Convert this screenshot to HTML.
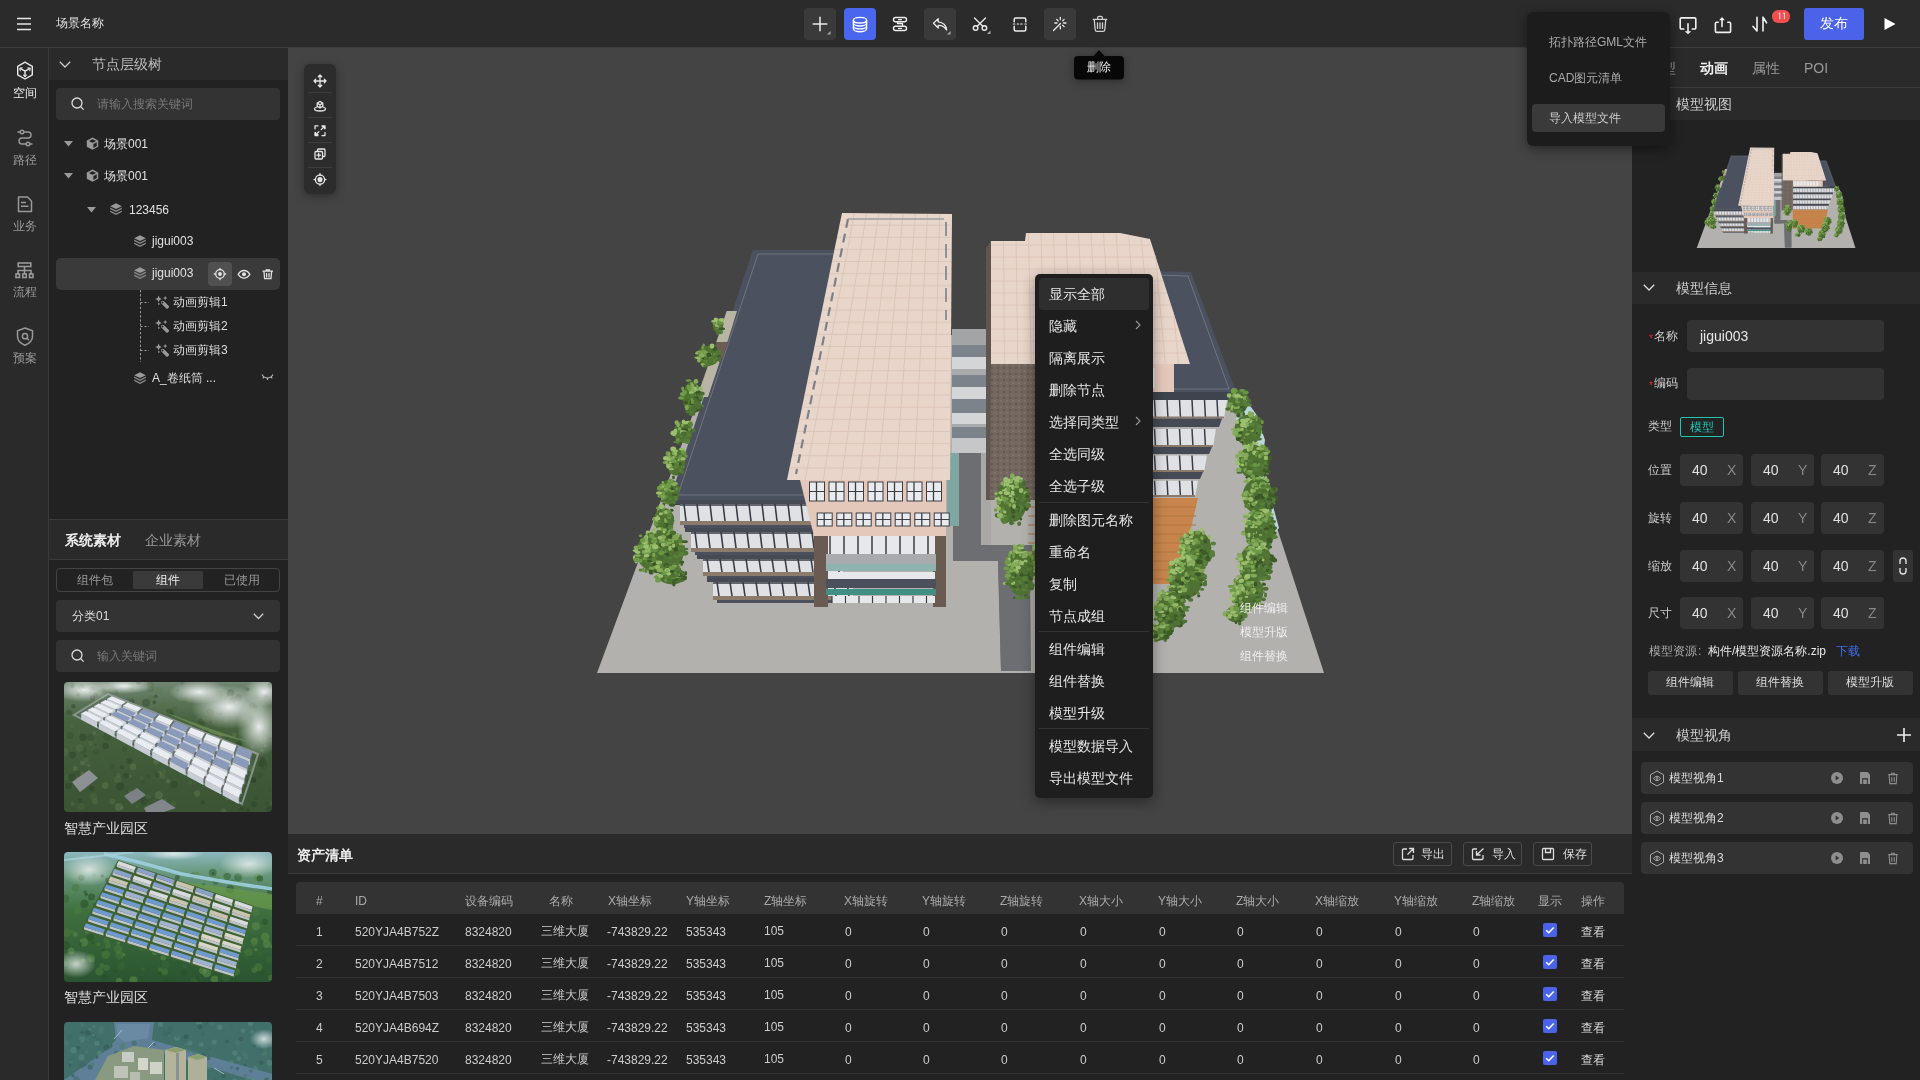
<!DOCTYPE html>
<html><head><meta charset="utf-8">
<style>
*{box-sizing:border-box;margin:0;padding:0}
html,body{width:1920px;height:1080px;overflow:hidden;background:#222;font-family:"Liberation Sans",sans-serif;color:#ddd}
.a{position:absolute}
svg{display:block}
#top{left:0;top:0;width:1920px;height:48px;background:#2b2b2b;border-bottom:1px solid #3d3d3d}
#side{left:0;top:48px;width:49px;height:1032px;background:#2a2a2a;border-right:1px solid #3a3a3a}
#tree{left:49px;top:48px;width:239px;height:1032px;background:#222}
#vp{left:288px;top:48px;width:1344px;height:785px;background:#444}
#right{left:1632px;top:48px;width:288px;height:1032px;background:#222}
#bottom{left:288px;top:833px;width:1344px;height:247px;background:#222}
.tb{top:8px;width:32px;height:32px;border-radius:4px}
.t{position:absolute;white-space:nowrap;line-height:1}
</style></head><body><div id="root" style="position:absolute;left:0;top:0;width:1920px;height:1080px;will-change:transform">
<div id="top" class="a">
<svg class="a" style="left:16px;top:16px" width="16" height="16" viewBox="0 0 16 16"><path d="M1 2.5h14M1 8h14M1 13.5h14" stroke="#e6e6e6" stroke-width="1.6"/></svg>
<div class="t" style="left:56px;top:17px;font-size:12px;color:#e0e0e0">场景名称</div>
<div class="a tb" style="left:804px;background:#3a3a3a"></div>
<div class="a tb" style="left:844px;background:#4a66ee"></div>
<div class="a tb" style="left:924px;background:#3a3a3a"></div>
<div class="a tb" style="left:1044px;background:#3a3a3a"></div>
<svg class="a" style="left:804px;top:8px" width="320" height="32" viewBox="0 0 320 32">
 <g fill="none" stroke="#ececec" stroke-width="1.5" stroke-linecap="round" stroke-linejoin="round">
  <path d="M16 9.2v13.6M9.2 16h13.6"/>
  <g stroke="#fff" stroke-width="1.4"><ellipse cx="56" cy="12.2" rx="6.6" ry="2.8"/><path d="M49.4 12.2v8.6c0 1.6 3 2.9 6.6 2.9s6.6-1.3 6.6-2.9v-8.6M49.4 15.1c0 1.6 3 2.9 6.6 2.9s6.6-1.3 6.6-2.9M49.4 18c0 1.6 3 2.9 6.6 2.9s6.6-1.3 6.6-2.9"/></g>
  <rect x="89.5" y="9.5" width="13" height="4.3" rx="2" stroke-width="1.4"/><rect x="89.5" y="18.2" width="13" height="4.3" rx="2" stroke-width="1.4"/><path d="M94.5 11.6h3M94.5 20.4h3" stroke-width="1.2"/><path d="M93.5 13.8v1.7h5v2.7" stroke-width="1.3"/>
  <path d="M134.2 10.6l-4.7 4.7 4.7 4.7v-2.6c3.2-.3 6 1 8.4 4.6-.4-4.6-3.3-7.6-8.4-8.2z" stroke-width="1.3"/>
  <circle cx="171.6" cy="20" r="2.3" stroke-width="1.4"/><circle cx="180.4" cy="20" r="2.3" stroke-width="1.4"/><path d="M173.2 18.3L181.5 10M178.8 18.3L170.5 10" stroke-width="1.3"/>
  <path d="M210.2 13.8v-2.3a1.5 1.5 0 0 1 1.5-1.5h8.6a1.5 1.5 0 0 1 1.5 1.5v2.3M210.2 18.2v3.3a1.5 1.5 0 0 0 1.5 1.5h8.6a1.5 1.5 0 0 0 1.5-1.5v-3.3" stroke-width="1.5"/>
  <path d="M209.3 16h1.6M213.2 16h1.5M216.7 16h1.5M220.8 16h1.6" stroke-width="1.2"/>
  <path d="M249.5 22.5l7-7M256.3 9.3v2.3M256.3 18.4v2.4M250.8 15h2.2M259.5 15h2.4M252.7 11.4l1.5 1.5M260.1 11.4l-1.5 1.5M260.1 18.6l-1.5-1.5" stroke-width="1.3"/>
  <path d="M289.2 11.3h13.6M298.3 10.6v-1a1.3 1.3 0 0 0-1.3-1.3h-2a1.3 1.3 0 0 0-1.3 1.3v1M290.3 12.2l.9 9.6a1.8 1.8 0 0 0 1.8 1.6h6a1.8 1.8 0 0 0 1.8-1.6l.9-9.6M293.5 14.8v5.6M296 14.8v5.6M298.5 14.8v5.6" stroke="#cfcfcf" stroke-width="1.3"/>
 </g>
 <g fill="#aaa"><path d="M26.5 23v3.5H23z"/><path d="M146.5 23v3.5H143z"/><path d="M186.5 22.5V26H183z"/></g>
</svg>

<svg class="a" style="left:1676px;top:14px" width="120" height="24" viewBox="0 0 120 24">
 <g fill="none" stroke="#f0f0f0" stroke-width="1.6" stroke-linecap="round" stroke-linejoin="round">
  <path d="M7.8 15H5.4a1.2 1.2 0 0 1-1.2-1.2V5.1a1.2 1.2 0 0 1 1.2-1.2h13.2a1.2 1.2 0 0 1 1.2 1.2v8.7A1.2 1.2 0 0 1 18.6 15h-2.4M12 9.8v8.5"/>
  <path d="M42.2 8.3h-1.6a1.2 1.2 0 0 0-1.2 1.2v7.7a1.2 1.2 0 0 0 1.2 1.2h12.8a1.2 1.2 0 0 0 1.2-1.2V9.5a1.2 1.2 0 0 0-1.2-1.2h-1.6M46 12.6V5.2"/>
  <path d="M81 3.4v13.6l-4-4.6M87 3.2v13.8M87 3.2l3.6 5.6"/>
 </g>
 <path d="M8.7 17.2h6.6L12 20.3z" fill="#f0f0f0"/>
 <path d="M43.2 6.2L46 2.9l2.8 3.3z" fill="#f0f0f0"/>
</svg>
<div class="a" style="left:1772px;top:10px;width:18px;height:12.5px;border-radius:6.25px;background:#f04f4f"></div>
<svg class="a" style="left:1772px;top:10px" width="18" height="13" viewBox="0 0 18 13"><path d="M6.6 3.5l1.2-.6v6.3M11.2 3.5l1.2-.6v6.3" fill="none" stroke="#fff" stroke-width="0.9" opacity="0.9"/></svg>
<div class="a" style="left:1804px;top:8px;width:60px;height:32px;border-radius:3px;background:#4a63e8"></div>
<div class="t" style="left:1820px;top:16px;font-size:14px;color:#fff">发布</div>
<svg class="a" style="left:1882px;top:16px" width="16" height="16" viewBox="0 0 16 16"><path d="M2.5 2l11 6-11 6z" fill="#fff"/></svg>
</div>
<div id="side" class="a">
<svg class="a" style="left:16px;top:13px" width="18" height="20" viewBox="0 0 18 20"><g fill="none" stroke="#e8e8e8" stroke-width="1.4" stroke-linejoin="round" stroke-linecap="round"><path d="M9 1.2l7.3 4.2v8.4L9 18 1.7 13.8V5.4z"/><path d="M9 10.2L4.3 7.5M9 10.2l4.7-2.7M9 10.2v5.2"/><path d="M4.2 9.6L3.9 7.3l2.2-.4M13.8 9.6l.3-2.3-2.2-.4M7.6 14.2L9 15.6l1.4-1.4" stroke-width="1.1"/></g></svg>
<div class="t" style="left:13px;top:39px;font-size:12px;color:#eee">空间</div>
<svg class="a" style="left:16px;top:81px" width="18" height="18" viewBox="0 0 18 18"><g fill="none" stroke="#999" stroke-width="1.4"><circle cx="6" cy="3" r="1.8"/><circle cx="12" cy="15" r="1.8"/><path d="M1.5 3h2.7M7.8 3H12a3 3 0 0 1 0 6H6a3 3 0 0 0 0 6h4.2M13.8 15h2.7"/></g></svg>
<div class="t" style="left:13px;top:106px;font-size:12px;color:#999">路径</div>
<svg class="a" style="left:17px;top:148px" width="16" height="17" viewBox="0 0 16 17"><g fill="none" stroke="#999" stroke-width="1.5" stroke-linejoin="round"><path d="M1.5 1h9l4 4v10.5h-13z"/><path d="M4 6.6h5M4 10.3h7.5"/></g></svg>
<div class="t" style="left:13px;top:172px;font-size:12px;color:#999">业务</div>
<svg class="a" style="left:15px;top:214px" width="19" height="17" viewBox="0 0 19 17"><g fill="none" stroke="#999" stroke-width="1.6"><rect x="3.2" y="1" width="12.6" height="3.5"/><path d="M9.5 4.5v4M3 12V8.5h13V12M9.5 8.5V12"/><rect x="1" y="12" width="3.5" height="3.5"/><rect x="7.75" y="12" width="3.5" height="3.5"/><rect x="14.5" y="12" width="3.5" height="3.5"/></g></svg>
<div class="t" style="left:13px;top:238px;font-size:12px;color:#999">流程</div>
<svg class="a" style="left:16px;top:279px" width="18" height="19" viewBox="0 0 18 19"><g fill="none" stroke="#999" stroke-width="1.5"><path d="M9 1l7.5 2.8v5.5c0 4.5-3.2 7.3-7.5 9-4.3-1.7-7.5-4.5-7.5-9V3.8z"/><circle cx="9" cy="9.2" r="2.6"/><path d="M11 11.2l2 2"/></g></svg>
<div class="t" style="left:13px;top:304px;font-size:12px;color:#999">预案</div>
</div>
<div id="tree" class="a"><div class="a" style="left:0;top:0;width:239px;height:32px;background:#2a2a2a"></div>
<svg class="a" style="left:10px;top:13px" width="12" height="7" viewBox="0 0 12 7"><path d="M0.8 0.8L6 6l5.2-5.2" fill="none" stroke="#ccc" stroke-width="1.3"/></svg>
<div class="t" style="left:43px;top:9px;font-size:14px;color:#bbb">节点层级树</div>
<div class="a" style="left:7px;top:40px;width:224px;height:32px;background:#333;border-radius:4px"></div>
<svg class="a" style="left:22px;top:49px" width="14" height="14" viewBox="0 0 14 14"><circle cx="6" cy="6" r="5" fill="none" stroke="#ddd" stroke-width="1.3"/><path d="M9.6 9.6l3 3" stroke="#ddd" stroke-width="1.3"/></svg>
<div class="t" style="left:48px;top:50px;font-size:12px;color:#777">请输入搜索关键词</div>
<svg class="a" style="left:15px;top:93px" width="9" height="6" viewBox="0 0 9 6"><path d="M0 0h9L4.5 5.5z" fill="#9a9a9a"/></svg>
<svg class="a" style="left:37px;top:89px" width="13" height="13" viewBox="0 0 13 13"><path d="M6.5 0.5l5.7 3v6.2l-5.7 3-5.7-3V3.5z" fill="#9a9a9a"/><path d="M6.5 2.2l3.6 1.7-3.6 1.8-3.6-1.8z" fill="#222"/><path d="M7.4 7.1l3.4-1.8v3.7L7.4 10.9z" fill="#222"/></svg>
<div class="t" style="left:55px;top:90px;font-size:12px;color:#e0e0e0">场景001</div>
<svg class="a" style="left:15px;top:125px" width="9" height="6" viewBox="0 0 9 6"><path d="M0 0h9L4.5 5.5z" fill="#9a9a9a"/></svg>
<svg class="a" style="left:37px;top:121px" width="13" height="13" viewBox="0 0 13 13"><path d="M6.5 0.5l5.7 3v6.2l-5.7 3-5.7-3V3.5z" fill="#9a9a9a"/><path d="M6.5 2.2l3.6 1.7-3.6 1.8-3.6-1.8z" fill="#222"/><path d="M7.4 7.1l3.4-1.8v3.7L7.4 10.9z" fill="#222"/></svg>
<div class="t" style="left:55px;top:122px;font-size:12px;color:#e0e0e0">场景001</div>
<svg class="a" style="left:38px;top:159px" width="9" height="6" viewBox="0 0 9 6"><path d="M0 0h9L4.5 5.5z" fill="#9a9a9a"/></svg>
<svg class="a" style="left:61px;top:155px" width="12" height="12" viewBox="0 0 12 12"><path d="M6 0.3l5.8 2.9L6 6.1 0.2 3.2z" fill="#9a9a9a"/><path d="M0.2 4.6v1.5L6 9l5.8-2.9V4.6L6 7.5z" fill="#8a8a8a"/><path d="M0.2 7.5V9L6 11.9 11.8 9V7.5L6 10.4z" fill="#8a8a8a"/></svg>
<div class="t" style="left:80px;top:156px;font-size:12px;color:#e0e0e0">123456</div>
<svg class="a" style="left:85px;top:187px" width="12" height="12" viewBox="0 0 12 12"><path d="M6 0.3l5.8 2.9L6 6.1 0.2 3.2z" fill="#9a9a9a"/><path d="M0.2 4.6v1.5L6 9l5.8-2.9V4.6L6 7.5z" fill="#8a8a8a"/><path d="M0.2 7.5V9L6 11.9 11.8 9V7.5L6 10.4z" fill="#8a8a8a"/></svg>
<div class="t" style="left:103px;top:187px;font-size:12px;color:#e0e0e0">jigui003</div>
<div class="a" style="left:7px;top:210px;width:224px;height:32px;background:#3a3a3a;border-radius:5px"></div>
<div class="a" style="left:159px;top:214px;width:24px;height:24px;background:#505050;border-radius:4px"></div>
<svg class="a" style="left:85px;top:219px" width="12" height="12" viewBox="0 0 12 12"><path d="M6 0.3l5.8 2.9L6 6.1 0.2 3.2z" fill="#9a9a9a"/><path d="M0.2 4.6v1.5L6 9l5.8-2.9V4.6L6 7.5z" fill="#8a8a8a"/><path d="M0.2 7.5V9L6 11.9 11.8 9V7.5L6 10.4z" fill="#8a8a8a"/></svg>
<div class="t" style="left:103px;top:219px;font-size:12px;color:#e0e0e0">jigui003</div>
<svg class="a" style="left:164px;top:218px" width="80" height="16" viewBox="0 0 80 16"><g fill="none" stroke="#e0e0e0" stroke-width="1.3" stroke-linecap="round"><circle cx="7" cy="8" r="4.3"/><path d="M7 3.7V2.3M11.3 8h1.4M7 12.3v1.4M2.7 8H1.3"/><path d="M25.2 8.3c1.6-2.6 3.5-3.8 5.8-3.8s4.2 1.2 5.8 3.8c-1.6 2.6-3.5 3.8-5.8 3.8s-4.2-1.2-5.8-3.8z"/><path d="M50 5.2h9.5M53.2 5V3.8h3.2V5M51 5.5l.6 7.2h6.4l.6-7.2M53.6 7.5v3.5M56 7.5v3.5"/></g><circle cx="7" cy="8" r="1.9" fill="#e8e8e8"/><circle cx="31" cy="8.3" r="2" fill="#e0e0e0"/></svg>
<svg class="a" style="left:91px;top:242px" width="10" height="72" viewBox="0 0 10 72"><path d="M0.5 0V72" stroke="#9a9a9a" stroke-width="1" stroke-dasharray="2.3 1.9"/><path d="M0.5 12.5H9M0.5 36.5H9M0.5 60.5H9" stroke="#9a9a9a" stroke-width="1" stroke-dasharray="2 2"/></svg>



<svg class="a" style="left:106px;top:247px" width="15" height="15" viewBox="0 0 15 15"><g fill="#9a9a9a"><path d="M3.6 0.4l1 2.5 2.5 1-2.5 1-1 2.5-1-2.5-2.5-1 2.5-1z"/><path d="M10.2 0.8l.65 1.6 1.6.65-1.6.65-.65 1.6-.65-1.6-1.6-.65 1.6-.65z"/><rect x="3" y="8.2" width="1.5" height="1.5"/><path d="M6.2 6.6a2.1 2.1 0 0 1 3-.1l4.6 4.6a1 1 0 0 1 0 1.4l-1 1a1 1 0 0 1-1.4 0L6.8 8.9a1.6 1.6 0 0 1-.6-2.3z"/></g><circle cx="7.5" cy="7.5" r="0.9" fill="#222"/></svg>
<div class="t" style="left:124px;top:248px;font-size:12px;color:#ddd">动画剪辑1</div>
<svg class="a" style="left:106px;top:271px" width="15" height="15" viewBox="0 0 15 15"><g fill="#9a9a9a"><path d="M3.6 0.4l1 2.5 2.5 1-2.5 1-1 2.5-1-2.5-2.5-1 2.5-1z"/><path d="M10.2 0.8l.65 1.6 1.6.65-1.6.65-.65 1.6-.65-1.6-1.6-.65 1.6-.65z"/><rect x="3" y="8.2" width="1.5" height="1.5"/><path d="M6.2 6.6a2.1 2.1 0 0 1 3-.1l4.6 4.6a1 1 0 0 1 0 1.4l-1 1a1 1 0 0 1-1.4 0L6.8 8.9a1.6 1.6 0 0 1-.6-2.3z"/></g><circle cx="7.5" cy="7.5" r="0.9" fill="#222"/></svg>
<div class="t" style="left:124px;top:272px;font-size:12px;color:#ddd">动画剪辑2</div>
<svg class="a" style="left:106px;top:295px" width="15" height="15" viewBox="0 0 15 15"><g fill="#9a9a9a"><path d="M3.6 0.4l1 2.5 2.5 1-2.5 1-1 2.5-1-2.5-2.5-1 2.5-1z"/><path d="M10.2 0.8l.65 1.6 1.6.65-1.6.65-.65 1.6-.65-1.6-1.6-.65 1.6-.65z"/><rect x="3" y="8.2" width="1.5" height="1.5"/><path d="M6.2 6.6a2.1 2.1 0 0 1 3-.1l4.6 4.6a1 1 0 0 1 0 1.4l-1 1a1 1 0 0 1-1.4 0L6.8 8.9a1.6 1.6 0 0 1-.6-2.3z"/></g><circle cx="7.5" cy="7.5" r="0.9" fill="#222"/></svg>
<div class="t" style="left:124px;top:296px;font-size:12px;color:#ddd">动画剪辑3</div>
<svg class="a" style="left:85px;top:324px" width="12" height="12" viewBox="0 0 12 12"><path d="M6 0.3l5.8 2.9L6 6.1 0.2 3.2z" fill="#9a9a9a"/><path d="M0.2 4.6v1.5L6 9l5.8-2.9V4.6L6 7.5z" fill="#8a8a8a"/><path d="M0.2 7.5V9L6 11.9 11.8 9V7.5L6 10.4z" fill="#8a8a8a"/></svg>
<div class="t" style="left:103px;top:324px;font-size:12px;color:#ddd">A_卷纸筒 ...</div>
<svg class="a" style="left:212px;top:325px" width="13" height="8" viewBox="0 0 13 8"><g fill="none" stroke="#bbb" stroke-width="1.1"><path d="M1 1.5c1.5 2.5 3.3 3.5 5.5 3.5s4-1 5.5-3.5M3 3.8L1.8 5.5M6.5 5v2M10 3.8l1.2 1.7"/></g></svg>
<div class="a" style="left:0;top:471px;width:239px;height:1px;background:#3a3a3a"></div>
<div class="a" style="left:0;top:472px;width:239px;height:39px;background:#2a2a2a"></div>
<div class="t" style="left:16px;top:485px;font-size:14px;color:#eeeeee;font-weight:bold">系统素材</div>
<div class="t" style="left:96px;top:485px;font-size:14px;color:#999">企业素材</div>
<div class="a" style="left:0;top:511px;width:239px;height:1px;background:#3a3a3a"></div>
<div class="a" style="left:7px;top:520px;width:224px;height:24px;border:1px solid #444;border-radius:4px"></div>
<div class="a" style="left:84px;top:523px;width:70px;height:18px;background:#3a3a3a;border-radius:2px"></div>
<div class="t" style="left:28px;top:526px;font-size:12px;color:#999">组件包</div>
<div class="t" style="left:107px;top:526px;font-size:12px;color:#eee">组件</div>
<div class="t" style="left:175px;top:526px;font-size:12px;color:#999">已使用</div>
<div class="a" style="left:7px;top:552px;width:224px;height:32px;background:#333;border-radius:4px"></div>
<div class="t" style="left:23px;top:562px;font-size:12px;color:#ddd">分类01</div>
<svg class="a" style="left:204px;top:565px" width="11" height="7" viewBox="0 0 11 7"><path d="M0.8 0.8L5.5 5.5l4.7-4.7" fill="none" stroke="#ccc" stroke-width="1.3"/></svg>
<div class="a" style="left:7px;top:592px;width:224px;height:32px;background:#333;border-radius:4px"></div>
<svg class="a" style="left:22px;top:601px" width="14" height="14" viewBox="0 0 14 14"><circle cx="6" cy="6" r="5" fill="none" stroke="#ddd" stroke-width="1.3"/><path d="M9.6 9.6l3 3" stroke="#ddd" stroke-width="1.3"/></svg>
<div class="t" style="left:48px;top:602px;font-size:12px;color:#777">输入关键词</div>
<div class="a img0" style="left:15px;top:634px;width:208px;height:130px;border-radius:4px;overflow:hidden"><svg width="208" height="130" viewBox="0 0 208 130"><defs><radialGradient id="cl1" cx="0.5" cy="0.5" r="0.5"><stop offset="0" stop-color="#f2f4f5" stop-opacity="0.95"/><stop offset="1" stop-color="#e8ecee" stop-opacity="0"/></radialGradient><linearGradient id="g1" x1="0" y1="0" x2="0" y2="1"><stop offset="0" stop-color="#6f8672"/><stop offset="0.3" stop-color="#46623e"/><stop offset="1" stop-color="#3a5434"/></linearGradient></defs><rect width="208" height="130" fill="url(#g1)"/><circle cx="67.4" cy="19.6" r="3.1" fill="#2c4228" opacity="0.5"/><circle cx="170.8" cy="12.2" r="3.0" fill="#5f7a50" opacity="0.5"/><circle cx="44.7" cy="11.2" r="2.5" fill="#4a6640" opacity="0.5"/><circle cx="18.9" cy="55.2" r="3.6" fill="#2c4228" opacity="0.5"/><circle cx="197.1" cy="82.0" r="3.0" fill="#2c4228" opacity="0.5"/><circle cx="120.0" cy="51.6" r="3.9" fill="#2c4228" opacity="0.5"/><circle cx="115.8" cy="17.3" r="2.5" fill="#5f7a50" opacity="0.5"/><circle cx="24.5" cy="40.1" r="3.5" fill="#4a6640" opacity="0.5"/><circle cx="21.4" cy="74.3" r="2.0" fill="#2c4228" opacity="0.5"/><circle cx="113.9" cy="8.2" r="1.6" fill="#4a6640" opacity="0.5"/><circle cx="103.3" cy="69.1" r="3.4" fill="#34502e" opacity="0.5"/><circle cx="121.8" cy="58.9" r="2.2" fill="#4a6640" opacity="0.5"/><circle cx="145.4" cy="31.7" r="2.9" fill="#5f7a50" opacity="0.5"/><circle cx="103.0" cy="44.7" r="2.6" fill="#5f7a50" opacity="0.5"/><circle cx="203.9" cy="15.3" r="2.5" fill="#55704a" opacity="0.5"/><circle cx="31.6" cy="63.6" r="1.6" fill="#2c4228" opacity="0.5"/><circle cx="159.0" cy="74.5" r="3.7" fill="#55704a" opacity="0.5"/><circle cx="70.7" cy="45.5" r="2.7" fill="#34502e" opacity="0.5"/><circle cx="14.3" cy="12.2" r="2.2" fill="#2c4228" opacity="0.5"/><circle cx="12.6" cy="91.2" r="3.1" fill="#34502e" opacity="0.5"/><circle cx="59.2" cy="50.2" r="3.2" fill="#2c4228" opacity="0.5"/><circle cx="195.7" cy="46.2" r="3.0" fill="#34502e" opacity="0.5"/><circle cx="12.3" cy="99.9" r="1.8" fill="#4a6640" opacity="0.5"/><circle cx="82.8" cy="119.2" r="2.7" fill="#4a6640" opacity="0.5"/><circle cx="93.4" cy="71.4" r="3.7" fill="#34502e" opacity="0.5"/><circle cx="179.7" cy="36.2" r="2.5" fill="#55704a" opacity="0.5"/><circle cx="142.0" cy="49.5" r="2.1" fill="#2c4228" opacity="0.5"/><circle cx="36.7" cy="30.2" r="2.1" fill="#34502e" opacity="0.5"/><circle cx="172.9" cy="23.7" r="2.2" fill="#4a6640" opacity="0.5"/><circle cx="87.1" cy="48.0" r="2.9" fill="#4a6640" opacity="0.5"/><circle cx="143.6" cy="67.0" r="3.0" fill="#2c4228" opacity="0.5"/><circle cx="95.0" cy="113.2" r="3.9" fill="#5f7a50" opacity="0.5"/><circle cx="81.6" cy="51.9" r="1.8" fill="#34502e" opacity="0.5"/><circle cx="12.9" cy="8.8" r="2.0" fill="#4a6640" opacity="0.5"/><circle cx="22.9" cy="78.1" r="1.8" fill="#5f7a50" opacity="0.5"/><circle cx="31.5" cy="13.2" r="2.4" fill="#2c4228" opacity="0.5"/><circle cx="14.6" cy="27.0" r="2.4" fill="#55704a" opacity="0.5"/><circle cx="198.7" cy="78.3" r="2.7" fill="#2c4228" opacity="0.5"/><circle cx="176.6" cy="129.1" r="2.7" fill="#34502e" opacity="0.5"/><circle cx="64.9" cy="18.7" r="3.4" fill="#55704a" opacity="0.5"/><circle cx="99.6" cy="90.0" r="2.8" fill="#4a6640" opacity="0.5"/><circle cx="197.8" cy="68.7" r="1.9" fill="#5f7a50" opacity="0.5"/><circle cx="190.1" cy="98.6" r="2.2" fill="#2c4228" opacity="0.5"/><circle cx="144.8" cy="33.9" r="2.4" fill="#4a6640" opacity="0.5"/><circle cx="74.0" cy="29.0" r="2.9" fill="#5f7a50" opacity="0.5"/><circle cx="68.6" cy="29.0" r="3.5" fill="#4a6640" opacity="0.5"/><circle cx="167.7" cy="106.4" r="3.3" fill="#4a6640" opacity="0.5"/><circle cx="41.6" cy="64.1" r="3.3" fill="#2c4228" opacity="0.5"/><circle cx="164.3" cy="61.4" r="2.0" fill="#5f7a50" opacity="0.5"/><circle cx="199.0" cy="58.1" r="3.8" fill="#55704a" opacity="0.5"/><circle cx="198.6" cy="47.4" r="2.1" fill="#4a6640" opacity="0.5"/><circle cx="97.8" cy="43.9" r="2.7" fill="#5f7a50" opacity="0.5"/><circle cx="174.8" cy="62.3" r="3.1" fill="#2c4228" opacity="0.5"/><circle cx="173.6" cy="15.6" r="2.5" fill="#4a6640" opacity="0.5"/><circle cx="99.4" cy="23.2" r="3.5" fill="#55704a" opacity="0.5"/><circle cx="18.0" cy="123.0" r="3.3" fill="#34502e" opacity="0.5"/><circle cx="83.5" cy="123.1" r="3.3" fill="#4a6640" opacity="0.5"/><circle cx="206.6" cy="3.6" r="3.0" fill="#34502e" opacity="0.5"/><circle cx="167.8" cy="19.0" r="3.6" fill="#34502e" opacity="0.5"/><circle cx="136.7" cy="45.6" r="2.9" fill="#4a6640" opacity="0.5"/><circle cx="4.5" cy="103.9" r="3.3" fill="#2c4228" opacity="0.5"/><circle cx="109.5" cy="121.4" r="2.6" fill="#4a6640" opacity="0.5"/><circle cx="171.8" cy="27.4" r="2.1" fill="#55704a" opacity="0.5"/><circle cx="104.2" cy="99.3" r="2.3" fill="#5f7a50" opacity="0.5"/><circle cx="87.2" cy="17.0" r="3.8" fill="#55704a" opacity="0.5"/><circle cx="186.7" cy="86.1" r="3.5" fill="#5f7a50" opacity="0.5"/><circle cx="87.5" cy="119.3" r="2.8" fill="#5f7a50" opacity="0.5"/><circle cx="31.6" cy="66.4" r="3.7" fill="#4a6640" opacity="0.5"/><circle cx="126.6" cy="100.9" r="1.9" fill="#4a6640" opacity="0.5"/><circle cx="98.5" cy="94.3" r="2.9" fill="#55704a" opacity="0.5"/><circle cx="141.9" cy="69.0" r="2.7" fill="#2c4228" opacity="0.5"/><circle cx="183.7" cy="7.4" r="2.0" fill="#2c4228" opacity="0.5"/><circle cx="160.6" cy="66.0" r="2.9" fill="#2c4228" opacity="0.5"/><circle cx="92.2" cy="79.6" r="2.8" fill="#5f7a50" opacity="0.5"/><circle cx="41.5" cy="36.0" r="2.8" fill="#34502e" opacity="0.5"/><circle cx="105.6" cy="32.2" r="2.8" fill="#55704a" opacity="0.5"/><circle cx="191.9" cy="116.1" r="2.0" fill="#34502e" opacity="0.5"/><circle cx="28.5" cy="15.8" r="2.6" fill="#2c4228" opacity="0.5"/><circle cx="139.6" cy="55.7" r="2.0" fill="#55704a" opacity="0.5"/><circle cx="163.1" cy="116.6" r="1.9" fill="#55704a" opacity="0.5"/><circle cx="29.7" cy="114.8" r="3.9" fill="#4a6640" opacity="0.5"/><circle cx="155.3" cy="12.2" r="3.7" fill="#4a6640" opacity="0.5"/><circle cx="205.9" cy="108.2" r="1.9" fill="#34502e" opacity="0.5"/><circle cx="206.8" cy="52.5" r="2.6" fill="#55704a" opacity="0.5"/><circle cx="66.3" cy="93.9" r="1.5" fill="#5f7a50" opacity="0.5"/><circle cx="95.4" cy="91.4" r="2.5" fill="#5f7a50" opacity="0.5"/><circle cx="129.8" cy="66.6" r="1.7" fill="#4a6640" opacity="0.5"/><circle cx="202.1" cy="13.6" r="2.2" fill="#2c4228" opacity="0.5"/><circle cx="188.4" cy="23.6" r="3.4" fill="#34502e" opacity="0.5"/><circle cx="176.7" cy="87.9" r="3.9" fill="#34502e" opacity="0.5"/><circle cx="31.1" cy="119.5" r="2.9" fill="#55704a" opacity="0.5"/><circle cx="18.6" cy="7.5" r="3.2" fill="#34502e" opacity="0.5"/><circle cx="186.2" cy="35.0" r="1.5" fill="#2c4228" opacity="0.5"/><circle cx="166.7" cy="10.9" r="3.6" fill="#2c4228" opacity="0.5"/><circle cx="55.0" cy="15.8" r="1.5" fill="#5f7a50" opacity="0.5"/><circle cx="86.9" cy="119.0" r="3.1" fill="#2c4228" opacity="0.5"/><circle cx="109.6" cy="31.0" r="1.8" fill="#4a6640" opacity="0.5"/><circle cx="54.5" cy="23.5" r="3.8" fill="#55704a" opacity="0.5"/><circle cx="110.5" cy="26.8" r="2.6" fill="#4a6640" opacity="0.5"/><circle cx="56.3" cy="104.5" r="4.0" fill="#2c4228" opacity="0.5"/><circle cx="3.2" cy="95.3" r="2.9" fill="#4a6640" opacity="0.5"/><circle cx="107.0" cy="31.9" r="2.6" fill="#34502e" opacity="0.5"/><circle cx="136.6" cy="71.0" r="3.7" fill="#5f7a50" opacity="0.5"/><circle cx="64.0" cy="28.0" r="2.1" fill="#4a6640" opacity="0.5"/><circle cx="173.1" cy="91.9" r="3.1" fill="#34502e" opacity="0.5"/><circle cx="205.8" cy="127.6" r="3.6" fill="#2c4228" opacity="0.5"/><circle cx="14.7" cy="96.3" r="2.1" fill="#4a6640" opacity="0.5"/><circle cx="11.5" cy="86.5" r="2.5" fill="#5f7a50" opacity="0.5"/><circle cx="139.5" cy="36.7" r="2.1" fill="#55704a" opacity="0.5"/><circle cx="9.4" cy="24.1" r="2.2" fill="#2c4228" opacity="0.5"/><circle cx="54.8" cy="125.0" r="3.9" fill="#5f7a50" opacity="0.5"/><circle cx="67.3" cy="4.5" r="3.7" fill="#4a6640" opacity="0.5"/><circle cx="74.2" cy="0.1" r="2.5" fill="#34502e" opacity="0.5"/><circle cx="58.0" cy="85.3" r="2.1" fill="#2c4228" opacity="0.5"/><circle cx="18.9" cy="106.2" r="1.9" fill="#5f7a50" opacity="0.5"/><circle cx="8.7" cy="2.9" r="2.3" fill="#4a6640" opacity="0.5"/><circle cx="17.6" cy="124.5" r="3.6" fill="#4a6640" opacity="0.5"/><circle cx="136.8" cy="93.1" r="3.7" fill="#34502e" opacity="0.5"/><circle cx="159.0" cy="93.7" r="2.7" fill="#55704a" opacity="0.5"/><circle cx="150.6" cy="83.6" r="1.6" fill="#5f7a50" opacity="0.5"/><circle cx="130.5" cy="95.4" r="3.5" fill="#4a6640" opacity="0.5"/><circle cx="189.3" cy="97.9" r="2.9" fill="#2c4228" opacity="0.5"/><circle cx="171.9" cy="75.9" r="3.7" fill="#4a6640" opacity="0.5"/><circle cx="17.7" cy="5.4" r="3.1" fill="#2c4228" opacity="0.5"/><circle cx="78.3" cy="58.7" r="1.6" fill="#2c4228" opacity="0.5"/><circle cx="130.3" cy="88.5" r="2.7" fill="#2c4228" opacity="0.5"/><circle cx="95.0" cy="9.1" r="3.8" fill="#5f7a50" opacity="0.5"/><circle cx="19.1" cy="68.4" r="3.4" fill="#34502e" opacity="0.5"/><circle cx="52.5" cy="9.7" r="2.2" fill="#4a6640" opacity="0.5"/><circle cx="48.0" cy="84.5" r="2.7" fill="#34502e" opacity="0.5"/><circle cx="16.0" cy="118.4" r="2.2" fill="#2c4228" opacity="0.5"/><circle cx="128.3" cy="83.6" r="1.7" fill="#4a6640" opacity="0.5"/><circle cx="69.0" cy="84.7" r="3.2" fill="#5f7a50" opacity="0.5"/><circle cx="118.1" cy="1.6" r="1.7" fill="#55704a" opacity="0.5"/><circle cx="202.3" cy="12.9" r="2.0" fill="#34502e" opacity="0.5"/><circle cx="60.5" cy="67.1" r="2.7" fill="#34502e" opacity="0.5"/><circle cx="159.6" cy="129.1" r="2.9" fill="#55704a" opacity="0.5"/><circle cx="203.5" cy="121.7" r="1.5" fill="#34502e" opacity="0.5"/><circle cx="15.9" cy="65.9" r="4.0" fill="#55704a" opacity="0.5"/><circle cx="80.5" cy="119.2" r="3.8" fill="#2c4228" opacity="0.5"/><circle cx="120.9" cy="18.4" r="2.8" fill="#55704a" opacity="0.5"/><circle cx="27.6" cy="106.6" r="2.8" fill="#2c4228" opacity="0.5"/><circle cx="146.3" cy="30.1" r="3.7" fill="#34502e" opacity="0.5"/><circle cx="82.0" cy="20.7" r="3.9" fill="#34502e" opacity="0.5"/><circle cx="84.3" cy="94.5" r="2.5" fill="#34502e" opacity="0.5"/><circle cx="65.7" cy="109.2" r="1.5" fill="#55704a" opacity="0.5"/><circle cx="174.5" cy="15.6" r="3.8" fill="#2c4228" opacity="0.5"/><circle cx="187.5" cy="37.7" r="2.4" fill="#34502e" opacity="0.5"/><circle cx="81.2" cy="113.1" r="1.7" fill="#34502e" opacity="0.5"/><circle cx="157.2" cy="111.1" r="2.2" fill="#2c4228" opacity="0.5"/><circle cx="173.6" cy="37.1" r="3.8" fill="#4a6640" opacity="0.5"/><circle cx="202.0" cy="56.7" r="2.3" fill="#55704a" opacity="0.5"/><circle cx="163.3" cy="55.6" r="1.6" fill="#34502e" opacity="0.5"/><circle cx="190.0" cy="122.3" r="2.9" fill="#2c4228" opacity="0.5"/><circle cx="10.3" cy="95.2" r="2.6" fill="#4a6640" opacity="0.5"/><circle cx="134.1" cy="37.2" r="1.6" fill="#5f7a50" opacity="0.5"/><circle cx="26.5" cy="61.4" r="2.4" fill="#55704a" opacity="0.5"/><circle cx="53.2" cy="96.0" r="3.1" fill="#34502e" opacity="0.5"/><circle cx="136.4" cy="39.1" r="2.9" fill="#34502e" opacity="0.5"/><circle cx="24.9" cy="83.6" r="1.7" fill="#5f7a50" opacity="0.5"/><circle cx="188.4" cy="64.6" r="2.1" fill="#55704a" opacity="0.5"/><circle cx="207.3" cy="58.5" r="1.8" fill="#4a6640" opacity="0.5"/><circle cx="50.8" cy="22.7" r="2.9" fill="#55704a" opacity="0.5"/><circle cx="49.7" cy="33.6" r="2.9" fill="#2c4228" opacity="0.5"/><circle cx="155.9" cy="53.7" r="2.5" fill="#5f7a50" opacity="0.5"/><circle cx="43.7" cy="35.1" r="3.4" fill="#34502e" opacity="0.5"/><circle cx="57.7" cy="125.8" r="1.8" fill="#5f7a50" opacity="0.5"/><circle cx="110.1" cy="102.7" r="3.6" fill="#2c4228" opacity="0.5"/><circle cx="56.4" cy="32.3" r="2.5" fill="#34502e" opacity="0.5"/><circle cx="89.8" cy="40.6" r="3.5" fill="#2c4228" opacity="0.5"/><circle cx="26.5" cy="55.3" r="3.4" fill="#34502e" opacity="0.5"/><circle cx="201.4" cy="63.7" r="1.7" fill="#5f7a50" opacity="0.5"/><circle cx="177.9" cy="126.4" r="2.1" fill="#2c4228" opacity="0.5"/><circle cx="46.6" cy="19.8" r="3.9" fill="#2c4228" opacity="0.5"/><circle cx="195.8" cy="93.8" r="3.1" fill="#34502e" opacity="0.5"/><circle cx="17.7" cy="101.0" r="1.5" fill="#4a6640" opacity="0.5"/><circle cx="48.4" cy="119.6" r="3.1" fill="#55704a" opacity="0.5"/><circle cx="200.2" cy="81.4" r="2.8" fill="#34502e" opacity="0.5"/><circle cx="145.3" cy="14.6" r="1.7" fill="#5f7a50" opacity="0.5"/><circle cx="196.3" cy="24.9" r="2.2" fill="#5f7a50" opacity="0.5"/><circle cx="0.2" cy="69.9" r="4.0" fill="#55704a" opacity="0.5"/><circle cx="199.5" cy="83.8" r="3.7" fill="#34502e" opacity="0.5"/><circle cx="109.5" cy="71.1" r="1.6" fill="#34502e" opacity="0.5"/><circle cx="146.6" cy="40.0" r="1.6" fill="#34502e" opacity="0.5"/><circle cx="184.0" cy="84.1" r="1.7" fill="#4a6640" opacity="0.5"/><circle cx="138.8" cy="120.3" r="2.1" fill="#2c4228" opacity="0.5"/><circle cx="144.7" cy="93.4" r="2.4" fill="#34502e" opacity="0.5"/><circle cx="41.2" cy="103.6" r="3.3" fill="#5f7a50" opacity="0.5"/><circle cx="14.0" cy="64.4" r="2.0" fill="#4a6640" opacity="0.5"/><circle cx="48.0" cy="28.8" r="3.4" fill="#55704a" opacity="0.5"/><circle cx="22.7" cy="81.1" r="3.0" fill="#4a6640" opacity="0.5"/><circle cx="100.9" cy="118.4" r="1.6" fill="#5f7a50" opacity="0.5"/><circle cx="30.4" cy="51.1" r="2.0" fill="#5f7a50" opacity="0.5"/><circle cx="29.5" cy="6.7" r="1.7" fill="#34502e" opacity="0.5"/><circle cx="93.5" cy="92.6" r="2.3" fill="#2c4228" opacity="0.5"/><circle cx="207.5" cy="121.1" r="2.3" fill="#4a6640" opacity="0.5"/><circle cx="135.7" cy="68.2" r="2.7" fill="#55704a" opacity="0.5"/><circle cx="138.2" cy="49.2" r="2.4" fill="#55704a" opacity="0.5"/><circle cx="92.0" cy="14.2" r="1.7" fill="#2c4228" opacity="0.5"/><circle cx="73.1" cy="124.2" r="1.8" fill="#4a6640" opacity="0.5"/><circle cx="79.1" cy="99.9" r="2.3" fill="#34502e" opacity="0.5"/><circle cx="18.3" cy="91.7" r="2.0" fill="#5f7a50" opacity="0.5"/><circle cx="191.3" cy="25.1" r="2.4" fill="#34502e" opacity="0.5"/><circle cx="6.3" cy="53.4" r="3.5" fill="#34502e" opacity="0.5"/><circle cx="8.5" cy="4.5" r="1.7" fill="#2c4228" opacity="0.5"/><circle cx="53.5" cy="97.1" r="3.7" fill="#55704a" opacity="0.5"/><circle cx="75.5" cy="43.5" r="3.9" fill="#2c4228" opacity="0.5"/><circle cx="54.5" cy="93.2" r="2.3" fill="#55704a" opacity="0.5"/><circle cx="61.9" cy="93.8" r="3.0" fill="#2c4228" opacity="0.5"/><circle cx="5.0" cy="30.4" r="2.7" fill="#34502e" opacity="0.5"/><circle cx="198.4" cy="50.2" r="2.1" fill="#34502e" opacity="0.5"/><circle cx="169.5" cy="17.3" r="2.7" fill="#2c4228" opacity="0.5"/><circle cx="166.9" cy="96.0" r="3.6" fill="#4a6640" opacity="0.5"/><circle cx="126.3" cy="42.6" r="2.3" fill="#55704a" opacity="0.5"/><circle cx="163.0" cy="77.4" r="2.8" fill="#34502e" opacity="0.5"/><circle cx="156.6" cy="32.1" r="1.7" fill="#2c4228" opacity="0.5"/><circle cx="100.2" cy="70.8" r="1.9" fill="#34502e" opacity="0.5"/><circle cx="183.8" cy="128.4" r="2.2" fill="#2c4228" opacity="0.5"/><circle cx="43.3" cy="54.7" r="4.0" fill="#34502e" opacity="0.5"/><circle cx="36.0" cy="17.3" r="2.7" fill="#4a6640" opacity="0.5"/><circle cx="155.6" cy="110.1" r="3.2" fill="#2c4228" opacity="0.5"/><circle cx="162.2" cy="38.2" r="2.2" fill="#55704a" opacity="0.5"/><circle cx="77.6" cy="95.9" r="2.0" fill="#4a6640" opacity="0.5"/><circle cx="38.6" cy="30.6" r="2.2" fill="#5f7a50" opacity="0.5"/><circle cx="39.2" cy="8.4" r="2.1" fill="#4a6640" opacity="0.5"/><circle cx="105.5" cy="30.1" r="3.5" fill="#34502e" opacity="0.5"/><circle cx="206.1" cy="13.3" r="2.7" fill="#4a6640" opacity="0.5"/><circle cx="174.8" cy="118.9" r="1.6" fill="#55704a" opacity="0.5"/><circle cx="48.4" cy="6.6" r="3.0" fill="#5f7a50" opacity="0.5"/><circle cx="40.4" cy="9.8" r="2.8" fill="#4a6640" opacity="0.5"/><circle cx="93.4" cy="33.8" r="3.4" fill="#2c4228" opacity="0.5"/><circle cx="22.0" cy="77.5" r="3.0" fill="#4a6640" opacity="0.5"/><circle cx="7.8" cy="44.2" r="1.6" fill="#55704a" opacity="0.5"/><circle cx="8.0" cy="95.2" r="3.8" fill="#2c4228" opacity="0.5"/><circle cx="170.3" cy="53.2" r="2.4" fill="#5f7a50" opacity="0.5"/><circle cx="64.9" cy="26.4" r="3.5" fill="#5f7a50" opacity="0.5"/><circle cx="100.6" cy="53.1" r="3.5" fill="#5f7a50" opacity="0.5"/><circle cx="32.1" cy="69.4" r="3.1" fill="#34502e" opacity="0.5"/><circle cx="144.6" cy="53.3" r="2.2" fill="#55704a" opacity="0.5"/><circle cx="86.9" cy="6.7" r="3.4" fill="#55704a" opacity="0.5"/><circle cx="86.1" cy="2.4" r="3.4" fill="#55704a" opacity="0.5"/><circle cx="134.1" cy="50.8" r="2.5" fill="#2c4228" opacity="0.5"/><circle cx="90.3" cy="20.4" r="1.8" fill="#2c4228" opacity="0.5"/><circle cx="84.5" cy="114.8" r="2.7" fill="#4a6640" opacity="0.5"/><circle cx="27.0" cy="6.7" r="1.9" fill="#34502e" opacity="0.5"/><circle cx="18.5" cy="80.9" r="2.4" fill="#5f7a50" opacity="0.5"/><circle cx="35.7" cy="45.2" r="1.9" fill="#4a6640" opacity="0.5"/><circle cx="192.5" cy="14.1" r="2.7" fill="#4a6640" opacity="0.5"/><circle cx="62.7" cy="108.8" r="1.6" fill="#34502e" opacity="0.5"/><circle cx="65.4" cy="79.0" r="3.1" fill="#2c4228" opacity="0.5"/><circle cx="188.1" cy="80.6" r="3.6" fill="#4a6640" opacity="0.5"/><circle cx="133.2" cy="111.4" r="3.1" fill="#5f7a50" opacity="0.5"/><circle cx="176.0" cy="107.8" r="2.0" fill="#4a6640" opacity="0.5"/><circle cx="8.7" cy="122.0" r="1.9" fill="#55704a" opacity="0.5"/><circle cx="25.6" cy="32.1" r="3.3" fill="#4a6640" opacity="0.5"/><circle cx="8.5" cy="73.1" r="3.4" fill="#2c4228" opacity="0.5"/><circle cx="138.9" cy="42.1" r="2.5" fill="#34502e" opacity="0.5"/><circle cx="114.4" cy="81.5" r="2.3" fill="#34502e" opacity="0.5"/><circle cx="64.1" cy="32.4" r="2.5" fill="#55704a" opacity="0.5"/><circle cx="92.9" cy="57.0" r="1.6" fill="#5f7a50" opacity="0.5"/><polygon points="95.0,28.0 150.0,48.0 185.0,60.0 150.0,52.0" fill="#7a9a5a" opacity="0.6"/><polygon points="44.0,12.0 194.0,72.0 178.0,122.0 10.0,33.0" fill="none" stroke="#9aa0a0" stroke-width="2" opacity="0.8"/><polygon points="47.0,14.0 189.0,70.0 175.0,119.0 14.6,32.0" fill="#6a746e"/><polygon points="43.0,17.1 57.4,23.1 57.4,29.1 43.0,23.1" fill="#c8ccd4"/><polygon points="47.9,14.3 61.9,19.9 57.4,23.1 43.0,17.1" fill="#e9ecf0"/><polygon points="36.6,20.7 51.3,27.3 51.3,33.3 36.6,26.7" fill="#c8ccd4"/><polygon points="41.4,18.0 55.8,24.1 51.3,27.3 36.6,20.7" fill="#e9ecf0"/><polygon points="30.1,24.3 45.2,31.6 45.2,37.6 30.1,30.3" fill="#c8ccd4"/><polygon points="34.9,21.6 49.7,28.4 45.2,31.6 30.1,24.3" fill="#e9ecf0"/><polygon points="23.6,28.0 39.1,35.8 39.1,41.8 23.6,34.0" fill="#c8ccd4"/><polygon points="28.5,25.2 43.6,32.6 39.1,35.8 23.6,28.0" fill="#e9ecf0"/><polygon points="17.2,31.6 33.0,40.1 33.0,46.1 17.2,37.6" fill="#c8ccd4"/><polygon points="22.0,28.9 37.6,36.9 33.0,40.1 17.2,31.6" fill="#e9ecf0"/><polygon points="59.1,23.8 73.4,29.8 73.4,35.8 59.1,29.8" fill="#c8ccd4"/><polygon points="63.6,20.6 77.7,26.1 73.4,29.8 59.1,23.8" fill="#e9ecf0"/><polygon points="53.0,28.1 67.8,34.8 67.8,40.8 53.0,34.1" fill="#c8ccd4"/><polygon points="57.6,24.9 72.0,31.0 67.8,34.8 53.0,28.1" fill="#8a9aba"/><polygon points="47.0,32.5 62.1,39.7 62.1,45.7 47.0,38.5" fill="#c8ccd4"/><polygon points="51.5,29.2 66.3,36.0 62.1,39.7 47.0,32.5" fill="#8a9aba"/><polygon points="40.9,36.8 56.4,44.6 56.4,50.6 40.9,42.8" fill="#c8ccd4"/><polygon points="45.5,33.5 60.7,40.9 56.4,44.6 40.9,36.8" fill="#e9ecf0"/><polygon points="34.9,41.1 50.7,49.6 50.7,55.6 34.9,47.1" fill="#c8ccd4"/><polygon points="39.4,37.9 55.0,45.9 50.7,49.6 34.9,41.1" fill="#e9ecf0"/><polygon points="75.2,30.5 89.5,36.6 89.5,42.6 75.2,36.5" fill="#c8ccd4"/><polygon points="79.4,26.8 93.5,32.3 89.5,36.6 75.2,30.5" fill="#8a9aba"/><polygon points="69.5,35.6 84.2,42.2 84.2,48.2 69.5,41.6" fill="#c8ccd4"/><polygon points="73.8,31.8 88.2,38.0 84.2,42.2 69.5,35.6" fill="#8a9aba"/><polygon points="63.9,40.6 79.0,47.8 79.0,53.8 63.9,46.6" fill="#c8ccd4"/><polygon points="68.1,36.8 82.9,43.6 79.0,47.8 63.9,40.6" fill="#8a9aba"/><polygon points="58.3,45.6 73.7,53.4 73.7,59.4 58.3,51.6" fill="#c8ccd4"/><polygon points="62.5,41.8 77.7,49.2 73.7,53.4 58.3,45.6" fill="#e9ecf0"/><polygon points="52.6,50.6 68.4,59.1 68.4,65.1 52.6,56.6" fill="#c8ccd4"/><polygon points="56.8,46.8 72.4,54.8 68.4,59.1 52.6,50.6" fill="#e9ecf0"/><polygon points="91.3,37.3 105.6,43.3 105.6,49.3 91.3,43.3" fill="#c8ccd4"/><polygon points="95.2,33.0 109.3,38.6 105.6,43.3 91.3,37.3" fill="#e9ecf0"/><polygon points="86.0,43.0 100.7,49.6 100.7,55.6 86.0,49.0" fill="#c8ccd4"/><polygon points="90.0,38.7 104.4,44.9 100.7,49.6 86.0,43.0" fill="#8a9aba"/><polygon points="80.8,48.7 95.9,55.9 95.9,61.9 80.8,54.7" fill="#c8ccd4"/><polygon points="84.7,44.4 99.5,51.2 95.9,55.9 80.8,48.7" fill="#8a9aba"/><polygon points="75.6,54.4 91.0,62.2 91.0,68.2 75.6,60.4" fill="#c8ccd4"/><polygon points="79.5,50.1 94.7,57.5 91.0,62.2 75.6,54.4" fill="#e9ecf0"/><polygon points="70.3,60.1 86.1,68.6 86.1,74.6 70.3,66.1" fill="#c8ccd4"/><polygon points="74.3,55.8 89.8,63.8 86.1,68.6 70.3,60.1" fill="#e9ecf0"/><polygon points="107.3,44.0 121.7,50.0 121.7,56.0 107.3,50.0" fill="#c8ccd4"/><polygon points="111.0,39.2 125.0,44.8 121.7,50.0 107.3,44.0" fill="#8a9aba"/><polygon points="102.5,50.4 117.2,57.0 117.2,63.0 102.5,56.4" fill="#c8ccd4"/><polygon points="106.1,45.6 120.6,51.8 117.2,57.0 102.5,50.4" fill="#8a9aba"/><polygon points="97.7,56.8 112.8,64.0 112.8,70.0 97.7,62.8" fill="#c8ccd4"/><polygon points="101.3,52.0 116.1,58.8 112.8,64.0 97.7,56.8" fill="#8a9aba"/><polygon points="92.9,63.2 108.3,71.1 108.3,77.1 92.9,69.2" fill="#c8ccd4"/><polygon points="96.5,58.4 111.7,65.8 108.3,71.1 92.9,63.2" fill="#8a9aba"/><polygon points="88.1,69.6 103.9,78.1 103.9,84.1 88.1,75.6" fill="#c8ccd4"/><polygon points="91.7,64.8 107.2,72.8 103.9,78.1 88.1,69.6" fill="#e9ecf0"/><polygon points="123.4,50.8 137.8,56.8 137.8,62.8 123.4,56.8" fill="#c8ccd4"/><polygon points="126.7,45.4 140.8,51.0 137.8,56.8 123.4,50.8" fill="#e9ecf0"/><polygon points="119.0,57.8 133.7,64.5 133.7,70.5 119.0,63.8" fill="#c8ccd4"/><polygon points="122.3,52.5 136.8,58.7 133.7,64.5 119.0,57.8" fill="#8a9aba"/><polygon points="114.6,64.9 129.7,72.2 129.7,78.2 114.6,70.9" fill="#c8ccd4"/><polygon points="117.9,59.6 132.7,66.4 129.7,72.2 114.6,64.9" fill="#8a9aba"/><polygon points="110.2,72.0 125.6,79.9 125.6,85.9 110.2,78.0" fill="#c8ccd4"/><polygon points="113.5,66.7 128.7,74.1 125.6,79.9 110.2,72.0" fill="#e9ecf0"/><polygon points="105.8,79.1 121.6,87.6 121.6,93.6 105.8,85.1" fill="#c8ccd4"/><polygon points="109.1,73.8 124.6,81.8 121.6,87.6 105.8,79.1" fill="#8a9aba"/><polygon points="139.5,57.5 153.9,63.5 153.9,69.5 139.5,63.5" fill="#c8ccd4"/><polygon points="142.5,51.7 156.6,57.2 153.9,63.5 139.5,57.5" fill="#e9ecf0"/><polygon points="135.5,65.3 150.2,71.9 150.2,77.9 135.5,71.3" fill="#c8ccd4"/><polygon points="138.5,59.4 153.0,65.6 150.2,71.9 135.5,65.3" fill="#8a9aba"/><polygon points="131.5,73.0 146.6,80.3 146.6,86.3 131.5,79.0" fill="#c8ccd4"/><polygon points="134.5,67.2 149.3,74.0 146.6,80.3 131.5,73.0" fill="#8a9aba"/><polygon points="127.5,80.8 142.9,88.7 142.9,94.7 127.5,86.8" fill="#c8ccd4"/><polygon points="130.5,75.0 145.7,82.4 142.9,88.7 127.5,80.8" fill="#e9ecf0"/><polygon points="123.5,88.6 139.3,97.0 139.3,103.0 123.5,94.6" fill="#c8ccd4"/><polygon points="126.5,82.8 142.0,90.8 139.3,97.0 123.5,88.6" fill="#e9ecf0"/><polygon points="155.6,64.2 169.9,70.2 169.9,76.2 155.6,70.2" fill="#c8ccd4"/><polygon points="158.3,57.9 172.4,63.4 169.9,70.2 155.6,64.2" fill="#e9ecf0"/><polygon points="152.0,72.7 166.7,79.3 166.7,85.3 152.0,78.7" fill="#c8ccd4"/><polygon points="154.7,66.4 169.1,72.5 166.7,79.3 152.0,72.7" fill="#8a9aba"/><polygon points="148.4,81.2 163.5,88.4 163.5,94.4 148.4,87.2" fill="#c8ccd4"/><polygon points="151.1,74.8 165.9,81.6 163.5,88.4 148.4,81.2" fill="#8a9aba"/><polygon points="144.8,89.6 160.3,97.5 160.3,103.5 144.8,95.6" fill="#c8ccd4"/><polygon points="147.5,83.3 162.7,90.7 160.3,97.5 144.8,89.6" fill="#e9ecf0"/><polygon points="141.2,98.1 157.0,106.5 157.0,112.5 141.2,104.1" fill="#c8ccd4"/><polygon points="143.9,91.7 159.4,99.7 157.0,106.5 141.2,98.1" fill="#e9ecf0"/><polygon points="171.7,71.0 186.0,77.0 186.0,83.0 171.7,77.0" fill="#c8ccd4"/><polygon points="174.1,64.1 188.1,69.7 186.0,77.0 171.7,71.0" fill="#8a9aba"/><polygon points="168.5,80.1 183.2,86.7 183.2,92.7 168.5,86.1" fill="#c8ccd4"/><polygon points="170.9,73.3 185.3,79.4 183.2,86.7 168.5,80.1" fill="#8a9aba"/><polygon points="165.3,89.3 180.4,96.5 180.4,102.5 165.3,95.3" fill="#c8ccd4"/><polygon points="167.7,82.4 182.5,89.2 180.4,96.5 165.3,89.3" fill="#e9ecf0"/><polygon points="162.1,98.4 177.6,106.3 177.6,112.3 162.1,104.4" fill="#c8ccd4"/><polygon points="164.5,91.6 179.7,99.0 177.6,106.3 162.1,98.4" fill="#e9ecf0"/><polygon points="158.9,107.6 174.7,116.0 174.7,122.0 158.9,113.6" fill="#c8ccd4"/><polygon points="161.3,100.7 176.9,108.7 174.7,116.0 158.9,107.6" fill="#e9ecf0"/><ellipse cx="165" cy="25" rx="38" ry="22" fill="url(#cl1)"/><ellipse cx="195" cy="45" rx="22" ry="30" fill="url(#cl1)"/><ellipse cx="135" cy="10" rx="30" ry="12" fill="url(#cl1)"/><ellipse cx="20" cy="8" rx="30" ry="12" fill="url(#cl1)"/><ellipse cx="60" cy="4" rx="30" ry="8" fill="url(#cl1)"/><ellipse cx="200" cy="10" rx="20" ry="15" fill="url(#cl1)"/><polygon points="8.0,100.0 25.0,88.0 34.0,96.0 16.0,110.0" fill="#8d9195"/><polygon points="60.0,114.0 73.0,106.0 82.0,113.0 68.0,122.0" fill="#7d8185"/><polygon points="80.0,126.0 98.0,117.0 112.0,126.0 100.0,130.0 82.0,130.0" fill="#80868a"/></svg></div>
<div class="a img1" style="left:15px;top:804px;width:208px;height:130px;border-radius:4px;overflow:hidden"><svg width="208" height="130" viewBox="0 0 208 130"><defs><linearGradient id="g2" x1="0" y1="0" x2="0" y2="1"><stop offset="0" stop-color="#8cb8c0"/><stop offset="0.15" stop-color="#6a9a80"/><stop offset="0.45" stop-color="#3f7040"/><stop offset="1" stop-color="#2a5430"/></linearGradient><radialGradient id="cl2" cx="0.5" cy="0.5" r="0.5"><stop offset="0" stop-color="#eef3f3" stop-opacity="0.8"/><stop offset="1" stop-color="#eef3f3" stop-opacity="0"/></radialGradient></defs><rect width="208" height="130" fill="url(#g2)"/><circle cx="165.4" cy="95.5" r="3.7" fill="#4a7a3c" opacity="0.6"/><circle cx="13.6" cy="58.6" r="3.8" fill="#4a7a3c" opacity="0.6"/><circle cx="67.4" cy="87.5" r="4.2" fill="#356535" opacity="0.6"/><circle cx="29.9" cy="75.2" r="4.3" fill="#4a7a3c" opacity="0.6"/><circle cx="123.1" cy="87.7" r="2.2" fill="#5a8a48" opacity="0.6"/><circle cx="7.7" cy="40.0" r="2.0" fill="#5a8a48" opacity="0.6"/><circle cx="141.4" cy="118.5" r="2.0" fill="#5a8a48" opacity="0.6"/><circle cx="23.9" cy="78.4" r="3.4" fill="#5a8a48" opacity="0.6"/><circle cx="201.0" cy="69.8" r="3.1" fill="#2a5228" opacity="0.6"/><circle cx="52.4" cy="78.9" r="4.1" fill="#5a8a48" opacity="0.6"/><circle cx="55.1" cy="129.0" r="3.2" fill="#5a8a48" opacity="0.6"/><circle cx="68.8" cy="29.0" r="2.2" fill="#2a5228" opacity="0.6"/><circle cx="61.6" cy="76.8" r="2.4" fill="#5a8a48" opacity="0.6"/><circle cx="152.5" cy="102.2" r="2.2" fill="#5a8a48" opacity="0.6"/><circle cx="128.1" cy="67.5" r="3.0" fill="#2a5228" opacity="0.6"/><circle cx="27.5" cy="45.0" r="3.5" fill="#2a5228" opacity="0.6"/><circle cx="11.3" cy="82.4" r="2.4" fill="#5a8a48" opacity="0.6"/><circle cx="111.1" cy="65.5" r="2.4" fill="#4a7a3c" opacity="0.6"/><circle cx="42.5" cy="88.6" r="2.9" fill="#4a7a3c" opacity="0.6"/><circle cx="2.9" cy="108.2" r="3.6" fill="#356535" opacity="0.6"/><circle cx="19.9" cy="90.2" r="4.1" fill="#5a8a48" opacity="0.6"/><circle cx="83.6" cy="49.1" r="1.5" fill="#5a8a48" opacity="0.6"/><circle cx="123.7" cy="83.6" r="3.3" fill="#356535" opacity="0.6"/><circle cx="51.7" cy="119.4" r="1.6" fill="#2a5228" opacity="0.6"/><circle cx="84.4" cy="46.1" r="1.7" fill="#2a5228" opacity="0.6"/><circle cx="2.6" cy="80.6" r="4.3" fill="#4a7a3c" opacity="0.6"/><circle cx="85.9" cy="77.0" r="3.4" fill="#356535" opacity="0.6"/><circle cx="169.2" cy="39.2" r="2.4" fill="#5a8a48" opacity="0.6"/><circle cx="130.2" cy="129.3" r="3.7" fill="#356535" opacity="0.6"/><circle cx="148.8" cy="20.7" r="4.0" fill="#356535" opacity="0.6"/><circle cx="16.7" cy="92.1" r="2.0" fill="#2a5228" opacity="0.6"/><circle cx="54.4" cy="90.8" r="1.9" fill="#5a8a48" opacity="0.6"/><circle cx="148.0" cy="49.3" r="3.2" fill="#356535" opacity="0.6"/><circle cx="142.6" cy="120.9" r="4.4" fill="#5a8a48" opacity="0.6"/><circle cx="133.5" cy="126.2" r="2.2" fill="#2a5228" opacity="0.6"/><circle cx="35.3" cy="119.5" r="4.0" fill="#4a7a3c" opacity="0.6"/><circle cx="196.5" cy="102.1" r="2.5" fill="#356535" opacity="0.6"/><circle cx="68.3" cy="46.3" r="4.2" fill="#356535" opacity="0.6"/><circle cx="98.2" cy="78.4" r="1.5" fill="#2a5228" opacity="0.6"/><circle cx="90.9" cy="99.7" r="3.2" fill="#5a8a48" opacity="0.6"/><circle cx="164.2" cy="63.1" r="3.3" fill="#4a7a3c" opacity="0.6"/><circle cx="30.1" cy="23.0" r="1.8" fill="#4a7a3c" opacity="0.6"/><circle cx="71.7" cy="35.6" r="1.6" fill="#2a5228" opacity="0.6"/><circle cx="28.8" cy="90.8" r="1.6" fill="#2a5228" opacity="0.6"/><circle cx="153.3" cy="27.2" r="3.3" fill="#5a8a48" opacity="0.6"/><circle cx="41.5" cy="125.0" r="3.1" fill="#2a5228" opacity="0.6"/><circle cx="183.0" cy="103.1" r="3.6" fill="#356535" opacity="0.6"/><circle cx="22.3" cy="42.6" r="1.8" fill="#2a5228" opacity="0.6"/><circle cx="197.4" cy="120.2" r="3.8" fill="#2a5228" opacity="0.6"/><circle cx="171.6" cy="89.5" r="2.4" fill="#2a5228" opacity="0.6"/><circle cx="27.6" cy="107.1" r="3.4" fill="#5a8a48" opacity="0.6"/><circle cx="66.4" cy="66.6" r="1.6" fill="#5a8a48" opacity="0.6"/><circle cx="193.5" cy="25.3" r="3.8" fill="#5a8a48" opacity="0.6"/><circle cx="160.0" cy="86.2" r="2.9" fill="#5a8a48" opacity="0.6"/><circle cx="128.6" cy="23.4" r="2.7" fill="#356535" opacity="0.6"/><circle cx="107.9" cy="30.8" r="2.9" fill="#2a5228" opacity="0.6"/><circle cx="111.9" cy="43.8" r="4.1" fill="#2a5228" opacity="0.6"/><circle cx="119.5" cy="51.6" r="2.8" fill="#4a7a3c" opacity="0.6"/><circle cx="60.0" cy="102.6" r="1.7" fill="#5a8a48" opacity="0.6"/><circle cx="102.1" cy="74.1" r="3.9" fill="#4a7a3c" opacity="0.6"/><circle cx="201.2" cy="85.2" r="4.4" fill="#5a8a48" opacity="0.6"/><circle cx="120.2" cy="37.5" r="3.9" fill="#4a7a3c" opacity="0.6"/><circle cx="103.6" cy="32.1" r="3.4" fill="#2a5228" opacity="0.6"/><circle cx="102.0" cy="129.0" r="3.2" fill="#2a5228" opacity="0.6"/><circle cx="130.6" cy="59.1" r="2.7" fill="#356535" opacity="0.6"/><circle cx="185.5" cy="102.0" r="2.8" fill="#2a5228" opacity="0.6"/><circle cx="77.4" cy="53.3" r="2.8" fill="#4a7a3c" opacity="0.6"/><circle cx="78.9" cy="117.2" r="2.2" fill="#356535" opacity="0.6"/><circle cx="26.4" cy="85.3" r="3.6" fill="#2a5228" opacity="0.6"/><circle cx="72.5" cy="55.9" r="2.0" fill="#356535" opacity="0.6"/><circle cx="137.7" cy="101.6" r="2.0" fill="#356535" opacity="0.6"/><circle cx="143.3" cy="48.3" r="2.2" fill="#5a8a48" opacity="0.6"/><circle cx="96.1" cy="117.4" r="2.2" fill="#4a7a3c" opacity="0.6"/><circle cx="55.6" cy="103.0" r="4.0" fill="#4a7a3c" opacity="0.6"/><circle cx="150.5" cy="127.2" r="3.7" fill="#5a8a48" opacity="0.6"/><circle cx="33.5" cy="56.1" r="2.1" fill="#2a5228" opacity="0.6"/><circle cx="34.2" cy="92.4" r="2.1" fill="#4a7a3c" opacity="0.6"/><circle cx="204.6" cy="107.4" r="3.7" fill="#356535" opacity="0.6"/><circle cx="57.0" cy="32.0" r="4.2" fill="#5a8a48" opacity="0.6"/><circle cx="42.9" cy="62.7" r="1.6" fill="#356535" opacity="0.6"/><circle cx="177.7" cy="68.0" r="2.2" fill="#5a8a48" opacity="0.6"/><circle cx="96.4" cy="35.6" r="3.3" fill="#356535" opacity="0.6"/><circle cx="1.1" cy="46.7" r="4.1" fill="#356535" opacity="0.6"/><circle cx="176.0" cy="93.5" r="3.5" fill="#4a7a3c" opacity="0.6"/><circle cx="141.4" cy="90.6" r="2.9" fill="#5a8a48" opacity="0.6"/><circle cx="54.0" cy="97.1" r="4.2" fill="#4a7a3c" opacity="0.6"/><circle cx="162.7" cy="98.4" r="3.4" fill="#5a8a48" opacity="0.6"/><circle cx="176.7" cy="73.1" r="1.6" fill="#356535" opacity="0.6"/><circle cx="107.8" cy="92.7" r="4.1" fill="#5a8a48" opacity="0.6"/><circle cx="161.9" cy="62.8" r="3.0" fill="#2a5228" opacity="0.6"/><circle cx="7.9" cy="79.8" r="2.0" fill="#4a7a3c" opacity="0.6"/><circle cx="108.0" cy="31.1" r="3.2" fill="#4a7a3c" opacity="0.6"/><circle cx="149.2" cy="76.3" r="3.4" fill="#5a8a48" opacity="0.6"/><circle cx="108.5" cy="65.1" r="4.3" fill="#4a7a3c" opacity="0.6"/><circle cx="206.0" cy="40.2" r="3.0" fill="#2a5228" opacity="0.6"/><circle cx="151.7" cy="87.5" r="3.4" fill="#5a8a48" opacity="0.6"/><circle cx="57.1" cy="64.0" r="1.5" fill="#356535" opacity="0.6"/><circle cx="190.4" cy="89.1" r="3.5" fill="#5a8a48" opacity="0.6"/><circle cx="22.7" cy="53.4" r="2.7" fill="#4a7a3c" opacity="0.6"/><circle cx="206.8" cy="125.7" r="2.9" fill="#4a7a3c" opacity="0.6"/><circle cx="26.9" cy="105.4" r="3.9" fill="#4a7a3c" opacity="0.6"/><circle cx="97.6" cy="81.8" r="2.2" fill="#4a7a3c" opacity="0.6"/><circle cx="73.5" cy="90.3" r="4.0" fill="#356535" opacity="0.6"/><circle cx="97.4" cy="52.4" r="3.1" fill="#4a7a3c" opacity="0.6"/><circle cx="162.2" cy="71.6" r="3.9" fill="#4a7a3c" opacity="0.6"/><circle cx="55.6" cy="61.4" r="2.3" fill="#356535" opacity="0.6"/><circle cx="141.2" cy="73.0" r="3.9" fill="#5a8a48" opacity="0.6"/><circle cx="74.5" cy="92.0" r="2.5" fill="#356535" opacity="0.6"/><circle cx="89.1" cy="90.1" r="3.5" fill="#5a8a48" opacity="0.6"/><circle cx="31.8" cy="53.3" r="2.7" fill="#2a5228" opacity="0.6"/><circle cx="172.2" cy="119.6" r="3.9" fill="#4a7a3c" opacity="0.6"/><circle cx="110.4" cy="58.0" r="3.2" fill="#2a5228" opacity="0.6"/><circle cx="43.6" cy="27.9" r="2.4" fill="#2a5228" opacity="0.6"/><circle cx="120.3" cy="114.0" r="2.1" fill="#356535" opacity="0.6"/><circle cx="72.1" cy="36.8" r="4.2" fill="#4a7a3c" opacity="0.6"/><circle cx="126.8" cy="95.7" r="4.4" fill="#2a5228" opacity="0.6"/><circle cx="139.0" cy="118.3" r="3.9" fill="#5a8a48" opacity="0.6"/><circle cx="41.1" cy="96.2" r="3.1" fill="#356535" opacity="0.6"/><circle cx="139.6" cy="32.9" r="1.9" fill="#356535" opacity="0.6"/><circle cx="48.7" cy="35.3" r="3.0" fill="#2a5228" opacity="0.6"/><circle cx="100.7" cy="119.6" r="3.6" fill="#4a7a3c" opacity="0.6"/><circle cx="103.6" cy="79.3" r="4.1" fill="#2a5228" opacity="0.6"/><circle cx="33.4" cy="55.3" r="3.6" fill="#356535" opacity="0.6"/><circle cx="138.4" cy="112.5" r="2.6" fill="#356535" opacity="0.6"/><circle cx="208.0" cy="94.4" r="2.0" fill="#5a8a48" opacity="0.6"/><circle cx="132.3" cy="23.1" r="3.3" fill="#5a8a48" opacity="0.6"/><circle cx="168.2" cy="30.3" r="3.0" fill="#4a7a3c" opacity="0.6"/><circle cx="7.1" cy="99.0" r="3.4" fill="#5a8a48" opacity="0.6"/><circle cx="19.6" cy="92.5" r="2.5" fill="#4a7a3c" opacity="0.6"/><circle cx="59.1" cy="57.6" r="2.3" fill="#2a5228" opacity="0.6"/><circle cx="172.0" cy="52.2" r="4.0" fill="#356535" opacity="0.6"/><circle cx="69.4" cy="128.3" r="4.1" fill="#5a8a48" opacity="0.6"/><circle cx="202.8" cy="92.0" r="3.9" fill="#5a8a48" opacity="0.6"/><circle cx="40.0" cy="98.4" r="1.9" fill="#2a5228" opacity="0.6"/><circle cx="163.1" cy="24.4" r="3.7" fill="#356535" opacity="0.6"/><circle cx="113.4" cy="25.5" r="2.4" fill="#2a5228" opacity="0.6"/><circle cx="9.7" cy="110.4" r="2.9" fill="#2a5228" opacity="0.6"/><circle cx="164.1" cy="120.1" r="3.3" fill="#4a7a3c" opacity="0.6"/><circle cx="130.4" cy="96.6" r="3.3" fill="#2a5228" opacity="0.6"/><circle cx="44.2" cy="93.4" r="2.9" fill="#4a7a3c" opacity="0.6"/><circle cx="21.1" cy="39.9" r="1.6" fill="#2a5228" opacity="0.6"/><circle cx="190.1" cy="92.1" r="2.6" fill="#4a7a3c" opacity="0.6"/><circle cx="163.6" cy="81.8" r="2.3" fill="#5a8a48" opacity="0.6"/><circle cx="38.4" cy="23.8" r="1.6" fill="#2a5228" opacity="0.6"/><circle cx="103.5" cy="77.4" r="4.0" fill="#356535" opacity="0.6"/><circle cx="119.7" cy="121.0" r="2.8" fill="#2a5228" opacity="0.6"/><circle cx="141.4" cy="85.3" r="4.5" fill="#4a7a3c" opacity="0.6"/><circle cx="98.9" cy="65.4" r="1.8" fill="#356535" opacity="0.6"/><circle cx="44.2" cy="36.7" r="1.5" fill="#2a5228" opacity="0.6"/><circle cx="1.9" cy="93.6" r="4.5" fill="#2a5228" opacity="0.6"/><circle cx="45.4" cy="33.3" r="2.9" fill="#5a8a48" opacity="0.6"/><circle cx="149.6" cy="46.6" r="3.7" fill="#4a7a3c" opacity="0.6"/><circle cx="191.9" cy="60.2" r="3.7" fill="#4a7a3c" opacity="0.6"/><circle cx="151.8" cy="29.3" r="3.4" fill="#356535" opacity="0.6"/><circle cx="95.8" cy="122.6" r="2.3" fill="#2a5228" opacity="0.6"/><circle cx="149.2" cy="21.3" r="1.5" fill="#2a5228" opacity="0.6"/><circle cx="80.9" cy="54.4" r="3.3" fill="#356535" opacity="0.6"/><circle cx="126.7" cy="54.8" r="4.3" fill="#356535" opacity="0.6"/><circle cx="97.7" cy="38.3" r="4.4" fill="#2a5228" opacity="0.6"/><circle cx="75.6" cy="90.9" r="3.4" fill="#356535" opacity="0.6"/><circle cx="99.2" cy="105.6" r="2.9" fill="#5a8a48" opacity="0.6"/><circle cx="163.2" cy="82.3" r="2.4" fill="#2a5228" opacity="0.6"/><circle cx="129.3" cy="91.6" r="3.9" fill="#5a8a48" opacity="0.6"/><circle cx="180.9" cy="99.8" r="1.5" fill="#4a7a3c" opacity="0.6"/><circle cx="125.0" cy="53.9" r="2.8" fill="#4a7a3c" opacity="0.6"/><circle cx="78.3" cy="95.3" r="3.3" fill="#4a7a3c" opacity="0.6"/><circle cx="168.0" cy="51.2" r="1.5" fill="#5a8a48" opacity="0.6"/><circle cx="55.7" cy="37.3" r="4.3" fill="#2a5228" opacity="0.6"/><circle cx="60.0" cy="35.5" r="4.2" fill="#4a7a3c" opacity="0.6"/><circle cx="57.0" cy="113.6" r="3.9" fill="#356535" opacity="0.6"/><circle cx="72.1" cy="29.4" r="3.2" fill="#356535" opacity="0.6"/><circle cx="41.7" cy="102.5" r="4.3" fill="#4a7a3c" opacity="0.6"/><circle cx="64.4" cy="26.3" r="2.7" fill="#4a7a3c" opacity="0.6"/><circle cx="192.6" cy="84.5" r="1.5" fill="#356535" opacity="0.6"/><circle cx="95.6" cy="29.6" r="3.9" fill="#2a5228" opacity="0.6"/><circle cx="48.4" cy="83.8" r="4.2" fill="#5a8a48" opacity="0.6"/><circle cx="99.1" cy="84.8" r="2.1" fill="#4a7a3c" opacity="0.6"/><circle cx="19.2" cy="108.6" r="2.4" fill="#5a8a48" opacity="0.6"/><circle cx="83.7" cy="76.9" r="1.9" fill="#2a5228" opacity="0.6"/><circle cx="191.9" cy="74.3" r="4.1" fill="#5a8a48" opacity="0.6"/><circle cx="131.6" cy="106.6" r="2.0" fill="#2a5228" opacity="0.6"/><circle cx="71.7" cy="77.1" r="1.6" fill="#2a5228" opacity="0.6"/><circle cx="42.6" cy="115.8" r="3.2" fill="#4a7a3c" opacity="0.6"/><circle cx="54.4" cy="105.7" r="2.8" fill="#356535" opacity="0.6"/><circle cx="159.6" cy="110.1" r="4.4" fill="#5a8a48" opacity="0.6"/><circle cx="175.5" cy="57.3" r="4.5" fill="#356535" opacity="0.6"/><circle cx="17.4" cy="25.6" r="3.2" fill="#356535" opacity="0.6"/><circle cx="101.3" cy="113.0" r="4.2" fill="#356535" opacity="0.6"/><circle cx="191.8" cy="97.7" r="1.8" fill="#5a8a48" opacity="0.6"/><circle cx="117.4" cy="90.5" r="4.4" fill="#356535" opacity="0.6"/><circle cx="38.0" cy="113.5" r="2.6" fill="#4a7a3c" opacity="0.6"/><circle cx="206.3" cy="44.4" r="1.6" fill="#5a8a48" opacity="0.6"/><circle cx="195.8" cy="26.5" r="3.2" fill="#2a5228" opacity="0.6"/><circle cx="174.1" cy="25.2" r="3.9" fill="#356535" opacity="0.6"/><circle cx="11.6" cy="35.9" r="3.8" fill="#4a7a3c" opacity="0.6"/><circle cx="140.8" cy="52.9" r="3.3" fill="#2a5228" opacity="0.6"/><circle cx="97.9" cy="60.9" r="2.7" fill="#5a8a48" opacity="0.6"/><circle cx="100.1" cy="38.5" r="2.2" fill="#4a7a3c" opacity="0.6"/><circle cx="190.2" cy="118.1" r="2.9" fill="#4a7a3c" opacity="0.6"/><circle cx="166.2" cy="37.3" r="4.0" fill="#2a5228" opacity="0.6"/><circle cx="194.3" cy="115.3" r="4.2" fill="#4a7a3c" opacity="0.6"/><circle cx="161.9" cy="125.4" r="4.3" fill="#356535" opacity="0.6"/><circle cx="175.2" cy="89.1" r="2.9" fill="#5a8a48" opacity="0.6"/><circle cx="67.1" cy="45.7" r="1.8" fill="#5a8a48" opacity="0.6"/><circle cx="29.7" cy="44.4" r="1.7" fill="#356535" opacity="0.6"/><circle cx="115.1" cy="35.9" r="4.1" fill="#5a8a48" opacity="0.6"/><circle cx="87.0" cy="47.1" r="1.6" fill="#5a8a48" opacity="0.6"/><circle cx="69.6" cy="38.5" r="3.0" fill="#5a8a48" opacity="0.6"/><circle cx="94.9" cy="73.1" r="2.0" fill="#2a5228" opacity="0.6"/><circle cx="131.2" cy="106.6" r="4.3" fill="#356535" opacity="0.6"/><circle cx="173.7" cy="33.1" r="3.8" fill="#5a8a48" opacity="0.6"/><circle cx="89.9" cy="48.8" r="2.2" fill="#4a7a3c" opacity="0.6"/><circle cx="20.3" cy="51.8" r="4.2" fill="#2a5228" opacity="0.6"/><circle cx="173.1" cy="127.6" r="1.9" fill="#2a5228" opacity="0.6"/><circle cx="92.0" cy="75.9" r="3.0" fill="#356535" opacity="0.6"/><circle cx="0.4" cy="111.5" r="3.1" fill="#4a7a3c" opacity="0.6"/><circle cx="74.9" cy="24.5" r="2.7" fill="#5a8a48" opacity="0.6"/><circle cx="118.8" cy="35.2" r="2.0" fill="#4a7a3c" opacity="0.6"/><circle cx="148.0" cy="41.6" r="1.7" fill="#2a5228" opacity="0.6"/><circle cx="185.0" cy="100.4" r="3.8" fill="#4a7a3c" opacity="0.6"/><path d="M40 2 C70 8 95 16 118 22 C150 28 180 33 208 37" fill="none" stroke="#9ccfe0" stroke-width="3.5" opacity="0.9"/><path d="M0 8 C30 5 50 2 70 0" fill="none" stroke="#a8d0dc" stroke-width="2" opacity="0.7"/><polygon points="120.0,30.0 208.0,42.0 208.0,58.0 150.0,46.0" fill="#6a9a48" opacity="0.7"/><polygon points="54.0,8.0 190.0,54.0 170.0,126.0 17.0,78.0" fill="#3f6232"/><polygon points="52.8,12.6 70.2,18.5 70.2,21.0 52.8,15.1" fill="#c0c4c8"/><polygon points="54.7,9.1 72.0,14.9 70.2,18.5 52.8,12.6" fill="#d8dade"/><polygon points="72.4,19.2 89.8,25.1 89.8,27.6 72.4,21.7" fill="#c0c4c8"/><polygon points="74.2,15.6 91.4,21.5 89.8,25.1 72.4,19.2" fill="#8aa0c8"/><polygon points="92.0,25.8 109.4,31.7 109.4,34.2 92.0,28.3" fill="#c0c4c8"/><polygon points="93.6,22.2 110.9,28.1 109.4,31.7 92.0,25.8" fill="#8aa0c8"/><polygon points="111.6,32.4 129.0,38.3 129.0,40.8 111.6,34.9" fill="#c0c4c8"/><polygon points="113.1,28.8 130.4,34.6 129.0,38.3 111.6,32.4" fill="#c8c4b0"/><polygon points="131.1,39.0 148.5,44.9 148.5,47.4 131.1,41.5" fill="#c0c4c8"/><polygon points="132.5,35.4 149.8,41.2 148.5,44.9 131.1,39.0" fill="#8aa0c8"/><polygon points="150.7,45.6 168.1,51.4 168.1,53.9 150.7,48.1" fill="#c0c4c8"/><polygon points="152.0,41.9 169.3,47.8 168.1,51.4 150.7,45.6" fill="#d8dade"/><polygon points="170.3,52.2 187.7,58.0 187.7,60.5 170.3,54.7" fill="#c0c4c8"/><polygon points="171.4,48.5 188.7,54.4 187.7,58.0 170.3,52.2" fill="#d8dade"/><polygon points="48.7,20.4 66.4,26.3 66.4,28.8 48.7,22.9" fill="#c0c4c8"/><polygon points="50.6,16.8 68.1,22.7 66.4,26.3 48.7,20.4" fill="#8aa0c8"/><polygon points="68.6,27.0 86.2,32.9 86.2,35.4 68.6,29.5" fill="#c0c4c8"/><polygon points="70.3,23.5 87.9,29.3 86.2,32.9 68.6,27.0" fill="#d8dade"/><polygon points="88.4,33.7 106.1,39.5 106.1,42.0 88.4,36.2" fill="#c0c4c8"/><polygon points="90.1,30.1 107.6,35.9 106.1,39.5 88.4,33.7" fill="#8aa0c8"/><polygon points="108.3,40.3 125.9,46.2 125.9,48.7 108.3,42.8" fill="#c0c4c8"/><polygon points="109.8,36.7 127.3,42.5 125.9,46.2 108.3,40.3" fill="#d8dade"/><polygon points="128.1,46.9 145.8,52.8 145.8,55.3 128.1,49.4" fill="#c0c4c8"/><polygon points="129.5,43.3 147.0,49.1 145.8,52.8 128.1,46.9" fill="#c8c4b0"/><polygon points="148.0,53.5 165.6,59.4 165.6,61.9 148.0,56.0" fill="#c0c4c8"/><polygon points="149.2,49.9 166.8,55.7 165.6,59.4 148.0,53.5" fill="#d8dade"/><polygon points="167.8,60.2 185.4,66.0 185.4,68.5 167.8,62.7" fill="#c0c4c8"/><polygon points="169.0,56.5 186.5,62.4 185.4,66.0 167.8,60.2" fill="#c8c4b0"/><polygon points="44.6,28.2 62.5,34.1 62.5,36.6 44.6,30.7" fill="#c0c4c8"/><polygon points="46.5,24.6 64.3,30.5 62.5,34.1 44.6,28.2" fill="#c8c4b0"/><polygon points="64.8,34.9 82.6,40.8 82.6,43.3 64.8,37.4" fill="#c0c4c8"/><polygon points="66.5,31.3 84.3,37.2 82.6,40.8 64.8,34.9" fill="#8aa0c8"/><polygon points="84.9,41.5 102.7,47.4 102.7,49.9 84.9,44.0" fill="#c0c4c8"/><polygon points="86.5,37.9 104.3,43.8 102.7,47.4 84.9,41.5" fill="#d8dade"/><polygon points="105.0,48.2 122.9,54.1 122.9,56.6 105.0,50.7" fill="#c0c4c8"/><polygon points="106.5,44.5 124.3,50.4 122.9,54.1 105.0,48.2" fill="#c8c4b0"/><polygon points="125.1,54.8 143.0,60.7 143.0,63.2 125.1,57.3" fill="#c0c4c8"/><polygon points="126.5,51.2 144.3,57.1 143.0,60.7 125.1,54.8" fill="#8aa0c8"/><polygon points="145.2,61.5 163.1,67.4 163.1,69.9 145.2,64.0" fill="#c0c4c8"/><polygon points="146.5,57.8 164.2,63.7 163.1,67.4 145.2,61.5" fill="#c8c4b0"/><polygon points="165.3,68.1 183.2,74.0 183.2,76.5 165.3,70.6" fill="#c0c4c8"/><polygon points="166.5,64.5 184.2,70.3 183.2,74.0 165.3,68.1" fill="#d8dade"/><polygon points="40.5,36.0 58.7,41.9 58.7,44.4 40.5,38.5" fill="#c0c4c8"/><polygon points="42.4,32.4 60.4,38.3 58.7,41.9 40.5,36.0" fill="#6e9ad0"/><polygon points="60.9,42.7 79.0,48.6 79.0,51.1 60.9,45.2" fill="#c0c4c8"/><polygon points="62.7,39.1 80.7,45.0 79.0,48.6 60.9,42.7" fill="#9fb3d0"/><polygon points="81.3,49.4 99.4,55.3 99.4,57.8 81.3,51.9" fill="#c0c4c8"/><polygon points="83.0,45.7 100.9,51.7 99.4,55.3 81.3,49.4" fill="#6e9ad0"/><polygon points="101.7,56.0 119.8,62.0 119.8,64.5 101.7,58.5" fill="#c0c4c8"/><polygon points="103.2,52.4 121.2,58.3 119.8,62.0 101.7,56.0" fill="#6e9ad0"/><polygon points="122.1,62.7 140.2,68.7 140.2,71.2 122.1,65.2" fill="#c0c4c8"/><polygon points="123.5,59.1 141.5,65.0 140.2,68.7 122.1,62.7" fill="#6e9ad0"/><polygon points="142.5,69.4 160.6,75.3 160.6,77.8 142.5,71.9" fill="#c0c4c8"/><polygon points="143.7,65.8 161.7,71.7 160.6,75.3 142.5,69.4" fill="#6e9ad0"/><polygon points="162.9,76.1 181.0,82.0 181.0,84.5 162.9,78.6" fill="#c0c4c8"/><polygon points="164.0,72.4 182.0,78.3 181.0,82.0 162.9,76.1" fill="#6e9ad0"/><polygon points="36.5,43.8 54.8,49.7 54.8,52.2 36.5,46.3" fill="#c0c4c8"/><polygon points="38.3,40.2 56.6,46.1 54.8,49.7 36.5,43.8" fill="#6e9ad0"/><polygon points="57.1,50.5 75.5,56.4 75.5,58.9 57.1,53.0" fill="#c0c4c8"/><polygon points="58.9,46.9 77.1,52.8 75.5,56.4 57.1,50.5" fill="#6e9ad0"/><polygon points="77.8,57.2 96.1,63.2 96.1,65.7 77.8,59.7" fill="#c0c4c8"/><polygon points="79.4,53.6 97.6,59.5 96.1,63.2 77.8,57.2" fill="#6e9ad0"/><polygon points="98.4,63.9 116.8,69.9 116.8,72.4 98.4,66.4" fill="#c0c4c8"/><polygon points="99.9,60.3 118.2,66.2 116.8,69.9 98.4,63.9" fill="#6e9ad0"/><polygon points="119.1,70.6 137.4,76.6 137.4,79.1 119.1,73.1" fill="#c0c4c8"/><polygon points="120.5,67.0 138.7,72.9 137.4,76.6 119.1,70.6" fill="#9fb3d0"/><polygon points="139.7,77.3 158.1,83.3 158.1,85.8 139.7,79.8" fill="#c0c4c8"/><polygon points="141.0,73.7 159.2,79.6 158.1,83.3 139.7,77.3" fill="#9fb3d0"/><polygon points="160.4,84.1 178.7,90.0 178.7,92.5 160.4,86.6" fill="#c0c4c8"/><polygon points="161.5,80.4 179.8,86.3 178.7,90.0 160.4,84.1" fill="#d8d6c8"/><polygon points="32.4,51.5 50.9,57.5 50.9,60.0 32.4,54.0" fill="#c0c4c8"/><polygon points="34.2,48.0 52.7,53.9 50.9,57.5 32.4,51.5" fill="#6e9ad0"/><polygon points="53.3,58.3 71.9,64.3 71.9,66.8 53.3,60.8" fill="#c0c4c8"/><polygon points="55.0,54.7 73.5,60.7 71.9,64.3 53.3,58.3" fill="#9fb3d0"/><polygon points="74.2,65.0 92.8,71.0 92.8,73.5 74.2,67.5" fill="#c0c4c8"/><polygon points="75.8,61.4 94.3,67.4 92.8,71.0 74.2,65.0" fill="#6e9ad0"/><polygon points="95.1,71.8 113.7,77.8 113.7,80.3 95.1,74.3" fill="#c0c4c8"/><polygon points="96.6,68.2 115.1,74.1 113.7,77.8 95.1,71.8" fill="#9fb3d0"/><polygon points="116.1,78.5 134.6,84.5 134.6,87.0 116.1,81.0" fill="#c0c4c8"/><polygon points="117.4,74.9 135.9,80.9 134.6,84.5 116.1,78.5" fill="#6e9ad0"/><polygon points="137.0,85.3 155.6,91.3 155.6,93.8 137.0,87.8" fill="#c0c4c8"/><polygon points="138.2,81.6 156.7,87.6 155.6,91.3 137.0,85.3" fill="#d8d6c8"/><polygon points="157.9,92.0 176.5,98.0 176.5,100.5 157.9,94.5" fill="#c0c4c8"/><polygon points="159.1,88.4 177.5,94.3 176.5,98.0 157.9,92.0" fill="#d8d6c8"/><polygon points="28.3,59.3 47.1,65.3 47.1,67.8 28.3,61.8" fill="#c0c4c8"/><polygon points="30.1,55.7 48.9,61.8 47.1,65.3 28.3,59.3" fill="#6e9ad0"/><polygon points="49.5,66.1 68.3,72.1 68.3,74.6 49.5,68.6" fill="#c0c4c8"/><polygon points="51.2,62.5 69.9,68.5 68.3,72.1 49.5,66.1" fill="#6e9ad0"/><polygon points="70.7,72.9 89.5,78.9 89.5,81.4 70.7,75.4" fill="#c0c4c8"/><polygon points="72.3,69.3 91.0,75.3 89.5,78.9 70.7,72.9" fill="#6e9ad0"/><polygon points="91.8,79.7 110.7,85.7 110.7,88.2 91.8,82.2" fill="#c0c4c8"/><polygon points="93.4,76.0 112.1,82.0 110.7,85.7 91.8,79.7" fill="#6e9ad0"/><polygon points="113.0,86.4 131.9,92.5 131.9,95.0 113.0,88.9" fill="#c0c4c8"/><polygon points="114.4,82.8 133.1,88.8 131.9,92.5 113.0,86.4" fill="#6e9ad0"/><polygon points="134.2,93.2 153.1,99.2 153.1,101.7 134.2,95.7" fill="#c0c4c8"/><polygon points="135.5,89.6 154.2,95.6 153.1,99.2 134.2,93.2" fill="#d8d6c8"/><polygon points="155.4,100.0 174.3,106.0 174.3,108.5 155.4,102.5" fill="#c0c4c8"/><polygon points="156.6,96.3 175.3,102.3 174.3,106.0 155.4,100.0" fill="#6e9ad0"/><polygon points="24.2,67.1 43.2,73.2 43.2,75.7 24.2,69.6" fill="#c0c4c8"/><polygon points="26.0,63.5 45.0,69.6 43.2,73.2 24.2,67.1" fill="#6e9ad0"/><polygon points="45.6,73.9 64.7,80.0 64.7,82.5 45.6,76.4" fill="#c0c4c8"/><polygon points="47.4,70.3 66.3,76.4 64.7,80.0 45.6,73.9" fill="#6e9ad0"/><polygon points="67.1,80.7 86.2,86.8 86.2,89.3 67.1,83.2" fill="#c0c4c8"/><polygon points="68.7,77.1 87.7,83.2 86.2,86.8 67.1,80.7" fill="#6e9ad0"/><polygon points="88.6,87.5 107.6,93.6 107.6,96.1 88.6,90.0" fill="#c0c4c8"/><polygon points="90.1,83.9 109.0,89.9 107.6,93.6 88.6,87.5" fill="#9fb3d0"/><polygon points="110.0,94.3 129.1,100.4 129.1,102.9 110.0,96.8" fill="#c0c4c8"/><polygon points="111.4,90.7 130.4,96.7 129.1,100.4 110.0,94.3" fill="#6e9ad0"/><polygon points="131.5,101.2 150.6,107.2 150.6,109.7 131.5,103.7" fill="#c0c4c8"/><polygon points="132.8,97.5 151.7,103.5 150.6,107.2 131.5,101.2" fill="#6e9ad0"/><polygon points="153.0,108.0 172.0,114.0 172.0,116.5 153.0,110.5" fill="#c0c4c8"/><polygon points="154.1,104.3 173.0,110.3 172.0,114.0 153.0,108.0" fill="#9fb3d0"/><polygon points="20.1,74.9 39.4,81.0 39.4,83.5 20.1,77.4" fill="#c0c4c8"/><polygon points="22.0,71.3 41.1,77.4 39.4,81.0 20.1,74.9" fill="#6e9ad0"/><polygon points="41.8,81.7 61.1,87.8 61.1,90.3 41.8,84.2" fill="#c0c4c8"/><polygon points="43.6,78.1 62.8,84.2 61.1,87.8 41.8,81.7" fill="#6e9ad0"/><polygon points="63.5,88.6 82.8,94.6 82.8,97.1 63.5,91.1" fill="#c0c4c8"/><polygon points="65.2,85.0 84.4,91.0 82.8,94.6 63.5,88.6" fill="#6e9ad0"/><polygon points="85.3,95.4 104.6,101.5 104.6,104.0 85.3,97.9" fill="#c0c4c8"/><polygon points="86.8,91.8 106.0,97.9 104.6,101.5 85.3,95.4" fill="#6e9ad0"/><polygon points="107.0,102.3 126.3,108.3 126.3,110.8 107.0,104.8" fill="#c0c4c8"/><polygon points="108.4,98.6 127.6,104.7 126.3,108.3 107.0,102.3" fill="#6e9ad0"/><polygon points="128.7,109.1 148.0,115.2 148.0,117.7 128.7,111.6" fill="#c0c4c8"/><polygon points="130.0,105.4 149.2,111.5 148.0,115.2 128.7,109.1" fill="#9fb3d0"/><polygon points="150.5,115.9 169.8,122.0 169.8,124.5 150.5,118.4" fill="#c0c4c8"/><polygon points="151.6,112.3 170.8,118.3 169.8,122.0 150.5,115.9" fill="#6e9ad0"/><ellipse cx="185" cy="12" rx="30" ry="14" fill="url(#cl2)"/><ellipse cx="25" cy="18" rx="28" ry="16" fill="url(#cl2)"/><ellipse cx="12" cy="112" rx="20" ry="14" fill="url(#cl2)"/><ellipse cx="110" cy="2" rx="30" ry="6" fill="url(#cl2)"/></svg></div>
<div class="a img2" style="left:15px;top:974px;width:208px;height:130px;border-radius:4px;overflow:hidden"><svg width="208" height="130" viewBox="0 0 208 130"><defs><radialGradient id="cl3" cx="0.5" cy="0.5" r="0.5"><stop offset="0" stop-color="#e8eef0" stop-opacity="0.85"/><stop offset="1" stop-color="#e8eef0" stop-opacity="0"/></radialGradient></defs><rect width="208" height="130" fill="#41706a"/><polygon points="50.0,0.0 90.0,0.0 88.0,18.0 208.0,52.0 208.0,64.0 95.0,30.0 60.0,45.0 20.0,70.0 0.0,75.0 0.0,58.0 40.0,30.0 52.0,18.0" fill="#5f7f98"/><polygon points="52.0,2.0 86.0,2.0 84.0,16.0 60.0,20.0 54.0,14.0" fill="#6a8aa4"/><circle cx="180.9" cy="43.0" r="1.3" fill="#2f5a50" opacity="0.55"/><circle cx="96.7" cy="35.2" r="2.7" fill="#2f5a50" opacity="0.55"/><circle cx="25.4" cy="24.3" r="1.5" fill="#4a7a70" opacity="0.55"/><circle cx="179.1" cy="8.8" r="2.3" fill="#5a8a80" opacity="0.55"/><circle cx="34.2" cy="49.6" r="3.1" fill="#5a8a80" opacity="0.55"/><circle cx="144.3" cy="35.8" r="2.4" fill="#2f5a50" opacity="0.55"/><circle cx="82.3" cy="56.5" r="2.8" fill="#3a6860" opacity="0.55"/><circle cx="83.3" cy="50.3" r="2.6" fill="#3a6860" opacity="0.55"/><circle cx="169.5" cy="50.9" r="1.3" fill="#4a7a70" opacity="0.55"/><circle cx="199.2" cy="56.1" r="1.7" fill="#5a8a80" opacity="0.55"/><circle cx="137.9" cy="0.7" r="1.4" fill="#4a7a70" opacity="0.55"/><circle cx="14.4" cy="26.0" r="2.2" fill="#2f5a50" opacity="0.55"/><circle cx="46.9" cy="25.2" r="2.0" fill="#5a8a80" opacity="0.55"/><circle cx="131.7" cy="48.6" r="3.0" fill="#2f5a50" opacity="0.55"/><circle cx="7.1" cy="38.5" r="1.7" fill="#3a6860" opacity="0.55"/><circle cx="130.7" cy="48.4" r="1.3" fill="#2f5a50" opacity="0.55"/><circle cx="52.1" cy="31.2" r="2.1" fill="#2f5a50" opacity="0.55"/><circle cx="12.6" cy="57.5" r="3.0" fill="#3a6860" opacity="0.55"/><circle cx="17.6" cy="35.4" r="3.1" fill="#5a8a80" opacity="0.55"/><circle cx="25.8" cy="7.9" r="1.8" fill="#5a8a80" opacity="0.55"/><circle cx="120.1" cy="16.4" r="2.7" fill="#3a6860" opacity="0.55"/><circle cx="174.7" cy="36.6" r="2.3" fill="#5a8a80" opacity="0.55"/><circle cx="41.8" cy="42.6" r="2.1" fill="#3a6860" opacity="0.55"/><circle cx="127.5" cy="28.1" r="1.8" fill="#4a7a70" opacity="0.55"/><circle cx="2.5" cy="21.2" r="2.9" fill="#4a7a70" opacity="0.55"/><circle cx="61.5" cy="46.3" r="1.5" fill="#2f5a50" opacity="0.55"/><circle cx="126.0" cy="20.9" r="2.5" fill="#5a8a80" opacity="0.55"/><circle cx="173.5" cy="21.2" r="2.7" fill="#4a7a70" opacity="0.55"/><circle cx="205.8" cy="40.7" r="3.1" fill="#5a8a80" opacity="0.55"/><circle cx="70.1" cy="21.1" r="2.6" fill="#3a6860" opacity="0.55"/><circle cx="170.8" cy="31.1" r="2.7" fill="#5a8a80" opacity="0.55"/><circle cx="55.9" cy="37.8" r="2.5" fill="#4a7a70" opacity="0.55"/><circle cx="103.6" cy="57.8" r="2.3" fill="#5a8a80" opacity="0.55"/><circle cx="176.8" cy="16.8" r="2.4" fill="#2f5a50" opacity="0.55"/><circle cx="78.9" cy="27.1" r="2.1" fill="#3a6860" opacity="0.55"/><circle cx="60.9" cy="23.4" r="2.3" fill="#5a8a80" opacity="0.55"/><circle cx="134.8" cy="0.4" r="2.7" fill="#5a8a80" opacity="0.55"/><circle cx="90.6" cy="22.6" r="1.7" fill="#3a6860" opacity="0.55"/><circle cx="67.4" cy="50.6" r="2.9" fill="#3a6860" opacity="0.55"/><circle cx="42.5" cy="25.6" r="3.0" fill="#2f5a50" opacity="0.55"/><circle cx="5.3" cy="15.4" r="3.0" fill="#3a6860" opacity="0.55"/><circle cx="191.4" cy="46.4" r="2.3" fill="#5a8a80" opacity="0.55"/><circle cx="107.6" cy="31.0" r="2.6" fill="#5a8a80" opacity="0.55"/><circle cx="96.6" cy="2.4" r="2.6" fill="#5a8a80" opacity="0.55"/><circle cx="197.2" cy="40.6" r="2.3" fill="#2f5a50" opacity="0.55"/><circle cx="85.2" cy="30.1" r="2.5" fill="#4a7a70" opacity="0.55"/><circle cx="183.0" cy="57.9" r="2.2" fill="#5a8a80" opacity="0.55"/><circle cx="159.6" cy="53.9" r="2.4" fill="#2f5a50" opacity="0.55"/><circle cx="35.5" cy="19.1" r="3.2" fill="#3a6860" opacity="0.55"/><circle cx="106.6" cy="6.6" r="3.0" fill="#3a6860" opacity="0.55"/><circle cx="170.7" cy="59.4" r="3.0" fill="#5a8a80" opacity="0.55"/><circle cx="131.3" cy="31.4" r="2.8" fill="#4a7a70" opacity="0.55"/><circle cx="105.0" cy="11.3" r="1.6" fill="#2f5a50" opacity="0.55"/><circle cx="73.5" cy="59.6" r="2.5" fill="#2f5a50" opacity="0.55"/><circle cx="143.9" cy="0.6" r="1.2" fill="#2f5a50" opacity="0.55"/><circle cx="190.7" cy="23.9" r="1.4" fill="#2f5a50" opacity="0.55"/><circle cx="139.0" cy="11.8" r="2.2" fill="#3a6860" opacity="0.55"/><circle cx="181.2" cy="53.7" r="2.2" fill="#4a7a70" opacity="0.55"/><circle cx="119.5" cy="24.7" r="1.4" fill="#4a7a70" opacity="0.55"/><circle cx="107.8" cy="30.6" r="1.3" fill="#2f5a50" opacity="0.55"/><circle cx="35.5" cy="31.3" r="2.8" fill="#5a8a80" opacity="0.55"/><circle cx="167.8" cy="3.7" r="1.2" fill="#3a6860" opacity="0.55"/><circle cx="29.9" cy="14.3" r="1.8" fill="#2f5a50" opacity="0.55"/><circle cx="72.6" cy="27.0" r="2.0" fill="#2f5a50" opacity="0.55"/><circle cx="45.8" cy="23.8" r="2.7" fill="#2f5a50" opacity="0.55"/><circle cx="91.4" cy="37.2" r="1.7" fill="#2f5a50" opacity="0.55"/><circle cx="33.2" cy="35.2" r="1.5" fill="#2f5a50" opacity="0.55"/><circle cx="187.0" cy="49.0" r="1.8" fill="#3a6860" opacity="0.55"/><circle cx="199.7" cy="29.7" r="3.1" fill="#4a7a70" opacity="0.55"/><circle cx="140.9" cy="40.5" r="2.4" fill="#5a8a80" opacity="0.55"/><circle cx="64.3" cy="52.5" r="2.2" fill="#4a7a70" opacity="0.55"/><circle cx="18.2" cy="10.2" r="2.0" fill="#2f5a50" opacity="0.55"/><circle cx="202.1" cy="17.4" r="2.3" fill="#2f5a50" opacity="0.55"/><circle cx="69.7" cy="52.3" r="1.9" fill="#2f5a50" opacity="0.55"/><circle cx="199.9" cy="25.3" r="3.0" fill="#4a7a70" opacity="0.55"/><circle cx="80.6" cy="28.0" r="1.9" fill="#5a8a80" opacity="0.55"/><circle cx="7.3" cy="39.9" r="1.9" fill="#4a7a70" opacity="0.55"/><circle cx="115.4" cy="28.0" r="2.8" fill="#4a7a70" opacity="0.55"/><circle cx="33.1" cy="21.2" r="2.6" fill="#5a8a80" opacity="0.55"/><circle cx="130.9" cy="34.8" r="1.8" fill="#5a8a80" opacity="0.55"/><circle cx="105.0" cy="13.6" r="2.1" fill="#4a7a70" opacity="0.55"/><circle cx="196.0" cy="59.9" r="2.4" fill="#5a8a80" opacity="0.55"/><circle cx="122.2" cy="22.1" r="1.7" fill="#4a7a70" opacity="0.55"/><circle cx="26.1" cy="45.0" r="2.6" fill="#2f5a50" opacity="0.55"/><circle cx="112.9" cy="16.2" r="2.7" fill="#5a8a80" opacity="0.55"/><circle cx="6.0" cy="43.1" r="1.5" fill="#2f5a50" opacity="0.55"/><circle cx="66.8" cy="39.8" r="1.4" fill="#3a6860" opacity="0.55"/><circle cx="167.5" cy="45.5" r="1.6" fill="#3a6860" opacity="0.55"/><circle cx="18.3" cy="17.3" r="2.8" fill="#5a8a80" opacity="0.55"/><circle cx="58.7" cy="24.2" r="3.0" fill="#4a7a70" opacity="0.55"/><circle cx="194.8" cy="10.6" r="1.9" fill="#3a6860" opacity="0.55"/><circle cx="186.6" cy="1.5" r="2.6" fill="#5a8a80" opacity="0.55"/><circle cx="51.7" cy="50.8" r="1.9" fill="#2f5a50" opacity="0.55"/><circle cx="37.8" cy="6.9" r="3.0" fill="#4a7a70" opacity="0.55"/><circle cx="148.2" cy="2.4" r="1.3" fill="#4a7a70" opacity="0.55"/><circle cx="89.6" cy="45.4" r="1.5" fill="#2f5a50" opacity="0.55"/><circle cx="114.9" cy="37.8" r="3.1" fill="#4a7a70" opacity="0.55"/><circle cx="118.6" cy="43.0" r="1.7" fill="#5a8a80" opacity="0.55"/><circle cx="139.4" cy="34.5" r="3.1" fill="#2f5a50" opacity="0.55"/><circle cx="173.5" cy="46.6" r="1.8" fill="#2f5a50" opacity="0.55"/><circle cx="182.0" cy="35.1" r="2.6" fill="#4a7a70" opacity="0.55"/><circle cx="141.7" cy="2.2" r="1.8" fill="#3a6860" opacity="0.55"/><circle cx="155.9" cy="5.2" r="2.6" fill="#5a8a80" opacity="0.55"/><circle cx="207.6" cy="36.9" r="1.6" fill="#2f5a50" opacity="0.55"/><circle cx="72.6" cy="57.0" r="2.1" fill="#3a6860" opacity="0.55"/><circle cx="143.9" cy="44.3" r="2.9" fill="#5a8a80" opacity="0.55"/><circle cx="105.8" cy="40.6" r="1.6" fill="#4a7a70" opacity="0.55"/><circle cx="101.8" cy="11.4" r="3.1" fill="#3a6860" opacity="0.55"/><circle cx="36.3" cy="9.8" r="2.8" fill="#4a7a70" opacity="0.55"/><circle cx="113.1" cy="15.0" r="1.3" fill="#3a6860" opacity="0.55"/><circle cx="28.4" cy="42.4" r="2.5" fill="#4a7a70" opacity="0.55"/><circle cx="146.8" cy="0.4" r="2.6" fill="#4a7a70" opacity="0.55"/><circle cx="194.7" cy="21.1" r="1.8" fill="#4a7a70" opacity="0.55"/><circle cx="122.2" cy="14.4" r="2.5" fill="#2f5a50" opacity="0.55"/><circle cx="114.0" cy="45.6" r="1.5" fill="#4a7a70" opacity="0.55"/><circle cx="124.5" cy="27.7" r="2.7" fill="#4a7a70" opacity="0.55"/><circle cx="23.8" cy="17.4" r="1.9" fill="#4a7a70" opacity="0.55"/><circle cx="9.0" cy="53.7" r="1.8" fill="#2f5a50" opacity="0.55"/><circle cx="145.9" cy="26.9" r="1.4" fill="#3a6860" opacity="0.55"/><circle cx="92.6" cy="34.2" r="1.8" fill="#2f5a50" opacity="0.55"/><circle cx="9.5" cy="28.1" r="3.2" fill="#5a8a80" opacity="0.55"/><circle cx="17.5" cy="43.0" r="3.2" fill="#3a6860" opacity="0.55"/><circle cx="22.6" cy="29.3" r="2.1" fill="#4a7a70" opacity="0.55"/><circle cx="163.0" cy="19.3" r="1.9" fill="#2f5a50" opacity="0.55"/><circle cx="134.1" cy="37.7" r="3.1" fill="#3a6860" opacity="0.55"/><circle cx="135.8" cy="4.7" r="2.7" fill="#2f5a50" opacity="0.55"/><circle cx="161.1" cy="50.4" r="1.8" fill="#4a7a70" opacity="0.55"/><circle cx="200.1" cy="31.5" r="3.0" fill="#4a7a70" opacity="0.55"/><circle cx="21.3" cy="43.1" r="1.8" fill="#3a6860" opacity="0.55"/><circle cx="78.9" cy="38.8" r="1.9" fill="#4a7a70" opacity="0.55"/><circle cx="76.7" cy="33.1" r="1.9" fill="#3a6860" opacity="0.55"/><circle cx="188.3" cy="56.7" r="2.2" fill="#5a8a80" opacity="0.55"/><circle cx="152.0" cy="59.7" r="2.4" fill="#2f5a50" opacity="0.55"/><circle cx="29.5" cy="13.6" r="1.5" fill="#5a8a80" opacity="0.55"/><circle cx="18.6" cy="2.4" r="2.1" fill="#4a7a70" opacity="0.55"/><circle cx="45.4" cy="22.3" r="1.3" fill="#5a8a80" opacity="0.55"/><circle cx="29.8" cy="4.3" r="1.3" fill="#5a8a80" opacity="0.55"/><circle cx="185.2" cy="3.8" r="1.2" fill="#4a7a70" opacity="0.55"/><circle cx="188.0" cy="9.9" r="1.8" fill="#5a8a80" opacity="0.55"/><circle cx="167.3" cy="40.5" r="2.3" fill="#5a8a80" opacity="0.55"/><circle cx="17.7" cy="19.4" r="2.1" fill="#4a7a70" opacity="0.55"/><circle cx="202.7" cy="57.7" r="2.4" fill="#2f5a50" opacity="0.55"/><circle cx="150.3" cy="19.9" r="2.5" fill="#5a8a80" opacity="0.55"/><circle cx="198.2" cy="28.8" r="2.5" fill="#3a6860" opacity="0.55"/><circle cx="180.0" cy="31.8" r="2.5" fill="#4a7a70" opacity="0.55"/><circle cx="46.3" cy="44.4" r="2.6" fill="#4a7a70" opacity="0.55"/><circle cx="137.4" cy="22.3" r="2.4" fill="#5a8a80" opacity="0.55"/><circle cx="23.8" cy="10.8" r="3.0" fill="#2f5a50" opacity="0.55"/><circle cx="46.0" cy="50.2" r="2.5" fill="#4a7a70" opacity="0.55"/><path d="M50 17 L58 8 M90 20 L84 26 M150 46 L160 52" stroke="#c8d4dc" stroke-width="1" opacity="0.7"/><polygon points="44.0,34.0 70.0,24.0 100.0,28.0 100.0,60.0 30.0,60.0" fill="#8a9a80"/><rect x="58" y="30" width="12" height="10" fill="#c8ccc4"/><rect x="74" y="36" width="10" height="12" fill="#d4d6cc"/><rect x="50" y="44" width="14" height="12" fill="#c0c4b8"/><rect x="86" y="40" width="12" height="12" fill="#d0d2c8"/><rect x="66" y="50" width="10" height="8" fill="#b8bcb0"/><polygon points="101.0,28.0 112.0,25.0 122.0,28.0 122.0,60.0 101.0,60.0" fill="#b4b49c"/><polygon points="101.0,28.0 112.0,25.0 122.0,28.0 112.0,31.0" fill="#8aa070"/><polygon points="124.0,35.0 134.0,32.0 143.0,35.0 143.0,60.0 124.0,60.0" fill="#aeb09a"/><polygon points="124.0,35.0 134.0,32.0 143.0,35.0 133.0,38.0" fill="#8aa070"/><rect x="112" y="31" width="3" height="29" fill="#8a9290"/><ellipse cx="200" cy="17" rx="14" ry="10" fill="url(#cl3)"/></svg></div>
<div class="t" style="left:15px;top:773px;font-size:14px;color:#ddd">智慧产业园区</div>
<div class="t" style="left:15px;top:942px;font-size:14px;color:#ddd">智慧产业园区</div></div>
<div id="vp" class="a"><div id="model" class="a" style="left:0;top:0;width:1344px;height:785px"><svg class="a" style="left:0;top:0" width="1344" height="785" viewBox="0 0 1344 785"><defs>
<linearGradient id="gshade" x1="0" y1="0" x2="0" y2="1"><stop offset="0" stop-color="#000" stop-opacity="0.05"/><stop offset="1" stop-color="#fff" stop-opacity="0.03"/></linearGradient>
<clipPath id="rroof"><polygon points="703,193 737,193 738,185 832,185 862,191 902,316 703,316"/></clipPath>
<pattern id="brownpat" width="6" height="6" patternUnits="userSpaceOnUse"><rect width="6" height="6" fill="none"/><circle cx="2" cy="2" r="1" fill="#5e544d"/><circle cx="5" cy="5" r="0.8" fill="#8a7e75"/></pattern>
</defs><g id="mg"><polygon points="309.0,625.0 1036.0,625.0 969.0,418.0 948.0,352.0 712.0,287.0 662.0,287.0 412.0,347.0" fill="#b3b1ae" /><polygon points="665.0,372.0 693.0,372.0 693.0,497.0 747.0,497.0 747.0,513.0 710.0,513.0 713.0,623.0 742.0,623.0 742.0,513.0 747.0,513.0 747.0,497.0 693.0,497.0" fill="#6d6e72" /><rect x="665.0" y="372.0" width="28.0" height="141.0" fill="#6d6e72" /><rect x="665.0" y="497.0" width="82.0" height="16.0" fill="#6d6e72" /><polygon points="710.0,513.0 742.0,513.0 743.0,623.0 713.0,623.0" fill="#6d6e72" /><rect x="693.0" y="405.0" width="10.0" height="92.0" fill="#a9a8a6" /><polygon points="465.0,202.0 552.0,202.0 552.0,452.0 381.5,452.0" fill="#4c5160" /><polygon points="470.0,206.0 550.0,206.0 550.0,447.0 390.0,447.0" fill="none" stroke="#8a8c90" stroke-width="1" opacity="0.6"/><rect x="381.5" y="452.0" width="140.0" height="5.0" fill="#3c404a" /><rect x="386.0" y="452.0" width="150.0" height="4.0" fill="#454a55" /><rect x="392.0" y="456.0" width="140.0" height="17.0" fill="#dfe1e5" /><line x1="396.0" y1="456.0" x2="398.0" y2="473.0" stroke="#3a3d44" stroke-width="1.6" /><line x1="409.0" y1="456.0" x2="411.0" y2="473.0" stroke="#3a3d44" stroke-width="1.6" /><line x1="422.0" y1="456.0" x2="424.0" y2="473.0" stroke="#3a3d44" stroke-width="1.6" /><line x1="435.0" y1="456.0" x2="437.0" y2="473.0" stroke="#3a3d44" stroke-width="1.6" /><line x1="448.0" y1="456.0" x2="450.0" y2="473.0" stroke="#3a3d44" stroke-width="1.6" /><line x1="461.0" y1="456.0" x2="463.0" y2="473.0" stroke="#3a3d44" stroke-width="1.6" /><line x1="474.0" y1="456.0" x2="476.0" y2="473.0" stroke="#3a3d44" stroke-width="1.6" /><line x1="487.0" y1="456.0" x2="489.0" y2="473.0" stroke="#3a3d44" stroke-width="1.6" /><line x1="500.0" y1="456.0" x2="502.0" y2="473.0" stroke="#3a3d44" stroke-width="1.6" /><line x1="513.0" y1="456.0" x2="515.0" y2="473.0" stroke="#3a3d44" stroke-width="1.6" /><line x1="526.0" y1="456.0" x2="528.0" y2="473.0" stroke="#3a3d44" stroke-width="1.6" /><line x1="392.0" y1="457.0" x2="532.0" y2="457.0" stroke="#3a3d44" stroke-width="1.5" /><rect x="392.0" y="473.0" width="140.0" height="4.0" fill="#8b7b6b" /><rect x="396.0" y="477.0" width="140.0" height="3.0" fill="#4b505c" /><rect x="397.0" y="480.0" width="150.0" height="4.0" fill="#454a55" /><rect x="403.0" y="484.0" width="140.0" height="16.0" fill="#dfe1e5" /><line x1="407.0" y1="484.0" x2="409.0" y2="500.0" stroke="#3a3d44" stroke-width="1.6" /><line x1="420.0" y1="484.0" x2="422.0" y2="500.0" stroke="#3a3d44" stroke-width="1.6" /><line x1="433.0" y1="484.0" x2="435.0" y2="500.0" stroke="#3a3d44" stroke-width="1.6" /><line x1="446.0" y1="484.0" x2="448.0" y2="500.0" stroke="#3a3d44" stroke-width="1.6" /><line x1="459.0" y1="484.0" x2="461.0" y2="500.0" stroke="#3a3d44" stroke-width="1.6" /><line x1="472.0" y1="484.0" x2="474.0" y2="500.0" stroke="#3a3d44" stroke-width="1.6" /><line x1="485.0" y1="484.0" x2="487.0" y2="500.0" stroke="#3a3d44" stroke-width="1.6" /><line x1="498.0" y1="484.0" x2="500.0" y2="500.0" stroke="#3a3d44" stroke-width="1.6" /><line x1="511.0" y1="484.0" x2="513.0" y2="500.0" stroke="#3a3d44" stroke-width="1.6" /><line x1="524.0" y1="484.0" x2="526.0" y2="500.0" stroke="#3a3d44" stroke-width="1.6" /><line x1="537.0" y1="484.0" x2="539.0" y2="500.0" stroke="#3a3d44" stroke-width="1.6" /><line x1="403.0" y1="485.0" x2="543.0" y2="485.0" stroke="#3a3d44" stroke-width="1.5" /><rect x="403.0" y="500.0" width="140.0" height="4.0" fill="#8b7b6b" /><rect x="407.0" y="504.0" width="140.0" height="3.0" fill="#4b505c" /><rect x="409.0" y="507.0" width="150.0" height="4.0" fill="#454a55" /><rect x="415.0" y="511.0" width="140.0" height="13.0" fill="#dfe1e5" /><line x1="419.0" y1="511.0" x2="421.0" y2="524.0" stroke="#3a3d44" stroke-width="1.6" /><line x1="432.0" y1="511.0" x2="434.0" y2="524.0" stroke="#3a3d44" stroke-width="1.6" /><line x1="445.0" y1="511.0" x2="447.0" y2="524.0" stroke="#3a3d44" stroke-width="1.6" /><line x1="458.0" y1="511.0" x2="460.0" y2="524.0" stroke="#3a3d44" stroke-width="1.6" /><line x1="471.0" y1="511.0" x2="473.0" y2="524.0" stroke="#3a3d44" stroke-width="1.6" /><line x1="484.0" y1="511.0" x2="486.0" y2="524.0" stroke="#3a3d44" stroke-width="1.6" /><line x1="497.0" y1="511.0" x2="499.0" y2="524.0" stroke="#3a3d44" stroke-width="1.6" /><line x1="510.0" y1="511.0" x2="512.0" y2="524.0" stroke="#3a3d44" stroke-width="1.6" /><line x1="523.0" y1="511.0" x2="525.0" y2="524.0" stroke="#3a3d44" stroke-width="1.6" /><line x1="536.0" y1="511.0" x2="538.0" y2="524.0" stroke="#3a3d44" stroke-width="1.6" /><line x1="549.0" y1="511.0" x2="551.0" y2="524.0" stroke="#3a3d44" stroke-width="1.6" /><line x1="415.0" y1="512.0" x2="555.0" y2="512.0" stroke="#3a3d44" stroke-width="1.5" /><rect x="415.0" y="524.0" width="140.0" height="4.0" fill="#8b7b6b" /><rect x="419.0" y="528.0" width="140.0" height="3.0" fill="#4b505c" /><rect x="419.0" y="530.0" width="150.0" height="4.0" fill="#454a55" /><rect x="425.0" y="534.0" width="140.0" height="14.0" fill="#dfe1e5" /><line x1="429.0" y1="534.0" x2="431.0" y2="548.0" stroke="#3a3d44" stroke-width="1.6" /><line x1="442.0" y1="534.0" x2="444.0" y2="548.0" stroke="#3a3d44" stroke-width="1.6" /><line x1="455.0" y1="534.0" x2="457.0" y2="548.0" stroke="#3a3d44" stroke-width="1.6" /><line x1="468.0" y1="534.0" x2="470.0" y2="548.0" stroke="#3a3d44" stroke-width="1.6" /><line x1="481.0" y1="534.0" x2="483.0" y2="548.0" stroke="#3a3d44" stroke-width="1.6" /><line x1="494.0" y1="534.0" x2="496.0" y2="548.0" stroke="#3a3d44" stroke-width="1.6" /><line x1="507.0" y1="534.0" x2="509.0" y2="548.0" stroke="#3a3d44" stroke-width="1.6" /><line x1="520.0" y1="534.0" x2="522.0" y2="548.0" stroke="#3a3d44" stroke-width="1.6" /><line x1="533.0" y1="534.0" x2="535.0" y2="548.0" stroke="#3a3d44" stroke-width="1.6" /><line x1="546.0" y1="534.0" x2="548.0" y2="548.0" stroke="#3a3d44" stroke-width="1.6" /><line x1="559.0" y1="534.0" x2="561.0" y2="548.0" stroke="#3a3d44" stroke-width="1.6" /><line x1="425.0" y1="535.0" x2="565.0" y2="535.0" stroke="#3a3d44" stroke-width="1.5" /><rect x="425.0" y="548.0" width="140.0" height="4.0" fill="#8b7b6b" /><rect x="429.0" y="552.0" width="140.0" height="3.0" fill="#4b505c" /><polygon points="438.7,263.0 449.0,263.0 439.4,294.0 428.3,294.0" fill="#b9b5a4" /><polygon points="428.3,294.0 439.4,294.0 435.0,310.0 424.0,310.0" fill="#6c5d52" /><polygon points="421.6,313.0 432.0,313.0 420.0,349.0 409.0,349.0" fill="#b9b5a4" /><rect x="664.0" y="281.0" width="41.0" height="16.0" fill="#a3a4a6" /><rect x="664.0" y="297.0" width="41.0" height="12.0" fill="#7d838a" /><rect x="664.0" y="309.0" width="41.0" height="12.0" fill="#d4d5d7" /><rect x="664.0" y="321.0" width="41.0" height="6.0" fill="#a9aaac" /><rect x="664.0" y="327.0" width="41.0" height="12.0" fill="#7d838a" /><rect x="664.0" y="339.0" width="41.0" height="12.0" fill="#d4d5d7" /><rect x="664.0" y="351.0" width="41.0" height="14.0" fill="#7d838a" /><rect x="664.0" y="365.0" width="41.0" height="11.0" fill="#d4d5d7" /><rect x="664.0" y="376.0" width="41.0" height="3.0" fill="#a9aaac" /><rect x="664.0" y="379.0" width="41.0" height="11.0" fill="#7d838a" /><rect x="664.0" y="390.0" width="41.0" height="15.0" fill="#c6c7c9" /><rect x="659.0" y="405.0" width="12.0" height="73.0" fill="#7fa6a0" /><polygon points="554.0,165.0 664.0,166.0 662.0,432.0 499.0,432.0" fill="#e9d6ca" /><line x1="566.2" y1="166.0" x2="517.1" y2="432.0" stroke="#d8c2b4" stroke-width="0.8" /><line x1="578.4" y1="166.0" x2="535.2" y2="432.0" stroke="#d8c2b4" stroke-width="0.8" /><line x1="590.7" y1="166.0" x2="553.3" y2="432.0" stroke="#d8c2b4" stroke-width="0.8" /><line x1="602.9" y1="166.0" x2="571.4" y2="432.0" stroke="#d8c2b4" stroke-width="0.8" /><line x1="615.1" y1="166.0" x2="589.6" y2="432.0" stroke="#d8c2b4" stroke-width="0.8" /><line x1="627.3" y1="166.0" x2="607.7" y2="432.0" stroke="#d8c2b4" stroke-width="0.8" /><line x1="639.6" y1="166.0" x2="625.8" y2="432.0" stroke="#d8c2b4" stroke-width="0.8" /><line x1="651.8" y1="166.0" x2="643.9" y2="432.0" stroke="#d8c2b4" stroke-width="0.8" /><line x1="551.5" y1="177.1" x2="663.0" y2="177.1" stroke="#d8c2b4" stroke-width="0.8" /><line x1="549.0" y1="189.3" x2="663.0" y2="189.3" stroke="#d8c2b4" stroke-width="0.8" /><line x1="546.5" y1="201.4" x2="663.0" y2="201.4" stroke="#d8c2b4" stroke-width="0.8" /><line x1="544.0" y1="213.5" x2="663.0" y2="213.5" stroke="#d8c2b4" stroke-width="0.8" /><line x1="541.5" y1="225.7" x2="663.0" y2="225.7" stroke="#d8c2b4" stroke-width="0.8" /><line x1="539.0" y1="237.8" x2="663.0" y2="237.8" stroke="#d8c2b4" stroke-width="0.8" /><line x1="536.5" y1="250.0" x2="663.0" y2="250.0" stroke="#d8c2b4" stroke-width="0.8" /><line x1="534.0" y1="262.1" x2="663.0" y2="262.1" stroke="#d8c2b4" stroke-width="0.8" /><line x1="531.5" y1="274.2" x2="663.0" y2="274.2" stroke="#d8c2b4" stroke-width="0.8" /><line x1="529.0" y1="286.4" x2="663.0" y2="286.4" stroke="#d8c2b4" stroke-width="0.8" /><line x1="526.5" y1="298.5" x2="663.0" y2="298.5" stroke="#d8c2b4" stroke-width="0.8" /><line x1="524.0" y1="310.6" x2="663.0" y2="310.6" stroke="#d8c2b4" stroke-width="0.8" /><line x1="521.5" y1="322.8" x2="663.0" y2="322.8" stroke="#d8c2b4" stroke-width="0.8" /><line x1="519.0" y1="334.9" x2="663.0" y2="334.9" stroke="#d8c2b4" stroke-width="0.8" /><line x1="516.5" y1="347.0" x2="663.0" y2="347.0" stroke="#d8c2b4" stroke-width="0.8" /><line x1="514.0" y1="359.2" x2="663.0" y2="359.2" stroke="#d8c2b4" stroke-width="0.8" /><line x1="511.5" y1="371.3" x2="663.0" y2="371.3" stroke="#d8c2b4" stroke-width="0.8" /><line x1="509.0" y1="383.5" x2="663.0" y2="383.5" stroke="#d8c2b4" stroke-width="0.8" /><line x1="506.5" y1="395.6" x2="663.0" y2="395.6" stroke="#d8c2b4" stroke-width="0.8" /><line x1="504.0" y1="407.7" x2="663.0" y2="407.7" stroke="#d8c2b4" stroke-width="0.8" /><line x1="501.5" y1="419.9" x2="663.0" y2="419.9" stroke="#d8c2b4" stroke-width="0.8" /><line x1="560.0" y1="171.0" x2="508.0" y2="426.0" stroke="#7d8088" stroke-width="2.2" stroke-dasharray="9 6"/><line x1="658.0" y1="174.0" x2="658.0" y2="272.0" stroke="#7d8088" stroke-width="1.6" stroke-dasharray="14 8"/><line x1="560.0" y1="171.0" x2="656.0" y2="171.0" stroke="#9a9ea4" stroke-width="1.4" /><polygon points="512.0,432.0 658.0,432.0 658.0,488.0 526.0,488.0" fill="#e4c9bb" /><rect x="521.5" y="434.0" width="15.0" height="19.0" fill="#e9ebee" /><line x1="528.5" y1="434.0" x2="528.5" y2="453.0" stroke="#3b3e45" stroke-width="1.3" /><line x1="521.5" y1="443.5" x2="536.5" y2="443.5" stroke="#3b3e45" stroke-width="1" /><rect x="521.5" y="434.0" width="15.0" height="19.0" fill="none" stroke="#3b3e45" stroke-width="1"/><rect x="541.0" y="434.0" width="15.0" height="19.0" fill="#e9ebee" /><line x1="548.0" y1="434.0" x2="548.0" y2="453.0" stroke="#3b3e45" stroke-width="1.3" /><line x1="541.0" y1="443.5" x2="556.0" y2="443.5" stroke="#3b3e45" stroke-width="1" /><rect x="541.0" y="434.0" width="15.0" height="19.0" fill="none" stroke="#3b3e45" stroke-width="1"/><rect x="560.5" y="434.0" width="15.0" height="19.0" fill="#e9ebee" /><line x1="567.5" y1="434.0" x2="567.5" y2="453.0" stroke="#3b3e45" stroke-width="1.3" /><line x1="560.5" y1="443.5" x2="575.5" y2="443.5" stroke="#3b3e45" stroke-width="1" /><rect x="560.5" y="434.0" width="15.0" height="19.0" fill="none" stroke="#3b3e45" stroke-width="1"/><rect x="580.0" y="434.0" width="15.0" height="19.0" fill="#e9ebee" /><line x1="587.0" y1="434.0" x2="587.0" y2="453.0" stroke="#3b3e45" stroke-width="1.3" /><line x1="580.0" y1="443.5" x2="595.0" y2="443.5" stroke="#3b3e45" stroke-width="1" /><rect x="580.0" y="434.0" width="15.0" height="19.0" fill="none" stroke="#3b3e45" stroke-width="1"/><rect x="599.5" y="434.0" width="15.0" height="19.0" fill="#e9ebee" /><line x1="606.5" y1="434.0" x2="606.5" y2="453.0" stroke="#3b3e45" stroke-width="1.3" /><line x1="599.5" y1="443.5" x2="614.5" y2="443.5" stroke="#3b3e45" stroke-width="1" /><rect x="599.5" y="434.0" width="15.0" height="19.0" fill="none" stroke="#3b3e45" stroke-width="1"/><rect x="619.0" y="434.0" width="15.0" height="19.0" fill="#e9ebee" /><line x1="626.0" y1="434.0" x2="626.0" y2="453.0" stroke="#3b3e45" stroke-width="1.3" /><line x1="619.0" y1="443.5" x2="634.0" y2="443.5" stroke="#3b3e45" stroke-width="1" /><rect x="619.0" y="434.0" width="15.0" height="19.0" fill="none" stroke="#3b3e45" stroke-width="1"/><rect x="638.5" y="434.0" width="15.0" height="19.0" fill="#e9ebee" /><line x1="645.5" y1="434.0" x2="645.5" y2="453.0" stroke="#3b3e45" stroke-width="1.3" /><line x1="638.5" y1="443.5" x2="653.5" y2="443.5" stroke="#3b3e45" stroke-width="1" /><rect x="638.5" y="434.0" width="15.0" height="19.0" fill="none" stroke="#3b3e45" stroke-width="1"/><rect x="529.2" y="465.0" width="15.0" height="13.0" fill="#e9ebee" /><line x1="536.2" y1="465.0" x2="536.2" y2="478.0" stroke="#3b3e45" stroke-width="1.3" /><line x1="529.2" y1="471.5" x2="544.2" y2="471.5" stroke="#3b3e45" stroke-width="1" /><rect x="529.2" y="465.0" width="15.0" height="13.0" fill="none" stroke="#3b3e45" stroke-width="1"/><rect x="548.8" y="465.0" width="15.0" height="13.0" fill="#e9ebee" /><line x1="555.8" y1="465.0" x2="555.8" y2="478.0" stroke="#3b3e45" stroke-width="1.3" /><line x1="548.8" y1="471.5" x2="563.8" y2="471.5" stroke="#3b3e45" stroke-width="1" /><rect x="548.8" y="465.0" width="15.0" height="13.0" fill="none" stroke="#3b3e45" stroke-width="1"/><rect x="568.2" y="465.0" width="15.0" height="13.0" fill="#e9ebee" /><line x1="575.2" y1="465.0" x2="575.2" y2="478.0" stroke="#3b3e45" stroke-width="1.3" /><line x1="568.2" y1="471.5" x2="583.2" y2="471.5" stroke="#3b3e45" stroke-width="1" /><rect x="568.2" y="465.0" width="15.0" height="13.0" fill="none" stroke="#3b3e45" stroke-width="1"/><rect x="587.8" y="465.0" width="15.0" height="13.0" fill="#e9ebee" /><line x1="594.8" y1="465.0" x2="594.8" y2="478.0" stroke="#3b3e45" stroke-width="1.3" /><line x1="587.8" y1="471.5" x2="602.8" y2="471.5" stroke="#3b3e45" stroke-width="1" /><rect x="587.8" y="465.0" width="15.0" height="13.0" fill="none" stroke="#3b3e45" stroke-width="1"/><rect x="607.2" y="465.0" width="15.0" height="13.0" fill="#e9ebee" /><line x1="614.2" y1="465.0" x2="614.2" y2="478.0" stroke="#3b3e45" stroke-width="1.3" /><line x1="607.2" y1="471.5" x2="622.2" y2="471.5" stroke="#3b3e45" stroke-width="1" /><rect x="607.2" y="465.0" width="15.0" height="13.0" fill="none" stroke="#3b3e45" stroke-width="1"/><rect x="626.8" y="465.0" width="15.0" height="13.0" fill="#e9ebee" /><line x1="633.8" y1="465.0" x2="633.8" y2="478.0" stroke="#3b3e45" stroke-width="1.3" /><line x1="626.8" y1="471.5" x2="641.8" y2="471.5" stroke="#3b3e45" stroke-width="1" /><rect x="626.8" y="465.0" width="15.0" height="13.0" fill="none" stroke="#3b3e45" stroke-width="1"/><rect x="646.2" y="465.0" width="15.0" height="13.0" fill="#e9ebee" /><line x1="653.2" y1="465.0" x2="653.2" y2="478.0" stroke="#3b3e45" stroke-width="1.3" /><line x1="646.2" y1="471.5" x2="661.2" y2="471.5" stroke="#3b3e45" stroke-width="1" /><rect x="646.2" y="465.0" width="15.0" height="13.0" fill="none" stroke="#3b3e45" stroke-width="1"/><rect x="526.0" y="488.0" width="14.0" height="71.0" fill="#6a5b52" /><rect x="645.0" y="488.0" width="13.0" height="71.0" fill="#6a5b52" /><rect x="540.0" y="488.0" width="107.0" height="18.0" fill="#e6e8ec" /><line x1="542.0" y1="488.0" x2="542.0" y2="506.0" stroke="#3b3e45" stroke-width="1.5" /><line x1="556.0" y1="488.0" x2="556.0" y2="506.0" stroke="#3b3e45" stroke-width="1.5" /><line x1="570.0" y1="488.0" x2="570.0" y2="506.0" stroke="#3b3e45" stroke-width="1.5" /><line x1="584.0" y1="488.0" x2="584.0" y2="506.0" stroke="#3b3e45" stroke-width="1.5" /><line x1="598.0" y1="488.0" x2="598.0" y2="506.0" stroke="#3b3e45" stroke-width="1.5" /><line x1="612.0" y1="488.0" x2="612.0" y2="506.0" stroke="#3b3e45" stroke-width="1.5" /><line x1="626.0" y1="488.0" x2="626.0" y2="506.0" stroke="#3b3e45" stroke-width="1.5" /><line x1="640.0" y1="488.0" x2="640.0" y2="506.0" stroke="#3b3e45" stroke-width="1.5" /><rect x="538.0" y="506.0" width="110.0" height="10.0" fill="#a9abae" /><rect x="538.0" y="516.0" width="110.0" height="7.0" fill="#8fb3ae" /><rect x="540.0" y="524.0" width="107.0" height="7.0" fill="#e6e8ec" /><rect x="538.0" y="531.0" width="110.0" height="9.0" fill="#4b505c" /><rect x="538.0" y="541.0" width="110.0" height="6.0" fill="#3f8f85" /><rect x="544.0" y="548.0" width="103.0" height="7.0" fill="#e6e8ec" /><line x1="544.0" y1="548.0" x2="544.0" y2="555.0" stroke="#3b3e45" stroke-width="1.2" /><line x1="557.5" y1="548.0" x2="557.5" y2="555.0" stroke="#3b3e45" stroke-width="1.2" /><line x1="571.0" y1="548.0" x2="571.0" y2="555.0" stroke="#3b3e45" stroke-width="1.2" /><line x1="584.5" y1="548.0" x2="584.5" y2="555.0" stroke="#3b3e45" stroke-width="1.2" /><line x1="598.0" y1="548.0" x2="598.0" y2="555.0" stroke="#3b3e45" stroke-width="1.2" /><line x1="611.5" y1="548.0" x2="611.5" y2="555.0" stroke="#3b3e45" stroke-width="1.2" /><line x1="625.0" y1="548.0" x2="625.0" y2="555.0" stroke="#3b3e45" stroke-width="1.2" /><line x1="638.5" y1="548.0" x2="638.5" y2="555.0" stroke="#3b3e45" stroke-width="1.2" /><polygon points="862.0,223.0 903.0,224.0 948.0,344.0 862.0,344.0" fill="#4c5160" /><polygon points="866.0,227.0 900.0,228.0 941.0,341.0 866.0,341.0" fill="none" stroke="#8a8c90" stroke-width="1" opacity="0.6"/><polygon points="749.0,344.0 948.0,344.0 945.0,352.0 749.0,352.0" fill="#3f434d" /><polygon points="749.0,352.0 939.0,352.0 936.0,370.5 749.0,370.5" fill="#dfe1e5" /><line x1="754.0" y1="352.0" x2="755.0" y2="370.5" stroke="#3a3d44" stroke-width="1.5" /><line x1="766.5" y1="352.0" x2="767.5" y2="370.5" stroke="#3a3d44" stroke-width="1.5" /><line x1="779.0" y1="352.0" x2="780.0" y2="370.5" stroke="#3a3d44" stroke-width="1.5" /><line x1="791.5" y1="352.0" x2="792.5" y2="370.5" stroke="#3a3d44" stroke-width="1.5" /><line x1="804.0" y1="352.0" x2="805.0" y2="370.5" stroke="#3a3d44" stroke-width="1.5" /><line x1="816.5" y1="352.0" x2="817.5" y2="370.5" stroke="#3a3d44" stroke-width="1.5" /><line x1="829.0" y1="352.0" x2="830.0" y2="370.5" stroke="#3a3d44" stroke-width="1.5" /><line x1="841.5" y1="352.0" x2="842.5" y2="370.5" stroke="#3a3d44" stroke-width="1.5" /><line x1="854.0" y1="352.0" x2="855.0" y2="370.5" stroke="#3a3d44" stroke-width="1.5" /><line x1="866.5" y1="352.0" x2="867.5" y2="370.5" stroke="#3a3d44" stroke-width="1.5" /><line x1="879.0" y1="352.0" x2="880.0" y2="370.5" stroke="#3a3d44" stroke-width="1.5" /><line x1="891.5" y1="352.0" x2="892.5" y2="370.5" stroke="#3a3d44" stroke-width="1.5" /><line x1="904.0" y1="352.0" x2="905.0" y2="370.5" stroke="#3a3d44" stroke-width="1.5" /><line x1="916.5" y1="352.0" x2="917.5" y2="370.5" stroke="#3a3d44" stroke-width="1.5" /><line x1="929.0" y1="352.0" x2="930.0" y2="370.5" stroke="#3a3d44" stroke-width="1.5" /><rect x="749.0" y="368.5" width="187.0" height="2.0" fill="#8b7b6b" /><polygon points="749.0,370.5 934.0,370.5 931.0,379.0 749.0,379.0" fill="#454a55" /><polygon points="749.0,381.0 928.0,381.0 925.0,399.0 749.0,399.0" fill="#dfe1e5" /><line x1="754.0" y1="381.0" x2="755.0" y2="399.0" stroke="#3a3d44" stroke-width="1.5" /><line x1="766.5" y1="381.0" x2="767.5" y2="399.0" stroke="#3a3d44" stroke-width="1.5" /><line x1="779.0" y1="381.0" x2="780.0" y2="399.0" stroke="#3a3d44" stroke-width="1.5" /><line x1="791.5" y1="381.0" x2="792.5" y2="399.0" stroke="#3a3d44" stroke-width="1.5" /><line x1="804.0" y1="381.0" x2="805.0" y2="399.0" stroke="#3a3d44" stroke-width="1.5" /><line x1="816.5" y1="381.0" x2="817.5" y2="399.0" stroke="#3a3d44" stroke-width="1.5" /><line x1="829.0" y1="381.0" x2="830.0" y2="399.0" stroke="#3a3d44" stroke-width="1.5" /><line x1="841.5" y1="381.0" x2="842.5" y2="399.0" stroke="#3a3d44" stroke-width="1.5" /><line x1="854.0" y1="381.0" x2="855.0" y2="399.0" stroke="#3a3d44" stroke-width="1.5" /><line x1="866.5" y1="381.0" x2="867.5" y2="399.0" stroke="#3a3d44" stroke-width="1.5" /><line x1="879.0" y1="381.0" x2="880.0" y2="399.0" stroke="#3a3d44" stroke-width="1.5" /><line x1="891.5" y1="381.0" x2="892.5" y2="399.0" stroke="#3a3d44" stroke-width="1.5" /><line x1="904.0" y1="381.0" x2="905.0" y2="399.0" stroke="#3a3d44" stroke-width="1.5" /><line x1="916.5" y1="381.0" x2="917.5" y2="399.0" stroke="#3a3d44" stroke-width="1.5" /><rect x="749.0" y="397.0" width="176.0" height="2.0" fill="#8b7b6b" /><polygon points="749.0,399.0 924.0,399.0 921.0,406.0 749.0,406.0" fill="#454a55" /><polygon points="749.0,407.5 919.0,407.5 916.0,424.0 749.0,424.0" fill="#dfe1e5" /><line x1="754.0" y1="407.5" x2="755.0" y2="424.0" stroke="#3a3d44" stroke-width="1.5" /><line x1="766.5" y1="407.5" x2="767.5" y2="424.0" stroke="#3a3d44" stroke-width="1.5" /><line x1="779.0" y1="407.5" x2="780.0" y2="424.0" stroke="#3a3d44" stroke-width="1.5" /><line x1="791.5" y1="407.5" x2="792.5" y2="424.0" stroke="#3a3d44" stroke-width="1.5" /><line x1="804.0" y1="407.5" x2="805.0" y2="424.0" stroke="#3a3d44" stroke-width="1.5" /><line x1="816.5" y1="407.5" x2="817.5" y2="424.0" stroke="#3a3d44" stroke-width="1.5" /><line x1="829.0" y1="407.5" x2="830.0" y2="424.0" stroke="#3a3d44" stroke-width="1.5" /><line x1="841.5" y1="407.5" x2="842.5" y2="424.0" stroke="#3a3d44" stroke-width="1.5" /><line x1="854.0" y1="407.5" x2="855.0" y2="424.0" stroke="#3a3d44" stroke-width="1.5" /><line x1="866.5" y1="407.5" x2="867.5" y2="424.0" stroke="#3a3d44" stroke-width="1.5" /><line x1="879.0" y1="407.5" x2="880.0" y2="424.0" stroke="#3a3d44" stroke-width="1.5" /><line x1="891.5" y1="407.5" x2="892.5" y2="424.0" stroke="#3a3d44" stroke-width="1.5" /><line x1="904.0" y1="407.5" x2="905.0" y2="424.0" stroke="#3a3d44" stroke-width="1.5" /><rect x="749.0" y="422.0" width="167.0" height="2.0" fill="#8b7b6b" /><polygon points="749.0,424.0 915.0,424.0 912.0,431.0 749.0,431.0" fill="#454a55" /><polygon points="749.0,432.7 910.0,432.7 907.0,449.0 749.0,449.0" fill="#dfe1e5" /><line x1="754.0" y1="432.7" x2="755.0" y2="449.0" stroke="#3a3d44" stroke-width="1.5" /><line x1="766.5" y1="432.7" x2="767.5" y2="449.0" stroke="#3a3d44" stroke-width="1.5" /><line x1="779.0" y1="432.7" x2="780.0" y2="449.0" stroke="#3a3d44" stroke-width="1.5" /><line x1="791.5" y1="432.7" x2="792.5" y2="449.0" stroke="#3a3d44" stroke-width="1.5" /><line x1="804.0" y1="432.7" x2="805.0" y2="449.0" stroke="#3a3d44" stroke-width="1.5" /><line x1="816.5" y1="432.7" x2="817.5" y2="449.0" stroke="#3a3d44" stroke-width="1.5" /><line x1="829.0" y1="432.7" x2="830.0" y2="449.0" stroke="#3a3d44" stroke-width="1.5" /><line x1="841.5" y1="432.7" x2="842.5" y2="449.0" stroke="#3a3d44" stroke-width="1.5" /><line x1="854.0" y1="432.7" x2="855.0" y2="449.0" stroke="#3a3d44" stroke-width="1.5" /><line x1="866.5" y1="432.7" x2="867.5" y2="449.0" stroke="#3a3d44" stroke-width="1.5" /><line x1="879.0" y1="432.7" x2="880.0" y2="449.0" stroke="#3a3d44" stroke-width="1.5" /><line x1="891.5" y1="432.7" x2="892.5" y2="449.0" stroke="#3a3d44" stroke-width="1.5" /><line x1="904.0" y1="432.7" x2="905.0" y2="449.0" stroke="#3a3d44" stroke-width="1.5" /><rect x="749.0" y="447.0" width="158.0" height="2.0" fill="#8b7b6b" /><polygon points="698.0,200.0 703.0,193.0 703.0,452.0 698.0,452.0" fill="#5f5650" /><polygon points="703.0,193.0 737.0,193.0 738.0,185.0 832.0,185.0 862.0,191.0 902.0,316.0 703.0,316.0" fill="#e9d6ca" /><line x1="703.0" y1="197.0" x2="863.3" y2="197.0" stroke="#d8c2b4" stroke-width="0.8" /><line x1="703.0" y1="209.0" x2="867.2" y2="209.0" stroke="#d8c2b4" stroke-width="0.8" /><line x1="703.0" y1="221.0" x2="871.1" y2="221.0" stroke="#d8c2b4" stroke-width="0.8" /><line x1="703.0" y1="233.0" x2="875.0" y2="233.0" stroke="#d8c2b4" stroke-width="0.8" /><line x1="703.0" y1="245.0" x2="878.9" y2="245.0" stroke="#d8c2b4" stroke-width="0.8" /><line x1="703.0" y1="257.0" x2="882.8" y2="257.0" stroke="#d8c2b4" stroke-width="0.8" /><line x1="703.0" y1="269.0" x2="886.7" y2="269.0" stroke="#d8c2b4" stroke-width="0.8" /><line x1="703.0" y1="281.0" x2="890.6" y2="281.0" stroke="#d8c2b4" stroke-width="0.8" /><line x1="703.0" y1="293.0" x2="894.5" y2="293.0" stroke="#d8c2b4" stroke-width="0.8" /><line x1="703.0" y1="305.0" x2="898.4" y2="305.0" stroke="#d8c2b4" stroke-width="0.8" /><g clip-path="url(#rroof)"><line x1="715.5" y1="185.0" x2="716.4" y2="316.0" stroke="#d8c2b4" stroke-width="0.8" /><line x1="728.0" y1="185.0" x2="729.8" y2="316.0" stroke="#d8c2b4" stroke-width="0.8" /><line x1="740.5" y1="185.0" x2="743.2" y2="316.0" stroke="#d8c2b4" stroke-width="0.8" /><line x1="753.0" y1="185.0" x2="756.6" y2="316.0" stroke="#d8c2b4" stroke-width="0.8" /><line x1="765.5" y1="185.0" x2="770.0" y2="316.0" stroke="#d8c2b4" stroke-width="0.8" /><line x1="778.0" y1="185.0" x2="783.4" y2="316.0" stroke="#d8c2b4" stroke-width="0.8" /><line x1="790.5" y1="185.0" x2="796.8" y2="316.0" stroke="#d8c2b4" stroke-width="0.8" /><line x1="803.0" y1="185.0" x2="810.2" y2="316.0" stroke="#d8c2b4" stroke-width="0.8" /><line x1="815.5" y1="185.0" x2="823.6" y2="316.0" stroke="#d8c2b4" stroke-width="0.8" /><line x1="828.0" y1="185.0" x2="837.0" y2="316.0" stroke="#d8c2b4" stroke-width="0.8" /><line x1="840.5" y1="185.0" x2="850.4" y2="316.0" stroke="#d8c2b4" stroke-width="0.8" /><line x1="853.0" y1="185.0" x2="863.8" y2="316.0" stroke="#d8c2b4" stroke-width="0.8" /><line x1="865.5" y1="185.0" x2="877.2" y2="316.0" stroke="#d8c2b4" stroke-width="0.8" /><line x1="878.0" y1="185.0" x2="890.6" y2="316.0" stroke="#d8c2b4" stroke-width="0.8" /><line x1="890.5" y1="185.0" x2="904.0" y2="316.0" stroke="#d8c2b4" stroke-width="0.8" /></g><rect x="749.0" y="316.0" width="137.0" height="28.0" fill="#e4c9bb" /><rect x="754.0" y="320.0" width="11.0" height="20.0" fill="#e6e8ec" /><rect x="768.5" y="320.0" width="11.0" height="20.0" fill="#e6e8ec" /><rect x="783.0" y="320.0" width="11.0" height="20.0" fill="#e6e8ec" /><rect x="797.5" y="320.0" width="11.0" height="20.0" fill="#e6e8ec" /><rect x="812.0" y="320.0" width="11.0" height="20.0" fill="#e6e8ec" /><rect x="826.5" y="320.0" width="11.0" height="20.0" fill="#e6e8ec" /><rect x="841.0" y="320.0" width="11.0" height="20.0" fill="#e6e8ec" /><rect x="855.5" y="320.0" width="11.0" height="20.0" fill="#e6e8ec" /><polygon points="703.0,316.0 749.0,316.0 749.0,452.0 702.0,452.0" fill="#73675f" /><polygon points="703.0,316.0 749.0,316.0 749.0,452.0 702.0,452.0" fill="url(#brownpat)" /><polygon points="749.0,450.0 910.0,450.0 890.0,536.0 749.0,536.0" fill="#c7854d" /><line x1="740.0" y1="459.0" x2="908.0" y2="459.0" stroke="#b27440" stroke-width="1" /><line x1="740.0" y1="468.0" x2="908.0" y2="468.0" stroke="#b27440" stroke-width="1" /><line x1="740.0" y1="477.0" x2="908.0" y2="477.0" stroke="#b27440" stroke-width="1" /><line x1="740.0" y1="486.0" x2="908.0" y2="486.0" stroke="#b27440" stroke-width="1" /><line x1="740.0" y1="495.0" x2="908.0" y2="495.0" stroke="#b27440" stroke-width="1" /><line x1="740.0" y1="504.0" x2="908.0" y2="504.0" stroke="#b27440" stroke-width="1" /><line x1="740.0" y1="513.0" x2="908.0" y2="513.0" stroke="#b27440" stroke-width="1" /><line x1="740.0" y1="522.0" x2="908.0" y2="522.0" stroke="#b27440" stroke-width="1" /><line x1="740.0" y1="531.0" x2="908.0" y2="531.0" stroke="#b27440" stroke-width="1" /><polygon points="948.0,354.0 958.0,352.0 968.0,366.0 977.0,392.0 973.0,420.0 980.0,440.0 991.0,480.0 980.0,492.0 962.0,422.0 948.0,372.0" fill="#bcd6e0" /><ellipse cx="430.0" cy="278.0" rx="5.1" ry="6.8" fill="#4f7232" /><ellipse cx="430.3" cy="283.5" rx="2.1" ry="1.9" fill="#587f3a"/><ellipse cx="425.5" cy="273.3" rx="2.3" ry="1.3" fill="#9cbf70"/><ellipse cx="429.1" cy="272.6" rx="2.0" ry="2.4" fill="#9cbf70"/><ellipse cx="430.2" cy="280.6" rx="2.0" ry="1.0" fill="#7fa452"/><ellipse cx="430.3" cy="275.4" rx="1.8" ry="1.0" fill="#86ab5a"/><ellipse cx="432.5" cy="274.2" rx="3.0" ry="1.6" fill="#96b868"/><ellipse cx="430.9" cy="273.3" rx="2.1" ry="2.5" fill="#6f9a48"/><ellipse cx="431.1" cy="276.6" rx="2.2" ry="1.4" fill="#4a6c30"/><ellipse cx="427.6" cy="271.9" rx="2.0" ry="2.3" fill="#9cbf70"/><ellipse cx="426.3" cy="275.5" rx="1.7" ry="1.5" fill="#6f9a48"/><ellipse cx="430.6" cy="277.5" rx="3.2" ry="2.1" fill="#5a8238"/><ellipse cx="432.8" cy="284.2" rx="2.3" ry="2.1" fill="#587f3a"/><ellipse cx="431.3" cy="284.9" rx="1.8" ry="1.1" fill="#4f7236"/><ellipse cx="433.6" cy="271.7" rx="2.8" ry="1.7" fill="#9cbf70"/><ellipse cx="431.7" cy="281.1" rx="2.9" ry="1.1" fill="#4f7236"/><ellipse cx="429.3" cy="277.2" rx="2.4" ry="1.9" fill="#96b868"/><ellipse cx="432.5" cy="276.2" rx="3.2" ry="1.5" fill="#4a6c30"/><ellipse cx="433.9" cy="280.7" rx="3.1" ry="1.5" fill="#3e5c2a"/><ellipse cx="429.6" cy="284.4" rx="1.8" ry="2.5" fill="#4f7236"/><ellipse cx="432.7" cy="275.3" rx="2.9" ry="1.6" fill="#6a9444"/><ellipse cx="420.0" cy="308.0" rx="11.049999999999999" ry="10.2" fill="#4f7232" /><ellipse cx="426.9" cy="300.9" rx="2.4" ry="2.5" fill="#3a5626"/><ellipse cx="412.2" cy="307.7" rx="1.7" ry="1.5" fill="#6f9a48"/><ellipse cx="428.7" cy="306.9" rx="1.2" ry="1.7" fill="#4f7236"/><ellipse cx="418.9" cy="307.4" rx="2.4" ry="1.2" fill="#7fa452"/><ellipse cx="415.5" cy="303.4" rx="3.0" ry="2.0" fill="#6f9a48"/><ellipse cx="418.5" cy="315.7" rx="1.3" ry="2.1" fill="#7fa452"/><ellipse cx="425.5" cy="306.8" rx="1.8" ry="2.0" fill="#6a9444"/><ellipse cx="422.1" cy="311.9" rx="1.9" ry="2.0" fill="#527636"/><ellipse cx="417.7" cy="314.4" rx="2.8" ry="2.6" fill="#527636"/><ellipse cx="418.4" cy="304.8" rx="2.5" ry="1.4" fill="#86ab5a"/><ellipse cx="415.2" cy="316.4" rx="2.6" ry="1.2" fill="#96b868"/><ellipse cx="417.1" cy="313.6" rx="1.6" ry="2.3" fill="#527636"/><ellipse cx="422.8" cy="307.4" rx="2.5" ry="2.4" fill="#96b868"/><ellipse cx="414.9" cy="309.5" rx="1.3" ry="2.5" fill="#3a5626"/><ellipse cx="415.4" cy="317.9" rx="1.6" ry="1.4" fill="#7fa452"/><ellipse cx="423.5" cy="299.4" rx="1.9" ry="1.2" fill="#6f9a48"/><ellipse cx="417.1" cy="318.1" rx="1.9" ry="1.7" fill="#4f7236"/><ellipse cx="413.3" cy="311.4" rx="1.5" ry="1.0" fill="#6a9444"/><ellipse cx="431.3" cy="304.1" rx="2.3" ry="2.6" fill="#4f7236"/><ellipse cx="419.7" cy="306.5" rx="2.9" ry="2.1" fill="#6a9444"/><ellipse cx="413.9" cy="307.3" rx="2.9" ry="2.4" fill="#86ab5a"/><ellipse cx="423.6" cy="307.4" rx="1.3" ry="2.4" fill="#4a6c30"/><ellipse cx="415.7" cy="297.3" rx="1.3" ry="1.8" fill="#6f9a48"/><ellipse cx="426.2" cy="313.5" rx="1.2" ry="1.9" fill="#587f3a"/><ellipse cx="431.6" cy="311.7" rx="1.5" ry="2.6" fill="#4f7236"/><ellipse cx="408.9" cy="305.3" rx="1.6" ry="1.2" fill="#9cbf70"/><ellipse cx="422.8" cy="305.8" rx="2.8" ry="2.5" fill="#4a6c30"/><ellipse cx="424.0" cy="298.0" rx="2.5" ry="2.4" fill="#9cbf70"/><ellipse cx="425.7" cy="309.7" rx="2.3" ry="1.7" fill="#587f3a"/><ellipse cx="409.0" cy="309.7" rx="2.8" ry="1.1" fill="#86ab5a"/><ellipse cx="428.0" cy="310.4" rx="1.4" ry="1.8" fill="#587f3a"/><ellipse cx="417.4" cy="313.5" rx="2.0" ry="1.6" fill="#5a8238"/><ellipse cx="418.0" cy="313.1" rx="2.1" ry="1.2" fill="#5a8238"/><ellipse cx="430.7" cy="308.2" rx="2.3" ry="1.1" fill="#3e5c2a"/><ellipse cx="410.3" cy="310.3" rx="2.5" ry="1.1" fill="#9cbf70"/><ellipse cx="421.7" cy="306.7" rx="2.2" ry="2.1" fill="#96b868"/><ellipse cx="410.8" cy="312.6" rx="1.7" ry="1.9" fill="#86ab5a"/><ellipse cx="419.1" cy="305.7" rx="1.6" ry="1.2" fill="#6a9444"/><ellipse cx="426.5" cy="309.1" rx="1.4" ry="2.1" fill="#4f7236"/><ellipse cx="430.0" cy="304.3" rx="3.0" ry="2.3" fill="#527636"/><ellipse cx="414.7" cy="299.3" rx="1.4" ry="1.9" fill="#6f9a48"/><ellipse cx="424.1" cy="308.1" rx="2.0" ry="1.8" fill="#527636"/><ellipse cx="410.7" cy="304.3" rx="2.8" ry="1.5" fill="#86ab5a"/><ellipse cx="420.9" cy="306.9" rx="2.5" ry="2.3" fill="#3a5626"/><ellipse cx="429.0" cy="305.5" rx="1.4" ry="2.6" fill="#527636"/><ellipse cx="411.8" cy="304.8" rx="2.3" ry="1.2" fill="#86ab5a"/><ellipse cx="411.4" cy="305.2" rx="1.6" ry="1.1" fill="#6f9a48"/><ellipse cx="404.0" cy="350.0" rx="9.35" ry="16.15" fill="#4f7232" /><ellipse cx="412.5" cy="349.8" rx="2.6" ry="2.5" fill="#587f3a"/><ellipse cx="403.9" cy="364.0" rx="2.0" ry="1.1" fill="#587f3a"/><ellipse cx="393.2" cy="350.0" rx="3.1" ry="1.7" fill="#6f9a48"/><ellipse cx="396.8" cy="344.3" rx="2.2" ry="2.0" fill="#6f9a48"/><ellipse cx="406.8" cy="346.4" rx="2.2" ry="1.8" fill="#3a5626"/><ellipse cx="400.6" cy="332.5" rx="2.9" ry="1.2" fill="#6f9a48"/><ellipse cx="404.0" cy="344.0" rx="3.1" ry="2.4" fill="#9cbf70"/><ellipse cx="394.8" cy="346.1" rx="2.9" ry="2.0" fill="#6f9a48"/><ellipse cx="394.6" cy="340.5" rx="1.2" ry="1.8" fill="#9cbf70"/><ellipse cx="401.2" cy="354.4" rx="1.7" ry="1.8" fill="#5a8238"/><ellipse cx="408.3" cy="341.5" rx="2.6" ry="1.3" fill="#9cbf70"/><ellipse cx="395.0" cy="341.3" rx="1.3" ry="2.6" fill="#6f9a48"/><ellipse cx="413.6" cy="358.1" rx="3.0" ry="1.1" fill="#587f3a"/><ellipse cx="412.7" cy="340.6" rx="2.6" ry="2.1" fill="#96b868"/><ellipse cx="413.7" cy="345.6" rx="3.0" ry="2.2" fill="#4a6c30"/><ellipse cx="409.4" cy="360.9" rx="3.0" ry="1.4" fill="#3e5c2a"/><ellipse cx="407.6" cy="342.9" rx="2.7" ry="1.1" fill="#86ab5a"/><ellipse cx="412.2" cy="359.4" rx="1.9" ry="1.9" fill="#3e5c2a"/><ellipse cx="403.7" cy="349.1" rx="1.9" ry="1.6" fill="#5a8238"/><ellipse cx="411.5" cy="356.9" rx="2.0" ry="1.9" fill="#4f7236"/><ellipse cx="407.7" cy="356.0" rx="1.4" ry="2.4" fill="#4f7236"/><ellipse cx="406.3" cy="347.5" rx="1.9" ry="2.2" fill="#96b868"/><ellipse cx="404.2" cy="340.9" rx="2.5" ry="2.3" fill="#6f9a48"/><ellipse cx="403.1" cy="366.0" rx="2.3" ry="1.8" fill="#587f3a"/><ellipse cx="400.3" cy="339.0" rx="1.8" ry="2.2" fill="#6f9a48"/><ellipse cx="403.6" cy="335.4" rx="1.5" ry="1.6" fill="#6f9a48"/><ellipse cx="410.0" cy="344.3" rx="3.1" ry="1.2" fill="#3a5626"/><ellipse cx="399.6" cy="363.6" rx="2.3" ry="2.0" fill="#4f7236"/><ellipse cx="398.7" cy="352.5" rx="2.6" ry="1.2" fill="#4a6c30"/><ellipse cx="407.2" cy="362.1" rx="2.0" ry="1.2" fill="#587f3a"/><ellipse cx="403.8" cy="353.3" rx="1.3" ry="1.8" fill="#4a6c30"/><ellipse cx="404.2" cy="366.2" rx="3.1" ry="1.7" fill="#4f7236"/><ellipse cx="404.8" cy="346.4" rx="2.9" ry="1.2" fill="#6a9444"/><ellipse cx="403.6" cy="354.7" rx="2.3" ry="2.5" fill="#3a5626"/><ellipse cx="410.8" cy="359.9" rx="2.5" ry="1.6" fill="#4f7236"/><ellipse cx="407.2" cy="349.4" rx="1.5" ry="1.6" fill="#7fa452"/><ellipse cx="406.6" cy="362.1" rx="1.6" ry="1.4" fill="#3e5c2a"/><ellipse cx="404.3" cy="347.7" rx="2.1" ry="1.7" fill="#527636"/><ellipse cx="406.2" cy="341.3" rx="2.5" ry="2.6" fill="#9cbf70"/><ellipse cx="401.9" cy="341.5" rx="2.2" ry="2.0" fill="#6f9a48"/><ellipse cx="404.0" cy="349.5" rx="2.7" ry="1.4" fill="#527636"/><ellipse cx="407.9" cy="362.7" rx="2.8" ry="1.3" fill="#3e5c2a"/><ellipse cx="408.0" cy="333.2" rx="2.3" ry="2.5" fill="#86ab5a"/><ellipse cx="406.6" cy="346.4" rx="1.4" ry="2.5" fill="#527636"/><ellipse cx="412.1" cy="352.3" rx="2.2" ry="1.0" fill="#3e5c2a"/><ellipse cx="401.0" cy="358.2" rx="2.6" ry="1.2" fill="#5a8238"/><ellipse cx="409.1" cy="339.1" rx="1.4" ry="2.6" fill="#6f9a48"/><ellipse cx="408.3" cy="349.9" rx="2.9" ry="1.7" fill="#3a5626"/><ellipse cx="404.3" cy="337.7" rx="2.0" ry="2.4" fill="#86ab5a"/><ellipse cx="402.3" cy="339.6" rx="1.3" ry="2.4" fill="#6f9a48"/><ellipse cx="405.9" cy="361.9" rx="2.1" ry="2.1" fill="#4f7236"/><ellipse cx="397.6" cy="354.5" rx="2.6" ry="1.6" fill="#3a5626"/><ellipse cx="398.8" cy="359.4" rx="2.0" ry="2.6" fill="#7fa452"/><ellipse cx="405.6" cy="342.0" rx="2.9" ry="1.9" fill="#86ab5a"/><ellipse cx="404.6" cy="351.6" rx="2.0" ry="1.3" fill="#7fa452"/><ellipse cx="406.9" cy="350.9" rx="2.1" ry="1.3" fill="#4a6c30"/><ellipse cx="407.5" cy="340.8" rx="1.3" ry="2.1" fill="#9cbf70"/><ellipse cx="404.1" cy="352.7" rx="1.3" ry="2.5" fill="#6a9444"/><ellipse cx="404.5" cy="354.5" rx="1.6" ry="1.5" fill="#6a9444"/><ellipse cx="411.8" cy="362.0" rx="2.8" ry="1.5" fill="#3e5c2a"/><ellipse cx="395.0" cy="384.0" rx="9.35" ry="11.049999999999999" fill="#4f7232" /><ellipse cx="405.5" cy="382.5" rx="2.2" ry="1.9" fill="#4f7236"/><ellipse cx="400.6" cy="385.3" rx="1.4" ry="2.1" fill="#4f7236"/><ellipse cx="402.9" cy="382.2" rx="1.3" ry="1.1" fill="#3e5c2a"/><ellipse cx="395.7" cy="385.6" rx="1.6" ry="1.8" fill="#3a5626"/><ellipse cx="390.0" cy="394.6" rx="1.9" ry="1.8" fill="#4f7236"/><ellipse cx="389.9" cy="392.1" rx="1.8" ry="2.0" fill="#6a9444"/><ellipse cx="397.4" cy="383.0" rx="1.6" ry="1.7" fill="#5a8238"/><ellipse cx="387.3" cy="383.6" rx="2.8" ry="1.6" fill="#6f9a48"/><ellipse cx="400.3" cy="373.8" rx="1.9" ry="1.3" fill="#6f9a48"/><ellipse cx="397.1" cy="376.5" rx="2.2" ry="1.4" fill="#6f9a48"/><ellipse cx="399.4" cy="393.4" rx="2.6" ry="2.5" fill="#587f3a"/><ellipse cx="398.7" cy="385.2" rx="1.2" ry="1.7" fill="#527636"/><ellipse cx="395.5" cy="373.7" rx="1.7" ry="2.3" fill="#9cbf70"/><ellipse cx="388.6" cy="374.6" rx="2.1" ry="2.4" fill="#86ab5a"/><ellipse cx="394.4" cy="377.3" rx="1.3" ry="1.6" fill="#86ab5a"/><ellipse cx="397.7" cy="383.1" rx="1.8" ry="1.7" fill="#7fa452"/><ellipse cx="396.9" cy="379.4" rx="1.3" ry="1.2" fill="#96b868"/><ellipse cx="390.1" cy="376.6" rx="1.7" ry="2.5" fill="#86ab5a"/><ellipse cx="396.5" cy="393.0" rx="2.8" ry="2.0" fill="#587f3a"/><ellipse cx="396.8" cy="375.3" rx="1.6" ry="1.1" fill="#9cbf70"/><ellipse cx="396.4" cy="380.9" rx="2.9" ry="1.2" fill="#3a5626"/><ellipse cx="399.5" cy="382.0" rx="2.1" ry="1.4" fill="#3a5626"/><ellipse cx="398.9" cy="375.5" rx="2.7" ry="2.4" fill="#9cbf70"/><ellipse cx="390.4" cy="391.9" rx="2.8" ry="1.5" fill="#6a9444"/><ellipse cx="401.4" cy="381.3" rx="1.6" ry="1.9" fill="#6a9444"/><ellipse cx="386.1" cy="386.4" rx="1.9" ry="1.8" fill="#9cbf70"/><ellipse cx="401.9" cy="388.0" rx="2.0" ry="2.0" fill="#4f7236"/><ellipse cx="391.6" cy="380.8" rx="1.9" ry="1.7" fill="#86ab5a"/><ellipse cx="398.8" cy="386.6" rx="3.1" ry="2.2" fill="#587f3a"/><ellipse cx="402.7" cy="374.9" rx="2.1" ry="2.1" fill="#7fa452"/><ellipse cx="398.6" cy="378.3" rx="3.0" ry="2.5" fill="#4a6c30"/><ellipse cx="385.6" cy="385.1" rx="3.2" ry="2.5" fill="#9cbf70"/><ellipse cx="392.2" cy="396.0" rx="1.3" ry="1.2" fill="#3e5c2a"/><ellipse cx="392.9" cy="383.9" rx="1.3" ry="2.2" fill="#6a9444"/><ellipse cx="393.9" cy="391.8" rx="2.7" ry="2.2" fill="#4f7236"/><ellipse cx="394.3" cy="387.2" rx="3.0" ry="1.7" fill="#5a8238"/><ellipse cx="397.0" cy="392.1" rx="1.8" ry="1.6" fill="#587f3a"/><ellipse cx="397.9" cy="374.7" rx="1.8" ry="1.7" fill="#9cbf70"/><ellipse cx="387.5" cy="382.5" rx="1.8" ry="1.7" fill="#9cbf70"/><ellipse cx="402.3" cy="376.5" rx="2.7" ry="2.5" fill="#5a8238"/><ellipse cx="394.1" cy="383.9" rx="2.3" ry="1.9" fill="#96b868"/><ellipse cx="395.9" cy="385.9" rx="3.2" ry="2.3" fill="#4a6c30"/><ellipse cx="388.4" cy="394.1" rx="3.2" ry="1.1" fill="#5a8238"/><ellipse cx="388.0" cy="414.0" rx="9.35" ry="13.6" fill="#4f7232" /><ellipse cx="388.3" cy="415.1" rx="3.0" ry="2.3" fill="#6a9444"/><ellipse cx="380.3" cy="405.5" rx="1.7" ry="2.1" fill="#9cbf70"/><ellipse cx="378.9" cy="414.1" rx="1.3" ry="1.1" fill="#86ab5a"/><ellipse cx="391.7" cy="413.9" rx="2.8" ry="1.4" fill="#527636"/><ellipse cx="394.1" cy="424.2" rx="2.2" ry="2.3" fill="#4f7236"/><ellipse cx="383.1" cy="411.6" rx="1.2" ry="2.0" fill="#86ab5a"/><ellipse cx="396.3" cy="404.9" rx="2.2" ry="2.2" fill="#6a9444"/><ellipse cx="394.9" cy="401.9" rx="1.9" ry="2.0" fill="#9cbf70"/><ellipse cx="387.4" cy="417.2" rx="3.2" ry="1.9" fill="#4a6c30"/><ellipse cx="383.1" cy="418.7" rx="1.8" ry="1.4" fill="#6a9444"/><ellipse cx="386.5" cy="424.7" rx="1.5" ry="1.1" fill="#4f7236"/><ellipse cx="383.5" cy="414.6" rx="2.4" ry="1.0" fill="#6f9a48"/><ellipse cx="381.1" cy="409.0" rx="1.8" ry="2.1" fill="#86ab5a"/><ellipse cx="390.4" cy="411.9" rx="1.4" ry="1.1" fill="#96b868"/><ellipse cx="378.8" cy="415.1" rx="2.1" ry="1.5" fill="#6f9a48"/><ellipse cx="383.2" cy="424.2" rx="2.0" ry="1.1" fill="#527636"/><ellipse cx="388.3" cy="416.2" rx="1.8" ry="1.6" fill="#5a8238"/><ellipse cx="387.4" cy="418.6" rx="2.0" ry="2.4" fill="#5a8238"/><ellipse cx="377.3" cy="414.5" rx="2.6" ry="1.2" fill="#86ab5a"/><ellipse cx="385.9" cy="410.6" rx="3.1" ry="2.6" fill="#86ab5a"/><ellipse cx="385.6" cy="405.0" rx="1.7" ry="1.9" fill="#9cbf70"/><ellipse cx="392.4" cy="416.0" rx="1.5" ry="2.1" fill="#3e5c2a"/><ellipse cx="385.4" cy="404.6" rx="1.2" ry="1.6" fill="#6f9a48"/><ellipse cx="391.5" cy="424.9" rx="2.5" ry="1.2" fill="#3e5c2a"/><ellipse cx="392.5" cy="422.7" rx="1.6" ry="2.2" fill="#587f3a"/><ellipse cx="384.4" cy="416.3" rx="1.8" ry="1.2" fill="#3a5626"/><ellipse cx="389.9" cy="417.7" rx="1.4" ry="1.3" fill="#587f3a"/><ellipse cx="398.2" cy="408.1" rx="1.7" ry="1.6" fill="#6a9444"/><ellipse cx="394.8" cy="410.8" rx="2.9" ry="1.8" fill="#96b868"/><ellipse cx="387.5" cy="403.1" rx="2.3" ry="1.7" fill="#9cbf70"/><ellipse cx="381.5" cy="411.7" rx="2.9" ry="1.3" fill="#9cbf70"/><ellipse cx="379.2" cy="405.4" rx="1.6" ry="2.5" fill="#6f9a48"/><ellipse cx="390.0" cy="409.4" rx="2.9" ry="1.2" fill="#5a8238"/><ellipse cx="386.4" cy="412.3" rx="1.4" ry="1.0" fill="#86ab5a"/><ellipse cx="394.5" cy="403.8" rx="1.9" ry="2.1" fill="#6f9a48"/><ellipse cx="386.9" cy="424.0" rx="1.9" ry="1.9" fill="#4f7236"/><ellipse cx="389.3" cy="423.8" rx="2.5" ry="1.9" fill="#4f7236"/><ellipse cx="385.2" cy="400.9" rx="2.9" ry="2.3" fill="#9cbf70"/><ellipse cx="385.5" cy="429.4" rx="1.4" ry="1.8" fill="#3e5c2a"/><ellipse cx="387.4" cy="405.7" rx="1.8" ry="2.5" fill="#86ab5a"/><ellipse cx="381.2" cy="417.0" rx="3.2" ry="1.8" fill="#86ab5a"/><ellipse cx="380.3" cy="418.3" rx="2.1" ry="2.4" fill="#9cbf70"/><ellipse cx="388.3" cy="411.1" rx="2.0" ry="1.3" fill="#527636"/><ellipse cx="394.6" cy="418.9" rx="2.2" ry="1.2" fill="#587f3a"/><ellipse cx="387.3" cy="405.0" rx="1.2" ry="1.6" fill="#9cbf70"/><ellipse cx="383.4" cy="421.1" rx="2.6" ry="1.2" fill="#96b868"/><ellipse cx="382.4" cy="414.2" rx="1.3" ry="1.0" fill="#9cbf70"/><ellipse cx="391.2" cy="409.9" rx="1.8" ry="1.0" fill="#6a9444"/><ellipse cx="377.8" cy="410.3" rx="2.7" ry="2.3" fill="#9cbf70"/><ellipse cx="393.5" cy="401.1" rx="2.6" ry="1.2" fill="#9cbf70"/><ellipse cx="392.5" cy="407.9" rx="1.5" ry="1.5" fill="#6a9444"/><ellipse cx="385.1" cy="412.6" rx="3.0" ry="1.7" fill="#6f9a48"/><ellipse cx="382.0" cy="444.0" rx="9.35" ry="12.75" fill="#4f7232" /><ellipse cx="383.8" cy="435.9" rx="2.1" ry="1.2" fill="#86ab5a"/><ellipse cx="384.4" cy="454.9" rx="3.1" ry="1.5" fill="#587f3a"/><ellipse cx="380.1" cy="455.2" rx="3.0" ry="1.1" fill="#587f3a"/><ellipse cx="388.6" cy="435.2" rx="1.3" ry="1.0" fill="#5a8238"/><ellipse cx="375.5" cy="445.1" rx="1.9" ry="1.7" fill="#6f9a48"/><ellipse cx="373.1" cy="437.1" rx="2.0" ry="1.1" fill="#6f9a48"/><ellipse cx="381.2" cy="442.7" rx="2.2" ry="1.9" fill="#7fa452"/><ellipse cx="385.9" cy="447.2" rx="2.0" ry="1.6" fill="#587f3a"/><ellipse cx="371.7" cy="448.0" rx="2.3" ry="1.5" fill="#86ab5a"/><ellipse cx="375.2" cy="438.3" rx="2.2" ry="1.5" fill="#6f9a48"/><ellipse cx="387.1" cy="435.6" rx="2.7" ry="1.3" fill="#96b868"/><ellipse cx="388.2" cy="447.3" rx="1.6" ry="2.4" fill="#587f3a"/><ellipse cx="384.1" cy="457.0" rx="3.1" ry="1.8" fill="#3e5c2a"/><ellipse cx="385.0" cy="437.7" rx="1.3" ry="1.8" fill="#527636"/><ellipse cx="374.5" cy="453.1" rx="2.7" ry="1.4" fill="#527636"/><ellipse cx="379.0" cy="448.5" rx="1.7" ry="1.4" fill="#5a8238"/><ellipse cx="380.0" cy="436.6" rx="1.6" ry="1.7" fill="#86ab5a"/><ellipse cx="377.7" cy="441.4" rx="1.6" ry="2.1" fill="#86ab5a"/><ellipse cx="379.0" cy="440.6" rx="2.0" ry="1.9" fill="#6f9a48"/><ellipse cx="375.2" cy="437.5" rx="1.3" ry="2.3" fill="#9cbf70"/><ellipse cx="386.6" cy="436.5" rx="1.6" ry="1.8" fill="#7fa452"/><ellipse cx="375.7" cy="448.8" rx="2.8" ry="2.6" fill="#6a9444"/><ellipse cx="375.8" cy="456.3" rx="1.4" ry="1.7" fill="#3e5c2a"/><ellipse cx="384.3" cy="440.5" rx="1.4" ry="1.8" fill="#5a8238"/><ellipse cx="386.2" cy="436.2" rx="2.9" ry="1.7" fill="#86ab5a"/><ellipse cx="374.1" cy="444.5" rx="1.6" ry="1.1" fill="#6f9a48"/><ellipse cx="382.5" cy="433.5" rx="3.0" ry="2.4" fill="#6f9a48"/><ellipse cx="371.4" cy="440.2" rx="2.5" ry="2.5" fill="#6f9a48"/><ellipse cx="375.1" cy="448.9" rx="1.9" ry="1.8" fill="#527636"/><ellipse cx="377.6" cy="441.3" rx="2.3" ry="1.6" fill="#86ab5a"/><ellipse cx="388.0" cy="450.7" rx="2.2" ry="1.9" fill="#587f3a"/><ellipse cx="371.9" cy="447.1" rx="1.9" ry="2.2" fill="#6f9a48"/><ellipse cx="375.0" cy="436.5" rx="2.5" ry="1.2" fill="#6f9a48"/><ellipse cx="379.1" cy="442.7" rx="2.2" ry="1.6" fill="#6f9a48"/><ellipse cx="386.7" cy="446.8" rx="3.1" ry="1.2" fill="#3e5c2a"/><ellipse cx="388.7" cy="440.9" rx="1.5" ry="1.6" fill="#6a9444"/><ellipse cx="379.9" cy="437.9" rx="3.1" ry="2.1" fill="#6f9a48"/><ellipse cx="382.1" cy="450.7" rx="1.9" ry="1.2" fill="#587f3a"/><ellipse cx="384.2" cy="440.7" rx="1.7" ry="1.7" fill="#3a5626"/><ellipse cx="387.6" cy="442.8" rx="1.5" ry="1.1" fill="#527636"/><ellipse cx="371.0" cy="444.9" rx="3.0" ry="1.7" fill="#9cbf70"/><ellipse cx="375.0" cy="448.7" rx="2.1" ry="2.3" fill="#7fa452"/><ellipse cx="381.6" cy="454.4" rx="1.5" ry="1.1" fill="#4f7236"/><ellipse cx="381.8" cy="444.1" rx="2.7" ry="1.8" fill="#527636"/><ellipse cx="391.5" cy="440.1" rx="1.9" ry="1.1" fill="#587f3a"/><ellipse cx="373.4" cy="439.6" rx="1.4" ry="1.3" fill="#86ab5a"/><ellipse cx="384.2" cy="443.1" rx="2.7" ry="1.2" fill="#6a9444"/><ellipse cx="373.7" cy="440.8" rx="1.5" ry="1.2" fill="#6f9a48"/><ellipse cx="374.8" cy="434.2" rx="1.2" ry="1.1" fill="#86ab5a"/><ellipse cx="376.0" cy="472.0" rx="10.2" ry="11.9" fill="#4f7232" /><ellipse cx="377.5" cy="464.2" rx="3.2" ry="2.0" fill="#6f9a48"/><ellipse cx="375.2" cy="483.3" rx="1.8" ry="2.1" fill="#3e5c2a"/><ellipse cx="376.7" cy="473.6" rx="2.7" ry="2.3" fill="#7fa452"/><ellipse cx="374.8" cy="473.6" rx="2.0" ry="2.3" fill="#4a6c30"/><ellipse cx="367.1" cy="475.7" rx="1.6" ry="1.7" fill="#6f9a48"/><ellipse cx="378.0" cy="465.0" rx="2.0" ry="1.2" fill="#86ab5a"/><ellipse cx="372.6" cy="481.2" rx="2.5" ry="1.4" fill="#7fa452"/><ellipse cx="381.7" cy="476.6" rx="1.6" ry="1.7" fill="#4f7236"/><ellipse cx="366.8" cy="471.3" rx="2.5" ry="2.2" fill="#9cbf70"/><ellipse cx="368.9" cy="470.9" rx="1.6" ry="1.7" fill="#86ab5a"/><ellipse cx="370.5" cy="470.7" rx="1.5" ry="1.8" fill="#6f9a48"/><ellipse cx="373.1" cy="480.8" rx="1.9" ry="2.6" fill="#4a6c30"/><ellipse cx="381.7" cy="478.4" rx="2.7" ry="2.2" fill="#3e5c2a"/><ellipse cx="377.2" cy="472.2" rx="1.2" ry="2.1" fill="#7fa452"/><ellipse cx="383.7" cy="462.3" rx="1.9" ry="1.5" fill="#3a5626"/><ellipse cx="379.2" cy="463.7" rx="2.8" ry="1.5" fill="#9cbf70"/><ellipse cx="369.6" cy="468.8" rx="1.4" ry="2.1" fill="#86ab5a"/><ellipse cx="376.3" cy="476.6" rx="2.3" ry="2.2" fill="#6a9444"/><ellipse cx="366.9" cy="471.4" rx="1.8" ry="2.4" fill="#6f9a48"/><ellipse cx="368.1" cy="471.4" rx="2.2" ry="1.1" fill="#6f9a48"/><ellipse cx="372.9" cy="465.7" rx="2.1" ry="1.5" fill="#9cbf70"/><ellipse cx="381.6" cy="469.3" rx="2.7" ry="1.4" fill="#6a9444"/><ellipse cx="370.8" cy="473.0" rx="2.5" ry="2.2" fill="#86ab5a"/><ellipse cx="383.4" cy="469.6" rx="2.6" ry="2.0" fill="#4a6c30"/><ellipse cx="369.8" cy="460.0" rx="2.0" ry="1.6" fill="#6f9a48"/><ellipse cx="372.1" cy="481.8" rx="2.1" ry="1.7" fill="#7fa452"/><ellipse cx="368.4" cy="476.8" rx="2.1" ry="1.1" fill="#6a9444"/><ellipse cx="374.9" cy="460.3" rx="2.0" ry="1.8" fill="#6f9a48"/><ellipse cx="383.2" cy="481.9" rx="1.3" ry="1.7" fill="#587f3a"/><ellipse cx="381.0" cy="463.4" rx="2.2" ry="1.6" fill="#6a9444"/><ellipse cx="368.7" cy="471.8" rx="2.0" ry="2.0" fill="#9cbf70"/><ellipse cx="373.5" cy="459.0" rx="3.0" ry="2.3" fill="#6f9a48"/><ellipse cx="373.3" cy="458.5" rx="2.8" ry="2.4" fill="#9cbf70"/><ellipse cx="382.3" cy="479.1" rx="2.9" ry="2.5" fill="#587f3a"/><ellipse cx="372.5" cy="473.7" rx="2.6" ry="2.0" fill="#4a6c30"/><ellipse cx="366.9" cy="472.1" rx="1.7" ry="1.0" fill="#86ab5a"/><ellipse cx="381.7" cy="469.8" rx="1.6" ry="1.2" fill="#6a9444"/><ellipse cx="377.5" cy="477.2" rx="2.9" ry="2.4" fill="#3e5c2a"/><ellipse cx="371.0" cy="482.1" rx="1.9" ry="1.5" fill="#3a5626"/><ellipse cx="377.8" cy="481.5" rx="2.0" ry="1.8" fill="#587f3a"/><ellipse cx="372.8" cy="484.0" rx="2.8" ry="1.1" fill="#4f7236"/><ellipse cx="376.0" cy="477.4" rx="1.9" ry="1.3" fill="#4a6c30"/><ellipse cx="378.8" cy="482.0" rx="2.1" ry="1.4" fill="#3e5c2a"/><ellipse cx="369.3" cy="470.3" rx="2.9" ry="1.8" fill="#9cbf70"/><ellipse cx="371.6" cy="473.6" rx="2.5" ry="1.2" fill="#5a8238"/><ellipse cx="381.5" cy="467.2" rx="2.8" ry="2.2" fill="#5a8238"/><ellipse cx="376.8" cy="483.7" rx="1.4" ry="1.3" fill="#587f3a"/><ellipse cx="372.2" cy="481.3" rx="1.9" ry="1.2" fill="#4a6c30"/><ellipse cx="372.6" cy="480.9" rx="3.0" ry="1.9" fill="#6a9444"/><ellipse cx="383.3" cy="473.1" rx="3.2" ry="1.3" fill="#4f7236"/><ellipse cx="372.0" cy="504.0" rx="23.8" ry="21.25" fill="#4f7232" /><ellipse cx="396.2" cy="504.1" rx="1.8" ry="2.4" fill="#4f7236"/><ellipse cx="377.7" cy="518.9" rx="2.6" ry="2.2" fill="#4f7236"/><ellipse cx="385.2" cy="498.8" rx="2.2" ry="1.7" fill="#7fa452"/><ellipse cx="349.4" cy="507.5" rx="3.2" ry="1.2" fill="#86ab5a"/><ellipse cx="378.6" cy="497.5" rx="3.1" ry="1.5" fill="#527636"/><ellipse cx="371.3" cy="504.7" rx="2.9" ry="2.4" fill="#4a6c30"/><ellipse cx="376.8" cy="503.5" rx="1.5" ry="2.0" fill="#6a9444"/><ellipse cx="357.1" cy="503.8" rx="3.2" ry="2.1" fill="#86ab5a"/><ellipse cx="385.8" cy="491.7" rx="1.4" ry="2.2" fill="#3a5626"/><ellipse cx="366.6" cy="495.7" rx="1.4" ry="1.5" fill="#9cbf70"/><ellipse cx="373.4" cy="500.1" rx="1.3" ry="1.8" fill="#6a9444"/><ellipse cx="382.3" cy="500.2" rx="2.1" ry="2.6" fill="#96b868"/><ellipse cx="367.3" cy="515.9" rx="2.9" ry="2.1" fill="#3a5626"/><ellipse cx="370.6" cy="502.4" rx="2.4" ry="1.2" fill="#527636"/><ellipse cx="381.8" cy="491.4" rx="2.0" ry="1.8" fill="#7fa452"/><ellipse cx="352.6" cy="487.8" rx="1.8" ry="1.4" fill="#6f9a48"/><ellipse cx="385.4" cy="524.2" rx="1.7" ry="2.5" fill="#4f7236"/><ellipse cx="359.0" cy="501.4" rx="1.8" ry="1.1" fill="#86ab5a"/><ellipse cx="392.8" cy="495.0" rx="2.1" ry="2.5" fill="#7fa452"/><ellipse cx="347.2" cy="502.6" rx="1.9" ry="2.0" fill="#6f9a48"/><ellipse cx="354.1" cy="522.2" rx="2.5" ry="1.8" fill="#96b868"/><ellipse cx="377.6" cy="494.3" rx="2.3" ry="2.2" fill="#6a9444"/><ellipse cx="376.0" cy="483.4" rx="1.4" ry="2.1" fill="#9cbf70"/><ellipse cx="381.3" cy="484.1" rx="1.5" ry="2.4" fill="#6f9a48"/><ellipse cx="366.0" cy="480.2" rx="1.2" ry="1.3" fill="#9cbf70"/><ellipse cx="380.5" cy="527.1" rx="2.3" ry="1.5" fill="#587f3a"/><ellipse cx="358.7" cy="485.4" rx="1.2" ry="1.7" fill="#86ab5a"/><ellipse cx="367.7" cy="504.3" rx="2.5" ry="2.3" fill="#527636"/><ellipse cx="379.6" cy="518.1" rx="1.8" ry="2.6" fill="#4f7236"/><ellipse cx="360.2" cy="505.6" rx="1.3" ry="2.4" fill="#6f9a48"/><ellipse cx="394.2" cy="514.0" rx="2.1" ry="1.5" fill="#3e5c2a"/><ellipse cx="379.3" cy="516.0" rx="2.2" ry="1.8" fill="#3e5c2a"/><ellipse cx="370.1" cy="503.6" rx="1.7" ry="2.6" fill="#7fa452"/><ellipse cx="380.3" cy="513.2" rx="2.9" ry="2.3" fill="#4f7236"/><ellipse cx="364.2" cy="500.2" rx="2.6" ry="1.1" fill="#6f9a48"/><ellipse cx="394.2" cy="493.3" rx="2.6" ry="2.0" fill="#96b868"/><ellipse cx="384.5" cy="502.2" rx="1.9" ry="1.0" fill="#5a8238"/><ellipse cx="395.8" cy="499.0" rx="1.3" ry="2.1" fill="#587f3a"/><ellipse cx="361.2" cy="509.0" rx="2.9" ry="1.1" fill="#3a5626"/><ellipse cx="370.5" cy="517.7" rx="3.0" ry="1.6" fill="#6a9444"/><ellipse cx="369.7" cy="505.3" rx="2.6" ry="1.6" fill="#4a6c30"/><ellipse cx="348.5" cy="503.0" rx="1.9" ry="1.6" fill="#9cbf70"/><ellipse cx="363.3" cy="497.2" rx="1.7" ry="1.3" fill="#86ab5a"/><ellipse cx="371.3" cy="511.6" rx="2.1" ry="2.5" fill="#527636"/><ellipse cx="387.2" cy="492.0" rx="2.1" ry="2.4" fill="#527636"/><ellipse cx="372.1" cy="489.5" rx="2.7" ry="1.6" fill="#9cbf70"/><ellipse cx="377.9" cy="522.6" rx="2.3" ry="2.3" fill="#587f3a"/><ellipse cx="363.5" cy="513.6" rx="2.5" ry="1.6" fill="#96b868"/><ellipse cx="356.2" cy="498.4" rx="2.2" ry="1.5" fill="#9cbf70"/><ellipse cx="397.8" cy="501.0" rx="2.7" ry="1.3" fill="#4f7236"/><ellipse cx="366.5" cy="490.5" rx="2.5" ry="1.3" fill="#86ab5a"/><ellipse cx="374.7" cy="526.9" rx="1.7" ry="2.4" fill="#4f7236"/><ellipse cx="389.3" cy="518.2" rx="3.1" ry="1.0" fill="#587f3a"/><ellipse cx="383.8" cy="493.8" rx="1.3" ry="2.3" fill="#527636"/><ellipse cx="357.5" cy="491.3" rx="2.4" ry="1.2" fill="#9cbf70"/><ellipse cx="359.7" cy="502.2" rx="2.7" ry="2.1" fill="#9cbf70"/><ellipse cx="371.2" cy="514.6" rx="2.9" ry="2.2" fill="#96b868"/><ellipse cx="372.4" cy="498.4" rx="1.9" ry="2.6" fill="#527636"/><ellipse cx="359.9" cy="483.7" rx="2.1" ry="1.2" fill="#9cbf70"/><ellipse cx="359.2" cy="513.2" rx="1.9" ry="2.4" fill="#5a8238"/><ellipse cx="367.1" cy="507.1" rx="1.3" ry="1.4" fill="#4a6c30"/><ellipse cx="373.0" cy="497.2" rx="1.3" ry="1.4" fill="#7fa452"/><ellipse cx="359.4" cy="501.1" rx="2.4" ry="2.0" fill="#86ab5a"/><ellipse cx="364.8" cy="517.1" rx="3.1" ry="1.0" fill="#3a5626"/><ellipse cx="375.8" cy="513.6" rx="1.4" ry="1.6" fill="#527636"/><ellipse cx="365.7" cy="502.8" rx="3.2" ry="1.7" fill="#6a9444"/><ellipse cx="392.0" cy="490.8" rx="2.0" ry="2.4" fill="#4a6c30"/><ellipse cx="373.4" cy="497.5" rx="2.6" ry="1.9" fill="#3a5626"/><ellipse cx="363.8" cy="525.2" rx="1.6" ry="1.3" fill="#4a6c30"/><ellipse cx="369.8" cy="499.2" rx="2.2" ry="1.2" fill="#6a9444"/><ellipse cx="373.8" cy="523.1" rx="3.0" ry="1.1" fill="#4f7236"/><ellipse cx="386.3" cy="490.2" rx="2.5" ry="2.4" fill="#527636"/><ellipse cx="366.1" cy="497.6" rx="2.1" ry="2.2" fill="#86ab5a"/><ellipse cx="372.6" cy="510.6" rx="2.9" ry="1.9" fill="#4a6c30"/><ellipse cx="388.0" cy="489.8" rx="2.8" ry="2.5" fill="#7fa452"/><ellipse cx="367.3" cy="518.6" rx="2.1" ry="1.2" fill="#7fa452"/><ellipse cx="391.8" cy="500.7" rx="3.0" ry="1.4" fill="#587f3a"/><ellipse cx="392.6" cy="488.0" rx="1.4" ry="1.7" fill="#5a8238"/><ellipse cx="389.2" cy="486.4" rx="1.3" ry="1.6" fill="#6a9444"/><ellipse cx="381.6" cy="488.9" rx="2.7" ry="1.1" fill="#527636"/><ellipse cx="375.1" cy="502.7" rx="1.7" ry="2.3" fill="#4a6c30"/><ellipse cx="383.3" cy="481.9" rx="2.1" ry="1.1" fill="#6f9a48"/><ellipse cx="392.4" cy="491.9" rx="2.4" ry="1.1" fill="#5a8238"/><ellipse cx="385.1" cy="499.5" rx="1.6" ry="1.2" fill="#3a5626"/><ellipse cx="386.5" cy="488.8" rx="3.2" ry="2.0" fill="#7fa452"/><ellipse cx="387.1" cy="486.3" rx="3.0" ry="1.1" fill="#96b868"/><ellipse cx="358.0" cy="522.8" rx="1.6" ry="2.2" fill="#5a8238"/><ellipse cx="363.4" cy="520.3" rx="2.7" ry="1.6" fill="#7fa452"/><ellipse cx="367.2" cy="507.6" rx="1.6" ry="2.1" fill="#7fa452"/><ellipse cx="387.5" cy="500.9" rx="2.4" ry="2.5" fill="#3a5626"/><ellipse cx="348.7" cy="500.5" rx="1.6" ry="1.8" fill="#86ab5a"/><ellipse cx="356.6" cy="496.3" rx="3.0" ry="2.3" fill="#6f9a48"/><ellipse cx="375.3" cy="496.8" rx="2.6" ry="2.1" fill="#96b868"/><ellipse cx="361.0" cy="499.8" rx="1.9" ry="2.1" fill="#9cbf70"/><ellipse cx="358.5" cy="496.2" rx="2.3" ry="2.6" fill="#6f9a48"/><ellipse cx="348.2" cy="499.5" rx="2.6" ry="2.0" fill="#86ab5a"/><ellipse cx="370.9" cy="480.9" rx="2.4" ry="1.4" fill="#9cbf70"/><ellipse cx="365.3" cy="505.4" rx="2.1" ry="1.9" fill="#4a6c30"/><ellipse cx="358.1" cy="493.7" rx="2.4" ry="2.1" fill="#86ab5a"/><ellipse cx="376.1" cy="518.8" rx="3.0" ry="2.6" fill="#587f3a"/><ellipse cx="366.2" cy="493.2" rx="3.0" ry="2.2" fill="#6f9a48"/><ellipse cx="387.9" cy="507.8" rx="2.8" ry="2.4" fill="#587f3a"/><ellipse cx="370.0" cy="504.8" rx="1.2" ry="2.5" fill="#527636"/><ellipse cx="365.9" cy="507.4" rx="2.9" ry="2.1" fill="#4a6c30"/><ellipse cx="367.3" cy="498.7" rx="3.0" ry="2.5" fill="#9cbf70"/><ellipse cx="392.3" cy="493.8" rx="2.5" ry="1.5" fill="#5a8238"/><ellipse cx="358.3" cy="489.1" rx="2.2" ry="2.2" fill="#9cbf70"/><ellipse cx="378.5" cy="523.6" rx="3.1" ry="1.0" fill="#4f7236"/><ellipse cx="372.1" cy="516.7" rx="1.3" ry="2.0" fill="#6a9444"/><ellipse cx="397.4" cy="505.1" rx="3.0" ry="2.4" fill="#4f7236"/><ellipse cx="382.6" cy="515.0" rx="2.7" ry="1.2" fill="#4f7236"/><ellipse cx="378.9" cy="507.1" rx="1.2" ry="2.1" fill="#527636"/><ellipse cx="362.6" cy="524.0" rx="2.0" ry="2.5" fill="#3a5626"/><ellipse cx="362.3" cy="517.5" rx="2.6" ry="1.6" fill="#527636"/><ellipse cx="385.0" cy="484.9" rx="3.0" ry="2.3" fill="#4a6c30"/><ellipse cx="361.9" cy="513.3" rx="3.0" ry="1.3" fill="#3a5626"/><ellipse cx="393.7" cy="515.4" rx="1.4" ry="2.5" fill="#3e5c2a"/><ellipse cx="358.5" cy="506.3" rx="1.8" ry="1.2" fill="#6f9a48"/><ellipse cx="378.6" cy="506.6" rx="3.0" ry="1.9" fill="#3a5626"/><ellipse cx="371.7" cy="527.7" rx="1.5" ry="2.0" fill="#3e5c2a"/><ellipse cx="381.8" cy="488.4" rx="2.6" ry="2.4" fill="#3a5626"/><ellipse cx="379.0" cy="522.0" rx="1.4" ry="2.4" fill="#3e5c2a"/><ellipse cx="370.5" cy="505.0" rx="1.8" ry="1.5" fill="#527636"/><ellipse cx="352.6" cy="521.9" rx="1.9" ry="1.5" fill="#5a8238"/><ellipse cx="375.1" cy="489.0" rx="2.9" ry="2.1" fill="#86ab5a"/><ellipse cx="379.6" cy="522.8" rx="1.7" ry="1.7" fill="#4f7236"/><ellipse cx="366.6" cy="484.5" rx="2.2" ry="1.2" fill="#86ab5a"/><ellipse cx="361.9" cy="504.1" rx="1.3" ry="1.1" fill="#86ab5a"/><ellipse cx="371.4" cy="503.5" rx="1.8" ry="2.4" fill="#4a6c30"/><ellipse cx="379.4" cy="517.8" rx="1.8" ry="2.6" fill="#3e5c2a"/><ellipse cx="356.5" cy="494.5" rx="3.0" ry="1.7" fill="#9cbf70"/><ellipse cx="366.0" cy="483.0" rx="1.4" ry="1.9" fill="#6f9a48"/><ellipse cx="376.9" cy="481.8" rx="2.2" ry="1.4" fill="#86ab5a"/><ellipse cx="367.3" cy="512.8" rx="2.8" ry="1.1" fill="#6a9444"/><ellipse cx="393.8" cy="506.1" rx="3.1" ry="2.2" fill="#587f3a"/><ellipse cx="381.9" cy="518.1" rx="1.9" ry="1.7" fill="#4f7236"/><ellipse cx="387.6" cy="501.0" rx="2.0" ry="1.8" fill="#3a5626"/><ellipse cx="368.8" cy="523.2" rx="3.0" ry="1.6" fill="#3e5c2a"/><ellipse cx="373.1" cy="509.3" rx="2.8" ry="2.0" fill="#4a6c30"/><ellipse cx="373.4" cy="504.7" rx="3.1" ry="2.5" fill="#6a9444"/><ellipse cx="373.2" cy="493.4" rx="2.5" ry="1.8" fill="#6f9a48"/><ellipse cx="392.0" cy="506.9" rx="2.8" ry="1.9" fill="#587f3a"/><ellipse cx="354.7" cy="492.5" rx="2.7" ry="2.2" fill="#6f9a48"/><ellipse cx="349.7" cy="504.3" rx="2.7" ry="1.6" fill="#9cbf70"/><ellipse cx="388.8" cy="506.3" rx="1.9" ry="1.2" fill="#4f7236"/><ellipse cx="361.1" cy="498.9" rx="1.4" ry="1.7" fill="#6f9a48"/><ellipse cx="367.0" cy="519.7" rx="1.8" ry="1.1" fill="#7fa452"/><ellipse cx="348.1" cy="514.1" rx="1.5" ry="1.4" fill="#9cbf70"/><ellipse cx="376.5" cy="517.2" rx="1.2" ry="1.8" fill="#3e5c2a"/><ellipse cx="352.5" cy="512.8" rx="2.0" ry="2.0" fill="#6f9a48"/><ellipse cx="369.6" cy="519.4" rx="2.4" ry="2.3" fill="#96b868"/><ellipse cx="365.8" cy="506.9" rx="1.7" ry="2.3" fill="#7fa452"/><ellipse cx="365.9" cy="511.5" rx="2.2" ry="2.2" fill="#5a8238"/><ellipse cx="370.5" cy="528.2" rx="1.2" ry="1.0" fill="#3e5c2a"/><ellipse cx="358.6" cy="507.8" rx="2.9" ry="1.7" fill="#9cbf70"/><ellipse cx="387.6" cy="515.4" rx="2.8" ry="1.3" fill="#4f7236"/><ellipse cx="386.4" cy="517.5" rx="2.4" ry="1.3" fill="#587f3a"/><ellipse cx="378.6" cy="518.5" rx="1.8" ry="1.3" fill="#4f7236"/><ellipse cx="352.4" cy="498.8" rx="2.9" ry="2.4" fill="#6f9a48"/><ellipse cx="364.6" cy="488.2" rx="1.6" ry="2.3" fill="#6f9a48"/><ellipse cx="390.4" cy="520.9" rx="2.7" ry="1.7" fill="#4f7236"/><ellipse cx="355.4" cy="521.8" rx="1.4" ry="2.4" fill="#6a9444"/><ellipse cx="356.6" cy="510.6" rx="2.3" ry="1.6" fill="#6f9a48"/><ellipse cx="385.5" cy="497.8" rx="1.7" ry="2.3" fill="#96b868"/><ellipse cx="376.7" cy="507.9" rx="1.8" ry="1.7" fill="#527636"/><ellipse cx="346.1" cy="509.5" rx="1.2" ry="2.3" fill="#9cbf70"/><ellipse cx="378.9" cy="496.6" rx="2.5" ry="1.5" fill="#7fa452"/><ellipse cx="371.9" cy="490.1" rx="2.0" ry="1.6" fill="#9cbf70"/><ellipse cx="379.7" cy="486.2" rx="1.7" ry="1.3" fill="#6f9a48"/><ellipse cx="396.8" cy="493.7" rx="3.1" ry="1.4" fill="#3e5c2a"/><ellipse cx="374.6" cy="492.1" rx="2.2" ry="1.8" fill="#86ab5a"/><ellipse cx="387.4" cy="517.7" rx="1.8" ry="1.1" fill="#4f7236"/><ellipse cx="382.5" cy="510.0" rx="2.0" ry="1.0" fill="#587f3a"/><ellipse cx="348.5" cy="511.7" rx="3.2" ry="2.3" fill="#6f9a48"/><ellipse cx="366.2" cy="483.4" rx="1.9" ry="2.0" fill="#9cbf70"/><ellipse cx="387.0" cy="516.7" rx="1.9" ry="2.5" fill="#587f3a"/><ellipse cx="363.6" cy="488.0" rx="2.6" ry="2.4" fill="#6f9a48"/><ellipse cx="384.8" cy="492.8" rx="1.4" ry="2.5" fill="#7fa452"/><ellipse cx="357.3" cy="489.7" rx="1.8" ry="1.5" fill="#86ab5a"/><ellipse cx="381.3" cy="494.7" rx="2.7" ry="1.5" fill="#7fa452"/><ellipse cx="369.9" cy="514.7" rx="2.3" ry="1.2" fill="#96b868"/><ellipse cx="347.3" cy="502.6" rx="2.8" ry="1.1" fill="#9cbf70"/><ellipse cx="358.2" cy="498.5" rx="2.7" ry="2.2" fill="#9cbf70"/><ellipse cx="384.0" cy="528.0" rx="13.6" ry="8.5" fill="#4f7232" /><ellipse cx="386.0" cy="531.0" rx="2.7" ry="1.8" fill="#3a5626"/><ellipse cx="382.8" cy="521.0" rx="2.4" ry="2.5" fill="#6f9a48"/><ellipse cx="396.1" cy="530.7" rx="2.2" ry="1.7" fill="#587f3a"/><ellipse cx="376.9" cy="524.8" rx="2.9" ry="2.4" fill="#6f9a48"/><ellipse cx="381.0" cy="527.1" rx="2.0" ry="1.3" fill="#527636"/><ellipse cx="386.0" cy="534.3" rx="1.9" ry="1.6" fill="#3e5c2a"/><ellipse cx="391.0" cy="520.6" rx="1.8" ry="1.3" fill="#5a8238"/><ellipse cx="383.3" cy="524.3" rx="1.8" ry="1.6" fill="#7fa452"/><ellipse cx="370.0" cy="532.5" rx="3.0" ry="2.0" fill="#6f9a48"/><ellipse cx="392.7" cy="526.7" rx="2.7" ry="1.9" fill="#5a8238"/><ellipse cx="372.0" cy="528.2" rx="1.3" ry="1.9" fill="#86ab5a"/><ellipse cx="387.2" cy="526.5" rx="1.9" ry="2.6" fill="#527636"/><ellipse cx="384.9" cy="523.5" rx="2.3" ry="1.2" fill="#4a6c30"/><ellipse cx="370.1" cy="529.2" rx="2.7" ry="2.6" fill="#6f9a48"/><ellipse cx="372.1" cy="527.9" rx="3.1" ry="1.9" fill="#9cbf70"/><ellipse cx="389.9" cy="528.2" rx="3.1" ry="1.6" fill="#96b868"/><ellipse cx="377.1" cy="523.6" rx="1.8" ry="1.5" fill="#86ab5a"/><ellipse cx="379.8" cy="530.7" rx="1.7" ry="1.8" fill="#4a6c30"/><ellipse cx="387.7" cy="527.7" rx="2.4" ry="1.6" fill="#3a5626"/><ellipse cx="386.0" cy="524.1" rx="2.9" ry="2.3" fill="#527636"/><ellipse cx="396.4" cy="530.0" rx="2.6" ry="2.4" fill="#3e5c2a"/><ellipse cx="388.9" cy="521.2" rx="2.4" ry="2.4" fill="#527636"/><ellipse cx="394.6" cy="531.4" rx="1.6" ry="2.5" fill="#4f7236"/><ellipse cx="387.1" cy="526.3" rx="1.7" ry="2.2" fill="#6a9444"/><ellipse cx="385.3" cy="526.8" rx="2.3" ry="1.8" fill="#4a6c30"/><ellipse cx="394.9" cy="531.3" rx="2.0" ry="1.0" fill="#3e5c2a"/><ellipse cx="379.0" cy="528.5" rx="2.5" ry="2.3" fill="#5a8238"/><ellipse cx="379.4" cy="522.5" rx="2.8" ry="2.4" fill="#9cbf70"/><ellipse cx="377.7" cy="532.3" rx="1.3" ry="1.7" fill="#6a9444"/><ellipse cx="397.9" cy="525.3" rx="1.2" ry="2.3" fill="#3e5c2a"/><ellipse cx="385.1" cy="530.2" rx="3.1" ry="1.2" fill="#5a8238"/><ellipse cx="368.2" cy="529.0" rx="2.4" ry="1.2" fill="#6f9a48"/><ellipse cx="380.7" cy="525.2" rx="2.4" ry="2.3" fill="#9cbf70"/><ellipse cx="391.6" cy="528.6" rx="2.0" ry="1.0" fill="#3e5c2a"/><ellipse cx="383.9" cy="523.6" rx="2.1" ry="1.6" fill="#3a5626"/><ellipse cx="386.3" cy="518.2" rx="2.7" ry="1.2" fill="#86ab5a"/><ellipse cx="385.9" cy="536.2" rx="1.6" ry="2.4" fill="#3e5c2a"/><ellipse cx="371.9" cy="522.2" rx="3.2" ry="2.1" fill="#86ab5a"/><ellipse cx="393.7" cy="524.3" rx="1.3" ry="1.5" fill="#5a8238"/><ellipse cx="393.6" cy="526.5" rx="1.6" ry="2.2" fill="#3e5c2a"/><ellipse cx="395.1" cy="525.3" rx="1.9" ry="2.4" fill="#4f7236"/><ellipse cx="377.5" cy="524.2" rx="2.6" ry="1.0" fill="#6f9a48"/><ellipse cx="379.5" cy="523.0" rx="1.5" ry="2.0" fill="#86ab5a"/><ellipse cx="388.9" cy="531.4" rx="1.6" ry="1.4" fill="#3e5c2a"/><ellipse cx="388.1" cy="527.8" rx="2.9" ry="1.4" fill="#527636"/><ellipse cx="384.9" cy="519.6" rx="2.4" ry="1.9" fill="#6f9a48"/><ellipse cx="383.2" cy="520.0" rx="2.5" ry="2.1" fill="#6f9a48"/><ellipse cx="369.4" cy="530.2" rx="1.6" ry="1.3" fill="#6f9a48"/><ellipse cx="950.0" cy="354.0" rx="10.2" ry="11.9" fill="#4f7232" /><ellipse cx="944.2" cy="358.9" rx="1.4" ry="1.9" fill="#96b868"/><ellipse cx="940.8" cy="357.4" rx="1.7" ry="2.5" fill="#86ab5a"/><ellipse cx="942.2" cy="355.6" rx="2.9" ry="1.4" fill="#6f9a48"/><ellipse cx="949.0" cy="360.8" rx="1.3" ry="1.3" fill="#4a6c30"/><ellipse cx="946.4" cy="342.4" rx="3.1" ry="2.5" fill="#6f9a48"/><ellipse cx="943.2" cy="361.9" rx="1.7" ry="1.7" fill="#96b868"/><ellipse cx="946.0" cy="348.0" rx="1.5" ry="1.1" fill="#6f9a48"/><ellipse cx="948.4" cy="359.9" rx="3.1" ry="1.2" fill="#6a9444"/><ellipse cx="946.3" cy="342.7" rx="2.4" ry="1.3" fill="#6f9a48"/><ellipse cx="950.3" cy="355.6" rx="1.8" ry="2.3" fill="#5a8238"/><ellipse cx="950.3" cy="355.3" rx="1.5" ry="2.4" fill="#6a9444"/><ellipse cx="957.3" cy="347.4" rx="1.9" ry="2.2" fill="#5a8238"/><ellipse cx="957.5" cy="351.0" rx="2.5" ry="2.0" fill="#96b868"/><ellipse cx="949.8" cy="358.9" rx="1.9" ry="1.9" fill="#6a9444"/><ellipse cx="946.6" cy="347.4" rx="2.1" ry="2.2" fill="#9cbf70"/><ellipse cx="946.8" cy="347.7" rx="2.0" ry="2.1" fill="#86ab5a"/><ellipse cx="950.0" cy="347.1" rx="1.3" ry="2.0" fill="#6f9a48"/><ellipse cx="940.3" cy="357.8" rx="1.3" ry="2.5" fill="#6f9a48"/><ellipse cx="955.6" cy="366.1" rx="1.5" ry="2.2" fill="#3e5c2a"/><ellipse cx="948.5" cy="358.8" rx="3.1" ry="2.3" fill="#7fa452"/><ellipse cx="943.5" cy="363.3" rx="1.3" ry="1.3" fill="#5a8238"/><ellipse cx="954.2" cy="342.3" rx="2.9" ry="1.4" fill="#6f9a48"/><ellipse cx="961.6" cy="357.0" rx="2.4" ry="1.5" fill="#587f3a"/><ellipse cx="958.0" cy="345.0" rx="2.7" ry="2.5" fill="#3a5626"/><ellipse cx="954.1" cy="361.8" rx="2.8" ry="1.5" fill="#4f7236"/><ellipse cx="951.4" cy="363.5" rx="1.9" ry="2.0" fill="#587f3a"/><ellipse cx="939.9" cy="361.0" rx="2.7" ry="1.8" fill="#4a6c30"/><ellipse cx="958.5" cy="356.7" rx="2.3" ry="1.8" fill="#4f7236"/><ellipse cx="949.9" cy="356.5" rx="1.6" ry="1.1" fill="#7fa452"/><ellipse cx="957.5" cy="350.0" rx="2.9" ry="2.1" fill="#7fa452"/><ellipse cx="947.7" cy="364.5" rx="1.8" ry="1.0" fill="#587f3a"/><ellipse cx="955.2" cy="360.9" rx="2.3" ry="2.4" fill="#3e5c2a"/><ellipse cx="956.4" cy="353.8" rx="2.1" ry="2.2" fill="#587f3a"/><ellipse cx="948.9" cy="350.8" rx="1.7" ry="1.4" fill="#6f9a48"/><ellipse cx="948.3" cy="348.9" rx="1.5" ry="1.1" fill="#86ab5a"/><ellipse cx="948.7" cy="357.1" rx="1.7" ry="1.5" fill="#4a6c30"/><ellipse cx="953.5" cy="359.2" rx="1.5" ry="1.9" fill="#3e5c2a"/><ellipse cx="959.4" cy="350.4" rx="1.4" ry="2.1" fill="#527636"/><ellipse cx="950.7" cy="367.4" rx="2.6" ry="2.2" fill="#3e5c2a"/><ellipse cx="952.0" cy="356.6" rx="3.2" ry="1.5" fill="#527636"/><ellipse cx="958.2" cy="356.8" rx="2.6" ry="1.6" fill="#587f3a"/><ellipse cx="945.4" cy="342.9" rx="2.7" ry="2.6" fill="#6f9a48"/><ellipse cx="957.6" cy="344.5" rx="3.0" ry="2.0" fill="#6a9444"/><ellipse cx="953.1" cy="349.2" rx="2.0" ry="1.1" fill="#96b868"/><ellipse cx="953.0" cy="361.3" rx="2.2" ry="1.1" fill="#4f7236"/><ellipse cx="949.6" cy="347.7" rx="3.2" ry="1.8" fill="#9cbf70"/><ellipse cx="941.1" cy="347.5" rx="2.3" ry="2.2" fill="#9cbf70"/><ellipse cx="948.8" cy="353.6" rx="2.0" ry="1.7" fill="#6a9444"/><ellipse cx="961.6" cy="353.0" rx="1.8" ry="2.1" fill="#4f7236"/><ellipse cx="947.6" cy="357.1" rx="1.5" ry="1.8" fill="#4a6c30"/><ellipse cx="960.0" cy="382.0" rx="13.6" ry="15.299999999999999" fill="#4f7232" /><ellipse cx="958.1" cy="374.1" rx="2.2" ry="1.8" fill="#9cbf70"/><ellipse cx="963.0" cy="382.2" rx="2.3" ry="2.0" fill="#5a8238"/><ellipse cx="966.5" cy="392.0" rx="2.5" ry="1.2" fill="#3e5c2a"/><ellipse cx="963.5" cy="366.2" rx="2.9" ry="2.4" fill="#86ab5a"/><ellipse cx="953.4" cy="367.0" rx="1.4" ry="2.5" fill="#6f9a48"/><ellipse cx="967.9" cy="374.1" rx="1.7" ry="1.3" fill="#7fa452"/><ellipse cx="949.4" cy="374.7" rx="1.7" ry="1.0" fill="#6f9a48"/><ellipse cx="949.2" cy="373.8" rx="1.7" ry="2.2" fill="#9cbf70"/><ellipse cx="958.8" cy="376.7" rx="2.1" ry="2.5" fill="#6f9a48"/><ellipse cx="950.3" cy="390.4" rx="2.5" ry="2.6" fill="#3a5626"/><ellipse cx="962.9" cy="376.5" rx="2.2" ry="2.1" fill="#4a6c30"/><ellipse cx="955.9" cy="381.9" rx="2.2" ry="1.6" fill="#6a9444"/><ellipse cx="950.3" cy="382.2" rx="2.0" ry="2.4" fill="#86ab5a"/><ellipse cx="968.3" cy="368.4" rx="1.5" ry="1.7" fill="#6f9a48"/><ellipse cx="964.6" cy="373.8" rx="1.9" ry="1.9" fill="#7fa452"/><ellipse cx="955.0" cy="392.5" rx="2.8" ry="1.1" fill="#6a9444"/><ellipse cx="969.6" cy="382.5" rx="1.4" ry="1.6" fill="#4f7236"/><ellipse cx="961.8" cy="365.4" rx="2.1" ry="2.5" fill="#86ab5a"/><ellipse cx="957.7" cy="390.4" rx="1.8" ry="2.2" fill="#7fa452"/><ellipse cx="956.7" cy="374.7" rx="2.1" ry="1.3" fill="#86ab5a"/><ellipse cx="969.5" cy="382.8" rx="1.7" ry="2.3" fill="#587f3a"/><ellipse cx="959.6" cy="371.5" rx="2.7" ry="1.4" fill="#9cbf70"/><ellipse cx="970.9" cy="391.0" rx="3.0" ry="1.5" fill="#4f7236"/><ellipse cx="964.4" cy="382.8" rx="1.5" ry="1.0" fill="#96b868"/><ellipse cx="971.0" cy="372.0" rx="3.2" ry="2.6" fill="#4a6c30"/><ellipse cx="971.5" cy="384.4" rx="1.3" ry="2.1" fill="#587f3a"/><ellipse cx="954.0" cy="394.0" rx="1.3" ry="1.1" fill="#3a5626"/><ellipse cx="958.4" cy="396.7" rx="1.4" ry="1.3" fill="#4f7236"/><ellipse cx="954.2" cy="372.6" rx="2.2" ry="1.8" fill="#9cbf70"/><ellipse cx="959.1" cy="376.4" rx="2.2" ry="1.9" fill="#6f9a48"/><ellipse cx="957.4" cy="374.3" rx="2.1" ry="1.2" fill="#9cbf70"/><ellipse cx="969.7" cy="371.5" rx="2.0" ry="1.6" fill="#7fa452"/><ellipse cx="951.6" cy="384.9" rx="3.1" ry="1.6" fill="#6f9a48"/><ellipse cx="962.9" cy="395.6" rx="1.9" ry="1.9" fill="#587f3a"/><ellipse cx="963.3" cy="374.0" rx="1.7" ry="1.1" fill="#3a5626"/><ellipse cx="967.2" cy="387.2" rx="1.9" ry="1.4" fill="#587f3a"/><ellipse cx="958.1" cy="391.8" rx="2.9" ry="1.3" fill="#4a6c30"/><ellipse cx="962.8" cy="369.2" rx="1.2" ry="2.0" fill="#6f9a48"/><ellipse cx="949.1" cy="387.7" rx="2.5" ry="1.8" fill="#6f9a48"/><ellipse cx="958.9" cy="385.2" rx="2.1" ry="2.5" fill="#7fa452"/><ellipse cx="957.8" cy="380.1" rx="2.2" ry="1.8" fill="#4a6c30"/><ellipse cx="956.9" cy="376.3" rx="1.4" ry="2.2" fill="#9cbf70"/><ellipse cx="963.0" cy="367.3" rx="3.0" ry="1.9" fill="#86ab5a"/><ellipse cx="959.9" cy="394.3" rx="1.9" ry="1.0" fill="#4f7236"/><ellipse cx="975.2" cy="384.0" rx="1.5" ry="2.2" fill="#3e5c2a"/><ellipse cx="953.7" cy="381.5" rx="2.1" ry="1.7" fill="#86ab5a"/><ellipse cx="963.2" cy="373.7" rx="1.4" ry="2.5" fill="#86ab5a"/><ellipse cx="959.5" cy="385.4" rx="2.2" ry="1.1" fill="#7fa452"/><ellipse cx="954.0" cy="381.2" rx="1.3" ry="1.0" fill="#9cbf70"/><ellipse cx="966.2" cy="385.1" rx="2.3" ry="1.2" fill="#4f7236"/><ellipse cx="964.5" cy="381.5" rx="1.3" ry="1.1" fill="#6a9444"/><ellipse cx="948.3" cy="384.3" rx="1.8" ry="1.0" fill="#86ab5a"/><ellipse cx="966.1" cy="369.6" rx="1.9" ry="1.3" fill="#6f9a48"/><ellipse cx="963.1" cy="374.0" rx="1.9" ry="1.5" fill="#9cbf70"/><ellipse cx="946.1" cy="381.4" rx="3.1" ry="1.2" fill="#86ab5a"/><ellipse cx="958.8" cy="378.2" rx="2.5" ry="2.3" fill="#9cbf70"/><ellipse cx="958.3" cy="375.8" rx="3.2" ry="2.1" fill="#86ab5a"/><ellipse cx="958.0" cy="396.9" rx="2.5" ry="1.6" fill="#3e5c2a"/><ellipse cx="955.6" cy="373.2" rx="2.5" ry="2.6" fill="#9cbf70"/><ellipse cx="974.2" cy="374.1" rx="1.7" ry="2.2" fill="#6a9444"/><ellipse cx="959.4" cy="382.9" rx="1.5" ry="2.3" fill="#527636"/><ellipse cx="971.7" cy="378.7" rx="2.9" ry="2.3" fill="#587f3a"/><ellipse cx="966.7" cy="375.2" rx="3.0" ry="2.6" fill="#527636"/><ellipse cx="970.5" cy="371.2" rx="1.3" ry="2.4" fill="#527636"/><ellipse cx="965.0" cy="393.6" rx="2.9" ry="2.4" fill="#4f7236"/><ellipse cx="957.1" cy="383.7" rx="1.8" ry="2.4" fill="#527636"/><ellipse cx="951.7" cy="387.9" rx="1.8" ry="1.1" fill="#7fa452"/><ellipse cx="952.6" cy="384.8" rx="2.3" ry="1.2" fill="#3a5626"/><ellipse cx="963.4" cy="377.0" rx="2.9" ry="2.2" fill="#5a8238"/><ellipse cx="956.3" cy="396.6" rx="2.3" ry="1.6" fill="#4f7236"/><ellipse cx="967.5" cy="390.1" rx="2.5" ry="2.6" fill="#4f7236"/><ellipse cx="960.7" cy="381.8" rx="2.8" ry="1.3" fill="#6a9444"/><ellipse cx="958.3" cy="389.3" rx="1.4" ry="1.5" fill="#4a6c30"/><ellipse cx="947.2" cy="384.9" rx="2.8" ry="2.6" fill="#86ab5a"/><ellipse cx="968.9" cy="385.1" rx="1.2" ry="1.1" fill="#3e5c2a"/><ellipse cx="965.5" cy="396.9" rx="2.1" ry="1.9" fill="#4f7236"/><ellipse cx="961.8" cy="380.3" rx="3.2" ry="2.2" fill="#4a6c30"/><ellipse cx="957.2" cy="395.8" rx="1.5" ry="1.4" fill="#587f3a"/><ellipse cx="960.8" cy="383.8" rx="1.2" ry="1.3" fill="#4a6c30"/><ellipse cx="955.0" cy="377.1" rx="2.9" ry="2.5" fill="#9cbf70"/><ellipse cx="966.0" cy="414.0" rx="15.299999999999999" ry="17.0" fill="#4f7232" /><ellipse cx="972.0" cy="420.4" rx="2.0" ry="2.4" fill="#4f7236"/><ellipse cx="957.5" cy="423.1" rx="3.1" ry="1.6" fill="#3a5626"/><ellipse cx="949.2" cy="408.3" rx="2.1" ry="2.3" fill="#86ab5a"/><ellipse cx="967.1" cy="404.5" rx="1.9" ry="1.6" fill="#9cbf70"/><ellipse cx="962.3" cy="413.0" rx="2.5" ry="1.4" fill="#5a8238"/><ellipse cx="973.8" cy="399.1" rx="2.8" ry="1.9" fill="#9cbf70"/><ellipse cx="960.3" cy="401.7" rx="1.6" ry="2.0" fill="#9cbf70"/><ellipse cx="957.3" cy="423.6" rx="1.3" ry="1.0" fill="#7fa452"/><ellipse cx="960.6" cy="399.2" rx="2.0" ry="2.1" fill="#9cbf70"/><ellipse cx="954.9" cy="422.3" rx="2.0" ry="1.5" fill="#527636"/><ellipse cx="968.2" cy="429.4" rx="2.3" ry="1.7" fill="#3e5c2a"/><ellipse cx="950.3" cy="412.0" rx="1.5" ry="1.2" fill="#86ab5a"/><ellipse cx="979.4" cy="423.5" rx="1.2" ry="1.4" fill="#587f3a"/><ellipse cx="954.6" cy="412.5" rx="2.1" ry="2.4" fill="#6f9a48"/><ellipse cx="969.0" cy="419.2" rx="2.4" ry="1.4" fill="#527636"/><ellipse cx="957.4" cy="398.8" rx="3.0" ry="2.2" fill="#9cbf70"/><ellipse cx="966.6" cy="421.3" rx="1.8" ry="1.2" fill="#5a8238"/><ellipse cx="973.3" cy="400.1" rx="3.2" ry="2.3" fill="#86ab5a"/><ellipse cx="957.1" cy="422.1" rx="1.7" ry="2.2" fill="#7fa452"/><ellipse cx="957.9" cy="408.2" rx="1.9" ry="1.2" fill="#9cbf70"/><ellipse cx="978.9" cy="418.0" rx="1.5" ry="1.1" fill="#3e5c2a"/><ellipse cx="967.2" cy="404.8" rx="3.0" ry="2.3" fill="#9cbf70"/><ellipse cx="968.8" cy="433.1" rx="2.9" ry="2.5" fill="#3e5c2a"/><ellipse cx="961.9" cy="424.1" rx="1.8" ry="1.2" fill="#527636"/><ellipse cx="978.3" cy="417.3" rx="1.2" ry="1.6" fill="#4f7236"/><ellipse cx="962.8" cy="399.6" rx="2.5" ry="2.4" fill="#86ab5a"/><ellipse cx="982.1" cy="410.3" rx="1.7" ry="2.0" fill="#4f7236"/><ellipse cx="952.8" cy="406.9" rx="1.8" ry="2.2" fill="#9cbf70"/><ellipse cx="968.7" cy="428.1" rx="2.9" ry="2.0" fill="#4f7236"/><ellipse cx="961.5" cy="421.1" rx="2.4" ry="2.5" fill="#4a6c30"/><ellipse cx="958.3" cy="423.5" rx="1.6" ry="1.6" fill="#5a8238"/><ellipse cx="976.4" cy="422.4" rx="1.8" ry="1.6" fill="#3e5c2a"/><ellipse cx="979.9" cy="409.4" rx="2.3" ry="1.0" fill="#3e5c2a"/><ellipse cx="954.4" cy="408.0" rx="1.9" ry="1.4" fill="#86ab5a"/><ellipse cx="965.4" cy="413.8" rx="2.3" ry="1.2" fill="#4a6c30"/><ellipse cx="978.0" cy="415.6" rx="2.7" ry="2.3" fill="#3e5c2a"/><ellipse cx="971.0" cy="415.3" rx="1.7" ry="2.2" fill="#527636"/><ellipse cx="973.4" cy="397.4" rx="1.4" ry="2.1" fill="#9cbf70"/><ellipse cx="957.8" cy="410.4" rx="2.1" ry="1.7" fill="#86ab5a"/><ellipse cx="951.4" cy="424.7" rx="3.0" ry="1.1" fill="#4a6c30"/><ellipse cx="960.6" cy="397.4" rx="1.5" ry="1.6" fill="#9cbf70"/><ellipse cx="977.0" cy="422.7" rx="1.8" ry="1.1" fill="#3e5c2a"/><ellipse cx="958.9" cy="407.2" rx="1.7" ry="2.2" fill="#86ab5a"/><ellipse cx="965.3" cy="428.4" rx="3.0" ry="2.0" fill="#4f7236"/><ellipse cx="954.3" cy="417.0" rx="1.9" ry="1.4" fill="#9cbf70"/><ellipse cx="980.1" cy="403.5" rx="2.3" ry="2.0" fill="#6a9444"/><ellipse cx="958.0" cy="415.9" rx="1.4" ry="2.2" fill="#6f9a48"/><ellipse cx="979.6" cy="425.9" rx="1.9" ry="1.0" fill="#4f7236"/><ellipse cx="968.6" cy="429.2" rx="1.4" ry="1.1" fill="#4f7236"/><ellipse cx="978.0" cy="415.1" rx="2.7" ry="2.1" fill="#587f3a"/><ellipse cx="948.8" cy="413.4" rx="1.8" ry="1.9" fill="#9cbf70"/><ellipse cx="968.1" cy="406.8" rx="1.3" ry="2.1" fill="#6a9444"/><ellipse cx="977.5" cy="405.4" rx="3.2" ry="1.4" fill="#96b868"/><ellipse cx="970.0" cy="400.6" rx="1.7" ry="1.4" fill="#9cbf70"/><ellipse cx="965.4" cy="395.0" rx="1.2" ry="1.9" fill="#9cbf70"/><ellipse cx="969.3" cy="416.5" rx="2.9" ry="2.0" fill="#6a9444"/><ellipse cx="978.2" cy="399.9" rx="2.3" ry="1.2" fill="#5a8238"/><ellipse cx="966.6" cy="415.3" rx="1.9" ry="2.4" fill="#5a8238"/><ellipse cx="961.5" cy="424.6" rx="2.9" ry="2.3" fill="#6a9444"/><ellipse cx="974.6" cy="417.9" rx="1.5" ry="2.0" fill="#587f3a"/><ellipse cx="982.0" cy="410.1" rx="2.4" ry="1.6" fill="#3e5c2a"/><ellipse cx="964.0" cy="413.6" rx="2.3" ry="1.9" fill="#527636"/><ellipse cx="966.1" cy="431.4" rx="1.4" ry="2.5" fill="#3e5c2a"/><ellipse cx="967.1" cy="414.7" rx="1.5" ry="1.5" fill="#4a6c30"/><ellipse cx="963.6" cy="427.9" rx="2.4" ry="1.7" fill="#4f7236"/><ellipse cx="969.6" cy="422.1" rx="2.6" ry="1.4" fill="#587f3a"/><ellipse cx="967.9" cy="414.3" rx="2.6" ry="1.5" fill="#3a5626"/><ellipse cx="968.5" cy="428.6" rx="2.2" ry="1.1" fill="#3e5c2a"/><ellipse cx="959.8" cy="429.2" rx="2.3" ry="1.6" fill="#3e5c2a"/><ellipse cx="974.4" cy="426.9" rx="1.7" ry="1.9" fill="#4f7236"/><ellipse cx="964.0" cy="397.8" rx="1.6" ry="1.5" fill="#9cbf70"/><ellipse cx="980.7" cy="414.2" rx="1.5" ry="2.1" fill="#3e5c2a"/><ellipse cx="949.6" cy="421.9" rx="1.9" ry="2.2" fill="#86ab5a"/><ellipse cx="974.0" cy="406.5" rx="1.8" ry="2.5" fill="#5a8238"/><ellipse cx="971.8" cy="408.1" rx="1.9" ry="2.2" fill="#7fa452"/><ellipse cx="951.5" cy="405.4" rx="1.3" ry="2.4" fill="#86ab5a"/><ellipse cx="952.5" cy="405.0" rx="1.9" ry="2.4" fill="#86ab5a"/><ellipse cx="958.2" cy="406.2" rx="1.4" ry="1.4" fill="#86ab5a"/><ellipse cx="962.0" cy="423.3" rx="2.9" ry="1.3" fill="#7fa452"/><ellipse cx="963.0" cy="396.8" rx="1.2" ry="2.0" fill="#6f9a48"/><ellipse cx="977.9" cy="409.9" rx="2.2" ry="2.3" fill="#96b868"/><ellipse cx="951.3" cy="421.2" rx="2.3" ry="1.8" fill="#86ab5a"/><ellipse cx="962.7" cy="401.0" rx="2.2" ry="2.1" fill="#86ab5a"/><ellipse cx="979.3" cy="425.6" rx="1.3" ry="1.0" fill="#587f3a"/><ellipse cx="974.8" cy="399.8" rx="2.0" ry="1.4" fill="#86ab5a"/><ellipse cx="949.1" cy="415.9" rx="1.3" ry="1.3" fill="#9cbf70"/><ellipse cx="980.2" cy="423.3" rx="3.1" ry="1.7" fill="#3e5c2a"/><ellipse cx="964.6" cy="417.4" rx="3.0" ry="1.3" fill="#5a8238"/><ellipse cx="967.9" cy="414.4" rx="2.9" ry="1.6" fill="#4a6c30"/><ellipse cx="969.5" cy="405.3" rx="1.8" ry="2.0" fill="#5a8238"/><ellipse cx="978.1" cy="401.4" rx="2.1" ry="1.7" fill="#6a9444"/><ellipse cx="968.3" cy="395.5" rx="2.8" ry="1.2" fill="#9cbf70"/><ellipse cx="974.1" cy="406.4" rx="1.6" ry="1.6" fill="#6a9444"/><ellipse cx="975.0" cy="398.2" rx="2.8" ry="1.5" fill="#6f9a48"/><ellipse cx="967.1" cy="417.0" rx="2.4" ry="2.2" fill="#6a9444"/><ellipse cx="950.0" cy="415.7" rx="2.6" ry="1.8" fill="#9cbf70"/><ellipse cx="968.4" cy="421.8" rx="2.9" ry="1.6" fill="#587f3a"/><ellipse cx="955.2" cy="406.0" rx="1.8" ry="2.0" fill="#86ab5a"/><ellipse cx="970.0" cy="448.0" rx="15.299999999999999" ry="17.849999999999998" fill="#4f7232" /><ellipse cx="962.6" cy="456.2" rx="2.5" ry="1.5" fill="#527636"/><ellipse cx="984.5" cy="445.6" rx="2.8" ry="1.7" fill="#3e5c2a"/><ellipse cx="985.5" cy="455.3" rx="2.0" ry="1.2" fill="#587f3a"/><ellipse cx="957.7" cy="446.0" rx="3.1" ry="2.4" fill="#6f9a48"/><ellipse cx="964.9" cy="437.4" rx="1.5" ry="2.5" fill="#86ab5a"/><ellipse cx="979.0" cy="452.2" rx="1.9" ry="2.2" fill="#3e5c2a"/><ellipse cx="984.3" cy="445.9" rx="1.7" ry="1.3" fill="#3e5c2a"/><ellipse cx="968.6" cy="440.3" rx="2.3" ry="1.2" fill="#86ab5a"/><ellipse cx="964.6" cy="428.0" rx="2.3" ry="1.9" fill="#6f9a48"/><ellipse cx="987.0" cy="441.6" rx="2.9" ry="2.5" fill="#4f7236"/><ellipse cx="979.9" cy="432.5" rx="1.5" ry="1.7" fill="#86ab5a"/><ellipse cx="982.1" cy="462.7" rx="1.7" ry="1.9" fill="#587f3a"/><ellipse cx="981.0" cy="442.5" rx="1.2" ry="1.9" fill="#3a5626"/><ellipse cx="974.7" cy="435.7" rx="2.9" ry="2.1" fill="#6f9a48"/><ellipse cx="980.7" cy="440.6" rx="2.3" ry="1.5" fill="#5a8238"/><ellipse cx="979.7" cy="464.6" rx="2.5" ry="1.1" fill="#4f7236"/><ellipse cx="970.2" cy="430.2" rx="3.2" ry="1.3" fill="#86ab5a"/><ellipse cx="955.3" cy="447.2" rx="1.9" ry="1.8" fill="#6f9a48"/><ellipse cx="958.1" cy="433.1" rx="3.1" ry="1.6" fill="#9cbf70"/><ellipse cx="963.3" cy="457.8" rx="2.8" ry="1.6" fill="#3a5626"/><ellipse cx="980.8" cy="452.6" rx="2.3" ry="1.6" fill="#587f3a"/><ellipse cx="960.7" cy="456.7" rx="1.4" ry="1.8" fill="#96b868"/><ellipse cx="978.8" cy="453.9" rx="3.2" ry="1.9" fill="#3e5c2a"/><ellipse cx="963.9" cy="447.1" rx="3.0" ry="1.5" fill="#86ab5a"/><ellipse cx="975.4" cy="439.8" rx="2.3" ry="2.3" fill="#527636"/><ellipse cx="965.6" cy="456.1" rx="2.3" ry="2.2" fill="#7fa452"/><ellipse cx="967.5" cy="436.1" rx="1.5" ry="2.0" fill="#86ab5a"/><ellipse cx="967.1" cy="447.7" rx="1.7" ry="2.1" fill="#4a6c30"/><ellipse cx="969.2" cy="462.5" rx="1.4" ry="1.4" fill="#4f7236"/><ellipse cx="975.5" cy="466.2" rx="1.7" ry="1.6" fill="#587f3a"/><ellipse cx="971.7" cy="446.6" rx="2.2" ry="2.2" fill="#3a5626"/><ellipse cx="958.6" cy="445.0" rx="2.1" ry="2.4" fill="#86ab5a"/><ellipse cx="982.7" cy="454.9" rx="2.9" ry="1.4" fill="#4f7236"/><ellipse cx="972.7" cy="437.9" rx="2.2" ry="2.5" fill="#86ab5a"/><ellipse cx="958.1" cy="450.4" rx="2.6" ry="1.9" fill="#9cbf70"/><ellipse cx="958.8" cy="432.9" rx="1.8" ry="1.5" fill="#6f9a48"/><ellipse cx="978.9" cy="458.5" rx="2.0" ry="2.4" fill="#3e5c2a"/><ellipse cx="979.6" cy="436.1" rx="2.6" ry="1.4" fill="#96b868"/><ellipse cx="969.7" cy="458.8" rx="2.1" ry="2.0" fill="#587f3a"/><ellipse cx="969.2" cy="454.3" rx="2.7" ry="1.5" fill="#96b868"/><ellipse cx="970.4" cy="456.3" rx="1.2" ry="2.4" fill="#4a6c30"/><ellipse cx="985.0" cy="450.5" rx="2.8" ry="2.3" fill="#587f3a"/><ellipse cx="959.3" cy="458.0" rx="3.1" ry="2.0" fill="#5a8238"/><ellipse cx="974.1" cy="455.6" rx="2.9" ry="2.3" fill="#587f3a"/><ellipse cx="959.8" cy="457.6" rx="2.5" ry="1.6" fill="#5a8238"/><ellipse cx="977.8" cy="430.2" rx="1.6" ry="2.3" fill="#9cbf70"/><ellipse cx="974.6" cy="452.8" rx="1.9" ry="1.5" fill="#4f7236"/><ellipse cx="966.7" cy="463.0" rx="2.3" ry="1.8" fill="#587f3a"/><ellipse cx="978.8" cy="450.6" rx="1.6" ry="2.2" fill="#587f3a"/><ellipse cx="980.4" cy="454.3" rx="1.9" ry="2.5" fill="#587f3a"/><ellipse cx="956.5" cy="446.7" rx="2.3" ry="2.0" fill="#6f9a48"/><ellipse cx="978.9" cy="432.0" rx="1.7" ry="1.4" fill="#86ab5a"/><ellipse cx="959.5" cy="445.9" rx="2.6" ry="1.4" fill="#6f9a48"/><ellipse cx="971.2" cy="460.8" rx="3.0" ry="1.7" fill="#3e5c2a"/><ellipse cx="980.0" cy="452.1" rx="2.9" ry="2.2" fill="#4f7236"/><ellipse cx="987.2" cy="450.2" rx="3.1" ry="2.6" fill="#3e5c2a"/><ellipse cx="958.7" cy="450.6" rx="3.0" ry="1.5" fill="#86ab5a"/><ellipse cx="984.4" cy="456.4" rx="1.7" ry="1.2" fill="#3e5c2a"/><ellipse cx="971.6" cy="444.8" rx="2.5" ry="1.0" fill="#5a8238"/><ellipse cx="980.6" cy="450.6" rx="2.1" ry="1.3" fill="#587f3a"/><ellipse cx="980.6" cy="447.6" rx="1.9" ry="2.4" fill="#4f7236"/><ellipse cx="978.7" cy="465.4" rx="3.0" ry="1.7" fill="#3e5c2a"/><ellipse cx="963.9" cy="442.8" rx="1.6" ry="2.3" fill="#9cbf70"/><ellipse cx="960.8" cy="431.5" rx="1.5" ry="2.3" fill="#9cbf70"/><ellipse cx="982.7" cy="459.1" rx="2.9" ry="2.4" fill="#3e5c2a"/><ellipse cx="979.4" cy="436.4" rx="1.4" ry="1.1" fill="#527636"/><ellipse cx="971.7" cy="454.3" rx="2.7" ry="1.6" fill="#527636"/><ellipse cx="979.3" cy="441.7" rx="2.0" ry="1.8" fill="#7fa452"/><ellipse cx="974.6" cy="449.2" rx="2.1" ry="2.2" fill="#3a5626"/><ellipse cx="955.3" cy="450.8" rx="1.5" ry="1.5" fill="#86ab5a"/><ellipse cx="966.1" cy="442.8" rx="1.9" ry="2.0" fill="#86ab5a"/><ellipse cx="975.4" cy="443.2" rx="1.4" ry="2.1" fill="#527636"/><ellipse cx="966.2" cy="450.8" rx="2.2" ry="1.8" fill="#4a6c30"/><ellipse cx="968.4" cy="464.4" rx="1.9" ry="2.0" fill="#4f7236"/><ellipse cx="977.5" cy="447.1" rx="2.7" ry="1.9" fill="#6a9444"/><ellipse cx="971.8" cy="429.5" rx="1.4" ry="1.7" fill="#86ab5a"/><ellipse cx="985.4" cy="451.8" rx="2.1" ry="2.4" fill="#587f3a"/><ellipse cx="983.3" cy="447.1" rx="2.9" ry="2.4" fill="#3e5c2a"/><ellipse cx="972.5" cy="460.8" rx="3.0" ry="1.8" fill="#587f3a"/><ellipse cx="978.7" cy="464.8" rx="2.4" ry="1.6" fill="#3e5c2a"/><ellipse cx="975.7" cy="438.6" rx="3.0" ry="2.1" fill="#6a9444"/><ellipse cx="981.5" cy="451.5" rx="2.8" ry="2.1" fill="#3e5c2a"/><ellipse cx="985.0" cy="444.3" rx="2.2" ry="1.4" fill="#4f7236"/><ellipse cx="974.9" cy="430.4" rx="1.7" ry="1.1" fill="#86ab5a"/><ellipse cx="968.2" cy="437.0" rx="1.9" ry="1.5" fill="#6f9a48"/><ellipse cx="977.9" cy="438.8" rx="1.3" ry="1.5" fill="#5a8238"/><ellipse cx="979.7" cy="454.0" rx="3.1" ry="1.4" fill="#4f7236"/><ellipse cx="955.8" cy="450.5" rx="1.8" ry="1.6" fill="#9cbf70"/><ellipse cx="974.9" cy="438.1" rx="2.5" ry="1.7" fill="#527636"/><ellipse cx="986.5" cy="440.8" rx="1.6" ry="2.1" fill="#3e5c2a"/><ellipse cx="980.5" cy="458.4" rx="1.8" ry="1.4" fill="#4f7236"/><ellipse cx="964.9" cy="448.3" rx="2.2" ry="1.8" fill="#527636"/><ellipse cx="971.3" cy="458.3" rx="1.4" ry="1.5" fill="#3e5c2a"/><ellipse cx="970.7" cy="459.4" rx="3.0" ry="2.2" fill="#4f7236"/><ellipse cx="977.4" cy="446.1" rx="2.1" ry="1.4" fill="#5a8238"/><ellipse cx="978.9" cy="465.2" rx="2.9" ry="2.0" fill="#587f3a"/><ellipse cx="962.9" cy="451.4" rx="2.5" ry="2.4" fill="#96b868"/><ellipse cx="965.8" cy="430.4" rx="1.9" ry="2.3" fill="#6f9a48"/><ellipse cx="976.0" cy="442.7" rx="3.1" ry="1.5" fill="#4a6c30"/><ellipse cx="958.2" cy="433.7" rx="3.1" ry="1.1" fill="#86ab5a"/><ellipse cx="957.3" cy="446.0" rx="2.0" ry="2.2" fill="#86ab5a"/><ellipse cx="969.4" cy="449.4" rx="2.9" ry="2.0" fill="#3a5626"/><ellipse cx="972.0" cy="482.0" rx="15.299999999999999" ry="18.7" fill="#4f7232" /><ellipse cx="960.9" cy="486.5" rx="2.9" ry="1.8" fill="#6f9a48"/><ellipse cx="981.8" cy="497.1" rx="1.2" ry="2.5" fill="#587f3a"/><ellipse cx="981.6" cy="499.2" rx="2.6" ry="1.4" fill="#3e5c2a"/><ellipse cx="972.7" cy="474.5" rx="2.7" ry="1.3" fill="#6f9a48"/><ellipse cx="987.2" cy="489.0" rx="2.7" ry="1.8" fill="#4f7236"/><ellipse cx="977.6" cy="500.9" rx="2.1" ry="1.7" fill="#4f7236"/><ellipse cx="975.8" cy="479.2" rx="1.4" ry="2.3" fill="#527636"/><ellipse cx="965.4" cy="477.2" rx="1.3" ry="1.3" fill="#9cbf70"/><ellipse cx="968.1" cy="479.0" rx="1.5" ry="1.1" fill="#9cbf70"/><ellipse cx="983.5" cy="475.4" rx="2.0" ry="1.1" fill="#5a8238"/><ellipse cx="974.1" cy="497.6" rx="2.7" ry="2.2" fill="#3e5c2a"/><ellipse cx="980.4" cy="494.4" rx="2.5" ry="2.3" fill="#3e5c2a"/><ellipse cx="969.8" cy="469.6" rx="2.7" ry="2.1" fill="#9cbf70"/><ellipse cx="979.3" cy="470.6" rx="1.7" ry="2.6" fill="#5a8238"/><ellipse cx="965.7" cy="474.1" rx="1.8" ry="1.7" fill="#86ab5a"/><ellipse cx="979.0" cy="464.7" rx="2.8" ry="2.4" fill="#9cbf70"/><ellipse cx="969.1" cy="485.0" rx="1.3" ry="1.7" fill="#96b868"/><ellipse cx="982.0" cy="491.1" rx="1.3" ry="1.8" fill="#3e5c2a"/><ellipse cx="960.4" cy="491.9" rx="1.5" ry="1.1" fill="#96b868"/><ellipse cx="964.9" cy="497.2" rx="2.9" ry="1.6" fill="#6a9444"/><ellipse cx="967.5" cy="488.7" rx="2.9" ry="1.6" fill="#7fa452"/><ellipse cx="955.3" cy="484.7" rx="2.0" ry="2.0" fill="#6f9a48"/><ellipse cx="958.5" cy="467.6" rx="3.1" ry="2.2" fill="#9cbf70"/><ellipse cx="965.3" cy="463.1" rx="1.9" ry="1.5" fill="#6f9a48"/><ellipse cx="973.3" cy="480.2" rx="1.4" ry="1.3" fill="#6a9444"/><ellipse cx="975.2" cy="496.2" rx="1.3" ry="1.9" fill="#587f3a"/><ellipse cx="965.7" cy="487.3" rx="2.0" ry="2.6" fill="#96b868"/><ellipse cx="970.4" cy="496.5" rx="2.9" ry="1.8" fill="#587f3a"/><ellipse cx="978.5" cy="466.3" rx="2.9" ry="1.1" fill="#6f9a48"/><ellipse cx="985.9" cy="473.4" rx="2.1" ry="1.5" fill="#4a6c30"/><ellipse cx="967.1" cy="468.1" rx="1.7" ry="1.9" fill="#9cbf70"/><ellipse cx="959.7" cy="489.0" rx="2.0" ry="2.5" fill="#5a8238"/><ellipse cx="956.8" cy="473.2" rx="3.1" ry="1.5" fill="#9cbf70"/><ellipse cx="987.0" cy="485.0" rx="1.6" ry="1.3" fill="#3e5c2a"/><ellipse cx="955.4" cy="485.7" rx="2.1" ry="1.9" fill="#86ab5a"/><ellipse cx="966.1" cy="492.3" rx="1.7" ry="2.1" fill="#4a6c30"/><ellipse cx="969.7" cy="476.1" rx="2.7" ry="1.3" fill="#86ab5a"/><ellipse cx="982.1" cy="495.7" rx="1.5" ry="1.7" fill="#587f3a"/><ellipse cx="979.4" cy="498.6" rx="1.7" ry="1.7" fill="#587f3a"/><ellipse cx="964.1" cy="487.5" rx="1.6" ry="2.5" fill="#527636"/><ellipse cx="964.4" cy="479.2" rx="2.4" ry="1.0" fill="#9cbf70"/><ellipse cx="975.9" cy="476.5" rx="2.0" ry="2.4" fill="#527636"/><ellipse cx="979.4" cy="467.6" rx="2.0" ry="2.4" fill="#86ab5a"/><ellipse cx="971.5" cy="497.6" rx="2.3" ry="2.6" fill="#4f7236"/><ellipse cx="960.1" cy="493.2" rx="1.8" ry="1.8" fill="#5a8238"/><ellipse cx="969.5" cy="487.7" rx="1.3" ry="1.9" fill="#3a5626"/><ellipse cx="960.4" cy="473.9" rx="3.0" ry="2.2" fill="#9cbf70"/><ellipse cx="973.2" cy="465.4" rx="1.4" ry="1.4" fill="#86ab5a"/><ellipse cx="974.1" cy="461.8" rx="3.1" ry="1.1" fill="#86ab5a"/><ellipse cx="975.4" cy="472.1" rx="2.3" ry="1.9" fill="#6f9a48"/><ellipse cx="969.0" cy="503.5" rx="1.4" ry="1.3" fill="#587f3a"/><ellipse cx="972.5" cy="482.4" rx="3.1" ry="2.2" fill="#527636"/><ellipse cx="978.4" cy="497.7" rx="1.6" ry="2.6" fill="#3e5c2a"/><ellipse cx="980.2" cy="471.5" rx="2.9" ry="2.5" fill="#4a6c30"/><ellipse cx="969.0" cy="494.4" rx="2.1" ry="1.9" fill="#587f3a"/><ellipse cx="977.8" cy="473.3" rx="1.6" ry="1.4" fill="#7fa452"/><ellipse cx="983.4" cy="470.5" rx="2.4" ry="1.9" fill="#4a6c30"/><ellipse cx="980.2" cy="471.1" rx="3.2" ry="2.1" fill="#5a8238"/><ellipse cx="971.3" cy="485.0" rx="2.6" ry="1.4" fill="#4a6c30"/><ellipse cx="972.4" cy="487.0" rx="1.9" ry="1.3" fill="#7fa452"/><ellipse cx="985.4" cy="474.1" rx="1.5" ry="1.3" fill="#4a6c30"/><ellipse cx="982.5" cy="493.0" rx="2.1" ry="2.3" fill="#3e5c2a"/><ellipse cx="977.3" cy="462.9" rx="3.0" ry="1.7" fill="#9cbf70"/><ellipse cx="983.3" cy="478.6" rx="3.2" ry="2.5" fill="#4a6c30"/><ellipse cx="962.9" cy="465.8" rx="2.7" ry="1.9" fill="#6f9a48"/><ellipse cx="969.7" cy="491.8" rx="1.2" ry="1.9" fill="#96b868"/><ellipse cx="960.9" cy="487.1" rx="1.4" ry="2.6" fill="#9cbf70"/><ellipse cx="984.2" cy="475.9" rx="1.7" ry="1.8" fill="#5a8238"/><ellipse cx="968.1" cy="487.7" rx="2.5" ry="2.2" fill="#4a6c30"/><ellipse cx="976.3" cy="474.6" rx="1.5" ry="1.0" fill="#527636"/><ellipse cx="978.4" cy="484.5" rx="1.6" ry="1.0" fill="#5a8238"/><ellipse cx="978.7" cy="480.8" rx="2.9" ry="1.2" fill="#3a5626"/><ellipse cx="967.4" cy="494.0" rx="1.6" ry="1.6" fill="#96b868"/><ellipse cx="974.2" cy="484.6" rx="1.3" ry="1.0" fill="#4a6c30"/><ellipse cx="979.5" cy="468.1" rx="1.6" ry="2.3" fill="#6f9a48"/><ellipse cx="970.9" cy="474.9" rx="2.8" ry="2.4" fill="#86ab5a"/><ellipse cx="969.2" cy="492.7" rx="2.9" ry="2.2" fill="#6a9444"/><ellipse cx="983.8" cy="466.4" rx="2.2" ry="1.7" fill="#96b868"/><ellipse cx="977.0" cy="461.5" rx="2.6" ry="1.0" fill="#9cbf70"/><ellipse cx="974.4" cy="499.7" rx="2.0" ry="2.4" fill="#587f3a"/><ellipse cx="970.5" cy="473.1" rx="1.9" ry="2.1" fill="#86ab5a"/><ellipse cx="969.2" cy="467.9" rx="2.9" ry="1.3" fill="#6f9a48"/><ellipse cx="961.3" cy="467.5" rx="1.3" ry="1.9" fill="#9cbf70"/><ellipse cx="977.1" cy="486.4" rx="1.5" ry="1.9" fill="#4f7236"/><ellipse cx="972.0" cy="468.5" rx="1.9" ry="1.5" fill="#9cbf70"/><ellipse cx="958.2" cy="477.9" rx="1.7" ry="1.5" fill="#9cbf70"/><ellipse cx="957.9" cy="468.8" rx="3.1" ry="1.7" fill="#86ab5a"/><ellipse cx="960.9" cy="474.9" rx="2.9" ry="2.0" fill="#6f9a48"/><ellipse cx="971.8" cy="483.3" rx="2.3" ry="1.5" fill="#4a6c30"/><ellipse cx="976.3" cy="490.5" rx="1.5" ry="2.4" fill="#4f7236"/><ellipse cx="987.1" cy="480.1" rx="1.9" ry="1.8" fill="#3e5c2a"/><ellipse cx="981.6" cy="465.5" rx="2.0" ry="2.0" fill="#6f9a48"/><ellipse cx="974.7" cy="467.3" rx="1.5" ry="2.1" fill="#86ab5a"/><ellipse cx="970.7" cy="471.4" rx="1.6" ry="1.2" fill="#6f9a48"/><ellipse cx="965.9" cy="495.4" rx="1.9" ry="1.2" fill="#6a9444"/><ellipse cx="976.8" cy="494.8" rx="2.6" ry="2.5" fill="#587f3a"/><ellipse cx="969.3" cy="464.8" rx="2.8" ry="1.2" fill="#6f9a48"/><ellipse cx="969.2" cy="500.6" rx="2.5" ry="2.1" fill="#3e5c2a"/><ellipse cx="970.1" cy="498.4" rx="2.5" ry="1.7" fill="#587f3a"/><ellipse cx="983.0" cy="478.6" rx="1.3" ry="1.3" fill="#3a5626"/><ellipse cx="974.5" cy="496.1" rx="1.7" ry="2.3" fill="#4f7236"/><ellipse cx="978.0" cy="471.1" rx="2.0" ry="1.8" fill="#7fa452"/><ellipse cx="962.1" cy="475.5" rx="2.0" ry="1.5" fill="#6f9a48"/><ellipse cx="980.2" cy="491.4" rx="1.6" ry="1.3" fill="#3e5c2a"/><ellipse cx="961.4" cy="498.3" rx="2.2" ry="1.4" fill="#7fa452"/><ellipse cx="986.3" cy="488.4" rx="2.2" ry="2.6" fill="#587f3a"/><ellipse cx="966.8" cy="475.0" rx="1.6" ry="1.4" fill="#86ab5a"/><ellipse cx="968.0" cy="514.0" rx="16.15" ry="18.7" fill="#4f7232" /><ellipse cx="957.8" cy="514.9" rx="2.6" ry="2.5" fill="#86ab5a"/><ellipse cx="967.5" cy="510.5" rx="1.9" ry="1.5" fill="#3a5626"/><ellipse cx="965.2" cy="492.4" rx="2.1" ry="2.0" fill="#86ab5a"/><ellipse cx="971.7" cy="513.6" rx="1.7" ry="2.1" fill="#96b868"/><ellipse cx="965.4" cy="500.2" rx="1.3" ry="2.4" fill="#9cbf70"/><ellipse cx="982.5" cy="516.2" rx="2.5" ry="1.2" fill="#3e5c2a"/><ellipse cx="951.0" cy="506.8" rx="2.5" ry="2.1" fill="#86ab5a"/><ellipse cx="975.4" cy="496.4" rx="3.0" ry="2.1" fill="#9cbf70"/><ellipse cx="982.5" cy="509.6" rx="1.3" ry="1.3" fill="#3e5c2a"/><ellipse cx="960.5" cy="511.2" rx="1.5" ry="1.9" fill="#86ab5a"/><ellipse cx="984.4" cy="510.1" rx="2.6" ry="2.6" fill="#587f3a"/><ellipse cx="959.6" cy="527.9" rx="2.9" ry="1.9" fill="#4a6c30"/><ellipse cx="970.4" cy="501.3" rx="2.3" ry="1.2" fill="#6f9a48"/><ellipse cx="965.0" cy="503.7" rx="2.6" ry="1.5" fill="#6f9a48"/><ellipse cx="984.5" cy="510.8" rx="3.1" ry="1.7" fill="#3e5c2a"/><ellipse cx="965.4" cy="523.7" rx="2.4" ry="2.5" fill="#5a8238"/><ellipse cx="961.0" cy="511.3" rx="1.9" ry="1.1" fill="#9cbf70"/><ellipse cx="972.2" cy="513.4" rx="1.6" ry="2.5" fill="#3a5626"/><ellipse cx="975.0" cy="499.2" rx="2.7" ry="1.6" fill="#9cbf70"/><ellipse cx="974.4" cy="522.5" rx="3.2" ry="1.6" fill="#4f7236"/><ellipse cx="963.4" cy="514.4" rx="1.9" ry="1.9" fill="#7fa452"/><ellipse cx="952.8" cy="509.8" rx="1.6" ry="2.4" fill="#9cbf70"/><ellipse cx="972.0" cy="500.2" rx="2.6" ry="2.6" fill="#9cbf70"/><ellipse cx="978.2" cy="515.5" rx="2.0" ry="2.2" fill="#4f7236"/><ellipse cx="968.4" cy="517.6" rx="1.7" ry="1.2" fill="#96b868"/><ellipse cx="977.7" cy="517.2" rx="1.3" ry="2.6" fill="#3e5c2a"/><ellipse cx="966.7" cy="516.8" rx="1.5" ry="2.1" fill="#5a8238"/><ellipse cx="968.7" cy="518.0" rx="1.6" ry="2.6" fill="#3a5626"/><ellipse cx="971.0" cy="518.5" rx="1.3" ry="2.5" fill="#5a8238"/><ellipse cx="978.8" cy="525.3" rx="1.3" ry="1.5" fill="#587f3a"/><ellipse cx="953.7" cy="525.7" rx="1.4" ry="1.8" fill="#4a6c30"/><ellipse cx="968.7" cy="525.6" rx="3.2" ry="2.0" fill="#3e5c2a"/><ellipse cx="959.6" cy="509.5" rx="1.7" ry="1.8" fill="#9cbf70"/><ellipse cx="983.3" cy="507.8" rx="2.6" ry="1.5" fill="#3a5626"/><ellipse cx="972.8" cy="493.4" rx="2.6" ry="1.1" fill="#86ab5a"/><ellipse cx="980.0" cy="509.1" rx="2.8" ry="1.2" fill="#5a8238"/><ellipse cx="968.0" cy="526.1" rx="2.7" ry="1.3" fill="#587f3a"/><ellipse cx="978.6" cy="528.7" rx="3.2" ry="1.3" fill="#3e5c2a"/><ellipse cx="980.6" cy="529.4" rx="2.2" ry="2.3" fill="#4f7236"/><ellipse cx="954.9" cy="514.6" rx="2.7" ry="1.6" fill="#86ab5a"/><ellipse cx="960.5" cy="522.5" rx="1.6" ry="1.8" fill="#5a8238"/><ellipse cx="949.3" cy="510.6" rx="2.1" ry="1.6" fill="#86ab5a"/><ellipse cx="977.4" cy="530.0" rx="2.7" ry="2.3" fill="#587f3a"/><ellipse cx="951.1" cy="513.4" rx="1.4" ry="1.1" fill="#86ab5a"/><ellipse cx="973.3" cy="510.1" rx="2.6" ry="2.3" fill="#5a8238"/><ellipse cx="961.6" cy="528.4" rx="1.8" ry="1.9" fill="#527636"/><ellipse cx="965.5" cy="522.7" rx="2.5" ry="1.1" fill="#96b868"/><ellipse cx="962.4" cy="500.0" rx="2.6" ry="2.3" fill="#86ab5a"/><ellipse cx="976.1" cy="505.3" rx="1.8" ry="2.2" fill="#527636"/><ellipse cx="969.5" cy="511.7" rx="1.3" ry="1.4" fill="#527636"/><ellipse cx="982.5" cy="523.5" rx="2.4" ry="2.3" fill="#4f7236"/><ellipse cx="950.3" cy="518.5" rx="1.7" ry="1.9" fill="#9cbf70"/><ellipse cx="952.7" cy="508.1" rx="1.9" ry="2.6" fill="#86ab5a"/><ellipse cx="979.2" cy="500.4" rx="2.3" ry="1.0" fill="#96b868"/><ellipse cx="974.9" cy="530.8" rx="2.2" ry="2.5" fill="#587f3a"/><ellipse cx="953.0" cy="511.1" rx="2.3" ry="1.8" fill="#9cbf70"/><ellipse cx="955.8" cy="515.5" rx="2.4" ry="1.6" fill="#9cbf70"/><ellipse cx="965.6" cy="504.7" rx="2.4" ry="2.4" fill="#9cbf70"/><ellipse cx="980.7" cy="530.0" rx="1.9" ry="2.2" fill="#4f7236"/><ellipse cx="976.1" cy="517.3" rx="2.2" ry="1.9" fill="#3e5c2a"/><ellipse cx="974.2" cy="498.9" rx="2.2" ry="2.3" fill="#86ab5a"/><ellipse cx="978.2" cy="519.1" rx="1.9" ry="2.5" fill="#587f3a"/><ellipse cx="961.8" cy="527.3" rx="3.1" ry="1.4" fill="#7fa452"/><ellipse cx="956.4" cy="527.8" rx="2.9" ry="2.4" fill="#4a6c30"/><ellipse cx="978.5" cy="514.6" rx="2.1" ry="1.6" fill="#4f7236"/><ellipse cx="975.1" cy="524.4" rx="1.3" ry="1.0" fill="#4f7236"/><ellipse cx="986.1" cy="512.2" rx="3.0" ry="2.2" fill="#3e5c2a"/><ellipse cx="958.6" cy="501.2" rx="3.0" ry="1.3" fill="#6f9a48"/><ellipse cx="964.5" cy="518.9" rx="2.2" ry="2.1" fill="#7fa452"/><ellipse cx="965.9" cy="496.8" rx="1.6" ry="1.7" fill="#86ab5a"/><ellipse cx="957.8" cy="530.0" rx="2.7" ry="2.2" fill="#96b868"/><ellipse cx="959.7" cy="514.6" rx="2.3" ry="1.5" fill="#9cbf70"/><ellipse cx="964.5" cy="502.3" rx="2.0" ry="2.2" fill="#6f9a48"/><ellipse cx="979.4" cy="522.1" rx="1.8" ry="1.9" fill="#3e5c2a"/><ellipse cx="968.4" cy="506.2" rx="1.3" ry="1.2" fill="#6f9a48"/><ellipse cx="981.8" cy="524.5" rx="1.5" ry="2.1" fill="#4f7236"/><ellipse cx="960.0" cy="531.0" rx="2.6" ry="2.6" fill="#5a8238"/><ellipse cx="969.6" cy="514.9" rx="1.8" ry="2.3" fill="#3a5626"/><ellipse cx="967.4" cy="513.8" rx="1.2" ry="1.3" fill="#7fa452"/><ellipse cx="976.2" cy="521.4" rx="1.5" ry="1.6" fill="#587f3a"/><ellipse cx="959.1" cy="508.7" rx="1.4" ry="1.4" fill="#9cbf70"/><ellipse cx="971.7" cy="503.4" rx="2.7" ry="2.5" fill="#6f9a48"/><ellipse cx="954.2" cy="523.0" rx="2.8" ry="2.3" fill="#6a9444"/><ellipse cx="979.1" cy="507.7" rx="3.2" ry="2.0" fill="#527636"/><ellipse cx="958.0" cy="527.8" rx="2.3" ry="1.3" fill="#527636"/><ellipse cx="967.2" cy="502.7" rx="2.3" ry="2.2" fill="#6f9a48"/><ellipse cx="985.3" cy="511.1" rx="1.8" ry="1.9" fill="#3e5c2a"/><ellipse cx="960.8" cy="505.7" rx="1.8" ry="2.4" fill="#9cbf70"/><ellipse cx="957.2" cy="530.0" rx="3.0" ry="2.5" fill="#5a8238"/><ellipse cx="953.6" cy="520.1" rx="1.4" ry="2.5" fill="#9cbf70"/><ellipse cx="980.8" cy="499.3" rx="1.5" ry="2.5" fill="#4a6c30"/><ellipse cx="973.2" cy="513.0" rx="2.1" ry="2.6" fill="#3a5626"/><ellipse cx="975.1" cy="512.1" rx="1.4" ry="1.5" fill="#96b868"/><ellipse cx="958.0" cy="519.2" rx="2.7" ry="1.4" fill="#5a8238"/><ellipse cx="973.2" cy="527.2" rx="2.4" ry="2.2" fill="#4f7236"/><ellipse cx="961.0" cy="516.3" rx="1.9" ry="1.7" fill="#5a8238"/><ellipse cx="970.3" cy="500.8" rx="3.0" ry="1.1" fill="#9cbf70"/><ellipse cx="959.4" cy="517.9" rx="3.2" ry="1.5" fill="#6a9444"/><ellipse cx="971.7" cy="525.1" rx="2.4" ry="2.3" fill="#4f7236"/><ellipse cx="981.4" cy="519.5" rx="3.1" ry="1.6" fill="#4f7236"/><ellipse cx="962.9" cy="503.9" rx="1.6" ry="1.6" fill="#9cbf70"/><ellipse cx="970.7" cy="527.1" rx="3.1" ry="2.5" fill="#4f7236"/><ellipse cx="960.9" cy="494.7" rx="1.3" ry="1.9" fill="#6f9a48"/><ellipse cx="980.1" cy="515.4" rx="1.7" ry="1.8" fill="#4f7236"/><ellipse cx="957.3" cy="525.0" rx="2.4" ry="1.6" fill="#4a6c30"/><ellipse cx="971.3" cy="503.8" rx="3.0" ry="1.6" fill="#6f9a48"/><ellipse cx="972.0" cy="531.0" rx="1.4" ry="1.9" fill="#587f3a"/><ellipse cx="966.4" cy="497.3" rx="1.9" ry="1.1" fill="#6f9a48"/><ellipse cx="963.9" cy="495.0" rx="1.6" ry="2.1" fill="#6f9a48"/><ellipse cx="977.4" cy="519.3" rx="1.8" ry="1.7" fill="#587f3a"/><ellipse cx="953.0" cy="516.9" rx="1.3" ry="1.0" fill="#86ab5a"/><ellipse cx="968.1" cy="496.6" rx="2.8" ry="2.2" fill="#86ab5a"/><ellipse cx="960.0" cy="544.0" rx="15.299999999999999" ry="17.0" fill="#4f7232" /><ellipse cx="951.0" cy="545.2" rx="3.0" ry="1.7" fill="#6f9a48"/><ellipse cx="972.9" cy="556.4" rx="3.1" ry="1.0" fill="#587f3a"/><ellipse cx="953.0" cy="538.2" rx="2.5" ry="2.3" fill="#9cbf70"/><ellipse cx="947.7" cy="546.9" rx="1.7" ry="2.4" fill="#9cbf70"/><ellipse cx="946.7" cy="536.2" rx="1.3" ry="2.3" fill="#86ab5a"/><ellipse cx="975.1" cy="544.3" rx="1.9" ry="1.0" fill="#587f3a"/><ellipse cx="951.2" cy="528.4" rx="3.0" ry="1.3" fill="#86ab5a"/><ellipse cx="955.1" cy="554.7" rx="2.2" ry="1.5" fill="#4a6c30"/><ellipse cx="964.0" cy="544.2" rx="1.5" ry="1.6" fill="#6a9444"/><ellipse cx="963.8" cy="534.5" rx="2.9" ry="1.4" fill="#86ab5a"/><ellipse cx="962.2" cy="543.2" rx="2.8" ry="1.3" fill="#3a5626"/><ellipse cx="964.2" cy="548.3" rx="1.8" ry="2.4" fill="#5a8238"/><ellipse cx="956.9" cy="562.0" rx="3.0" ry="2.5" fill="#4f7236"/><ellipse cx="961.7" cy="538.1" rx="2.5" ry="1.3" fill="#6a9444"/><ellipse cx="966.6" cy="552.2" rx="1.9" ry="1.9" fill="#3e5c2a"/><ellipse cx="958.0" cy="560.0" rx="2.7" ry="1.9" fill="#4f7236"/><ellipse cx="947.6" cy="539.6" rx="2.3" ry="2.4" fill="#86ab5a"/><ellipse cx="957.5" cy="562.4" rx="3.1" ry="2.3" fill="#4f7236"/><ellipse cx="970.4" cy="547.1" rx="2.7" ry="2.3" fill="#4f7236"/><ellipse cx="967.7" cy="536.1" rx="1.3" ry="2.2" fill="#4a6c30"/><ellipse cx="972.9" cy="537.7" rx="2.4" ry="2.2" fill="#527636"/><ellipse cx="954.8" cy="559.9" rx="2.5" ry="1.3" fill="#4f7236"/><ellipse cx="966.0" cy="527.7" rx="3.0" ry="1.8" fill="#86ab5a"/><ellipse cx="958.7" cy="560.7" rx="3.1" ry="1.2" fill="#587f3a"/><ellipse cx="958.4" cy="563.5" rx="2.5" ry="1.2" fill="#3e5c2a"/><ellipse cx="960.0" cy="540.5" rx="1.3" ry="1.7" fill="#5a8238"/><ellipse cx="958.5" cy="548.9" rx="1.9" ry="1.1" fill="#96b868"/><ellipse cx="951.3" cy="540.0" rx="1.9" ry="1.5" fill="#86ab5a"/><ellipse cx="946.4" cy="542.9" rx="1.3" ry="2.2" fill="#86ab5a"/><ellipse cx="960.0" cy="563.2" rx="2.3" ry="1.1" fill="#587f3a"/><ellipse cx="959.9" cy="545.8" rx="1.6" ry="1.2" fill="#7fa452"/><ellipse cx="946.8" cy="553.2" rx="2.9" ry="2.1" fill="#6a9444"/><ellipse cx="942.8" cy="543.5" rx="1.2" ry="2.4" fill="#86ab5a"/><ellipse cx="968.3" cy="549.8" rx="2.9" ry="2.0" fill="#3e5c2a"/><ellipse cx="942.9" cy="538.2" rx="3.1" ry="1.5" fill="#6f9a48"/><ellipse cx="971.5" cy="542.1" rx="2.0" ry="2.5" fill="#587f3a"/><ellipse cx="967.6" cy="548.3" rx="1.6" ry="1.6" fill="#3e5c2a"/><ellipse cx="962.5" cy="558.9" rx="1.3" ry="1.8" fill="#587f3a"/><ellipse cx="960.9" cy="562.0" rx="1.7" ry="2.4" fill="#587f3a"/><ellipse cx="961.7" cy="544.4" rx="1.6" ry="1.5" fill="#6a9444"/><ellipse cx="969.6" cy="544.9" rx="2.9" ry="1.4" fill="#4f7236"/><ellipse cx="967.1" cy="544.7" rx="2.3" ry="1.5" fill="#96b868"/><ellipse cx="946.4" cy="549.0" rx="2.7" ry="2.5" fill="#6f9a48"/><ellipse cx="970.5" cy="557.4" rx="1.6" ry="1.3" fill="#3e5c2a"/><ellipse cx="958.1" cy="530.0" rx="2.2" ry="2.4" fill="#86ab5a"/><ellipse cx="953.8" cy="547.8" rx="1.7" ry="1.9" fill="#527636"/><ellipse cx="968.5" cy="545.2" rx="1.5" ry="2.0" fill="#3e5c2a"/><ellipse cx="975.0" cy="535.9" rx="1.4" ry="1.7" fill="#5a8238"/><ellipse cx="961.0" cy="536.3" rx="2.2" ry="2.0" fill="#6f9a48"/><ellipse cx="966.2" cy="543.0" rx="2.1" ry="1.4" fill="#96b868"/><ellipse cx="954.5" cy="541.0" rx="2.4" ry="2.4" fill="#9cbf70"/><ellipse cx="956.4" cy="543.2" rx="1.5" ry="1.7" fill="#7fa452"/><ellipse cx="951.8" cy="542.8" rx="1.8" ry="2.0" fill="#86ab5a"/><ellipse cx="965.3" cy="541.7" rx="3.0" ry="2.0" fill="#7fa452"/><ellipse cx="967.8" cy="546.5" rx="2.2" ry="1.3" fill="#3e5c2a"/><ellipse cx="976.2" cy="536.2" rx="1.7" ry="1.5" fill="#3a5626"/><ellipse cx="952.8" cy="554.0" rx="1.9" ry="1.8" fill="#6a9444"/><ellipse cx="952.3" cy="538.9" rx="1.9" ry="1.3" fill="#86ab5a"/><ellipse cx="951.4" cy="533.8" rx="2.5" ry="2.0" fill="#6f9a48"/><ellipse cx="961.4" cy="555.7" rx="2.8" ry="2.5" fill="#4f7236"/><ellipse cx="953.8" cy="532.6" rx="2.3" ry="2.2" fill="#9cbf70"/><ellipse cx="946.9" cy="544.2" rx="1.6" ry="1.9" fill="#86ab5a"/><ellipse cx="966.0" cy="537.4" rx="1.5" ry="1.6" fill="#7fa452"/><ellipse cx="948.6" cy="554.5" rx="1.9" ry="1.7" fill="#4a6c30"/><ellipse cx="946.9" cy="541.7" rx="2.6" ry="2.4" fill="#6f9a48"/><ellipse cx="952.1" cy="532.8" rx="1.3" ry="1.9" fill="#9cbf70"/><ellipse cx="960.1" cy="529.3" rx="1.3" ry="1.4" fill="#6f9a48"/><ellipse cx="960.9" cy="526.7" rx="1.6" ry="1.0" fill="#86ab5a"/><ellipse cx="971.1" cy="555.2" rx="1.9" ry="2.0" fill="#587f3a"/><ellipse cx="947.1" cy="546.0" rx="2.4" ry="2.0" fill="#86ab5a"/><ellipse cx="959.4" cy="528.4" rx="2.9" ry="2.3" fill="#9cbf70"/><ellipse cx="961.0" cy="558.0" rx="1.7" ry="1.6" fill="#587f3a"/><ellipse cx="944.5" cy="544.8" rx="1.8" ry="1.5" fill="#9cbf70"/><ellipse cx="970.4" cy="551.8" rx="3.2" ry="2.0" fill="#587f3a"/><ellipse cx="977.5" cy="547.1" rx="1.5" ry="2.5" fill="#4f7236"/><ellipse cx="952.6" cy="550.5" rx="1.8" ry="1.7" fill="#7fa452"/><ellipse cx="949.8" cy="544.4" rx="1.7" ry="2.3" fill="#9cbf70"/><ellipse cx="959.0" cy="536.3" rx="2.6" ry="1.9" fill="#6f9a48"/><ellipse cx="947.0" cy="532.7" rx="1.6" ry="2.6" fill="#6f9a48"/><ellipse cx="955.1" cy="557.9" rx="1.5" ry="2.3" fill="#3e5c2a"/><ellipse cx="960.3" cy="534.5" rx="2.7" ry="1.4" fill="#6f9a48"/><ellipse cx="960.6" cy="535.4" rx="1.6" ry="1.2" fill="#86ab5a"/><ellipse cx="951.6" cy="539.2" rx="2.3" ry="1.1" fill="#86ab5a"/><ellipse cx="959.2" cy="560.2" rx="1.9" ry="1.6" fill="#587f3a"/><ellipse cx="963.1" cy="551.2" rx="1.4" ry="2.4" fill="#4f7236"/><ellipse cx="949.0" cy="538.3" rx="1.2" ry="1.3" fill="#6f9a48"/><ellipse cx="975.4" cy="551.3" rx="2.4" ry="1.9" fill="#4f7236"/><ellipse cx="977.5" cy="540.7" rx="3.1" ry="2.0" fill="#4f7236"/><ellipse cx="950.1" cy="557.4" rx="2.2" ry="1.1" fill="#3a5626"/><ellipse cx="944.0" cy="550.6" rx="3.1" ry="2.0" fill="#9cbf70"/><ellipse cx="963.9" cy="542.8" rx="1.3" ry="1.2" fill="#6a9444"/><ellipse cx="967.4" cy="547.3" rx="3.1" ry="1.6" fill="#587f3a"/><ellipse cx="948.9" cy="539.7" rx="1.6" ry="1.9" fill="#9cbf70"/><ellipse cx="967.4" cy="536.3" rx="1.7" ry="2.5" fill="#3a5626"/><ellipse cx="965.9" cy="550.1" rx="2.1" ry="2.3" fill="#4f7236"/><ellipse cx="944.4" cy="542.2" rx="2.9" ry="1.6" fill="#6f9a48"/><ellipse cx="952.0" cy="537.3" rx="2.8" ry="1.0" fill="#86ab5a"/><ellipse cx="959.2" cy="544.5" rx="1.4" ry="2.4" fill="#7fa452"/><ellipse cx="948.0" cy="566.0" rx="10.2" ry="8.5" fill="#4f7232" /><ellipse cx="953.0" cy="560.0" rx="2.6" ry="2.4" fill="#5a8238"/><ellipse cx="947.8" cy="556.8" rx="1.4" ry="1.7" fill="#86ab5a"/><ellipse cx="943.3" cy="558.3" rx="2.4" ry="1.4" fill="#9cbf70"/><ellipse cx="949.0" cy="562.8" rx="2.0" ry="2.0" fill="#7fa452"/><ellipse cx="941.2" cy="569.3" rx="2.6" ry="1.5" fill="#96b868"/><ellipse cx="948.9" cy="556.7" rx="1.4" ry="1.8" fill="#6f9a48"/><ellipse cx="951.6" cy="575.5" rx="1.8" ry="2.1" fill="#4f7236"/><ellipse cx="940.5" cy="563.6" rx="1.9" ry="2.1" fill="#9cbf70"/><ellipse cx="958.4" cy="561.5" rx="3.0" ry="2.3" fill="#6a9444"/><ellipse cx="943.6" cy="561.5" rx="2.1" ry="2.4" fill="#86ab5a"/><ellipse cx="957.1" cy="567.6" rx="2.5" ry="2.6" fill="#587f3a"/><ellipse cx="947.1" cy="569.5" rx="2.0" ry="2.3" fill="#3a5626"/><ellipse cx="942.2" cy="567.1" rx="2.8" ry="1.3" fill="#9cbf70"/><ellipse cx="955.4" cy="558.7" rx="2.1" ry="2.0" fill="#5a8238"/><ellipse cx="948.3" cy="563.2" rx="3.1" ry="2.2" fill="#7fa452"/><ellipse cx="948.0" cy="574.4" rx="1.3" ry="1.7" fill="#3e5c2a"/><ellipse cx="953.2" cy="557.5" rx="1.3" ry="1.3" fill="#5a8238"/><ellipse cx="950.0" cy="563.1" rx="1.2" ry="2.5" fill="#6a9444"/><ellipse cx="950.4" cy="565.1" rx="2.0" ry="1.4" fill="#4a6c30"/><ellipse cx="951.0" cy="565.3" rx="2.5" ry="1.5" fill="#6a9444"/><ellipse cx="953.4" cy="564.2" rx="1.4" ry="1.3" fill="#6a9444"/><ellipse cx="951.6" cy="573.1" rx="2.2" ry="1.4" fill="#3e5c2a"/><ellipse cx="941.0" cy="564.9" rx="2.9" ry="1.9" fill="#86ab5a"/><ellipse cx="940.7" cy="564.7" rx="1.6" ry="1.6" fill="#6f9a48"/><ellipse cx="954.7" cy="571.1" rx="1.9" ry="2.2" fill="#587f3a"/><ellipse cx="947.6" cy="570.1" rx="1.9" ry="1.9" fill="#6a9444"/><ellipse cx="952.2" cy="569.2" rx="2.3" ry="1.9" fill="#3e5c2a"/><ellipse cx="944.5" cy="559.8" rx="1.9" ry="2.5" fill="#86ab5a"/><ellipse cx="941.7" cy="567.5" rx="1.6" ry="1.5" fill="#9cbf70"/><ellipse cx="955.9" cy="560.8" rx="2.1" ry="2.0" fill="#5a8238"/><ellipse cx="945.3" cy="564.2" rx="2.6" ry="1.7" fill="#9cbf70"/><ellipse cx="949.7" cy="569.1" rx="1.4" ry="1.0" fill="#6a9444"/><ellipse cx="948.1" cy="560.8" rx="3.0" ry="2.3" fill="#6f9a48"/><ellipse cx="955.3" cy="563.5" rx="1.8" ry="1.7" fill="#4a6c30"/><ellipse cx="949.4" cy="568.7" rx="3.1" ry="2.1" fill="#527636"/><ellipse cx="936.5" cy="565.9" rx="1.9" ry="2.6" fill="#86ab5a"/><ellipse cx="954.4" cy="563.3" rx="2.1" ry="2.4" fill="#5a8238"/><ellipse cx="947.5" cy="567.5" rx="2.7" ry="1.8" fill="#96b868"/><ellipse cx="908.0" cy="500.0" rx="15.299999999999999" ry="17.0" fill="#4f7232" /><ellipse cx="902.5" cy="508.2" rx="2.8" ry="1.4" fill="#7fa452"/><ellipse cx="904.6" cy="504.3" rx="1.5" ry="1.6" fill="#7fa452"/><ellipse cx="911.0" cy="512.5" rx="1.7" ry="1.9" fill="#3e5c2a"/><ellipse cx="904.3" cy="492.7" rx="2.9" ry="1.3" fill="#9cbf70"/><ellipse cx="908.9" cy="505.6" rx="1.7" ry="1.2" fill="#6a9444"/><ellipse cx="922.5" cy="509.8" rx="1.5" ry="1.6" fill="#587f3a"/><ellipse cx="904.6" cy="503.9" rx="1.3" ry="2.6" fill="#5a8238"/><ellipse cx="899.7" cy="508.0" rx="2.9" ry="1.9" fill="#6a9444"/><ellipse cx="893.4" cy="502.9" rx="1.9" ry="2.2" fill="#9cbf70"/><ellipse cx="918.9" cy="507.8" rx="2.9" ry="2.2" fill="#587f3a"/><ellipse cx="913.4" cy="481.2" rx="1.6" ry="1.9" fill="#9cbf70"/><ellipse cx="919.1" cy="491.8" rx="2.5" ry="1.0" fill="#3a5626"/><ellipse cx="906.6" cy="499.0" rx="2.3" ry="1.9" fill="#7fa452"/><ellipse cx="906.1" cy="502.5" rx="1.4" ry="2.0" fill="#5a8238"/><ellipse cx="916.7" cy="517.1" rx="2.9" ry="1.4" fill="#587f3a"/><ellipse cx="911.4" cy="500.4" rx="1.5" ry="1.4" fill="#7fa452"/><ellipse cx="899.6" cy="503.5" rx="2.2" ry="1.7" fill="#3a5626"/><ellipse cx="899.2" cy="487.6" rx="1.8" ry="1.7" fill="#86ab5a"/><ellipse cx="899.2" cy="493.9" rx="2.8" ry="2.6" fill="#9cbf70"/><ellipse cx="910.1" cy="499.1" rx="1.3" ry="1.9" fill="#4a6c30"/><ellipse cx="921.3" cy="489.0" rx="1.5" ry="2.5" fill="#96b868"/><ellipse cx="899.9" cy="506.7" rx="2.6" ry="1.4" fill="#6a9444"/><ellipse cx="913.4" cy="495.0" rx="2.5" ry="2.4" fill="#527636"/><ellipse cx="898.6" cy="512.8" rx="2.2" ry="2.6" fill="#96b868"/><ellipse cx="903.2" cy="484.1" rx="2.6" ry="2.5" fill="#9cbf70"/><ellipse cx="896.9" cy="487.4" rx="1.4" ry="2.5" fill="#9cbf70"/><ellipse cx="907.9" cy="518.1" rx="1.9" ry="1.1" fill="#587f3a"/><ellipse cx="901.0" cy="500.2" rx="2.7" ry="2.5" fill="#86ab5a"/><ellipse cx="921.7" cy="506.1" rx="2.8" ry="2.2" fill="#3e5c2a"/><ellipse cx="905.1" cy="500.1" rx="3.2" ry="2.1" fill="#4a6c30"/><ellipse cx="903.4" cy="507.6" rx="2.0" ry="1.4" fill="#7fa452"/><ellipse cx="904.0" cy="518.6" rx="2.7" ry="2.1" fill="#4f7236"/><ellipse cx="902.0" cy="509.5" rx="2.1" ry="2.5" fill="#7fa452"/><ellipse cx="893.2" cy="490.7" rx="2.0" ry="2.5" fill="#6f9a48"/><ellipse cx="901.9" cy="516.6" rx="1.4" ry="1.7" fill="#587f3a"/><ellipse cx="912.9" cy="497.5" rx="1.6" ry="2.4" fill="#4a6c30"/><ellipse cx="892.8" cy="504.4" rx="3.0" ry="1.9" fill="#6f9a48"/><ellipse cx="910.2" cy="515.8" rx="1.7" ry="2.6" fill="#587f3a"/><ellipse cx="917.0" cy="502.0" rx="3.0" ry="1.3" fill="#4f7236"/><ellipse cx="912.3" cy="498.7" rx="2.5" ry="1.4" fill="#5a8238"/><ellipse cx="925.4" cy="495.5" rx="2.7" ry="1.9" fill="#587f3a"/><ellipse cx="896.5" cy="504.2" rx="2.9" ry="1.3" fill="#6f9a48"/><ellipse cx="905.3" cy="498.5" rx="2.6" ry="2.0" fill="#5a8238"/><ellipse cx="913.1" cy="502.3" rx="2.2" ry="1.6" fill="#3a5626"/><ellipse cx="908.1" cy="491.9" rx="2.4" ry="1.9" fill="#6f9a48"/><ellipse cx="903.0" cy="519.0" rx="3.1" ry="2.4" fill="#3e5c2a"/><ellipse cx="914.4" cy="515.2" rx="2.4" ry="2.4" fill="#4f7236"/><ellipse cx="909.7" cy="484.6" rx="2.8" ry="2.0" fill="#6f9a48"/><ellipse cx="924.0" cy="504.5" rx="2.9" ry="2.6" fill="#587f3a"/><ellipse cx="919.7" cy="511.8" rx="3.0" ry="2.0" fill="#3e5c2a"/><ellipse cx="900.8" cy="500.6" rx="2.8" ry="1.0" fill="#86ab5a"/><ellipse cx="900.1" cy="503.6" rx="2.0" ry="2.6" fill="#6a9444"/><ellipse cx="920.2" cy="509.2" rx="2.9" ry="1.4" fill="#3e5c2a"/><ellipse cx="916.1" cy="505.0" rx="3.2" ry="1.9" fill="#3e5c2a"/><ellipse cx="895.5" cy="504.6" rx="2.3" ry="1.5" fill="#9cbf70"/><ellipse cx="897.1" cy="500.3" rx="2.3" ry="2.0" fill="#6f9a48"/><ellipse cx="899.8" cy="505.7" rx="2.6" ry="1.4" fill="#6a9444"/><ellipse cx="915.3" cy="513.4" rx="3.0" ry="2.1" fill="#587f3a"/><ellipse cx="913.9" cy="490.0" rx="1.7" ry="1.9" fill="#7fa452"/><ellipse cx="899.4" cy="497.9" rx="3.1" ry="1.0" fill="#6f9a48"/><ellipse cx="907.6" cy="493.5" rx="2.6" ry="1.8" fill="#86ab5a"/><ellipse cx="915.5" cy="484.7" rx="1.7" ry="2.2" fill="#86ab5a"/><ellipse cx="904.7" cy="487.1" rx="1.6" ry="1.5" fill="#86ab5a"/><ellipse cx="893.2" cy="498.3" rx="2.5" ry="2.0" fill="#9cbf70"/><ellipse cx="896.6" cy="513.1" rx="2.8" ry="1.6" fill="#4a6c30"/><ellipse cx="919.8" cy="493.0" rx="1.9" ry="2.3" fill="#4a6c30"/><ellipse cx="897.0" cy="512.2" rx="2.1" ry="2.2" fill="#6a9444"/><ellipse cx="903.8" cy="519.4" rx="1.8" ry="1.6" fill="#3e5c2a"/><ellipse cx="913.1" cy="516.3" rx="1.9" ry="2.0" fill="#3e5c2a"/><ellipse cx="895.2" cy="507.3" rx="2.2" ry="2.4" fill="#9cbf70"/><ellipse cx="920.6" cy="503.7" rx="1.4" ry="1.3" fill="#4f7236"/><ellipse cx="910.1" cy="495.0" rx="2.2" ry="2.4" fill="#6a9444"/><ellipse cx="910.1" cy="497.0" rx="1.4" ry="1.8" fill="#5a8238"/><ellipse cx="903.0" cy="489.0" rx="2.1" ry="1.6" fill="#9cbf70"/><ellipse cx="911.2" cy="497.4" rx="2.6" ry="1.3" fill="#527636"/><ellipse cx="895.3" cy="498.1" rx="2.4" ry="2.4" fill="#86ab5a"/><ellipse cx="906.9" cy="494.1" rx="2.2" ry="1.9" fill="#6f9a48"/><ellipse cx="895.1" cy="501.4" rx="2.0" ry="2.4" fill="#9cbf70"/><ellipse cx="910.9" cy="510.5" rx="1.2" ry="1.1" fill="#4f7236"/><ellipse cx="890.5" cy="504.3" rx="1.7" ry="1.1" fill="#9cbf70"/><ellipse cx="904.4" cy="519.0" rx="2.4" ry="1.2" fill="#3e5c2a"/><ellipse cx="917.3" cy="493.4" rx="1.7" ry="2.2" fill="#3a5626"/><ellipse cx="908.1" cy="512.9" rx="1.9" ry="1.8" fill="#3e5c2a"/><ellipse cx="906.5" cy="498.4" rx="3.2" ry="2.0" fill="#527636"/><ellipse cx="917.0" cy="515.1" rx="3.2" ry="1.9" fill="#587f3a"/><ellipse cx="923.9" cy="506.7" rx="3.2" ry="2.6" fill="#587f3a"/><ellipse cx="905.7" cy="495.5" rx="2.0" ry="1.7" fill="#86ab5a"/><ellipse cx="912.7" cy="508.7" rx="1.5" ry="2.1" fill="#3e5c2a"/><ellipse cx="909.8" cy="505.9" rx="1.7" ry="1.0" fill="#7fa452"/><ellipse cx="899.1" cy="490.9" rx="3.1" ry="1.5" fill="#86ab5a"/><ellipse cx="893.3" cy="493.4" rx="2.4" ry="1.5" fill="#86ab5a"/><ellipse cx="910.6" cy="499.0" rx="2.9" ry="1.6" fill="#4a6c30"/><ellipse cx="898.8" cy="506.9" rx="2.5" ry="2.0" fill="#4a6c30"/><ellipse cx="902.9" cy="481.7" rx="1.3" ry="1.5" fill="#9cbf70"/><ellipse cx="917.5" cy="503.3" rx="1.6" ry="2.4" fill="#3e5c2a"/><ellipse cx="893.0" cy="502.2" rx="2.2" ry="1.1" fill="#6f9a48"/><ellipse cx="919.3" cy="501.5" rx="1.9" ry="2.5" fill="#4f7236"/><ellipse cx="909.2" cy="502.6" rx="2.2" ry="2.1" fill="#6a9444"/><ellipse cx="898.0" cy="530.0" rx="17.0" ry="20.4" fill="#4f7232" /><ellipse cx="888.0" cy="516.9" rx="1.2" ry="1.3" fill="#9cbf70"/><ellipse cx="895.8" cy="542.9" rx="2.1" ry="2.2" fill="#587f3a"/><ellipse cx="908.4" cy="525.2" rx="2.6" ry="2.1" fill="#7fa452"/><ellipse cx="895.0" cy="531.1" rx="2.6" ry="2.5" fill="#7fa452"/><ellipse cx="907.5" cy="535.6" rx="2.0" ry="1.2" fill="#4f7236"/><ellipse cx="896.3" cy="549.4" rx="1.3" ry="2.2" fill="#3e5c2a"/><ellipse cx="905.9" cy="529.2" rx="3.1" ry="1.2" fill="#5a8238"/><ellipse cx="898.5" cy="534.4" rx="1.6" ry="2.3" fill="#5a8238"/><ellipse cx="910.7" cy="547.8" rx="1.6" ry="1.6" fill="#3e5c2a"/><ellipse cx="899.7" cy="549.1" rx="2.6" ry="2.0" fill="#587f3a"/><ellipse cx="898.1" cy="507.2" rx="2.9" ry="1.7" fill="#6f9a48"/><ellipse cx="899.8" cy="512.9" rx="1.4" ry="2.2" fill="#9cbf70"/><ellipse cx="882.7" cy="528.0" rx="1.8" ry="1.3" fill="#86ab5a"/><ellipse cx="885.4" cy="529.7" rx="2.1" ry="2.2" fill="#6f9a48"/><ellipse cx="914.1" cy="541.4" rx="2.0" ry="1.4" fill="#4f7236"/><ellipse cx="901.9" cy="530.3" rx="2.6" ry="2.6" fill="#3a5626"/><ellipse cx="902.7" cy="521.1" rx="3.0" ry="1.4" fill="#527636"/><ellipse cx="894.3" cy="548.9" rx="2.9" ry="2.4" fill="#3e5c2a"/><ellipse cx="913.3" cy="536.5" rx="1.5" ry="1.3" fill="#3e5c2a"/><ellipse cx="909.2" cy="520.2" rx="2.9" ry="1.2" fill="#7fa452"/><ellipse cx="890.5" cy="522.5" rx="1.6" ry="1.7" fill="#86ab5a"/><ellipse cx="901.0" cy="513.9" rx="1.8" ry="1.0" fill="#86ab5a"/><ellipse cx="911.4" cy="526.1" rx="2.8" ry="1.9" fill="#7fa452"/><ellipse cx="893.7" cy="538.5" rx="3.0" ry="1.3" fill="#96b868"/><ellipse cx="890.0" cy="538.2" rx="1.3" ry="2.4" fill="#7fa452"/><ellipse cx="892.2" cy="524.0" rx="1.9" ry="1.4" fill="#9cbf70"/><ellipse cx="893.8" cy="520.7" rx="3.1" ry="1.6" fill="#86ab5a"/><ellipse cx="899.2" cy="509.0" rx="1.7" ry="2.4" fill="#9cbf70"/><ellipse cx="895.5" cy="538.2" rx="1.5" ry="1.3" fill="#7fa452"/><ellipse cx="882.7" cy="532.1" rx="2.2" ry="2.4" fill="#6f9a48"/><ellipse cx="916.7" cy="528.4" rx="2.4" ry="2.3" fill="#587f3a"/><ellipse cx="898.7" cy="528.0" rx="2.8" ry="2.1" fill="#6a9444"/><ellipse cx="894.5" cy="517.6" rx="1.9" ry="1.5" fill="#86ab5a"/><ellipse cx="888.1" cy="537.1" rx="1.7" ry="2.0" fill="#527636"/><ellipse cx="895.8" cy="553.5" rx="2.0" ry="1.6" fill="#587f3a"/><ellipse cx="884.0" cy="514.9" rx="2.9" ry="2.4" fill="#9cbf70"/><ellipse cx="914.0" cy="532.1" rx="3.1" ry="1.0" fill="#3e5c2a"/><ellipse cx="893.7" cy="550.4" rx="1.4" ry="2.4" fill="#587f3a"/><ellipse cx="890.7" cy="533.1" rx="1.6" ry="1.3" fill="#3a5626"/><ellipse cx="884.3" cy="544.7" rx="3.0" ry="1.5" fill="#3a5626"/><ellipse cx="900.8" cy="549.9" rx="1.9" ry="1.5" fill="#3e5c2a"/><ellipse cx="896.9" cy="541.7" rx="2.1" ry="1.8" fill="#4f7236"/><ellipse cx="917.5" cy="533.9" rx="1.5" ry="2.0" fill="#4f7236"/><ellipse cx="901.5" cy="510.5" rx="2.8" ry="2.5" fill="#9cbf70"/><ellipse cx="891.4" cy="511.4" rx="2.8" ry="1.6" fill="#6f9a48"/><ellipse cx="889.6" cy="520.8" rx="2.9" ry="2.4" fill="#9cbf70"/><ellipse cx="899.5" cy="540.0" rx="2.9" ry="2.6" fill="#587f3a"/><ellipse cx="884.3" cy="523.4" rx="2.6" ry="1.8" fill="#6f9a48"/><ellipse cx="882.1" cy="529.4" rx="1.4" ry="2.6" fill="#86ab5a"/><ellipse cx="903.8" cy="516.5" rx="3.0" ry="2.1" fill="#9cbf70"/><ellipse cx="909.4" cy="532.5" rx="1.5" ry="1.2" fill="#587f3a"/><ellipse cx="898.9" cy="526.1" rx="2.9" ry="1.3" fill="#6a9444"/><ellipse cx="889.9" cy="532.6" rx="2.8" ry="2.1" fill="#3a5626"/><ellipse cx="893.5" cy="522.2" rx="2.7" ry="1.7" fill="#9cbf70"/><ellipse cx="882.3" cy="524.0" rx="3.1" ry="1.5" fill="#86ab5a"/><ellipse cx="902.7" cy="551.9" rx="2.7" ry="1.8" fill="#4f7236"/><ellipse cx="899.9" cy="543.3" rx="2.1" ry="1.6" fill="#4f7236"/><ellipse cx="905.6" cy="530.5" rx="2.9" ry="1.5" fill="#96b868"/><ellipse cx="894.8" cy="552.9" rx="3.2" ry="1.9" fill="#587f3a"/><ellipse cx="881.5" cy="540.6" rx="1.4" ry="1.3" fill="#96b868"/><ellipse cx="884.8" cy="538.4" rx="2.8" ry="1.4" fill="#96b868"/><ellipse cx="911.4" cy="517.6" rx="2.8" ry="2.1" fill="#5a8238"/><ellipse cx="904.6" cy="514.1" rx="2.7" ry="2.3" fill="#86ab5a"/><ellipse cx="914.8" cy="526.0" rx="1.7" ry="1.5" fill="#4f7236"/><ellipse cx="889.6" cy="512.0" rx="1.4" ry="1.7" fill="#9cbf70"/><ellipse cx="893.8" cy="547.2" rx="1.4" ry="1.1" fill="#4f7236"/><ellipse cx="910.9" cy="524.3" rx="1.3" ry="1.5" fill="#6a9444"/><ellipse cx="895.1" cy="509.6" rx="2.4" ry="2.2" fill="#9cbf70"/><ellipse cx="900.7" cy="524.4" rx="2.6" ry="1.3" fill="#527636"/><ellipse cx="886.7" cy="525.3" rx="2.8" ry="1.4" fill="#9cbf70"/><ellipse cx="880.3" cy="540.0" rx="1.8" ry="1.1" fill="#9cbf70"/><ellipse cx="911.5" cy="526.8" rx="1.6" ry="2.1" fill="#4f7236"/><ellipse cx="904.2" cy="524.8" rx="3.1" ry="1.9" fill="#5a8238"/><ellipse cx="904.9" cy="518.6" rx="1.3" ry="1.2" fill="#6a9444"/><ellipse cx="899.8" cy="549.4" rx="1.7" ry="2.1" fill="#3e5c2a"/><ellipse cx="882.1" cy="519.6" rx="2.4" ry="1.9" fill="#6f9a48"/><ellipse cx="890.2" cy="514.4" rx="2.9" ry="2.2" fill="#86ab5a"/><ellipse cx="892.5" cy="517.2" rx="1.5" ry="1.4" fill="#6f9a48"/><ellipse cx="892.2" cy="517.2" rx="1.2" ry="1.3" fill="#6f9a48"/><ellipse cx="898.3" cy="526.1" rx="1.3" ry="2.6" fill="#7fa452"/><ellipse cx="916.8" cy="536.1" rx="2.4" ry="2.3" fill="#4f7236"/><ellipse cx="905.5" cy="540.1" rx="2.3" ry="1.7" fill="#4f7236"/><ellipse cx="883.5" cy="541.8" rx="2.9" ry="2.5" fill="#527636"/><ellipse cx="906.6" cy="545.8" rx="1.2" ry="1.1" fill="#3e5c2a"/><ellipse cx="880.0" cy="532.3" rx="2.1" ry="1.3" fill="#6f9a48"/><ellipse cx="888.5" cy="512.4" rx="2.8" ry="2.2" fill="#9cbf70"/><ellipse cx="893.1" cy="510.2" rx="3.0" ry="1.2" fill="#9cbf70"/><ellipse cx="913.2" cy="525.9" rx="2.4" ry="2.1" fill="#4f7236"/><ellipse cx="896.6" cy="515.7" rx="1.6" ry="1.1" fill="#86ab5a"/><ellipse cx="906.7" cy="508.5" rx="1.5" ry="1.1" fill="#86ab5a"/><ellipse cx="913.6" cy="522.5" rx="3.2" ry="2.0" fill="#7fa452"/><ellipse cx="907.0" cy="529.8" rx="1.4" ry="2.4" fill="#5a8238"/><ellipse cx="884.8" cy="522.8" rx="2.8" ry="2.4" fill="#9cbf70"/><ellipse cx="892.1" cy="522.4" rx="1.6" ry="1.3" fill="#6f9a48"/><ellipse cx="904.6" cy="509.7" rx="1.6" ry="2.6" fill="#86ab5a"/><ellipse cx="899.8" cy="548.7" rx="2.6" ry="1.9" fill="#3e5c2a"/><ellipse cx="916.2" cy="530.5" rx="2.6" ry="1.2" fill="#4f7236"/><ellipse cx="910.6" cy="514.5" rx="2.3" ry="1.7" fill="#3a5626"/><ellipse cx="906.3" cy="525.9" rx="3.0" ry="2.5" fill="#5a8238"/><ellipse cx="893.2" cy="515.4" rx="2.1" ry="1.3" fill="#86ab5a"/><ellipse cx="901.8" cy="540.3" rx="2.7" ry="1.6" fill="#4f7236"/><ellipse cx="915.2" cy="519.4" rx="2.8" ry="1.7" fill="#527636"/><ellipse cx="896.2" cy="541.7" rx="3.2" ry="2.3" fill="#7fa452"/><ellipse cx="886.8" cy="544.4" rx="2.8" ry="2.4" fill="#3a5626"/><ellipse cx="912.1" cy="513.9" rx="2.8" ry="2.2" fill="#3a5626"/><ellipse cx="900.4" cy="533.4" rx="2.7" ry="1.2" fill="#4a6c30"/><ellipse cx="904.6" cy="509.2" rx="2.5" ry="1.3" fill="#6f9a48"/><ellipse cx="889.1" cy="536.5" rx="2.5" ry="1.4" fill="#5a8238"/><ellipse cx="895.0" cy="552.2" rx="2.3" ry="1.9" fill="#587f3a"/><ellipse cx="898.7" cy="532.4" rx="3.0" ry="1.8" fill="#7fa452"/><ellipse cx="909.8" cy="526.4" rx="3.0" ry="2.1" fill="#3a5626"/><ellipse cx="903.6" cy="510.7" rx="2.3" ry="1.5" fill="#9cbf70"/><ellipse cx="903.1" cy="519.4" rx="2.0" ry="2.1" fill="#527636"/><ellipse cx="900.0" cy="530.8" rx="1.2" ry="1.9" fill="#4a6c30"/><ellipse cx="895.5" cy="520.3" rx="1.9" ry="1.5" fill="#6f9a48"/><ellipse cx="885.3" cy="544.1" rx="2.3" ry="1.4" fill="#7fa452"/><ellipse cx="903.8" cy="530.3" rx="1.9" ry="2.1" fill="#6a9444"/><ellipse cx="881.6" cy="538.6" rx="2.9" ry="1.1" fill="#86ab5a"/><ellipse cx="900.4" cy="516.8" rx="1.5" ry="2.0" fill="#86ab5a"/><ellipse cx="890.9" cy="531.2" rx="1.8" ry="1.9" fill="#4a6c30"/><ellipse cx="894.9" cy="535.6" rx="1.6" ry="2.0" fill="#527636"/><ellipse cx="898.7" cy="530.1" rx="2.1" ry="1.7" fill="#3a5626"/><ellipse cx="892.9" cy="547.7" rx="2.6" ry="2.0" fill="#4f7236"/><ellipse cx="910.0" cy="545.3" rx="1.7" ry="1.3" fill="#587f3a"/><ellipse cx="897.1" cy="533.4" rx="1.3" ry="2.5" fill="#6a9444"/><ellipse cx="906.4" cy="509.4" rx="3.2" ry="2.3" fill="#6f9a48"/><ellipse cx="906.6" cy="528.4" rx="3.1" ry="1.1" fill="#527636"/><ellipse cx="893.6" cy="535.4" rx="2.4" ry="2.0" fill="#3a5626"/><ellipse cx="882.0" cy="562.0" rx="15.299999999999999" ry="18.7" fill="#4f7232" /><ellipse cx="873.0" cy="563.8" rx="3.1" ry="1.4" fill="#9cbf70"/><ellipse cx="867.1" cy="561.1" rx="2.4" ry="1.2" fill="#86ab5a"/><ellipse cx="882.0" cy="561.4" rx="1.7" ry="1.3" fill="#5a8238"/><ellipse cx="872.4" cy="571.6" rx="1.6" ry="1.5" fill="#5a8238"/><ellipse cx="886.2" cy="558.3" rx="3.1" ry="2.3" fill="#3a5626"/><ellipse cx="886.5" cy="576.2" rx="2.2" ry="1.4" fill="#3e5c2a"/><ellipse cx="871.6" cy="548.7" rx="1.6" ry="1.1" fill="#9cbf70"/><ellipse cx="876.6" cy="578.7" rx="1.7" ry="2.3" fill="#587f3a"/><ellipse cx="888.9" cy="564.8" rx="2.6" ry="2.5" fill="#587f3a"/><ellipse cx="876.8" cy="570.3" rx="3.0" ry="2.0" fill="#3a5626"/><ellipse cx="880.8" cy="564.4" rx="2.0" ry="1.1" fill="#7fa452"/><ellipse cx="879.1" cy="549.2" rx="2.9" ry="1.5" fill="#6f9a48"/><ellipse cx="884.0" cy="555.6" rx="1.4" ry="2.4" fill="#6a9444"/><ellipse cx="891.5" cy="561.3" rx="2.7" ry="2.3" fill="#7fa452"/><ellipse cx="879.9" cy="566.0" rx="2.1" ry="1.0" fill="#4a6c30"/><ellipse cx="874.8" cy="543.2" rx="2.0" ry="1.9" fill="#86ab5a"/><ellipse cx="895.5" cy="559.2" rx="1.2" ry="2.0" fill="#4f7236"/><ellipse cx="895.7" cy="560.0" rx="2.3" ry="2.6" fill="#4f7236"/><ellipse cx="875.0" cy="567.4" rx="2.7" ry="1.6" fill="#7fa452"/><ellipse cx="879.2" cy="564.2" rx="2.4" ry="2.4" fill="#3a5626"/><ellipse cx="871.7" cy="546.1" rx="3.1" ry="2.1" fill="#9cbf70"/><ellipse cx="893.6" cy="563.4" rx="1.4" ry="2.4" fill="#587f3a"/><ellipse cx="883.0" cy="551.4" rx="3.2" ry="1.6" fill="#6f9a48"/><ellipse cx="867.4" cy="570.0" rx="1.6" ry="1.5" fill="#9cbf70"/><ellipse cx="877.5" cy="563.4" rx="1.4" ry="1.1" fill="#527636"/><ellipse cx="880.4" cy="550.3" rx="2.3" ry="1.0" fill="#86ab5a"/><ellipse cx="883.3" cy="576.2" rx="2.0" ry="2.1" fill="#4f7236"/><ellipse cx="896.4" cy="573.3" rx="3.0" ry="1.9" fill="#4f7236"/><ellipse cx="868.5" cy="559.1" rx="2.9" ry="2.4" fill="#6f9a48"/><ellipse cx="892.2" cy="560.2" rx="2.5" ry="2.5" fill="#96b868"/><ellipse cx="876.4" cy="546.3" rx="2.2" ry="2.1" fill="#86ab5a"/><ellipse cx="887.9" cy="559.1" rx="1.7" ry="1.3" fill="#7fa452"/><ellipse cx="890.5" cy="553.3" rx="2.3" ry="1.3" fill="#3a5626"/><ellipse cx="883.0" cy="561.4" rx="2.4" ry="2.5" fill="#7fa452"/><ellipse cx="872.9" cy="572.9" rx="1.3" ry="1.4" fill="#527636"/><ellipse cx="867.4" cy="571.3" rx="1.8" ry="1.6" fill="#5a8238"/><ellipse cx="893.6" cy="549.0" rx="1.5" ry="1.8" fill="#3a5626"/><ellipse cx="868.1" cy="562.1" rx="1.8" ry="1.2" fill="#86ab5a"/><ellipse cx="879.3" cy="562.4" rx="1.9" ry="1.1" fill="#527636"/><ellipse cx="887.7" cy="551.6" rx="2.8" ry="1.8" fill="#5a8238"/><ellipse cx="877.1" cy="573.4" rx="2.3" ry="2.3" fill="#527636"/><ellipse cx="893.8" cy="563.5" rx="1.6" ry="1.5" fill="#3e5c2a"/><ellipse cx="884.2" cy="549.5" rx="1.8" ry="2.3" fill="#9cbf70"/><ellipse cx="878.0" cy="559.0" rx="1.9" ry="2.3" fill="#6f9a48"/><ellipse cx="895.3" cy="567.5" rx="2.6" ry="1.4" fill="#3e5c2a"/><ellipse cx="873.9" cy="547.6" rx="1.2" ry="1.8" fill="#6f9a48"/><ellipse cx="875.3" cy="576.0" rx="1.9" ry="2.2" fill="#7fa452"/><ellipse cx="879.0" cy="545.6" rx="1.7" ry="1.3" fill="#9cbf70"/><ellipse cx="867.4" cy="555.8" rx="2.3" ry="1.8" fill="#9cbf70"/><ellipse cx="884.5" cy="572.9" rx="2.8" ry="1.9" fill="#4f7236"/><ellipse cx="885.9" cy="560.1" rx="2.2" ry="2.3" fill="#527636"/><ellipse cx="881.1" cy="573.4" rx="2.3" ry="1.6" fill="#587f3a"/><ellipse cx="892.0" cy="561.4" rx="1.9" ry="2.3" fill="#3e5c2a"/><ellipse cx="877.8" cy="560.4" rx="1.9" ry="1.9" fill="#86ab5a"/><ellipse cx="873.3" cy="557.5" rx="3.1" ry="2.5" fill="#86ab5a"/><ellipse cx="866.0" cy="559.4" rx="1.8" ry="1.9" fill="#9cbf70"/><ellipse cx="883.3" cy="582.1" rx="2.7" ry="2.6" fill="#3e5c2a"/><ellipse cx="889.9" cy="555.8" rx="2.9" ry="1.6" fill="#4a6c30"/><ellipse cx="888.1" cy="572.3" rx="1.3" ry="2.3" fill="#3e5c2a"/><ellipse cx="886.5" cy="559.1" rx="1.9" ry="1.6" fill="#6a9444"/><ellipse cx="878.6" cy="550.4" rx="2.9" ry="2.5" fill="#86ab5a"/><ellipse cx="883.2" cy="570.2" rx="1.8" ry="2.2" fill="#4f7236"/><ellipse cx="892.0" cy="543.7" rx="2.3" ry="1.3" fill="#9cbf70"/><ellipse cx="884.8" cy="580.9" rx="1.2" ry="1.4" fill="#587f3a"/><ellipse cx="892.2" cy="577.5" rx="2.2" ry="1.7" fill="#4f7236"/><ellipse cx="885.2" cy="554.2" rx="1.7" ry="2.2" fill="#5a8238"/><ellipse cx="889.1" cy="565.1" rx="2.0" ry="1.3" fill="#4f7236"/><ellipse cx="899.4" cy="562.6" rx="1.6" ry="1.2" fill="#587f3a"/><ellipse cx="887.5" cy="571.0" rx="1.4" ry="2.0" fill="#587f3a"/><ellipse cx="891.7" cy="575.1" rx="1.4" ry="1.9" fill="#587f3a"/><ellipse cx="888.2" cy="565.3" rx="2.0" ry="1.7" fill="#4f7236"/><ellipse cx="897.5" cy="561.1" rx="2.9" ry="1.9" fill="#587f3a"/><ellipse cx="884.3" cy="555.5" rx="2.7" ry="2.3" fill="#5a8238"/><ellipse cx="893.9" cy="552.4" rx="1.7" ry="1.6" fill="#6a9444"/><ellipse cx="871.0" cy="561.4" rx="1.9" ry="2.2" fill="#6f9a48"/><ellipse cx="882.0" cy="544.2" rx="1.6" ry="1.0" fill="#6f9a48"/><ellipse cx="894.9" cy="574.3" rx="2.1" ry="2.4" fill="#4f7236"/><ellipse cx="886.0" cy="549.8" rx="2.4" ry="1.5" fill="#9cbf70"/><ellipse cx="879.8" cy="570.3" rx="2.4" ry="1.4" fill="#5a8238"/><ellipse cx="884.4" cy="556.9" rx="2.3" ry="1.5" fill="#6a9444"/><ellipse cx="892.6" cy="575.2" rx="2.0" ry="2.5" fill="#3e5c2a"/><ellipse cx="868.7" cy="559.9" rx="2.8" ry="2.5" fill="#6f9a48"/><ellipse cx="887.7" cy="575.4" rx="2.8" ry="1.1" fill="#4f7236"/><ellipse cx="891.6" cy="577.4" rx="3.0" ry="1.8" fill="#3e5c2a"/><ellipse cx="872.6" cy="559.9" rx="2.0" ry="2.0" fill="#6f9a48"/><ellipse cx="885.3" cy="570.7" rx="2.4" ry="2.0" fill="#4f7236"/><ellipse cx="892.0" cy="576.7" rx="2.4" ry="2.5" fill="#3e5c2a"/><ellipse cx="889.0" cy="556.8" rx="2.1" ry="2.0" fill="#5a8238"/><ellipse cx="871.4" cy="550.9" rx="2.7" ry="1.9" fill="#86ab5a"/><ellipse cx="872.5" cy="570.9" rx="2.3" ry="1.6" fill="#6a9444"/><ellipse cx="899.7" cy="559.1" rx="2.5" ry="1.1" fill="#4f7236"/><ellipse cx="886.9" cy="571.0" rx="1.6" ry="2.0" fill="#3e5c2a"/><ellipse cx="883.1" cy="553.0" rx="2.9" ry="2.5" fill="#6f9a48"/><ellipse cx="887.0" cy="575.1" rx="2.9" ry="2.4" fill="#4f7236"/><ellipse cx="880.4" cy="576.8" rx="1.9" ry="2.3" fill="#4f7236"/><ellipse cx="887.6" cy="567.6" rx="2.2" ry="1.7" fill="#3e5c2a"/><ellipse cx="882.9" cy="573.6" rx="2.7" ry="1.9" fill="#3e5c2a"/><ellipse cx="875.7" cy="547.9" rx="2.7" ry="1.9" fill="#6f9a48"/><ellipse cx="871.8" cy="567.5" rx="2.1" ry="2.2" fill="#527636"/><ellipse cx="868.2" cy="569.2" rx="1.8" ry="1.1" fill="#86ab5a"/><ellipse cx="881.7" cy="574.0" rx="2.6" ry="1.4" fill="#3e5c2a"/><ellipse cx="865.7" cy="566.5" rx="1.4" ry="2.0" fill="#9cbf70"/><ellipse cx="869.3" cy="553.9" rx="2.0" ry="1.0" fill="#9cbf70"/><ellipse cx="884.4" cy="567.9" rx="1.9" ry="2.4" fill="#4a6c30"/><ellipse cx="874.1" cy="547.9" rx="2.0" ry="2.0" fill="#6f9a48"/><ellipse cx="887.3" cy="556.7" rx="3.2" ry="1.8" fill="#96b868"/><ellipse cx="890.4" cy="575.3" rx="2.2" ry="2.4" fill="#4f7236"/><ellipse cx="872.0" cy="584.0" rx="10.2" ry="8.5" fill="#4f7232" /><ellipse cx="880.6" cy="577.7" rx="2.8" ry="1.1" fill="#527636"/><ellipse cx="868.0" cy="592.7" rx="2.5" ry="1.8" fill="#6a9444"/><ellipse cx="861.5" cy="585.5" rx="1.4" ry="1.8" fill="#6f9a48"/><ellipse cx="872.3" cy="586.3" rx="1.3" ry="2.5" fill="#7fa452"/><ellipse cx="863.3" cy="587.4" rx="2.7" ry="2.4" fill="#86ab5a"/><ellipse cx="869.5" cy="591.3" rx="2.9" ry="1.5" fill="#3a5626"/><ellipse cx="862.2" cy="581.0" rx="2.0" ry="2.5" fill="#6f9a48"/><ellipse cx="872.4" cy="587.2" rx="2.2" ry="1.2" fill="#6a9444"/><ellipse cx="864.1" cy="585.4" rx="1.7" ry="1.8" fill="#86ab5a"/><ellipse cx="878.5" cy="577.0" rx="3.1" ry="1.1" fill="#7fa452"/><ellipse cx="876.0" cy="587.5" rx="2.0" ry="1.0" fill="#587f3a"/><ellipse cx="871.6" cy="585.1" rx="1.9" ry="1.9" fill="#6a9444"/><ellipse cx="874.7" cy="589.8" rx="2.4" ry="1.1" fill="#4f7236"/><ellipse cx="860.4" cy="584.7" rx="2.5" ry="2.1" fill="#86ab5a"/><ellipse cx="872.5" cy="584.2" rx="2.8" ry="1.7" fill="#5a8238"/><ellipse cx="877.2" cy="591.7" rx="1.8" ry="2.3" fill="#4f7236"/><ellipse cx="868.8" cy="589.8" rx="2.9" ry="2.0" fill="#7fa452"/><ellipse cx="871.2" cy="579.0" rx="2.9" ry="1.3" fill="#86ab5a"/><ellipse cx="866.1" cy="588.6" rx="2.9" ry="2.2" fill="#4a6c30"/><ellipse cx="865.0" cy="577.6" rx="1.7" ry="1.7" fill="#6f9a48"/><ellipse cx="871.3" cy="584.1" rx="1.8" ry="1.2" fill="#5a8238"/><ellipse cx="862.6" cy="578.0" rx="1.3" ry="2.4" fill="#6f9a48"/><ellipse cx="874.4" cy="578.2" rx="3.1" ry="2.3" fill="#96b868"/><ellipse cx="878.8" cy="579.8" rx="2.0" ry="1.5" fill="#6a9444"/><ellipse cx="874.2" cy="585.8" rx="2.4" ry="1.5" fill="#5a8238"/><ellipse cx="874.6" cy="587.4" rx="2.8" ry="1.3" fill="#7fa452"/><ellipse cx="880.5" cy="586.9" rx="2.1" ry="1.2" fill="#4f7236"/><ellipse cx="865.7" cy="580.4" rx="2.6" ry="1.6" fill="#9cbf70"/><ellipse cx="868.2" cy="588.1" rx="2.0" ry="2.1" fill="#3a5626"/><ellipse cx="878.3" cy="589.0" rx="3.1" ry="2.4" fill="#3e5c2a"/><ellipse cx="881.7" cy="585.0" rx="3.0" ry="2.2" fill="#3e5c2a"/><ellipse cx="879.7" cy="580.4" rx="2.5" ry="1.5" fill="#5a8238"/><ellipse cx="876.5" cy="583.9" rx="1.3" ry="1.6" fill="#3a5626"/><ellipse cx="874.1" cy="576.4" rx="2.2" ry="1.3" fill="#6f9a48"/><ellipse cx="868.8" cy="575.8" rx="1.8" ry="1.7" fill="#9cbf70"/><ellipse cx="872.1" cy="582.9" rx="3.2" ry="2.3" fill="#5a8238"/><ellipse cx="867.3" cy="579.8" rx="1.2" ry="1.2" fill="#86ab5a"/><ellipse cx="868.5" cy="580.8" rx="1.4" ry="2.2" fill="#86ab5a"/><ellipse cx="757.0" cy="512.0" rx="13.6" ry="17.0" fill="#4f7232" /><ellipse cx="763.8" cy="500.8" rx="2.7" ry="2.0" fill="#3a5626"/><ellipse cx="750.9" cy="507.2" rx="1.7" ry="1.3" fill="#6f9a48"/><ellipse cx="770.0" cy="507.0" rx="2.2" ry="2.0" fill="#6a9444"/><ellipse cx="754.2" cy="524.4" rx="3.1" ry="2.5" fill="#587f3a"/><ellipse cx="763.1" cy="498.0" rx="1.5" ry="1.4" fill="#9cbf70"/><ellipse cx="746.8" cy="526.0" rx="2.3" ry="1.4" fill="#4a6c30"/><ellipse cx="760.6" cy="511.4" rx="2.9" ry="1.1" fill="#7fa452"/><ellipse cx="758.8" cy="528.9" rx="1.3" ry="1.8" fill="#4f7236"/><ellipse cx="765.3" cy="523.2" rx="2.2" ry="2.2" fill="#3e5c2a"/><ellipse cx="765.2" cy="507.3" rx="2.6" ry="1.9" fill="#3a5626"/><ellipse cx="764.5" cy="521.3" rx="1.4" ry="1.1" fill="#4f7236"/><ellipse cx="741.7" cy="512.2" rx="3.1" ry="1.2" fill="#6f9a48"/><ellipse cx="766.1" cy="514.2" rx="1.3" ry="1.7" fill="#4f7236"/><ellipse cx="749.4" cy="497.1" rx="2.0" ry="2.0" fill="#9cbf70"/><ellipse cx="752.8" cy="495.9" rx="2.5" ry="1.1" fill="#86ab5a"/><ellipse cx="761.7" cy="510.2" rx="1.4" ry="2.5" fill="#5a8238"/><ellipse cx="746.0" cy="499.4" rx="2.0" ry="2.3" fill="#86ab5a"/><ellipse cx="770.4" cy="508.7" rx="2.7" ry="2.5" fill="#587f3a"/><ellipse cx="757.1" cy="511.1" rx="2.6" ry="1.2" fill="#4a6c30"/><ellipse cx="763.3" cy="511.7" rx="2.3" ry="1.4" fill="#527636"/><ellipse cx="759.1" cy="514.0" rx="2.4" ry="1.6" fill="#4a6c30"/><ellipse cx="754.7" cy="531.5" rx="1.5" ry="1.2" fill="#587f3a"/><ellipse cx="763.0" cy="500.3" rx="2.1" ry="2.0" fill="#9cbf70"/><ellipse cx="758.2" cy="506.1" rx="2.5" ry="1.2" fill="#527636"/><ellipse cx="745.3" cy="502.1" rx="1.4" ry="1.2" fill="#86ab5a"/><ellipse cx="742.1" cy="515.1" rx="1.7" ry="2.1" fill="#86ab5a"/><ellipse cx="766.9" cy="517.6" rx="1.9" ry="2.4" fill="#3e5c2a"/><ellipse cx="763.1" cy="501.8" rx="2.0" ry="2.3" fill="#7fa452"/><ellipse cx="764.3" cy="504.6" rx="1.7" ry="1.4" fill="#527636"/><ellipse cx="750.7" cy="515.7" rx="2.6" ry="2.2" fill="#527636"/><ellipse cx="757.6" cy="517.2" rx="1.5" ry="1.2" fill="#4a6c30"/><ellipse cx="764.6" cy="495.3" rx="2.3" ry="1.4" fill="#6f9a48"/><ellipse cx="767.9" cy="505.0" rx="2.4" ry="1.3" fill="#3a5626"/><ellipse cx="762.8" cy="529.0" rx="2.1" ry="1.7" fill="#4f7236"/><ellipse cx="747.3" cy="527.3" rx="1.4" ry="2.6" fill="#96b868"/><ellipse cx="752.4" cy="509.8" rx="3.1" ry="2.3" fill="#9cbf70"/><ellipse cx="749.6" cy="511.0" rx="1.6" ry="2.0" fill="#86ab5a"/><ellipse cx="758.4" cy="513.0" rx="2.6" ry="1.3" fill="#4a6c30"/><ellipse cx="757.1" cy="497.8" rx="2.0" ry="1.9" fill="#9cbf70"/><ellipse cx="752.4" cy="493.8" rx="2.2" ry="2.3" fill="#86ab5a"/><ellipse cx="766.4" cy="528.0" rx="2.5" ry="1.1" fill="#587f3a"/><ellipse cx="746.9" cy="516.0" rx="2.3" ry="1.6" fill="#9cbf70"/><ellipse cx="763.6" cy="494.9" rx="1.3" ry="2.5" fill="#86ab5a"/><ellipse cx="750.3" cy="504.4" rx="1.9" ry="2.0" fill="#86ab5a"/><ellipse cx="747.4" cy="520.1" rx="2.3" ry="2.4" fill="#7fa452"/><ellipse cx="754.1" cy="527.1" rx="2.2" ry="1.2" fill="#4f7236"/><ellipse cx="754.3" cy="499.5" rx="2.5" ry="1.8" fill="#86ab5a"/><ellipse cx="765.3" cy="518.2" rx="2.4" ry="2.4" fill="#4f7236"/><ellipse cx="752.8" cy="505.0" rx="1.7" ry="1.4" fill="#86ab5a"/><ellipse cx="760.7" cy="531.0" rx="2.7" ry="1.1" fill="#587f3a"/><ellipse cx="769.9" cy="515.7" rx="2.1" ry="2.0" fill="#587f3a"/><ellipse cx="755.2" cy="526.7" rx="1.4" ry="1.1" fill="#587f3a"/><ellipse cx="750.7" cy="497.8" rx="2.0" ry="2.5" fill="#9cbf70"/><ellipse cx="751.7" cy="528.7" rx="3.0" ry="1.7" fill="#4f7236"/><ellipse cx="747.6" cy="497.2" rx="2.3" ry="2.1" fill="#6f9a48"/><ellipse cx="759.8" cy="498.1" rx="3.2" ry="2.5" fill="#9cbf70"/><ellipse cx="741.5" cy="507.6" rx="1.4" ry="2.0" fill="#6f9a48"/><ellipse cx="751.4" cy="506.3" rx="2.6" ry="2.5" fill="#6f9a48"/><ellipse cx="746.4" cy="514.9" rx="2.7" ry="2.1" fill="#6f9a48"/><ellipse cx="769.3" cy="519.7" rx="3.1" ry="1.4" fill="#4f7236"/><ellipse cx="753.1" cy="518.1" rx="1.9" ry="1.3" fill="#4a6c30"/><ellipse cx="747.7" cy="496.3" rx="1.5" ry="1.3" fill="#9cbf70"/><ellipse cx="754.4" cy="517.5" rx="2.5" ry="1.2" fill="#96b868"/><ellipse cx="747.4" cy="499.8" rx="3.1" ry="2.1" fill="#9cbf70"/><ellipse cx="751.1" cy="522.6" rx="2.3" ry="1.6" fill="#6a9444"/><ellipse cx="763.7" cy="507.7" rx="1.7" ry="1.5" fill="#527636"/><ellipse cx="762.9" cy="526.8" rx="1.3" ry="1.6" fill="#4f7236"/><ellipse cx="760.4" cy="501.4" rx="2.0" ry="1.8" fill="#6f9a48"/><ellipse cx="755.2" cy="504.1" rx="2.2" ry="2.1" fill="#86ab5a"/><ellipse cx="767.6" cy="511.2" rx="2.1" ry="1.1" fill="#4f7236"/><ellipse cx="744.4" cy="509.9" rx="1.8" ry="2.0" fill="#6f9a48"/><ellipse cx="764.2" cy="517.6" rx="3.0" ry="2.2" fill="#587f3a"/><ellipse cx="764.6" cy="504.0" rx="1.8" ry="1.7" fill="#5a8238"/><ellipse cx="767.5" cy="509.7" rx="1.4" ry="2.4" fill="#4f7236"/><ellipse cx="755.1" cy="513.5" rx="1.9" ry="2.3" fill="#96b868"/><ellipse cx="760.0" cy="509.9" rx="1.7" ry="1.4" fill="#5a8238"/><ellipse cx="762.1" cy="522.9" rx="2.0" ry="2.3" fill="#587f3a"/><ellipse cx="765.9" cy="525.7" rx="1.2" ry="2.4" fill="#3e5c2a"/><ellipse cx="754.0" cy="506.0" rx="1.8" ry="2.5" fill="#6f9a48"/><ellipse cx="747.7" cy="500.2" rx="1.9" ry="1.8" fill="#9cbf70"/><ellipse cx="769.2" cy="509.8" rx="3.0" ry="2.3" fill="#3e5c2a"/><ellipse cx="750.8" cy="522.5" rx="1.6" ry="2.1" fill="#6a9444"/><ellipse cx="767.4" cy="512.0" rx="2.6" ry="2.5" fill="#4f7236"/><ellipse cx="752.8" cy="530.8" rx="3.1" ry="1.7" fill="#587f3a"/><ellipse cx="754.5" cy="513.4" rx="3.1" ry="2.0" fill="#5a8238"/><ellipse cx="746.5" cy="497.0" rx="2.1" ry="1.6" fill="#9cbf70"/><ellipse cx="756.2" cy="492.0" rx="1.9" ry="2.5" fill="#86ab5a"/><ellipse cx="759.4" cy="505.0" rx="2.7" ry="1.7" fill="#7fa452"/><ellipse cx="787.0" cy="537.0" rx="17.0" ry="18.7" fill="#4f7232" /><ellipse cx="772.5" cy="526.0" rx="1.3" ry="1.4" fill="#86ab5a"/><ellipse cx="779.3" cy="524.0" rx="1.6" ry="1.9" fill="#86ab5a"/><ellipse cx="789.5" cy="543.8" rx="2.6" ry="1.9" fill="#7fa452"/><ellipse cx="797.3" cy="543.0" rx="1.5" ry="1.7" fill="#4f7236"/><ellipse cx="778.9" cy="542.0" rx="1.3" ry="2.4" fill="#6a9444"/><ellipse cx="771.9" cy="529.5" rx="2.4" ry="2.1" fill="#9cbf70"/><ellipse cx="772.3" cy="523.5" rx="2.0" ry="2.2" fill="#86ab5a"/><ellipse cx="776.4" cy="537.4" rx="2.6" ry="1.1" fill="#86ab5a"/><ellipse cx="772.8" cy="533.9" rx="3.2" ry="1.1" fill="#86ab5a"/><ellipse cx="770.1" cy="543.3" rx="2.1" ry="2.4" fill="#86ab5a"/><ellipse cx="779.7" cy="521.4" rx="1.9" ry="1.3" fill="#86ab5a"/><ellipse cx="781.4" cy="525.9" rx="3.1" ry="1.3" fill="#9cbf70"/><ellipse cx="781.7" cy="536.9" rx="1.4" ry="1.4" fill="#3a5626"/><ellipse cx="776.9" cy="542.2" rx="1.8" ry="1.7" fill="#527636"/><ellipse cx="781.8" cy="545.4" rx="2.7" ry="1.7" fill="#7fa452"/><ellipse cx="772.4" cy="531.0" rx="2.3" ry="1.9" fill="#9cbf70"/><ellipse cx="788.4" cy="556.9" rx="3.2" ry="1.6" fill="#3e5c2a"/><ellipse cx="776.2" cy="549.8" rx="2.5" ry="1.5" fill="#3a5626"/><ellipse cx="789.7" cy="518.2" rx="2.3" ry="1.8" fill="#86ab5a"/><ellipse cx="782.1" cy="519.1" rx="1.3" ry="2.5" fill="#9cbf70"/><ellipse cx="797.9" cy="533.0" rx="3.1" ry="1.3" fill="#4a6c30"/><ellipse cx="797.6" cy="548.7" rx="3.0" ry="2.0" fill="#3e5c2a"/><ellipse cx="785.0" cy="518.5" rx="1.7" ry="1.4" fill="#9cbf70"/><ellipse cx="780.3" cy="554.5" rx="2.0" ry="2.0" fill="#587f3a"/><ellipse cx="782.9" cy="534.1" rx="2.2" ry="2.4" fill="#9cbf70"/><ellipse cx="796.2" cy="533.7" rx="2.8" ry="2.6" fill="#3a5626"/><ellipse cx="801.1" cy="551.2" rx="1.2" ry="1.3" fill="#587f3a"/><ellipse cx="790.8" cy="533.6" rx="1.9" ry="1.4" fill="#7fa452"/><ellipse cx="787.0" cy="547.9" rx="3.2" ry="1.8" fill="#4f7236"/><ellipse cx="781.9" cy="549.0" rx="2.1" ry="2.1" fill="#7fa452"/><ellipse cx="775.6" cy="536.4" rx="1.7" ry="1.5" fill="#6f9a48"/><ellipse cx="778.7" cy="534.1" rx="2.9" ry="1.5" fill="#86ab5a"/><ellipse cx="776.7" cy="519.2" rx="1.9" ry="1.1" fill="#86ab5a"/><ellipse cx="798.2" cy="533.2" rx="2.6" ry="1.6" fill="#3a5626"/><ellipse cx="785.9" cy="530.6" rx="2.6" ry="2.2" fill="#86ab5a"/><ellipse cx="785.3" cy="528.1" rx="2.5" ry="1.9" fill="#86ab5a"/><ellipse cx="799.8" cy="548.4" rx="2.0" ry="2.5" fill="#3e5c2a"/><ellipse cx="795.5" cy="545.3" rx="1.7" ry="2.1" fill="#587f3a"/><ellipse cx="799.6" cy="549.7" rx="1.5" ry="2.1" fill="#587f3a"/><ellipse cx="788.7" cy="550.1" rx="2.2" ry="1.8" fill="#3e5c2a"/><ellipse cx="780.2" cy="545.6" rx="2.5" ry="1.3" fill="#4a6c30"/><ellipse cx="796.7" cy="525.2" rx="1.5" ry="1.8" fill="#5a8238"/><ellipse cx="785.2" cy="518.3" rx="1.9" ry="1.8" fill="#9cbf70"/><ellipse cx="772.9" cy="542.5" rx="1.9" ry="1.9" fill="#9cbf70"/><ellipse cx="786.9" cy="529.3" rx="2.3" ry="2.0" fill="#6f9a48"/><ellipse cx="791.1" cy="543.9" rx="2.3" ry="1.2" fill="#3e5c2a"/><ellipse cx="782.1" cy="516.6" rx="3.0" ry="2.2" fill="#86ab5a"/><ellipse cx="795.0" cy="550.3" rx="1.8" ry="1.6" fill="#3e5c2a"/><ellipse cx="798.0" cy="533.5" rx="1.2" ry="1.9" fill="#6a9444"/><ellipse cx="769.6" cy="542.9" rx="1.3" ry="2.6" fill="#9cbf70"/><ellipse cx="779.8" cy="539.5" rx="2.4" ry="1.6" fill="#5a8238"/><ellipse cx="786.5" cy="526.3" rx="2.2" ry="1.3" fill="#6f9a48"/><ellipse cx="771.7" cy="525.1" rx="2.8" ry="2.4" fill="#86ab5a"/><ellipse cx="803.6" cy="530.0" rx="1.6" ry="2.4" fill="#6a9444"/><ellipse cx="770.3" cy="531.5" rx="2.4" ry="1.8" fill="#86ab5a"/><ellipse cx="791.0" cy="547.5" rx="2.2" ry="1.1" fill="#4f7236"/><ellipse cx="786.9" cy="549.3" rx="1.6" ry="1.6" fill="#587f3a"/><ellipse cx="792.8" cy="548.0" rx="3.2" ry="1.9" fill="#4f7236"/><ellipse cx="784.8" cy="530.6" rx="1.3" ry="2.0" fill="#9cbf70"/><ellipse cx="777.5" cy="521.3" rx="2.6" ry="2.2" fill="#9cbf70"/><ellipse cx="806.0" cy="541.6" rx="1.7" ry="1.2" fill="#4f7236"/><ellipse cx="795.8" cy="518.1" rx="1.3" ry="1.1" fill="#86ab5a"/><ellipse cx="792.4" cy="544.3" rx="3.1" ry="1.8" fill="#4f7236"/><ellipse cx="799.7" cy="553.9" rx="1.4" ry="1.1" fill="#4f7236"/><ellipse cx="777.5" cy="550.0" rx="1.9" ry="2.1" fill="#527636"/><ellipse cx="780.1" cy="525.9" rx="1.7" ry="1.9" fill="#9cbf70"/><ellipse cx="777.8" cy="524.3" rx="2.6" ry="1.4" fill="#9cbf70"/><ellipse cx="770.7" cy="538.9" rx="2.9" ry="2.0" fill="#86ab5a"/><ellipse cx="800.4" cy="526.4" rx="1.7" ry="1.7" fill="#96b868"/><ellipse cx="793.6" cy="540.1" rx="2.7" ry="1.1" fill="#6a9444"/><ellipse cx="784.5" cy="539.6" rx="1.4" ry="2.1" fill="#4a6c30"/><ellipse cx="790.4" cy="538.7" rx="1.5" ry="2.5" fill="#527636"/><ellipse cx="782.7" cy="537.2" rx="2.3" ry="1.0" fill="#4a6c30"/><ellipse cx="788.9" cy="533.8" rx="3.0" ry="2.3" fill="#96b868"/><ellipse cx="782.2" cy="552.3" rx="3.0" ry="2.2" fill="#4f7236"/><ellipse cx="806.1" cy="536.9" rx="2.1" ry="2.3" fill="#3e5c2a"/><ellipse cx="792.4" cy="526.3" rx="1.7" ry="1.1" fill="#96b868"/><ellipse cx="781.4" cy="548.9" rx="2.6" ry="1.4" fill="#3a5626"/><ellipse cx="788.0" cy="542.2" rx="1.6" ry="1.1" fill="#527636"/><ellipse cx="782.8" cy="538.1" rx="2.3" ry="1.1" fill="#5a8238"/><ellipse cx="796.7" cy="551.7" rx="2.0" ry="1.5" fill="#3e5c2a"/><ellipse cx="781.5" cy="524.3" rx="1.4" ry="2.3" fill="#86ab5a"/><ellipse cx="799.4" cy="521.5" rx="2.6" ry="1.5" fill="#6a9444"/><ellipse cx="799.3" cy="550.3" rx="2.3" ry="1.6" fill="#587f3a"/><ellipse cx="778.1" cy="532.6" rx="1.6" ry="1.3" fill="#86ab5a"/><ellipse cx="784.1" cy="528.5" rx="2.4" ry="1.8" fill="#86ab5a"/><ellipse cx="779.9" cy="554.1" rx="1.3" ry="2.5" fill="#3e5c2a"/><ellipse cx="779.3" cy="541.6" rx="1.3" ry="1.8" fill="#4a6c30"/><ellipse cx="797.6" cy="537.9" rx="1.8" ry="1.9" fill="#4f7236"/><ellipse cx="796.7" cy="550.3" rx="2.1" ry="2.1" fill="#3e5c2a"/><ellipse cx="789.5" cy="522.2" rx="1.8" ry="2.1" fill="#9cbf70"/><ellipse cx="779.3" cy="551.7" rx="2.7" ry="2.6" fill="#3a5626"/><ellipse cx="794.2" cy="549.7" rx="1.4" ry="2.1" fill="#4f7236"/><ellipse cx="798.4" cy="525.1" rx="1.4" ry="1.4" fill="#527636"/><ellipse cx="777.6" cy="522.2" rx="3.0" ry="2.2" fill="#9cbf70"/><ellipse cx="784.1" cy="525.5" rx="2.5" ry="1.6" fill="#86ab5a"/><ellipse cx="784.4" cy="530.9" rx="1.8" ry="2.2" fill="#9cbf70"/><ellipse cx="786.8" cy="534.8" rx="1.7" ry="1.6" fill="#96b868"/><ellipse cx="788.0" cy="557.2" rx="3.0" ry="1.2" fill="#4f7236"/><ellipse cx="782.4" cy="533.7" rx="1.3" ry="1.6" fill="#86ab5a"/><ellipse cx="800.4" cy="525.1" rx="2.4" ry="1.8" fill="#7fa452"/><ellipse cx="779.8" cy="552.8" rx="2.5" ry="1.6" fill="#3a5626"/><ellipse cx="786.7" cy="516.8" rx="2.7" ry="1.4" fill="#86ab5a"/><ellipse cx="799.0" cy="540.6" rx="3.1" ry="2.5" fill="#3e5c2a"/><ellipse cx="791.2" cy="539.1" rx="2.5" ry="1.6" fill="#7fa452"/><ellipse cx="773.4" cy="551.9" rx="2.2" ry="2.5" fill="#96b868"/><ellipse cx="776.4" cy="525.7" rx="2.0" ry="1.1" fill="#86ab5a"/><ellipse cx="802.1" cy="534.3" rx="2.2" ry="1.1" fill="#4f7236"/><ellipse cx="770.0" cy="547.4" rx="2.0" ry="1.3" fill="#86ab5a"/><ellipse cx="786.2" cy="531.8" rx="2.8" ry="1.0" fill="#6f9a48"/><ellipse cx="773.8" cy="537.6" rx="2.6" ry="2.3" fill="#9cbf70"/><ellipse cx="795.1" cy="518.7" rx="2.8" ry="1.6" fill="#9cbf70"/><ellipse cx="780.3" cy="552.6" rx="2.4" ry="1.9" fill="#4a6c30"/><ellipse cx="791.3" cy="541.2" rx="3.1" ry="2.2" fill="#96b868"/><ellipse cx="799.1" cy="539.5" rx="1.6" ry="1.2" fill="#4f7236"/><ellipse cx="801.1" cy="535.0" rx="1.2" ry="2.2" fill="#3e5c2a"/><ellipse cx="792.9" cy="524.8" rx="1.7" ry="1.3" fill="#6f9a48"/><ellipse cx="798.1" cy="536.6" rx="2.2" ry="1.7" fill="#3e5c2a"/><ellipse cx="822.0" cy="550.0" rx="15.299999999999999" ry="15.299999999999999" fill="#4f7232" /><ellipse cx="830.2" cy="552.7" rx="2.0" ry="1.8" fill="#3e5c2a"/><ellipse cx="814.5" cy="554.9" rx="3.1" ry="1.1" fill="#96b868"/><ellipse cx="835.5" cy="548.1" rx="1.4" ry="1.7" fill="#4f7236"/><ellipse cx="837.3" cy="558.1" rx="1.6" ry="2.5" fill="#587f3a"/><ellipse cx="809.1" cy="546.8" rx="3.0" ry="2.4" fill="#6f9a48"/><ellipse cx="827.8" cy="545.4" rx="1.6" ry="1.0" fill="#4a6c30"/><ellipse cx="821.0" cy="537.4" rx="3.1" ry="2.0" fill="#6f9a48"/><ellipse cx="823.2" cy="561.6" rx="2.5" ry="2.6" fill="#587f3a"/><ellipse cx="839.3" cy="551.8" rx="2.8" ry="1.7" fill="#3e5c2a"/><ellipse cx="805.1" cy="553.3" rx="2.0" ry="2.0" fill="#86ab5a"/><ellipse cx="809.6" cy="559.8" rx="2.4" ry="1.1" fill="#3a5626"/><ellipse cx="829.8" cy="564.4" rx="3.2" ry="2.0" fill="#4f7236"/><ellipse cx="821.6" cy="565.6" rx="1.3" ry="1.9" fill="#3e5c2a"/><ellipse cx="811.6" cy="563.7" rx="2.6" ry="2.3" fill="#5a8238"/><ellipse cx="830.3" cy="551.3" rx="2.4" ry="1.9" fill="#3e5c2a"/><ellipse cx="823.9" cy="537.0" rx="1.7" ry="1.7" fill="#9cbf70"/><ellipse cx="823.6" cy="545.8" rx="1.2" ry="1.6" fill="#5a8238"/><ellipse cx="807.1" cy="549.2" rx="2.9" ry="1.8" fill="#6f9a48"/><ellipse cx="807.1" cy="554.9" rx="2.2" ry="1.2" fill="#86ab5a"/><ellipse cx="826.8" cy="545.9" rx="3.1" ry="2.6" fill="#4a6c30"/><ellipse cx="825.3" cy="556.5" rx="2.6" ry="2.5" fill="#587f3a"/><ellipse cx="819.5" cy="550.9" rx="3.2" ry="1.9" fill="#527636"/><ellipse cx="828.5" cy="559.0" rx="2.7" ry="1.2" fill="#587f3a"/><ellipse cx="804.9" cy="553.7" rx="1.9" ry="1.2" fill="#86ab5a"/><ellipse cx="822.0" cy="565.2" rx="1.6" ry="1.0" fill="#3e5c2a"/><ellipse cx="809.0" cy="561.4" rx="2.5" ry="1.5" fill="#7fa452"/><ellipse cx="825.5" cy="540.8" rx="1.5" ry="2.4" fill="#6f9a48"/><ellipse cx="817.6" cy="545.3" rx="2.5" ry="1.7" fill="#9cbf70"/><ellipse cx="815.3" cy="564.6" rx="2.0" ry="1.5" fill="#527636"/><ellipse cx="831.2" cy="539.6" rx="1.7" ry="2.4" fill="#96b868"/><ellipse cx="813.3" cy="563.2" rx="2.0" ry="1.6" fill="#7fa452"/><ellipse cx="827.9" cy="545.0" rx="3.1" ry="1.6" fill="#4a6c30"/><ellipse cx="831.7" cy="536.2" rx="2.3" ry="1.2" fill="#5a8238"/><ellipse cx="812.5" cy="549.5" rx="2.9" ry="1.9" fill="#6f9a48"/><ellipse cx="831.3" cy="549.6" rx="2.9" ry="1.7" fill="#3a5626"/><ellipse cx="831.8" cy="535.1" rx="1.4" ry="1.5" fill="#3a5626"/><ellipse cx="805.5" cy="554.6" rx="1.9" ry="1.4" fill="#6f9a48"/><ellipse cx="822.5" cy="551.7" rx="1.8" ry="1.0" fill="#96b868"/><ellipse cx="807.5" cy="553.0" rx="2.9" ry="2.3" fill="#86ab5a"/><ellipse cx="817.7" cy="545.4" rx="2.6" ry="1.7" fill="#86ab5a"/><ellipse cx="814.6" cy="540.9" rx="2.4" ry="2.5" fill="#9cbf70"/><ellipse cx="831.4" cy="565.1" rx="2.8" ry="1.2" fill="#4f7236"/><ellipse cx="817.8" cy="551.5" rx="1.4" ry="1.3" fill="#527636"/><ellipse cx="833.1" cy="555.1" rx="1.7" ry="1.1" fill="#3e5c2a"/><ellipse cx="824.8" cy="567.6" rx="1.4" ry="2.0" fill="#587f3a"/><ellipse cx="837.6" cy="544.9" rx="2.2" ry="1.4" fill="#3e5c2a"/><ellipse cx="824.4" cy="539.0" rx="1.4" ry="1.8" fill="#86ab5a"/><ellipse cx="821.0" cy="565.5" rx="2.8" ry="2.3" fill="#3e5c2a"/><ellipse cx="833.1" cy="554.4" rx="2.3" ry="2.5" fill="#4f7236"/><ellipse cx="804.4" cy="549.7" rx="1.6" ry="2.2" fill="#6f9a48"/><ellipse cx="825.3" cy="550.3" rx="1.8" ry="2.5" fill="#7fa452"/><ellipse cx="813.6" cy="539.7" rx="1.6" ry="2.2" fill="#6f9a48"/><ellipse cx="822.9" cy="548.1" rx="2.4" ry="1.4" fill="#527636"/><ellipse cx="835.4" cy="548.5" rx="2.4" ry="1.5" fill="#4f7236"/><ellipse cx="832.5" cy="538.9" rx="2.2" ry="1.8" fill="#4a6c30"/><ellipse cx="817.8" cy="540.9" rx="1.8" ry="1.2" fill="#6f9a48"/><ellipse cx="818.9" cy="554.4" rx="1.7" ry="1.6" fill="#3a5626"/><ellipse cx="816.7" cy="556.0" rx="3.0" ry="2.5" fill="#6a9444"/><ellipse cx="819.4" cy="533.5" rx="3.1" ry="1.0" fill="#86ab5a"/><ellipse cx="826.3" cy="540.4" rx="1.4" ry="2.5" fill="#527636"/><ellipse cx="828.0" cy="543.2" rx="2.4" ry="1.5" fill="#4a6c30"/><ellipse cx="815.5" cy="537.2" rx="2.1" ry="1.5" fill="#9cbf70"/><ellipse cx="827.8" cy="545.7" rx="2.8" ry="2.4" fill="#96b868"/><ellipse cx="833.1" cy="553.7" rx="2.1" ry="2.3" fill="#4f7236"/><ellipse cx="826.6" cy="550.3" rx="2.2" ry="1.3" fill="#5a8238"/><ellipse cx="825.5" cy="545.9" rx="1.2" ry="1.5" fill="#6a9444"/><ellipse cx="822.3" cy="561.4" rx="3.1" ry="2.3" fill="#587f3a"/><ellipse cx="814.1" cy="560.5" rx="1.7" ry="2.0" fill="#4a6c30"/><ellipse cx="828.2" cy="540.2" rx="2.0" ry="1.4" fill="#527636"/><ellipse cx="811.9" cy="550.1" rx="2.9" ry="2.1" fill="#9cbf70"/><ellipse cx="814.1" cy="548.5" rx="1.4" ry="2.2" fill="#6f9a48"/><ellipse cx="827.8" cy="562.6" rx="2.5" ry="2.3" fill="#3e5c2a"/><ellipse cx="832.3" cy="550.1" rx="1.6" ry="1.0" fill="#4f7236"/><ellipse cx="820.9" cy="555.6" rx="3.0" ry="2.3" fill="#3a5626"/><ellipse cx="824.6" cy="566.4" rx="1.6" ry="1.6" fill="#4f7236"/><ellipse cx="827.5" cy="536.6" rx="2.2" ry="1.7" fill="#9cbf70"/><ellipse cx="823.8" cy="546.2" rx="1.2" ry="1.3" fill="#5a8238"/><ellipse cx="819.1" cy="547.0" rx="2.7" ry="1.2" fill="#86ab5a"/><ellipse cx="822.6" cy="550.0" rx="3.1" ry="1.9" fill="#6a9444"/><ellipse cx="816.0" cy="563.9" rx="1.5" ry="1.3" fill="#3a5626"/><ellipse cx="839.8" cy="551.5" rx="2.8" ry="2.4" fill="#4f7236"/><ellipse cx="830.5" cy="558.8" rx="1.3" ry="1.6" fill="#3e5c2a"/><ellipse cx="812.8" cy="542.7" rx="2.9" ry="1.3" fill="#86ab5a"/><ellipse cx="808.1" cy="541.9" rx="1.9" ry="1.4" fill="#9cbf70"/><ellipse cx="815.2" cy="561.3" rx="3.1" ry="1.4" fill="#527636"/><ellipse cx="831.7" cy="538.8" rx="1.7" ry="2.1" fill="#5a8238"/><ellipse cx="826.3" cy="533.7" rx="2.3" ry="1.6" fill="#6f9a48"/><ellipse cx="817.1" cy="560.2" rx="2.2" ry="2.5" fill="#6a9444"/><ellipse cx="829.8" cy="559.6" rx="2.7" ry="2.6" fill="#587f3a"/><ellipse cx="772.0" cy="564.0" rx="11.9" ry="8.5" fill="#4f7232" /><ellipse cx="767.7" cy="558.2" rx="3.0" ry="2.3" fill="#6f9a48"/><ellipse cx="776.1" cy="570.2" rx="2.5" ry="1.0" fill="#4f7236"/><ellipse cx="764.0" cy="558.5" rx="2.7" ry="1.7" fill="#6f9a48"/><ellipse cx="764.3" cy="563.0" rx="1.8" ry="1.2" fill="#9cbf70"/><ellipse cx="779.4" cy="564.3" rx="2.8" ry="2.0" fill="#587f3a"/><ellipse cx="766.2" cy="562.1" rx="2.7" ry="1.6" fill="#86ab5a"/><ellipse cx="780.7" cy="562.9" rx="1.2" ry="1.8" fill="#3e5c2a"/><ellipse cx="775.5" cy="559.3" rx="1.6" ry="1.8" fill="#527636"/><ellipse cx="768.9" cy="573.6" rx="1.9" ry="2.0" fill="#96b868"/><ellipse cx="773.9" cy="559.7" rx="2.6" ry="1.2" fill="#96b868"/><ellipse cx="765.2" cy="564.9" rx="2.7" ry="2.3" fill="#6f9a48"/><ellipse cx="772.6" cy="555.8" rx="1.5" ry="1.1" fill="#9cbf70"/><ellipse cx="781.3" cy="563.3" rx="3.2" ry="2.0" fill="#587f3a"/><ellipse cx="777.0" cy="571.6" rx="2.2" ry="1.5" fill="#3e5c2a"/><ellipse cx="773.2" cy="554.2" rx="2.8" ry="1.9" fill="#6f9a48"/><ellipse cx="779.4" cy="565.3" rx="1.8" ry="1.4" fill="#3e5c2a"/><ellipse cx="758.1" cy="564.3" rx="1.4" ry="1.6" fill="#6f9a48"/><ellipse cx="765.7" cy="560.3" rx="1.2" ry="1.6" fill="#9cbf70"/><ellipse cx="768.4" cy="567.4" rx="2.0" ry="2.5" fill="#5a8238"/><ellipse cx="772.8" cy="570.3" rx="3.2" ry="2.1" fill="#3e5c2a"/><ellipse cx="771.5" cy="556.3" rx="2.2" ry="2.0" fill="#9cbf70"/><ellipse cx="777.2" cy="570.2" rx="2.3" ry="2.4" fill="#3e5c2a"/><ellipse cx="774.6" cy="558.8" rx="2.8" ry="2.5" fill="#5a8238"/><ellipse cx="781.4" cy="570.0" rx="2.5" ry="1.2" fill="#587f3a"/><ellipse cx="781.2" cy="567.1" rx="2.9" ry="2.4" fill="#587f3a"/><ellipse cx="760.7" cy="559.3" rx="2.2" ry="1.1" fill="#9cbf70"/><ellipse cx="758.8" cy="566.7" rx="2.4" ry="2.1" fill="#6f9a48"/><ellipse cx="774.7" cy="559.9" rx="2.6" ry="1.5" fill="#96b868"/><ellipse cx="780.4" cy="569.4" rx="2.4" ry="2.0" fill="#3e5c2a"/><ellipse cx="769.0" cy="558.6" rx="2.4" ry="1.8" fill="#9cbf70"/><ellipse cx="771.3" cy="564.2" rx="2.0" ry="1.1" fill="#5a8238"/><ellipse cx="771.7" cy="558.3" rx="3.0" ry="1.2" fill="#9cbf70"/><ellipse cx="758.6" cy="561.7" rx="1.4" ry="1.0" fill="#9cbf70"/><ellipse cx="768.0" cy="570.2" rx="2.7" ry="2.3" fill="#7fa452"/><ellipse cx="768.4" cy="569.7" rx="3.1" ry="2.5" fill="#7fa452"/><ellipse cx="759.9" cy="566.2" rx="1.4" ry="1.0" fill="#9cbf70"/><ellipse cx="766.8" cy="559.3" rx="1.3" ry="1.2" fill="#9cbf70"/><ellipse cx="762.7" cy="560.2" rx="2.9" ry="1.8" fill="#9cbf70"/><ellipse cx="772.7" cy="564.3" rx="3.0" ry="1.7" fill="#6a9444"/><ellipse cx="782.6" cy="566.1" rx="1.7" ry="1.4" fill="#4f7236"/><ellipse cx="773.6" cy="560.0" rx="2.5" ry="1.6" fill="#527636"/><ellipse cx="778.7" cy="563.6" rx="2.7" ry="2.5" fill="#4a6c30"/><ellipse cx="778.6" cy="567.5" rx="2.8" ry="2.2" fill="#3e5c2a"/><ellipse cx="724.0" cy="452.0" rx="15.299999999999999" ry="22.099999999999998" fill="#4f7232" /><ellipse cx="738.7" cy="441.3" rx="1.3" ry="2.3" fill="#3a5626"/><ellipse cx="722.0" cy="456.9" rx="1.6" ry="2.1" fill="#7fa452"/><ellipse cx="725.3" cy="455.5" rx="2.0" ry="2.0" fill="#5a8238"/><ellipse cx="732.5" cy="463.0" rx="3.0" ry="1.2" fill="#3e5c2a"/><ellipse cx="727.9" cy="445.7" rx="2.2" ry="1.4" fill="#527636"/><ellipse cx="732.2" cy="432.8" rx="2.8" ry="2.1" fill="#6f9a48"/><ellipse cx="729.7" cy="436.0" rx="1.3" ry="1.1" fill="#6f9a48"/><ellipse cx="723.2" cy="475.1" rx="2.1" ry="1.6" fill="#3e5c2a"/><ellipse cx="722.7" cy="438.0" rx="2.4" ry="1.3" fill="#9cbf70"/><ellipse cx="725.6" cy="445.6" rx="1.7" ry="2.2" fill="#96b868"/><ellipse cx="710.6" cy="449.6" rx="1.6" ry="1.4" fill="#6f9a48"/><ellipse cx="718.6" cy="473.3" rx="1.9" ry="1.5" fill="#3e5c2a"/><ellipse cx="711.4" cy="454.9" rx="1.5" ry="1.6" fill="#86ab5a"/><ellipse cx="732.7" cy="463.2" rx="1.3" ry="1.4" fill="#587f3a"/><ellipse cx="715.8" cy="464.6" rx="3.1" ry="2.2" fill="#4a6c30"/><ellipse cx="721.0" cy="471.5" rx="1.3" ry="1.2" fill="#3e5c2a"/><ellipse cx="722.6" cy="448.3" rx="1.8" ry="2.0" fill="#96b868"/><ellipse cx="732.3" cy="459.6" rx="3.0" ry="2.5" fill="#587f3a"/><ellipse cx="711.6" cy="451.9" rx="2.5" ry="1.5" fill="#9cbf70"/><ellipse cx="728.3" cy="451.9" rx="2.3" ry="1.7" fill="#7fa452"/><ellipse cx="724.6" cy="438.3" rx="1.5" ry="1.9" fill="#9cbf70"/><ellipse cx="738.5" cy="443.2" rx="3.1" ry="2.2" fill="#5a8238"/><ellipse cx="728.3" cy="430.0" rx="3.0" ry="2.3" fill="#6f9a48"/><ellipse cx="717.0" cy="465.6" rx="1.5" ry="1.6" fill="#527636"/><ellipse cx="722.1" cy="433.0" rx="3.0" ry="2.5" fill="#9cbf70"/><ellipse cx="736.3" cy="435.4" rx="2.2" ry="2.6" fill="#4a6c30"/><ellipse cx="714.6" cy="458.2" rx="2.0" ry="2.1" fill="#527636"/><ellipse cx="728.8" cy="433.2" rx="2.7" ry="1.4" fill="#9cbf70"/><ellipse cx="722.6" cy="450.5" rx="2.2" ry="1.4" fill="#4a6c30"/><ellipse cx="708.4" cy="445.8" rx="1.5" ry="2.0" fill="#6f9a48"/><ellipse cx="717.5" cy="467.3" rx="1.5" ry="1.9" fill="#6a9444"/><ellipse cx="719.7" cy="471.9" rx="2.6" ry="2.2" fill="#4f7236"/><ellipse cx="735.3" cy="448.0" rx="1.3" ry="1.6" fill="#4a6c30"/><ellipse cx="718.1" cy="432.6" rx="2.1" ry="1.6" fill="#9cbf70"/><ellipse cx="707.8" cy="445.5" rx="1.5" ry="1.0" fill="#9cbf70"/><ellipse cx="726.5" cy="467.3" rx="2.0" ry="2.4" fill="#4f7236"/><ellipse cx="728.0" cy="435.0" rx="1.8" ry="1.9" fill="#86ab5a"/><ellipse cx="728.7" cy="438.7" rx="2.6" ry="1.6" fill="#86ab5a"/><ellipse cx="715.0" cy="459.8" rx="1.6" ry="1.0" fill="#5a8238"/><ellipse cx="715.7" cy="451.4" rx="3.0" ry="1.2" fill="#9cbf70"/><ellipse cx="728.2" cy="444.8" rx="2.0" ry="1.6" fill="#3a5626"/><ellipse cx="709.4" cy="458.5" rx="1.8" ry="2.0" fill="#9cbf70"/><ellipse cx="724.2" cy="427.7" rx="2.4" ry="2.5" fill="#86ab5a"/><ellipse cx="739.0" cy="458.5" rx="2.8" ry="1.0" fill="#3e5c2a"/><ellipse cx="729.1" cy="457.8" rx="2.4" ry="2.0" fill="#4f7236"/><ellipse cx="710.7" cy="460.6" rx="2.4" ry="2.4" fill="#96b868"/><ellipse cx="719.0" cy="471.2" rx="1.3" ry="1.8" fill="#587f3a"/><ellipse cx="732.3" cy="464.7" rx="1.6" ry="1.6" fill="#4f7236"/><ellipse cx="707.6" cy="462.0" rx="1.7" ry="1.8" fill="#6f9a48"/><ellipse cx="740.7" cy="452.6" rx="2.1" ry="2.1" fill="#4f7236"/><ellipse cx="724.9" cy="463.8" rx="2.0" ry="2.3" fill="#3e5c2a"/><ellipse cx="712.6" cy="444.7" rx="2.2" ry="1.8" fill="#9cbf70"/><ellipse cx="717.5" cy="432.7" rx="2.3" ry="2.4" fill="#9cbf70"/><ellipse cx="715.6" cy="450.2" rx="2.4" ry="1.3" fill="#6f9a48"/><ellipse cx="718.7" cy="450.9" rx="2.5" ry="1.1" fill="#86ab5a"/><ellipse cx="721.4" cy="450.5" rx="1.2" ry="1.1" fill="#527636"/><ellipse cx="716.3" cy="436.5" rx="1.2" ry="2.5" fill="#9cbf70"/><ellipse cx="711.7" cy="454.1" rx="1.6" ry="1.3" fill="#6f9a48"/><ellipse cx="735.9" cy="450.5" rx="2.2" ry="1.8" fill="#587f3a"/><ellipse cx="726.7" cy="430.8" rx="2.5" ry="1.6" fill="#9cbf70"/><ellipse cx="733.1" cy="442.5" rx="2.3" ry="2.6" fill="#96b868"/><ellipse cx="728.4" cy="444.3" rx="2.8" ry="2.2" fill="#4a6c30"/><ellipse cx="712.7" cy="465.7" rx="1.6" ry="2.0" fill="#6a9444"/><ellipse cx="726.7" cy="460.5" rx="1.2" ry="1.2" fill="#3e5c2a"/><ellipse cx="728.7" cy="460.1" rx="3.2" ry="2.5" fill="#3e5c2a"/><ellipse cx="738.3" cy="460.8" rx="2.5" ry="2.1" fill="#3e5c2a"/><ellipse cx="718.9" cy="445.0" rx="3.2" ry="2.1" fill="#9cbf70"/><ellipse cx="725.9" cy="451.9" rx="2.5" ry="2.0" fill="#3a5626"/><ellipse cx="737.5" cy="445.0" rx="2.1" ry="1.5" fill="#96b868"/><ellipse cx="729.2" cy="453.4" rx="1.9" ry="2.3" fill="#4a6c30"/><ellipse cx="718.3" cy="454.9" rx="2.4" ry="1.4" fill="#7fa452"/><ellipse cx="726.4" cy="454.1" rx="2.0" ry="1.5" fill="#6a9444"/><ellipse cx="725.7" cy="464.0" rx="2.0" ry="1.5" fill="#3e5c2a"/><ellipse cx="718.1" cy="454.7" rx="1.7" ry="2.0" fill="#5a8238"/><ellipse cx="713.3" cy="469.5" rx="2.7" ry="2.3" fill="#96b868"/><ellipse cx="722.7" cy="453.5" rx="1.5" ry="2.1" fill="#5a8238"/><ellipse cx="724.0" cy="475.2" rx="2.9" ry="1.0" fill="#4f7236"/><ellipse cx="717.9" cy="430.8" rx="2.7" ry="1.8" fill="#9cbf70"/><ellipse cx="717.5" cy="452.5" rx="1.6" ry="1.5" fill="#6f9a48"/><ellipse cx="717.0" cy="451.4" rx="2.1" ry="2.4" fill="#6f9a48"/><ellipse cx="724.7" cy="460.4" rx="2.4" ry="1.8" fill="#3e5c2a"/><ellipse cx="734.6" cy="452.5" rx="1.3" ry="1.2" fill="#587f3a"/><ellipse cx="721.8" cy="434.2" rx="2.0" ry="1.0" fill="#9cbf70"/><ellipse cx="714.2" cy="435.5" rx="1.6" ry="2.0" fill="#86ab5a"/><ellipse cx="714.3" cy="462.6" rx="2.8" ry="1.9" fill="#6a9444"/><ellipse cx="728.8" cy="429.8" rx="2.2" ry="1.3" fill="#86ab5a"/><ellipse cx="723.5" cy="432.6" rx="1.5" ry="2.0" fill="#86ab5a"/><ellipse cx="711.2" cy="466.7" rx="2.2" ry="1.1" fill="#96b868"/><ellipse cx="731.2" cy="475.7" rx="2.0" ry="2.3" fill="#4f7236"/><ellipse cx="723.3" cy="476.1" rx="1.6" ry="1.2" fill="#4f7236"/><ellipse cx="724.5" cy="444.9" rx="2.0" ry="2.3" fill="#9cbf70"/><ellipse cx="716.0" cy="466.9" rx="2.9" ry="2.1" fill="#527636"/><ellipse cx="716.7" cy="464.0" rx="1.8" ry="1.5" fill="#96b868"/><ellipse cx="716.3" cy="474.0" rx="2.6" ry="1.9" fill="#587f3a"/><ellipse cx="715.4" cy="467.9" rx="3.2" ry="1.2" fill="#6a9444"/><ellipse cx="709.5" cy="450.9" rx="2.9" ry="1.7" fill="#9cbf70"/><ellipse cx="725.3" cy="468.7" rx="1.9" ry="2.0" fill="#3e5c2a"/><ellipse cx="718.4" cy="441.3" rx="1.8" ry="1.7" fill="#9cbf70"/><ellipse cx="740.0" cy="457.4" rx="3.0" ry="2.4" fill="#587f3a"/><ellipse cx="725.1" cy="460.9" rx="2.3" ry="1.9" fill="#3e5c2a"/><ellipse cx="728.4" cy="461.2" rx="2.4" ry="1.4" fill="#4f7236"/><ellipse cx="733.2" cy="430.6" rx="2.2" ry="1.1" fill="#9cbf70"/><ellipse cx="719.3" cy="436.6" rx="2.1" ry="2.2" fill="#9cbf70"/><ellipse cx="715.9" cy="450.9" rx="1.3" ry="2.5" fill="#9cbf70"/><ellipse cx="717.1" cy="471.2" rx="1.9" ry="1.7" fill="#587f3a"/><ellipse cx="739.5" cy="446.9" rx="2.8" ry="2.4" fill="#4f7236"/><ellipse cx="739.4" cy="448.6" rx="1.8" ry="1.6" fill="#3e5c2a"/><ellipse cx="713.8" cy="448.8" rx="1.2" ry="1.9" fill="#86ab5a"/><ellipse cx="724.9" cy="440.1" rx="1.7" ry="1.7" fill="#9cbf70"/><ellipse cx="716.9" cy="442.4" rx="3.1" ry="1.1" fill="#9cbf70"/><ellipse cx="720.5" cy="440.9" rx="2.1" ry="2.5" fill="#6f9a48"/><ellipse cx="729.1" cy="455.3" rx="1.6" ry="1.3" fill="#4a6c30"/><ellipse cx="709.9" cy="467.3" rx="3.1" ry="2.4" fill="#4a6c30"/><ellipse cx="711.9" cy="467.2" rx="3.0" ry="2.3" fill="#96b868"/><ellipse cx="732.9" cy="470.9" rx="1.4" ry="1.5" fill="#3e5c2a"/><ellipse cx="730.1" cy="430.1" rx="2.6" ry="2.0" fill="#9cbf70"/><ellipse cx="726.8" cy="472.0" rx="2.1" ry="1.1" fill="#4f7236"/><ellipse cx="724.2" cy="452.3" rx="1.8" ry="2.5" fill="#96b868"/><ellipse cx="717.0" cy="450.9" rx="2.3" ry="2.2" fill="#6f9a48"/><ellipse cx="726.1" cy="458.5" rx="1.9" ry="2.4" fill="#96b868"/><ellipse cx="724.4" cy="450.1" rx="1.3" ry="1.3" fill="#7fa452"/><ellipse cx="737.2" cy="453.3" rx="2.1" ry="1.2" fill="#4f7236"/><ellipse cx="714.8" cy="472.0" rx="2.4" ry="2.4" fill="#587f3a"/><ellipse cx="709.9" cy="454.1" rx="1.2" ry="2.6" fill="#6f9a48"/><ellipse cx="735.8" cy="447.5" rx="1.4" ry="1.4" fill="#5a8238"/><ellipse cx="732.0" cy="524.0" rx="13.6" ry="23.8" fill="#4f7232" /><ellipse cx="736.4" cy="529.0" rx="1.6" ry="1.1" fill="#587f3a"/><ellipse cx="740.1" cy="512.6" rx="3.0" ry="1.4" fill="#527636"/><ellipse cx="728.6" cy="512.7" rx="2.6" ry="1.2" fill="#9cbf70"/><ellipse cx="729.4" cy="523.8" rx="1.7" ry="1.1" fill="#96b868"/><ellipse cx="732.3" cy="540.5" rx="1.2" ry="2.2" fill="#4f7236"/><ellipse cx="741.7" cy="506.5" rx="1.3" ry="1.0" fill="#86ab5a"/><ellipse cx="726.1" cy="538.7" rx="2.9" ry="1.8" fill="#3e5c2a"/><ellipse cx="724.2" cy="540.7" rx="2.4" ry="1.1" fill="#587f3a"/><ellipse cx="720.0" cy="527.1" rx="3.2" ry="1.5" fill="#6f9a48"/><ellipse cx="722.6" cy="522.7" rx="1.5" ry="2.4" fill="#6f9a48"/><ellipse cx="724.3" cy="533.9" rx="2.5" ry="2.5" fill="#527636"/><ellipse cx="717.4" cy="535.5" rx="2.9" ry="1.4" fill="#96b868"/><ellipse cx="737.8" cy="548.2" rx="1.6" ry="1.4" fill="#3e5c2a"/><ellipse cx="725.8" cy="533.6" rx="2.6" ry="2.5" fill="#527636"/><ellipse cx="735.2" cy="508.8" rx="1.7" ry="1.7" fill="#86ab5a"/><ellipse cx="734.5" cy="514.3" rx="2.0" ry="1.3" fill="#9cbf70"/><ellipse cx="737.9" cy="547.0" rx="2.1" ry="2.0" fill="#3e5c2a"/><ellipse cx="740.7" cy="526.0" rx="1.7" ry="1.4" fill="#3e5c2a"/><ellipse cx="742.2" cy="530.8" rx="2.4" ry="1.5" fill="#3e5c2a"/><ellipse cx="720.9" cy="516.1" rx="2.7" ry="1.8" fill="#9cbf70"/><ellipse cx="728.5" cy="523.4" rx="2.0" ry="2.6" fill="#96b868"/><ellipse cx="723.5" cy="522.4" rx="2.3" ry="1.9" fill="#86ab5a"/><ellipse cx="728.8" cy="517.1" rx="2.8" ry="2.3" fill="#86ab5a"/><ellipse cx="733.3" cy="540.6" rx="2.4" ry="1.7" fill="#4f7236"/><ellipse cx="735.3" cy="545.6" rx="2.9" ry="1.7" fill="#4f7236"/><ellipse cx="734.0" cy="535.0" rx="1.7" ry="1.2" fill="#4f7236"/><ellipse cx="728.9" cy="515.7" rx="1.2" ry="1.8" fill="#86ab5a"/><ellipse cx="741.6" cy="529.9" rx="1.8" ry="2.4" fill="#3e5c2a"/><ellipse cx="739.3" cy="543.3" rx="3.1" ry="1.6" fill="#587f3a"/><ellipse cx="726.0" cy="521.8" rx="2.5" ry="1.6" fill="#86ab5a"/><ellipse cx="733.0" cy="532.9" rx="2.1" ry="1.7" fill="#4f7236"/><ellipse cx="724.8" cy="531.3" rx="2.9" ry="1.5" fill="#4a6c30"/><ellipse cx="719.5" cy="510.8" rx="2.1" ry="1.9" fill="#6f9a48"/><ellipse cx="720.1" cy="524.1" rx="2.5" ry="1.9" fill="#6f9a48"/><ellipse cx="726.7" cy="503.1" rx="2.1" ry="2.3" fill="#86ab5a"/><ellipse cx="738.1" cy="536.2" rx="1.9" ry="2.4" fill="#3e5c2a"/><ellipse cx="736.7" cy="514.5" rx="1.2" ry="2.3" fill="#9cbf70"/><ellipse cx="728.9" cy="521.7" rx="1.3" ry="2.6" fill="#9cbf70"/><ellipse cx="732.3" cy="506.9" rx="1.4" ry="1.7" fill="#86ab5a"/><ellipse cx="732.4" cy="504.4" rx="2.5" ry="1.2" fill="#9cbf70"/><ellipse cx="728.3" cy="524.3" rx="1.6" ry="1.2" fill="#7fa452"/><ellipse cx="731.4" cy="498.3" rx="1.8" ry="2.2" fill="#6f9a48"/><ellipse cx="718.3" cy="520.2" rx="2.9" ry="1.9" fill="#6f9a48"/><ellipse cx="742.5" cy="522.7" rx="1.6" ry="2.5" fill="#4f7236"/><ellipse cx="738.4" cy="537.7" rx="2.0" ry="2.0" fill="#587f3a"/><ellipse cx="727.0" cy="549.9" rx="2.2" ry="1.1" fill="#3e5c2a"/><ellipse cx="726.2" cy="527.5" rx="2.3" ry="1.7" fill="#3a5626"/><ellipse cx="736.0" cy="505.8" rx="1.6" ry="2.1" fill="#9cbf70"/><ellipse cx="734.2" cy="545.6" rx="1.9" ry="2.0" fill="#4f7236"/><ellipse cx="721.4" cy="507.2" rx="1.5" ry="2.1" fill="#6f9a48"/><ellipse cx="738.7" cy="527.7" rx="2.4" ry="1.1" fill="#3e5c2a"/><ellipse cx="726.3" cy="498.5" rx="1.3" ry="2.5" fill="#86ab5a"/><ellipse cx="725.5" cy="508.5" rx="1.4" ry="2.1" fill="#6f9a48"/><ellipse cx="725.1" cy="535.1" rx="2.3" ry="2.0" fill="#96b868"/><ellipse cx="735.8" cy="531.2" rx="1.8" ry="2.0" fill="#587f3a"/><ellipse cx="737.5" cy="513.4" rx="2.1" ry="1.8" fill="#9cbf70"/><ellipse cx="737.1" cy="504.0" rx="2.9" ry="1.1" fill="#9cbf70"/><ellipse cx="739.9" cy="521.2" rx="1.4" ry="1.8" fill="#5a8238"/><ellipse cx="743.4" cy="507.9" rx="2.9" ry="1.3" fill="#6a9444"/><ellipse cx="721.4" cy="511.5" rx="1.3" ry="2.3" fill="#9cbf70"/><ellipse cx="726.3" cy="516.1" rx="1.2" ry="2.6" fill="#9cbf70"/><ellipse cx="738.9" cy="549.1" rx="2.9" ry="1.8" fill="#4f7236"/><ellipse cx="727.1" cy="515.6" rx="3.2" ry="2.5" fill="#86ab5a"/><ellipse cx="722.9" cy="504.5" rx="1.8" ry="2.1" fill="#86ab5a"/><ellipse cx="719.6" cy="514.3" rx="3.0" ry="2.5" fill="#6f9a48"/><ellipse cx="729.9" cy="517.2" rx="1.9" ry="1.2" fill="#6f9a48"/><ellipse cx="729.1" cy="503.4" rx="1.7" ry="2.5" fill="#9cbf70"/><ellipse cx="736.2" cy="516.5" rx="3.1" ry="2.4" fill="#527636"/><ellipse cx="731.7" cy="536.3" rx="2.7" ry="2.2" fill="#587f3a"/><ellipse cx="732.4" cy="539.0" rx="3.1" ry="1.1" fill="#587f3a"/><ellipse cx="737.4" cy="544.3" rx="2.9" ry="2.4" fill="#4f7236"/><ellipse cx="734.0" cy="526.5" rx="2.7" ry="2.1" fill="#3a5626"/><ellipse cx="734.8" cy="497.4" rx="1.6" ry="1.4" fill="#86ab5a"/><ellipse cx="729.0" cy="550.0" rx="2.1" ry="1.5" fill="#587f3a"/><ellipse cx="737.2" cy="508.7" rx="2.0" ry="1.3" fill="#86ab5a"/><ellipse cx="727.6" cy="514.6" rx="2.1" ry="2.5" fill="#9cbf70"/><ellipse cx="733.2" cy="549.3" rx="2.2" ry="1.4" fill="#4f7236"/><ellipse cx="728.1" cy="515.7" rx="1.8" ry="2.1" fill="#86ab5a"/><ellipse cx="723.6" cy="520.4" rx="2.2" ry="2.4" fill="#6f9a48"/><ellipse cx="734.7" cy="550.4" rx="1.8" ry="1.8" fill="#587f3a"/><ellipse cx="732.4" cy="514.0" rx="1.2" ry="2.1" fill="#9cbf70"/><ellipse cx="742.3" cy="504.9" rx="2.1" ry="1.3" fill="#86ab5a"/><ellipse cx="733.1" cy="515.1" rx="3.0" ry="2.2" fill="#86ab5a"/><ellipse cx="743.2" cy="515.6" rx="2.2" ry="1.7" fill="#5a8238"/><ellipse cx="734.1" cy="515.1" rx="1.8" ry="2.1" fill="#9cbf70"/><ellipse cx="730.4" cy="526.1" rx="1.5" ry="1.1" fill="#5a8238"/><ellipse cx="724.4" cy="517.8" rx="1.6" ry="2.1" fill="#86ab5a"/><ellipse cx="719.2" cy="535.5" rx="2.0" ry="1.5" fill="#4a6c30"/><ellipse cx="732.2" cy="537.9" rx="2.0" ry="2.4" fill="#3e5c2a"/><ellipse cx="738.2" cy="531.4" rx="2.5" ry="1.2" fill="#587f3a"/><ellipse cx="727.7" cy="498.4" rx="1.3" ry="1.6" fill="#9cbf70"/><ellipse cx="730.4" cy="519.5" rx="2.6" ry="2.1" fill="#9cbf70"/><ellipse cx="731.7" cy="534.4" rx="2.2" ry="2.3" fill="#587f3a"/><ellipse cx="725.6" cy="506.1" rx="1.5" ry="2.2" fill="#6f9a48"/><ellipse cx="729.2" cy="536.4" rx="2.6" ry="2.2" fill="#4f7236"/><ellipse cx="744.5" cy="526.3" rx="2.9" ry="2.2" fill="#4f7236"/><ellipse cx="741.8" cy="517.5" rx="1.5" ry="1.5" fill="#4a6c30"/><ellipse cx="722.1" cy="533.2" rx="1.9" ry="2.2" fill="#5a8238"/><ellipse cx="742.9" cy="520.8" rx="1.4" ry="2.3" fill="#5a8238"/><ellipse cx="724.9" cy="528.7" rx="1.7" ry="1.5" fill="#6a9444"/><ellipse cx="737.7" cy="534.8" rx="1.4" ry="1.2" fill="#3e5c2a"/><ellipse cx="737.3" cy="525.2" rx="3.0" ry="1.3" fill="#527636"/><ellipse cx="735.3" cy="537.2" rx="2.5" ry="2.3" fill="#4f7236"/><ellipse cx="726.9" cy="525.3" rx="1.6" ry="1.1" fill="#4a6c30"/><ellipse cx="737.7" cy="506.5" rx="2.7" ry="2.4" fill="#86ab5a"/><ellipse cx="743.0" cy="540.0" rx="3.0" ry="2.4" fill="#4f7236"/><ellipse cx="736.1" cy="541.7" rx="3.0" ry="1.5" fill="#587f3a"/><ellipse cx="731.7" cy="549.1" rx="2.2" ry="1.0" fill="#587f3a"/><ellipse cx="729.2" cy="541.8" rx="1.7" ry="1.2" fill="#587f3a"/><ellipse cx="744.5" cy="537.2" rx="2.3" ry="2.2" fill="#587f3a"/><ellipse cx="727.9" cy="499.6" rx="2.3" ry="2.0" fill="#86ab5a"/><ellipse cx="743.7" cy="535.1" rx="1.7" ry="1.0" fill="#587f3a"/><ellipse cx="738.0" cy="529.9" rx="2.3" ry="1.8" fill="#587f3a"/><ellipse cx="725.0" cy="526.4" rx="1.4" ry="2.1" fill="#4a6c30"/><ellipse cx="719.6" cy="528.5" rx="2.7" ry="1.5" fill="#86ab5a"/><ellipse cx="720.6" cy="531.1" rx="2.5" ry="2.3" fill="#5a8238"/><ellipse cx="730.7" cy="502.0" rx="2.3" ry="1.6" fill="#6f9a48"/><ellipse cx="733.0" cy="500.0" rx="3.1" ry="1.3" fill="#9cbf70"/><ellipse cx="719.6" cy="529.6" rx="1.4" ry="2.3" fill="#6f9a48"/><ellipse cx="723.3" cy="533.0" rx="2.4" ry="1.8" fill="#527636"/></g></svg></div>
<div class="a" style="left:16px;top:16px;width:32px;height:130px;background:#2c2c2c;border-radius:6px;box-shadow:0 2px 10px rgba(0,0,0,0.35)"></div>
<div class="a" style="left:20px;top:44px;width:24px;height:1px;background:#3c3c3c;border-radius:0px;"></div>
<div class="a" style="left:20px;top:69px;width:24px;height:1px;background:#3c3c3c;border-radius:0px;"></div>
<div class="a" style="left:20px;top:94px;width:24px;height:1px;background:#3c3c3c;border-radius:0px;"></div>
<div class="a" style="left:20px;top:119px;width:24px;height:1px;background:#3c3c3c;border-radius:0px;"></div>
<svg class="a" style="left:20px;top:17px" width="24" height="130" viewBox="0 0 24 130"><g fill="none" stroke="#e6e6e6" stroke-width="1.3" stroke-linecap="round" stroke-linejoin="round">
<path d="M12 10v12M6 16h12M10.3 11.7L12 10l1.7 1.7M10.3 20.3L12 22l1.7-1.7M7.7 14.3L6 16l1.7 1.7M16.3 14.3L18 16l-1.7 1.7"/>
<path d="M12 36.5l2.8 1.6v3.2L12 42.9l-2.8-1.6v-3.2zM9.2 38.1l2.8 1.6 2.8-1.6M12 39.7v3.2M9 42c-1.6.5-2.5 1.1-2.5 1.8 0 1.3 2.5 2.2 5.5 2.2s5.5-.9 5.5-2.2c0-.7-.9-1.3-2.5-1.8"/>
<path d="M7 63.8V60.8h3M14 60.8h3v3M17 67.6v3h-3M10 70.6H7v-3M13.2 64.6l3.3-3.3M10.8 66.8l-3.3 3.3M14.2 61.3h2.3v2.3M9.8 69.6H7.5v-2.3"/>
<path d="M9.5 86.5V85a1 1 0 0 1 1-1h5.5a1 1 0 0 1 1 1v5.5a1 1 0 0 1-1 1h-1.5M8 86.5h5.5a1 1 0 0 1 1 1V93a1 1 0 0 1-1 1H8a1 1 0 0 1-1-1v-5.5a1 1 0 0 1 1-1zM9 90.2h3.5M10.7 88.5v3.5"/>
<circle cx="12" cy="114.6" r="4.6"/><path d="M12 110V108.6M16.6 114.6H18M12 119.2v1.4M7.4 114.6H6"/><circle cx="12" cy="114.6" r="1.9" fill="#e6e6e6"/>
</g></svg>
<div class="t" style="left:952px;top:554px;font-size:12px;color:#eee;">组件编辑</div>
<div class="t" style="left:952px;top:578px;font-size:12px;color:#eee;">模型升版</div>
<div class="t" style="left:952px;top:602px;font-size:12px;color:#eee;">组件替换</div>
<div class="a" style="left:747px;top:226px;width:118px;height:524px;background:#1e1e1e;border-radius:5px;box-shadow:0 4px 14px rgba(0,0,0,0.4)"></div>
<div class="a" style="left:751px;top:230px;width:110px;height:32px;background:#2e2e2e;border-radius:4px;"></div>
<div class="t" style="left:761px;top:239px;font-size:14px;color:#e6e6e6;">显示全部</div>
<div class="t" style="left:761px;top:271px;font-size:14px;color:#e6e6e6;">隐藏</div>
<div class="t" style="left:761px;top:303px;font-size:14px;color:#e6e6e6;">隔离展示</div>
<div class="t" style="left:761px;top:335px;font-size:14px;color:#e6e6e6;">删除节点</div>
<div class="t" style="left:761px;top:367px;font-size:14px;color:#e6e6e6;">选择同类型</div>
<div class="t" style="left:761px;top:399px;font-size:14px;color:#e6e6e6;">全选同级</div>
<div class="t" style="left:761px;top:431px;font-size:14px;color:#e6e6e6;">全选子级</div>
<div class="t" style="left:761px;top:465px;font-size:14px;color:#e6e6e6;">删除图元名称</div>
<div class="t" style="left:761px;top:497px;font-size:14px;color:#e6e6e6;">重命名</div>
<div class="t" style="left:761px;top:529px;font-size:14px;color:#e6e6e6;">复制</div>
<div class="t" style="left:761px;top:561px;font-size:14px;color:#e6e6e6;">节点成组</div>
<div class="t" style="left:761px;top:594px;font-size:14px;color:#e6e6e6;">组件编辑</div>
<div class="t" style="left:761px;top:626px;font-size:14px;color:#e6e6e6;">组件替换</div>
<div class="t" style="left:761px;top:658px;font-size:14px;color:#e6e6e6;">模型升级</div>
<div class="t" style="left:761px;top:691px;font-size:14px;color:#e6e6e6;">模型数据导入</div>
<div class="t" style="left:761px;top:723px;font-size:14px;color:#e6e6e6;">导出模型文件</div>
<svg class="a" style="left:847px;top:272px" width="6" height="10" viewBox="0 0 6 10"><path d="M1 1l4 4-4 4" fill="none" stroke="#999" stroke-width="1.1"/></svg>
<svg class="a" style="left:847px;top:368px" width="6" height="10" viewBox="0 0 6 10"><path d="M1 1l4 4-4 4" fill="none" stroke="#999" stroke-width="1.1"/></svg>
<div class="a" style="left:751px;top:454px;width:110px;height:1px;background:#333;border-radius:0px;"></div>
<div class="a" style="left:751px;top:583px;width:110px;height:1px;background:#333;border-radius:0px;"></div>
<div class="a" style="left:751px;top:680px;width:110px;height:1px;background:#333;border-radius:0px;"></div></div>
<div id="right" class="a"><div class="a" style="left:0px;top:0px;width:288px;height:72px;background:#2a2a2a;border-radius:0px;"></div>
<div class="a" style="left:0px;top:39px;width:288px;height:1px;background:#3a3a3a;border-radius:0px;"></div>
<div class="t" style="left:16px;top:13px;font-size:14px;color:#999;">模型</div>
<div class="t" style="left:68px;top:13px;font-size:14px;color:#f0f0f0;font-weight:bold">动画</div>
<div class="t" style="left:120px;top:13px;font-size:14px;color:#999;">属性</div>
<div class="t" style="left:172px;top:13px;font-size:14px;color:#999;">POI</div>
<div class="t" style="left:44px;top:49px;font-size:14px;color:#ccc;">模型视图</div>
<div id="thumb" class="a" style="left:0;top:0;width:288px;height:224px;overflow:hidden"><svg class="a" style="left:0;top:0" width="288" height="300" viewBox="0 0 288 300"><use href="#mg" transform="translate(-2.8,63.5) scale(0.2184)"/></svg></div>
<div class="a" style="left:0px;top:224px;width:288px;height:32px;background:#2a2a2a;border-radius:0px;"></div>
<svg class="a" style="left:11px;top:236px" width="12" height="7" viewBox="0 0 12 7"><path d="M0.8 0.8L6 6l5.2-5.2" fill="none" stroke="#ddd" stroke-width="1.3"/></svg>
<div class="t" style="left:44px;top:233px;font-size:14px;color:#ccc;">模型信息</div>
<div class="t" style="left:17px;top:282px;font-size:12px;color:#ccc;"><span style="color:#f02828;font-size:10px;position:relative;top:1.5px;margin-right:1.5px">*</span>名称</div>
<div class="a" style="left:55px;top:272px;width:197px;height:32px;background:#333;border-radius:4px;"></div>
<div class="t" style="left:68px;top:281px;font-size:14px;color:#e6e6e6;">jigui003</div>
<div class="t" style="left:17px;top:329px;font-size:12px;color:#ccc;"><span style="color:#f02828;font-size:10px;position:relative;top:1.5px;margin-right:1.5px">*</span>编码</div>
<div class="a" style="left:55px;top:320px;width:197px;height:32px;background:#333;border-radius:4px;"></div>
<div class="t" style="left:16px;top:372px;font-size:12px;color:#ccc;">类型</div>
<div class="a" style="left:48px;top:369px;width:44px;height:20px;background:transparent;border-radius:2px;border:1px solid #1fc6b0"></div>
<div class="t" style="left:58px;top:373px;font-size:12px;color:#1fc6b0;">模型</div>
<div class="t" style="left:16px;top:416px;font-size:12px;color:#ccc;">位置</div>
<div class="a" style="left:48px;top:406px;width:63px;height:32px;background:#333;border-radius:4px;"></div>
<div class="t" style="left:60px;top:415px;font-size:14px;color:#e0e0e0;">40</div>
<div class="t" style="left:95px;top:415px;font-size:14px;color:#888;">X</div>
<div class="a" style="left:119px;top:406px;width:63px;height:32px;background:#333;border-radius:4px;"></div>
<div class="t" style="left:131px;top:415px;font-size:14px;color:#e0e0e0;">40</div>
<div class="t" style="left:166px;top:415px;font-size:14px;color:#888;">Y</div>
<div class="a" style="left:189px;top:406px;width:63px;height:32px;background:#333;border-radius:4px;"></div>
<div class="t" style="left:201px;top:415px;font-size:14px;color:#e0e0e0;">40</div>
<div class="t" style="left:236px;top:415px;font-size:14px;color:#888;">Z</div>
<div class="t" style="left:16px;top:464px;font-size:12px;color:#ccc;">旋转</div>
<div class="a" style="left:48px;top:454px;width:63px;height:32px;background:#333;border-radius:4px;"></div>
<div class="t" style="left:60px;top:463px;font-size:14px;color:#e0e0e0;">40</div>
<div class="t" style="left:95px;top:463px;font-size:14px;color:#888;">X</div>
<div class="a" style="left:119px;top:454px;width:63px;height:32px;background:#333;border-radius:4px;"></div>
<div class="t" style="left:131px;top:463px;font-size:14px;color:#e0e0e0;">40</div>
<div class="t" style="left:166px;top:463px;font-size:14px;color:#888;">Y</div>
<div class="a" style="left:189px;top:454px;width:63px;height:32px;background:#333;border-radius:4px;"></div>
<div class="t" style="left:201px;top:463px;font-size:14px;color:#e0e0e0;">40</div>
<div class="t" style="left:236px;top:463px;font-size:14px;color:#888;">Z</div>
<div class="t" style="left:16px;top:512px;font-size:12px;color:#ccc;">缩放</div>
<div class="a" style="left:48px;top:502px;width:63px;height:32px;background:#333;border-radius:4px;"></div>
<div class="t" style="left:60px;top:511px;font-size:14px;color:#e0e0e0;">40</div>
<div class="t" style="left:95px;top:511px;font-size:14px;color:#888;">X</div>
<div class="a" style="left:119px;top:502px;width:63px;height:32px;background:#333;border-radius:4px;"></div>
<div class="t" style="left:131px;top:511px;font-size:14px;color:#e0e0e0;">40</div>
<div class="t" style="left:166px;top:511px;font-size:14px;color:#888;">Y</div>
<div class="a" style="left:189px;top:502px;width:63px;height:32px;background:#333;border-radius:4px;"></div>
<div class="t" style="left:201px;top:511px;font-size:14px;color:#e0e0e0;">40</div>
<div class="t" style="left:236px;top:511px;font-size:14px;color:#888;">Z</div>
<div class="t" style="left:16px;top:559px;font-size:12px;color:#ccc;">尺寸</div>
<div class="a" style="left:48px;top:549px;width:63px;height:32px;background:#333;border-radius:4px;"></div>
<div class="t" style="left:60px;top:558px;font-size:14px;color:#e0e0e0;">40</div>
<div class="t" style="left:95px;top:558px;font-size:14px;color:#888;">X</div>
<div class="a" style="left:119px;top:549px;width:63px;height:32px;background:#333;border-radius:4px;"></div>
<div class="t" style="left:131px;top:558px;font-size:14px;color:#e0e0e0;">40</div>
<div class="t" style="left:166px;top:558px;font-size:14px;color:#888;">Y</div>
<div class="a" style="left:189px;top:549px;width:63px;height:32px;background:#333;border-radius:4px;"></div>
<div class="t" style="left:201px;top:558px;font-size:14px;color:#e0e0e0;">40</div>
<div class="t" style="left:236px;top:558px;font-size:14px;color:#888;">Z</div>
<div class="a" style="left:261px;top:502px;width:20px;height:32px;background:#333;border-radius:3px;"></div>
<svg class="a" style="left:266px;top:509px" width="10" height="18" viewBox="0 0 10 18"><g fill="none" stroke="#ddd" stroke-width="1.4"><path d="M2 7V4a3 3 0 0 1 6 0v3M2 11v3a3 3 0 0 0 6 0v-3"/></g></svg>
<div class="t" style="left:17px;top:597px;font-size:12px;color:#aaa;">模型资源</div><div class="t" style="left:66px;top:597px;font-size:12px;color:#aaa;">:</div><div class="t" style="left:76px;top:597px;font-size:12px;color:#e6e6e6;">构件/模型资源名称.zip</div><div class="t" style="left:204px;top:597px;font-size:12px;color:#3e6ff0;">下载</div>
<div class="a" style="left:16px;top:623px;width:85px;height:24px;background:#333;border-radius:3px;"></div>
<div class="t" style="left:34px;top:628px;font-size:12px;color:#ddd;">组件编辑</div>
<div class="a" style="left:106px;top:623px;width:85px;height:24px;background:#333;border-radius:3px;"></div>
<div class="t" style="left:124px;top:628px;font-size:12px;color:#ddd;">组件替换</div>
<div class="a" style="left:196px;top:623px;width:85px;height:24px;background:#333;border-radius:3px;"></div>
<div class="t" style="left:214px;top:628px;font-size:12px;color:#ddd;">模型升版</div>
<div class="a" style="left:0px;top:670px;width:288px;height:33px;background:#2a2a2a;border-radius:0px;"></div>
<svg class="a" style="left:11px;top:684px" width="12" height="7" viewBox="0 0 12 7"><path d="M0.8 0.8L6 6l5.2-5.2" fill="none" stroke="#ddd" stroke-width="1.3"/></svg>
<div class="t" style="left:44px;top:680px;font-size:14px;color:#ccc;">模型视角</div>
<svg class="a" style="left:264px;top:679px" width="16" height="16" viewBox="0 0 16 16"><path d="M8 1v14M1 8h14" stroke="#eee" stroke-width="1.6"/></svg>
<div class="a" style="left:9px;top:714px;width:272px;height:32px;background:#333;border-radius:4px;"></div>
<svg class="a" style="left:17px;top:722px" width="16" height="17" viewBox="0 0 16 17"><g fill="none" stroke="#aaa" stroke-width="1"><path d="M8 1l6.5 3.75v7.5L8 16 1.5 12.25v-7.5z"/><path d="M4.5 8.5c1-1.5 2.2-2.2 3.5-2.2s2.5.7 3.5 2.2c-1 1.5-2.2 2.2-3.5 2.2s-2.5-.7-3.5-2.2z"/><circle cx="8" cy="8.5" r="1"/></g></svg>
<div class="t" style="left:37px;top:724px;font-size:12px;color:#ddd;">模型视角1</div>
<svg class="a" style="left:198px;top:723px" width="70" height="14" viewBox="0 0 70 14"><g fill="#8e8e8e"><circle cx="7" cy="7" r="6"/><path d="M5.6 4.6l3.6 2.4-3.6 2.4z" fill="#333"/><path d="M30.6 1h7l2.4 2.4V13h-9.4a.6.6 0 0 1-.6-.6V1.6a.6.6 0 0 1 .6-.6z"/><rect x="32.2" y="7.2" width="5.6" height="5.8" fill="#2e2e2e"/><rect x="33.2" y="8.5" width="3.6" height="4.5" fill="#8e8e8e"/></g><g fill="none" stroke="#8e8e8e" stroke-width="1.1"><path d="M58.2 3.6h9.6M61.6 3.4V2.2h2.8v1.2M59.2 4.2l.6 8.4h6.4l.6-8.4M61.8 6.2v4.5M64.2 6.2v4.5"/></g></svg>
<div class="a" style="left:9px;top:754px;width:272px;height:32px;background:#333;border-radius:4px;"></div>
<svg class="a" style="left:17px;top:762px" width="16" height="17" viewBox="0 0 16 17"><g fill="none" stroke="#aaa" stroke-width="1"><path d="M8 1l6.5 3.75v7.5L8 16 1.5 12.25v-7.5z"/><path d="M4.5 8.5c1-1.5 2.2-2.2 3.5-2.2s2.5.7 3.5 2.2c-1 1.5-2.2 2.2-3.5 2.2s-2.5-.7-3.5-2.2z"/><circle cx="8" cy="8.5" r="1"/></g></svg>
<div class="t" style="left:37px;top:764px;font-size:12px;color:#ddd;">模型视角2</div>
<svg class="a" style="left:198px;top:763px" width="70" height="14" viewBox="0 0 70 14"><g fill="#8e8e8e"><circle cx="7" cy="7" r="6"/><path d="M5.6 4.6l3.6 2.4-3.6 2.4z" fill="#333"/><path d="M30.6 1h7l2.4 2.4V13h-9.4a.6.6 0 0 1-.6-.6V1.6a.6.6 0 0 1 .6-.6z"/><rect x="32.2" y="7.2" width="5.6" height="5.8" fill="#2e2e2e"/><rect x="33.2" y="8.5" width="3.6" height="4.5" fill="#8e8e8e"/></g><g fill="none" stroke="#8e8e8e" stroke-width="1.1"><path d="M58.2 3.6h9.6M61.6 3.4V2.2h2.8v1.2M59.2 4.2l.6 8.4h6.4l.6-8.4M61.8 6.2v4.5M64.2 6.2v4.5"/></g></svg>
<div class="a" style="left:9px;top:794px;width:272px;height:32px;background:#333;border-radius:4px;"></div>
<svg class="a" style="left:17px;top:802px" width="16" height="17" viewBox="0 0 16 17"><g fill="none" stroke="#aaa" stroke-width="1"><path d="M8 1l6.5 3.75v7.5L8 16 1.5 12.25v-7.5z"/><path d="M4.5 8.5c1-1.5 2.2-2.2 3.5-2.2s2.5.7 3.5 2.2c-1 1.5-2.2 2.2-3.5 2.2s-2.5-.7-3.5-2.2z"/><circle cx="8" cy="8.5" r="1"/></g></svg>
<div class="t" style="left:37px;top:804px;font-size:12px;color:#ddd;">模型视角3</div>
<svg class="a" style="left:198px;top:803px" width="70" height="14" viewBox="0 0 70 14"><g fill="#8e8e8e"><circle cx="7" cy="7" r="6"/><path d="M5.6 4.6l3.6 2.4-3.6 2.4z" fill="#333"/><path d="M30.6 1h7l2.4 2.4V13h-9.4a.6.6 0 0 1-.6-.6V1.6a.6.6 0 0 1 .6-.6z"/><rect x="32.2" y="7.2" width="5.6" height="5.8" fill="#2e2e2e"/><rect x="33.2" y="8.5" width="3.6" height="4.5" fill="#8e8e8e"/></g><g fill="none" stroke="#8e8e8e" stroke-width="1.1"><path d="M58.2 3.6h9.6M61.6 3.4V2.2h2.8v1.2M59.2 4.2l.6 8.4h6.4l.6-8.4M61.8 6.2v4.5M64.2 6.2v4.5"/></g></svg></div>
<div id="bottom" class="a"><div class="a" style="left:0px;top:0px;width:1344px;height:40px;background:#2a2a2a;border-radius:0px;"></div><div class="a" style="left:0;top:0;width:1344px;height:1px;background:#444"></div>
<div class="a" style="left:0px;top:40px;width:1344px;height:1px;background:#3a3a3a;border-radius:0px;"></div>
<div class="t" style="left:9px;top:15px;font-size:14px;color:#eee;font-weight:bold">资产清单</div>
<div class="a" style="left:1105px;top:9px;width:59px;height:24px;background:transparent;border-radius:3px;border:1px solid #4a4a4a"></div>
<svg class="a" style="left:1113px;top:14px" width="14" height="14" viewBox="0 0 14 14"><path d="M6 2H2.5a1 1 0 0 0-1 1v8.5a1 1 0 0 0 1 1H11a1 1 0 0 0 1-1V8M8 1.5h4.5V6M12.5 1.5L6.5 7.5" fill="none" stroke="#ddd" stroke-width="1.3"/></svg>
<div class="t" style="left:1133px;top:15px;font-size:12px;color:#ddd;">导出</div>
<div class="a" style="left:1175px;top:9px;width:59px;height:24px;background:transparent;border-radius:3px;border:1px solid #4a4a4a"></div>
<svg class="a" style="left:1183px;top:14px" width="14" height="14" viewBox="0 0 14 14"><path d="M6 2H2.5a1 1 0 0 0-1 1v8.5a1 1 0 0 0 1 1H11a1 1 0 0 0 1-1V8M5.5 4v4h4M12.5 1.5L5.5 8" fill="none" stroke="#ddd" stroke-width="1.3"/></svg>
<div class="t" style="left:1204px;top:15px;font-size:12px;color:#ddd;">导入</div>
<div class="a" style="left:1245px;top:9px;width:59px;height:24px;background:transparent;border-radius:3px;border:1px solid #4a4a4a"></div>
<svg class="a" style="left:1253px;top:14px" width="14" height="14" viewBox="0 0 14 14"><path d="M2.5 1.5h9a1 1 0 0 1 1 1v9a1 1 0 0 1-1 1h-9a1 1 0 0 1-1-1v-9a1 1 0 0 1 1-1zM4.5 1.5v4h5v-4" fill="none" stroke="#ddd" stroke-width="1.3"/></svg>
<div class="t" style="left:1275px;top:15px;font-size:12px;color:#ddd;">保存</div>
<div class="a" style="left:8px;top:49px;width:1328px;height:32px;background:#333;border-radius:4px;border-bottom-left-radius:0;border-bottom-right-radius:0"></div>
<div class="t" style="left:28px;top:62px;font-size:12px;color:#aaa;">#</div>
<div class="t" style="left:67px;top:62px;font-size:12px;color:#aaa;">ID</div>
<div class="t" style="left:177px;top:62px;font-size:12px;color:#aaa;">设备编码</div>
<div class="t" style="left:261px;top:62px;font-size:12px;color:#aaa;">名称</div>
<div class="t" style="left:320px;top:62px;font-size:12px;color:#aaa;">X轴坐标</div>
<div class="t" style="left:398px;top:62px;font-size:12px;color:#aaa;">Y轴坐标</div>
<div class="t" style="left:476px;top:62px;font-size:12px;color:#aaa;">Z轴坐标</div>
<div class="t" style="left:556px;top:62px;font-size:12px;color:#aaa;">X轴旋转</div>
<div class="t" style="left:634px;top:62px;font-size:12px;color:#aaa;">Y轴旋转</div>
<div class="t" style="left:712px;top:62px;font-size:12px;color:#aaa;">Z轴旋转</div>
<div class="t" style="left:791px;top:62px;font-size:12px;color:#aaa;">X轴大小</div>
<div class="t" style="left:870px;top:62px;font-size:12px;color:#aaa;">Y轴大小</div>
<div class="t" style="left:948px;top:62px;font-size:12px;color:#aaa;">Z轴大小</div>
<div class="t" style="left:1027px;top:62px;font-size:12px;color:#aaa;">X轴缩放</div>
<div class="t" style="left:1106px;top:62px;font-size:12px;color:#aaa;">Y轴缩放</div>
<div class="t" style="left:1184px;top:62px;font-size:12px;color:#aaa;">Z轴缩放</div>
<div class="t" style="left:1250px;top:62px;font-size:12px;color:#aaa;">显示</div>
<div class="t" style="left:1293px;top:62px;font-size:12px;color:#aaa;">操作</div>
<div class="a" style="left:8px;top:112px;width:1328px;height:1px;background:#333;border-radius:0px;"></div>
<div class="t" style="left:28px;top:93px;font-size:12px;color:#ccc;">1</div>
<div class="t" style="left:67px;top:93px;font-size:12px;color:#ccc;">520YJA4B752Z</div>
<div class="t" style="left:177px;top:93px;font-size:12px;color:#ccc;">8324820</div>
<div class="t" style="left:253px;top:92px;font-size:12px;color:#ccc;">三维大厦</div>
<div class="t" style="left:319px;top:93px;font-size:12px;color:#ccc;">-743829.22</div>
<div class="t" style="left:398px;top:93px;font-size:12px;color:#ccc;">535343</div>
<div class="t" style="left:476px;top:92px;font-size:12px;color:#ccc;">105</div>
<div class="t" style="left:557px;top:93px;font-size:12px;color:#ccc;">0</div>
<div class="t" style="left:635px;top:93px;font-size:12px;color:#ccc;">0</div>
<div class="t" style="left:713px;top:93px;font-size:12px;color:#ccc;">0</div>
<div class="t" style="left:792px;top:93px;font-size:12px;color:#ccc;">0</div>
<div class="t" style="left:871px;top:93px;font-size:12px;color:#ccc;">0</div>
<div class="t" style="left:949px;top:93px;font-size:12px;color:#ccc;">0</div>
<div class="t" style="left:1028px;top:93px;font-size:12px;color:#ccc;">0</div>
<div class="t" style="left:1107px;top:93px;font-size:12px;color:#ccc;">0</div>
<div class="t" style="left:1185px;top:93px;font-size:12px;color:#ccc;">0</div>
<div class="a" style="left:1255px;top:90px;width:14px;height:14px;background:#4a63e8;border-radius:2px;"></div>
<svg class="a" style="left:1255px;top:90px" width="14" height="14" viewBox="0 0 14 14"><path d="M3.2 7.2l2.5 2.5 5-5.2" fill="none" stroke="#fff" stroke-width="1.6"/></svg>
<div class="t" style="left:1293px;top:93px;font-size:12px;color:#ddd;">查看</div>
<div class="a" style="left:8px;top:144px;width:1328px;height:1px;background:#333;border-radius:0px;"></div>
<div class="t" style="left:28px;top:125px;font-size:12px;color:#ccc;">2</div>
<div class="t" style="left:67px;top:125px;font-size:12px;color:#ccc;">520YJA4B7512</div>
<div class="t" style="left:177px;top:125px;font-size:12px;color:#ccc;">8324820</div>
<div class="t" style="left:253px;top:124px;font-size:12px;color:#ccc;">三维大厦</div>
<div class="t" style="left:319px;top:125px;font-size:12px;color:#ccc;">-743829.22</div>
<div class="t" style="left:398px;top:125px;font-size:12px;color:#ccc;">535343</div>
<div class="t" style="left:476px;top:124px;font-size:12px;color:#ccc;">105</div>
<div class="t" style="left:557px;top:125px;font-size:12px;color:#ccc;">0</div>
<div class="t" style="left:635px;top:125px;font-size:12px;color:#ccc;">0</div>
<div class="t" style="left:713px;top:125px;font-size:12px;color:#ccc;">0</div>
<div class="t" style="left:792px;top:125px;font-size:12px;color:#ccc;">0</div>
<div class="t" style="left:871px;top:125px;font-size:12px;color:#ccc;">0</div>
<div class="t" style="left:949px;top:125px;font-size:12px;color:#ccc;">0</div>
<div class="t" style="left:1028px;top:125px;font-size:12px;color:#ccc;">0</div>
<div class="t" style="left:1107px;top:125px;font-size:12px;color:#ccc;">0</div>
<div class="t" style="left:1185px;top:125px;font-size:12px;color:#ccc;">0</div>
<div class="a" style="left:1255px;top:122px;width:14px;height:14px;background:#4a63e8;border-radius:2px;"></div>
<svg class="a" style="left:1255px;top:122px" width="14" height="14" viewBox="0 0 14 14"><path d="M3.2 7.2l2.5 2.5 5-5.2" fill="none" stroke="#fff" stroke-width="1.6"/></svg>
<div class="t" style="left:1293px;top:125px;font-size:12px;color:#ddd;">查看</div>
<div class="a" style="left:8px;top:176px;width:1328px;height:1px;background:#333;border-radius:0px;"></div>
<div class="t" style="left:28px;top:157px;font-size:12px;color:#ccc;">3</div>
<div class="t" style="left:67px;top:157px;font-size:12px;color:#ccc;">520YJA4B7503</div>
<div class="t" style="left:177px;top:157px;font-size:12px;color:#ccc;">8324820</div>
<div class="t" style="left:253px;top:156px;font-size:12px;color:#ccc;">三维大厦</div>
<div class="t" style="left:319px;top:157px;font-size:12px;color:#ccc;">-743829.22</div>
<div class="t" style="left:398px;top:157px;font-size:12px;color:#ccc;">535343</div>
<div class="t" style="left:476px;top:156px;font-size:12px;color:#ccc;">105</div>
<div class="t" style="left:557px;top:157px;font-size:12px;color:#ccc;">0</div>
<div class="t" style="left:635px;top:157px;font-size:12px;color:#ccc;">0</div>
<div class="t" style="left:713px;top:157px;font-size:12px;color:#ccc;">0</div>
<div class="t" style="left:792px;top:157px;font-size:12px;color:#ccc;">0</div>
<div class="t" style="left:871px;top:157px;font-size:12px;color:#ccc;">0</div>
<div class="t" style="left:949px;top:157px;font-size:12px;color:#ccc;">0</div>
<div class="t" style="left:1028px;top:157px;font-size:12px;color:#ccc;">0</div>
<div class="t" style="left:1107px;top:157px;font-size:12px;color:#ccc;">0</div>
<div class="t" style="left:1185px;top:157px;font-size:12px;color:#ccc;">0</div>
<div class="a" style="left:1255px;top:154px;width:14px;height:14px;background:#4a63e8;border-radius:2px;"></div>
<svg class="a" style="left:1255px;top:154px" width="14" height="14" viewBox="0 0 14 14"><path d="M3.2 7.2l2.5 2.5 5-5.2" fill="none" stroke="#fff" stroke-width="1.6"/></svg>
<div class="t" style="left:1293px;top:157px;font-size:12px;color:#ddd;">查看</div>
<div class="a" style="left:8px;top:208px;width:1328px;height:1px;background:#333;border-radius:0px;"></div>
<div class="t" style="left:28px;top:189px;font-size:12px;color:#ccc;">4</div>
<div class="t" style="left:67px;top:189px;font-size:12px;color:#ccc;">520YJA4B694Z</div>
<div class="t" style="left:177px;top:189px;font-size:12px;color:#ccc;">8324820</div>
<div class="t" style="left:253px;top:188px;font-size:12px;color:#ccc;">三维大厦</div>
<div class="t" style="left:319px;top:189px;font-size:12px;color:#ccc;">-743829.22</div>
<div class="t" style="left:398px;top:189px;font-size:12px;color:#ccc;">535343</div>
<div class="t" style="left:476px;top:188px;font-size:12px;color:#ccc;">105</div>
<div class="t" style="left:557px;top:189px;font-size:12px;color:#ccc;">0</div>
<div class="t" style="left:635px;top:189px;font-size:12px;color:#ccc;">0</div>
<div class="t" style="left:713px;top:189px;font-size:12px;color:#ccc;">0</div>
<div class="t" style="left:792px;top:189px;font-size:12px;color:#ccc;">0</div>
<div class="t" style="left:871px;top:189px;font-size:12px;color:#ccc;">0</div>
<div class="t" style="left:949px;top:189px;font-size:12px;color:#ccc;">0</div>
<div class="t" style="left:1028px;top:189px;font-size:12px;color:#ccc;">0</div>
<div class="t" style="left:1107px;top:189px;font-size:12px;color:#ccc;">0</div>
<div class="t" style="left:1185px;top:189px;font-size:12px;color:#ccc;">0</div>
<div class="a" style="left:1255px;top:186px;width:14px;height:14px;background:#4a63e8;border-radius:2px;"></div>
<svg class="a" style="left:1255px;top:186px" width="14" height="14" viewBox="0 0 14 14"><path d="M3.2 7.2l2.5 2.5 5-5.2" fill="none" stroke="#fff" stroke-width="1.6"/></svg>
<div class="t" style="left:1293px;top:189px;font-size:12px;color:#ddd;">查看</div>
<div class="a" style="left:8px;top:240px;width:1328px;height:1px;background:#333;border-radius:0px;"></div>
<div class="t" style="left:28px;top:221px;font-size:12px;color:#ccc;">5</div>
<div class="t" style="left:67px;top:221px;font-size:12px;color:#ccc;">520YJA4B7520</div>
<div class="t" style="left:177px;top:221px;font-size:12px;color:#ccc;">8324820</div>
<div class="t" style="left:253px;top:220px;font-size:12px;color:#ccc;">三维大厦</div>
<div class="t" style="left:319px;top:221px;font-size:12px;color:#ccc;">-743829.22</div>
<div class="t" style="left:398px;top:221px;font-size:12px;color:#ccc;">535343</div>
<div class="t" style="left:476px;top:220px;font-size:12px;color:#ccc;">105</div>
<div class="t" style="left:557px;top:221px;font-size:12px;color:#ccc;">0</div>
<div class="t" style="left:635px;top:221px;font-size:12px;color:#ccc;">0</div>
<div class="t" style="left:713px;top:221px;font-size:12px;color:#ccc;">0</div>
<div class="t" style="left:792px;top:221px;font-size:12px;color:#ccc;">0</div>
<div class="t" style="left:871px;top:221px;font-size:12px;color:#ccc;">0</div>
<div class="t" style="left:949px;top:221px;font-size:12px;color:#ccc;">0</div>
<div class="t" style="left:1028px;top:221px;font-size:12px;color:#ccc;">0</div>
<div class="t" style="left:1107px;top:221px;font-size:12px;color:#ccc;">0</div>
<div class="t" style="left:1185px;top:221px;font-size:12px;color:#ccc;">0</div>
<div class="a" style="left:1255px;top:218px;width:14px;height:14px;background:#4a63e8;border-radius:2px;"></div>
<svg class="a" style="left:1255px;top:218px" width="14" height="14" viewBox="0 0 14 14"><path d="M3.2 7.2l2.5 2.5 5-5.2" fill="none" stroke="#fff" stroke-width="1.6"/></svg>
<div class="t" style="left:1293px;top:221px;font-size:12px;color:#ddd;">查看</div></div>
<div class="a" style="left:1527px;top:12px;width:143px;height:134px;background:#1c1c1c;border-radius:6px;box-shadow:0 3px 12px rgba(0,0,0,0.45)"></div>
<div class="a" style="left:1532px;top:104px;width:133px;height:28px;background:#3a3a3a;border-radius:4px"></div>
<div class="t" style="left:1549px;top:36px;font-size:12px;color:#aaa">拓扑路径GML文件</div>
<div class="t" style="left:1549px;top:72px;font-size:12px;color:#aaa">CAD图元清单</div>
<div class="t" style="left:1549px;top:112px;font-size:12px;color:#ccc">导入模型文件</div>
<svg class="a" style="left:1074px;top:50px;filter:drop-shadow(0 2px 4px rgba(0,0,0,0.35))" width="50" height="30" viewBox="0 0 50 30"><path d="M25 0l5.5 6H46a4 4 0 0 1 4 4v15.5a4 4 0 0 1-4 4H4a4 4 0 0 1-4-4V10a4 4 0 0 1 4-4h15.5z" fill="#070707"/></svg>
<div class="t" style="left:1087px;top:61px;font-size:12px;color:#eee">删除</div>
</div></body></html>
